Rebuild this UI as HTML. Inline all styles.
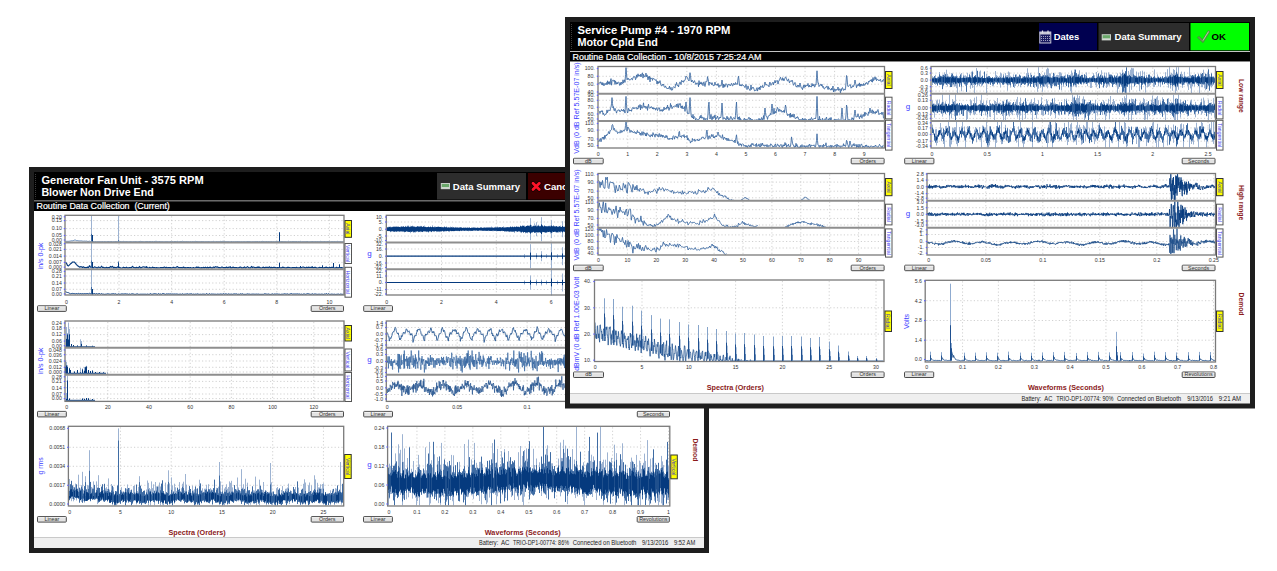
<!DOCTYPE html>
<html><head><meta charset="utf-8"><title>Vibration Data</title>
<style>html,body{margin:0;padding:0;background:#fff;width:1277px;height:571px;overflow:hidden;} svg{display:block;}</style>
</head><body><svg width="1277" height="571" viewBox="0 0 1277 571"><rect x="29" y="167" width="680" height="386" fill="#1e1e1e"/><rect x="34" y="172" width="670" height="28.5" fill="#000000"/><rect x="34" y="200.5" width="670" height="1" fill="#c4c4c4"/><rect x="34" y="201.5" width="670" height="9.5" fill="#000000"/><rect x="34" y="211" width="670" height="326" fill="#ffffff"/><rect x="34" y="537" width="670" height="1" fill="#c9c9c9"/><rect x="34" y="538" width="670" height="10" fill="#efefef"/><line x1="35.5" y1="174" x2="35.5" y2="198.5" stroke="#3c3c3c" stroke-width="1" stroke-dasharray="1,1"/><text x="41.4" y="184.3" font-family="Liberation Sans" font-size="11.1" fill="#ffffff" font-weight="bold" text-anchor="start" textLength="162.2" lengthAdjust="spacingAndGlyphs" xml:space="preserve">Generator Fan Unit - 3575 RPM</text><text x="41.4" y="196.4" font-family="Liberation Sans" font-size="11.1" fill="#ffffff" font-weight="bold" text-anchor="start" textLength="112.4" lengthAdjust="spacingAndGlyphs" xml:space="preserve">Blower Non Drive End</text><text x="36.5" y="209.3" font-family="Liberation Sans" font-size="8.9" fill="#ffffff" text-anchor="start" stroke="#ffffff" stroke-width="0.22" textLength="133.3" lengthAdjust="spacingAndGlyphs" xml:space="preserve">Routine Data Collection  (Current)</text><rect x="437" y="173" width="89" height="26.5" fill="#2d2d2d"/><rect x="440.8" y="183" width="9.2" height="6.2" fill="#c8d0c8"/><rect x="441.8" y="184" width="7.2" height="3.4" fill="#6aa86a"/><rect x="441.8" y="187.4" width="7.2" height="0.8" fill="#e8e8e8"/><text x="452.8" y="190.3" font-family="Liberation Sans" font-size="9.6" fill="#ffffff" font-weight="bold" text-anchor="start" xml:space="preserve">Data Summary</text><rect x="528" y="173" width="38" height="26.5" fill="#3b0000"/><path d="M533 183.3 L539.3 189.6 M539.3 183.3 L533 189.6" stroke="#100000" stroke-width="4.2" stroke-linecap="round"/><path d="M533 183.3 L539.3 189.6 M539.3 183.3 L533 189.6" stroke="#ff1428" stroke-width="2.8" stroke-linecap="round"/><text x="544" y="190.3" font-family="Liberation Sans" font-size="9.6" fill="#ffffff" font-weight="bold" text-anchor="start" xml:space="preserve">Cancel</text><rect x="65" y="215.3" width="279" height="79.7" fill="#ffffff"/><line x1="119" y1="216.3" x2="119" y2="294" stroke="#bdbdbd" stroke-width="0.7" stroke-dasharray="1.2,2.2"/><line x1="171.6" y1="216.3" x2="171.6" y2="294" stroke="#bdbdbd" stroke-width="0.7" stroke-dasharray="1.2,2.2"/><line x1="224.2" y1="216.3" x2="224.2" y2="294" stroke="#bdbdbd" stroke-width="0.7" stroke-dasharray="1.2,2.2"/><line x1="276.8" y1="216.3" x2="276.8" y2="294" stroke="#bdbdbd" stroke-width="0.7" stroke-dasharray="1.2,2.2"/><line x1="329.4" y1="216.3" x2="329.4" y2="294" stroke="#bdbdbd" stroke-width="0.7" stroke-dasharray="1.2,2.2"/><line x1="66" y1="220.6" x2="343" y2="220.6" stroke="#bdbdbd" stroke-width="0.7" stroke-dasharray="1.2,2.2"/><line x1="66" y1="228.6" x2="343" y2="228.6" stroke="#bdbdbd" stroke-width="0.7" stroke-dasharray="1.2,2.2"/><line x1="66" y1="235.5" x2="343" y2="235.5" stroke="#bdbdbd" stroke-width="0.7" stroke-dasharray="1.2,2.2"/><line x1="66" y1="249.4" x2="343" y2="249.4" stroke="#bdbdbd" stroke-width="0.7" stroke-dasharray="1.2,2.2"/><line x1="66" y1="256.1" x2="343" y2="256.1" stroke="#bdbdbd" stroke-width="0.7" stroke-dasharray="1.2,2.2"/><line x1="66" y1="262.4" x2="343" y2="262.4" stroke="#bdbdbd" stroke-width="0.7" stroke-dasharray="1.2,2.2"/><line x1="66" y1="276" x2="343" y2="276" stroke="#bdbdbd" stroke-width="0.7" stroke-dasharray="1.2,2.2"/><line x1="66" y1="283" x2="343" y2="283" stroke="#bdbdbd" stroke-width="0.7" stroke-dasharray="1.2,2.2"/><line x1="66" y1="289.3" x2="343" y2="289.3" stroke="#bdbdbd" stroke-width="0.7" stroke-dasharray="1.2,2.2"/><polyline points="65.5,241.7 66.5,241.3 67.5,241.3 68.5,241.3 69.5,241.2 70.5,241.0 71.5,240.8 72.5,240.8 73.5,240.5 74.5,240.1 75.5,240.1 76.5,240.6 77.5,240.6 78.5,240.8 79.5,240.9 80.5,240.9 81.5,240.9 82.5,241.1 83.5,241.2 84.5,241.1 85.5,241.2 86.5,241.1 87.5,241.4 88.5,241.4 89.5,241.2 90.5,241.5 91.5,241.7 92.5,241.6 93.5,241.5 94.5,241.8 95.5,241.6 96.5,241.8 97.5,241.7 98.5,241.7 99.5,241.7 100.5,241.7 101.5,241.7 102.5,241.6 103.5,241.8 104.5,241.6 105.5,241.7 106.5,241.8 107.5,241.6 108.5,241.5 109.5,241.7 110.5,241.6 111.5,241.5 112.5,241.8 113.5,241.7 114.5,241.7 115.5,241.5 116.5,241.6 117.5,241.7 118.5,241.7 119.5,241.6 120.5,241.5 121.5,241.7 122.5,241.7 123.5,241.4 124.5,241.7 125.5,241.7 126.5,241.6 127.5,241.7 128.5,241.8 129.5,241.7 130.5,241.6 131.5,241.7 132.5,241.8 133.5,241.7 134.5,241.7 135.5,241.6 136.5,241.7 137.5,241.8 138.5,241.7 139.5,241.5 140.5,241.4 141.5,241.5 142.5,241.6 143.5,241.7 144.5,241.8 145.5,241.6 146.5,241.5 147.5,241.5 148.5,241.7 149.5,241.5 150.5,241.5 151.5,241.7 152.5,241.5 153.5,241.8 154.5,241.5 155.5,241.4 156.5,241.4 157.5,241.7 158.5,241.7 159.5,241.5 160.5,241.7 161.5,241.7 162.5,241.7 163.5,241.8 164.5,241.8 165.5,241.7 166.5,241.7 167.5,241.7 168.5,241.8 169.5,241.8 170.5,241.5 171.5,241.7 172.5,241.6 173.5,241.8 174.5,241.5 175.5,241.5 176.5,241.7 177.5,241.4 178.5,241.8 179.5,241.7 180.5,241.5 181.5,241.5 182.5,241.3 183.5,241.6 184.5,241.7 185.5,241.7 186.5,241.6 187.5,241.7 188.5,241.7 189.5,241.8 190.5,241.6 191.5,241.8 192.5,241.6 193.5,241.7 194.5,241.7 195.5,241.4 196.5,241.5 197.5,241.6 198.5,241.7 199.5,241.7 200.5,241.7 201.5,241.5 202.5,241.6 203.5,241.6 204.5,241.8 205.5,241.7 206.5,241.7 207.5,241.7 208.5,241.6 209.5,241.7 210.5,241.8 211.5,241.7 212.5,241.7 213.5,241.4 214.5,241.8 215.5,241.8 216.5,241.6 217.5,241.7 218.5,241.7 219.5,241.7 220.5,241.4 221.5,241.6 222.5,241.4 223.5,241.4 224.5,241.6 225.5,241.7 226.5,241.7 227.5,241.7 228.5,241.7 229.5,241.8 230.5,241.8 231.5,241.5 232.5,241.8 233.5,241.7 234.5,241.8 235.5,241.7 236.5,241.7 237.5,241.6 238.5,241.7 239.5,241.7 240.5,241.8 241.5,241.7 242.5,241.8 243.5,241.7 244.5,241.7 245.5,241.8 246.5,241.7 247.5,241.5 248.5,241.6 249.5,241.6 250.5,241.7 251.5,241.8 252.5,241.7 253.5,241.7 254.5,241.7 255.5,241.6 256.5,241.6 257.5,241.5 258.5,241.8 259.5,241.6 260.5,241.8 261.5,241.5 262.5,241.4 263.5,241.5 264.5,241.7 265.5,241.7 266.5,241.5 267.5,241.7 268.5,241.6 269.5,241.7 270.5,241.7 271.5,241.6 272.5,241.8 273.5,241.7 274.5,241.8 275.5,241.7 276.5,241.6 277.5,241.6 278.5,241.7 279.5,241.6 280.5,241.7 281.5,241.5 282.5,241.6 283.5,241.7 284.5,241.7 285.5,241.7 286.5,241.8 287.5,241.8 288.5,241.3 289.5,241.8 290.5,241.6 291.5,241.7 292.5,241.5 293.5,241.5 294.5,241.6 295.5,241.6 296.5,241.5 297.5,241.8 298.5,241.6 299.5,241.7 300.5,241.4 301.5,241.8 302.5,241.7 303.5,241.7 304.5,241.7 305.5,241.7 306.5,241.6 307.5,241.5 308.5,241.8 309.5,241.8 310.5,241.7 311.5,241.6 312.5,241.5 313.5,241.7 314.5,241.7 315.5,241.6 316.5,241.7 317.5,241.6 318.5,241.7 319.5,241.7 320.5,241.4 321.5,241.6 322.5,241.7 323.5,241.7 324.5,241.5 325.5,241.7 326.5,241.7 327.5,241.5 328.5,241.6 329.5,241.7 330.5,241.8 331.5,241.6 332.5,241.6 333.5,241.7 334.5,241.6 335.5,241.7 336.5,241.7 337.5,241.4 338.5,241.7 339.5,241.7 340.5,241.7 341.5,241.8 342.5,241.8 343.5,241.7" fill="none" stroke="#3f6ca4" stroke-width="0.8" stroke-linejoin="round"/><line x1="91.5" y1="216" x2="91.5" y2="241.5" stroke="#9db3d2" stroke-width="1"/><line x1="91.5" y1="233.85" x2="91.5" y2="241.5" stroke="#3f6ca4" stroke-width="1"/><line x1="118.5" y1="216" x2="118.5" y2="241.5" stroke="#9db3d2" stroke-width="1"/><line x1="118.5" y1="240.22" x2="118.5" y2="241.5" stroke="#3f6ca4" stroke-width="1"/><line x1="279.5" y1="232" x2="279.5" y2="241.5" stroke="#3f6ca4" stroke-width="1"/><line x1="279.5" y1="232.95" x2="279.5" y2="241.5" stroke="#053a7e" stroke-width="1"/><line x1="92.5" y1="235" x2="92.5" y2="241.5" stroke="#3f6ca4" stroke-width="1"/><line x1="92.5" y1="235" x2="92.5" y2="241.5" stroke="#053a7e" stroke-width="1"/><polyline points="65.5,262.6 66.5,263.2 67.5,265.5 68.5,265.9 69.5,264.9 70.5,263.8 71.5,263.2 72.5,262.0 73.5,262.0 74.5,262.2 75.5,263.4 76.5,264.6 77.5,265.7 78.5,266.2 79.5,267.1 80.5,266.7 81.5,266.8 82.5,267.4 83.5,266.8 84.5,267.6 85.5,267.5 86.5,267.7 87.5,267.1 88.5,267.6 89.5,265.7 90.5,267.1 91.5,267.7 92.5,267.7 93.5,267.8 94.5,266.8 95.5,267.2 96.5,267.6 97.5,267.9 98.5,266.9 99.5,267.5 100.5,267.8 101.5,266.2 102.5,267.5 103.5,267.4 104.5,267.9 105.5,267.9 106.5,267.4 107.5,267.9 108.5,267.5 109.5,267.8 110.5,266.4 111.5,267.2 112.5,266.3 113.5,267.9 114.5,267.4 115.5,267.6 116.5,267.9 117.5,266.8 118.5,267.4 119.5,267.4 120.5,267.9 121.5,268.0 122.5,267.8 123.5,267.2 124.5,267.7 125.5,267.8 126.5,267.2 127.5,267.9 128.5,267.9 129.5,267.5 130.5,267.7 131.5,267.6 132.5,266.3 133.5,267.4 134.5,267.7 135.5,267.9 136.5,267.4 137.5,267.7 138.5,267.8 139.5,266.5 140.5,267.9 141.5,267.7 142.5,267.0 143.5,266.9 144.5,267.1 145.5,267.3 146.5,266.7 147.5,267.7 148.5,268.0 149.5,267.4 150.5,267.9 151.5,267.9 152.5,267.1 153.5,267.7 154.5,267.7 155.5,267.8 156.5,267.7 157.5,267.9 158.5,267.8 159.5,268.0 160.5,267.5 161.5,267.7 162.5,267.7 163.5,267.6 164.5,267.0 165.5,267.9 166.5,267.4 167.5,267.8 168.5,267.7 169.5,267.6 170.5,267.9 171.5,267.8 172.5,267.6 173.5,267.2 174.5,267.6 175.5,267.9 176.5,267.0 177.5,266.6 178.5,267.7 179.5,267.7 180.5,267.7 181.5,267.7 182.5,267.8 183.5,267.1 184.5,267.8 185.5,267.7 186.5,267.8 187.5,267.5 188.5,267.7 189.5,267.9 190.5,267.5 191.5,268.0 192.5,267.9 193.5,267.5 194.5,268.0 195.5,267.7 196.5,267.1 197.5,267.4 198.5,267.2 199.5,267.6 200.5,267.9 201.5,267.7 202.5,267.8 203.5,267.4 204.5,267.9 205.5,267.1 206.5,268.0 207.5,267.2 208.5,267.9 209.5,267.3 210.5,267.2 211.5,267.9 212.5,268.0 213.5,267.0 214.5,267.6 215.5,266.7 216.5,267.1 217.5,266.9 218.5,267.6 219.5,267.7 220.5,267.9 221.5,267.1 222.5,267.2 223.5,267.7 224.5,267.5 225.5,267.8 226.5,267.1 227.5,267.8 228.5,267.4 229.5,267.0 230.5,267.7 231.5,267.9 232.5,267.4 233.5,267.2 234.5,267.7 235.5,267.6 236.5,267.7 237.5,267.8 238.5,267.8 239.5,267.4 240.5,267.0 241.5,267.8 242.5,267.9 243.5,267.7 244.5,266.9 245.5,268.0 246.5,267.4 247.5,266.6 248.5,267.6 249.5,267.9 250.5,267.9 251.5,266.5 252.5,267.6 253.5,267.0 254.5,267.6 255.5,267.6 256.5,267.6 257.5,267.1 258.5,267.4 259.5,267.2 260.5,267.9 261.5,268.0 262.5,267.5 263.5,267.1 264.5,267.9 265.5,267.4 266.5,267.3 267.5,267.4 268.5,267.7 269.5,266.8 270.5,267.9 271.5,267.4 272.5,267.8 273.5,267.3 274.5,267.4 275.5,267.6 276.5,267.8 277.5,267.6 278.5,267.8 279.5,267.3 280.5,267.9 281.5,267.8 282.5,267.2 283.5,267.3 284.5,267.6 285.5,267.8 286.5,267.9 287.5,267.4 288.5,267.4 289.5,267.5 290.5,267.8 291.5,267.8 292.5,267.6 293.5,267.6 294.5,267.5 295.5,267.9 296.5,267.4 297.5,267.8 298.5,267.9 299.5,267.7 300.5,268.0 301.5,267.5 302.5,267.2 303.5,267.1 304.5,267.5 305.5,267.9 306.5,267.2 307.5,267.6 308.5,267.2 309.5,267.4 310.5,267.5 311.5,267.1 312.5,267.5 313.5,267.7 314.5,267.4 315.5,267.3 316.5,267.9 317.5,268.0 318.5,267.7 319.5,267.4 320.5,267.5 321.5,267.5 322.5,267.7 323.5,267.8 324.5,267.7 325.5,267.4 326.5,267.2 327.5,267.7 328.5,267.9 329.5,267.2 330.5,267.7 331.5,267.4 332.5,267.3 333.5,267.4 334.5,268.0 335.5,267.9 336.5,267.4 337.5,267.8 338.5,267.8 339.5,267.2 340.5,267.8 341.5,267.6 342.5,268.0 343.5,267.6" fill="none" stroke="#053a7e" stroke-width="1.2" stroke-linejoin="round"/><line x1="91.5" y1="243" x2="91.5" y2="268" stroke="#9db3d2" stroke-width="1"/><line x1="91.5" y1="260.5" x2="91.5" y2="268" stroke="#3f6ca4" stroke-width="1"/><line x1="92.5" y1="262" x2="92.5" y2="268" stroke="#3f6ca4" stroke-width="1"/><line x1="92.5" y1="262" x2="92.5" y2="268" stroke="#053a7e" stroke-width="1"/><line x1="118.5" y1="261.5" x2="118.5" y2="268" stroke="#3f6ca4" stroke-width="1"/><line x1="118.5" y1="262.8" x2="118.5" y2="268" stroke="#053a7e" stroke-width="1"/><line x1="279.5" y1="262.5" x2="279.5" y2="268" stroke="#3f6ca4" stroke-width="1"/><line x1="279.5" y1="263.05" x2="279.5" y2="268" stroke="#053a7e" stroke-width="1"/><line x1="333.5" y1="263" x2="333.5" y2="268" stroke="#3f6ca4" stroke-width="1"/><line x1="333.5" y1="263" x2="333.5" y2="268" stroke="#053a7e" stroke-width="1"/><line x1="300.5" y1="266" x2="300.5" y2="268" stroke="#3f6ca4" stroke-width="1"/><line x1="300.5" y1="266" x2="300.5" y2="268" stroke="#053a7e" stroke-width="1"/><line x1="312.5" y1="266.5" x2="312.5" y2="268" stroke="#3f6ca4" stroke-width="1"/><line x1="312.5" y1="266.5" x2="312.5" y2="268" stroke="#053a7e" stroke-width="1"/><line x1="322.5" y1="265.5" x2="322.5" y2="268" stroke="#3f6ca4" stroke-width="1"/><line x1="322.5" y1="265.5" x2="322.5" y2="268" stroke="#053a7e" stroke-width="1"/><line x1="339.5" y1="264.5" x2="339.5" y2="268" stroke="#3f6ca4" stroke-width="1"/><line x1="339.5" y1="264.5" x2="339.5" y2="268" stroke="#053a7e" stroke-width="1"/><line x1="146.5" y1="266.5" x2="146.5" y2="268" stroke="#3f6ca4" stroke-width="1"/><line x1="146.5" y1="266.5" x2="146.5" y2="268" stroke="#053a7e" stroke-width="1"/><line x1="170.5" y1="267" x2="170.5" y2="268" stroke="#3f6ca4" stroke-width="1"/><line x1="170.5" y1="267" x2="170.5" y2="268" stroke="#053a7e" stroke-width="1"/><line x1="230.5" y1="266.5" x2="230.5" y2="268" stroke="#3f6ca4" stroke-width="1"/><line x1="230.5" y1="266.5" x2="230.5" y2="268" stroke="#053a7e" stroke-width="1"/><line x1="258.5" y1="266.8" x2="258.5" y2="268" stroke="#3f6ca4" stroke-width="1"/><line x1="258.5" y1="266.8" x2="258.5" y2="268" stroke="#053a7e" stroke-width="1"/><polyline points="65.5,291.6 66.5,292.2 67.5,292.5 68.5,292.7 69.5,293.3 70.5,293.8 71.5,293.5 72.5,293.4 73.5,293.5 74.5,293.6 75.5,293.8 76.5,293.5 77.5,293.8 78.5,293.4 79.5,293.8 80.5,293.5 81.5,293.8 82.5,293.6 83.5,293.8 84.5,293.6 85.5,293.7 86.5,293.6 87.5,293.5 88.5,293.8 89.5,293.3 90.5,293.7 91.5,293.5 92.5,293.7 93.5,293.7 94.5,293.5 95.5,294.0 96.5,293.6 97.5,294.0 98.5,293.7 99.5,293.5 100.5,294.2 101.5,293.6 102.5,294.1 103.5,294.1 104.5,294.3 105.5,294.2 106.5,294.1 107.5,293.8 108.5,293.9 109.5,294.1 110.5,294.2 111.5,293.9 112.5,293.8 113.5,293.7 114.5,294.0 115.5,293.8 116.5,294.3 117.5,294.3 118.5,293.9 119.5,294.2 120.5,294.2 121.5,293.9 122.5,293.9 123.5,294.0 124.5,293.9 125.5,293.8 126.5,294.0 127.5,294.0 128.5,294.3 129.5,294.0 130.5,294.3 131.5,293.9 132.5,293.8 133.5,294.0 134.5,294.3 135.5,294.3 136.5,294.0 137.5,293.9 138.5,294.3 139.5,294.3 140.5,294.2 141.5,294.2 142.5,294.2 143.5,294.2 144.5,294.2 145.5,294.2 146.5,294.3 147.5,294.1 148.5,294.3 149.5,294.2 150.5,293.6 151.5,294.2 152.5,294.2 153.5,293.9 154.5,293.7 155.5,293.8 156.5,294.0 157.5,294.3 158.5,293.6 159.5,294.2 160.5,294.0 161.5,294.3 162.5,293.6 163.5,293.6 164.5,294.0 165.5,294.3 166.5,293.9 167.5,294.0 168.5,293.9 169.5,294.0 170.5,293.9 171.5,294.1 172.5,294.0 173.5,294.1 174.5,294.0 175.5,294.1 176.5,294.0 177.5,294.1 178.5,294.3 179.5,294.2 180.5,294.1 181.5,294.3 182.5,293.8 183.5,294.3 184.5,294.2 185.5,294.1 186.5,294.0 187.5,293.8 188.5,294.2 189.5,294.0 190.5,293.9 191.5,293.8 192.5,294.3 193.5,294.1 194.5,294.3 195.5,294.1 196.5,294.2 197.5,293.9 198.5,294.2 199.5,294.3 200.5,294.2 201.5,294.3 202.5,294.1 203.5,294.1 204.5,294.2 205.5,294.3 206.5,293.6 207.5,294.2 208.5,294.3 209.5,293.7 210.5,294.3 211.5,294.0 212.5,294.1 213.5,294.1 214.5,294.2 215.5,294.2 216.5,294.3 217.5,294.1 218.5,294.2 219.5,294.2 220.5,294.0 221.5,294.1 222.5,294.2 223.5,293.7 224.5,294.2 225.5,293.9 226.5,294.0 227.5,294.3 228.5,293.9 229.5,294.2 230.5,294.2 231.5,294.1 232.5,294.3 233.5,294.0 234.5,293.9 235.5,294.0 236.5,293.9 237.5,294.3 238.5,294.2 239.5,294.3 240.5,293.8 241.5,294.1 242.5,293.8 243.5,294.3 244.5,294.3 245.5,294.3 246.5,294.2 247.5,293.9 248.5,294.1 249.5,294.1 250.5,294.3 251.5,294.2 252.5,294.1 253.5,294.1 254.5,294.2 255.5,294.2 256.5,294.1 257.5,294.2 258.5,294.1 259.5,294.3 260.5,294.3 261.5,294.3 262.5,294.3 263.5,294.3 264.5,293.8 265.5,293.9 266.5,294.1 267.5,294.2 268.5,294.0 269.5,294.3 270.5,294.4 271.5,294.2 272.5,293.9 273.5,294.3 274.5,294.0 275.5,294.1 276.5,294.0 277.5,294.0 278.5,294.2 279.5,294.2 280.5,294.4 281.5,294.2 282.5,294.2 283.5,294.1 284.5,293.8 285.5,294.0 286.5,294.1 287.5,293.9 288.5,294.3 289.5,294.2 290.5,293.8 291.5,293.6 292.5,294.1 293.5,294.0 294.5,294.0 295.5,294.0 296.5,294.0 297.5,293.9 298.5,294.1 299.5,294.0 300.5,294.3 301.5,294.1 302.5,294.4 303.5,294.0 304.5,294.0 305.5,294.3 306.5,294.0 307.5,293.7 308.5,293.8 309.5,294.1 310.5,294.3 311.5,294.2 312.5,293.8 313.5,294.3 314.5,294.0 315.5,294.0 316.5,294.2 317.5,294.3 318.5,294.2 319.5,294.2 320.5,294.3 321.5,294.1 322.5,294.2 323.5,294.4 324.5,294.0 325.5,294.1 326.5,293.6 327.5,294.3 328.5,293.7 329.5,294.3 330.5,294.3 331.5,294.1 332.5,294.2 333.5,294.3 334.5,294.2 335.5,294.4 336.5,294.3 337.5,294.2 338.5,294.1 339.5,294.4 340.5,294.1 341.5,294.2 342.5,294.3 343.5,294.2" fill="none" stroke="#053a7e" stroke-width="1" stroke-linejoin="round"/><line x1="91.5" y1="270" x2="91.5" y2="294.3" stroke="#9db3d2" stroke-width="1"/><line x1="91.5" y1="287.01" x2="91.5" y2="294.3" stroke="#3f6ca4" stroke-width="1"/><line x1="92.5" y1="289" x2="92.5" y2="294.3" stroke="#3f6ca4" stroke-width="1"/><line x1="92.5" y1="289" x2="92.5" y2="294.3" stroke="#053a7e" stroke-width="1"/><rect x="65" y="215.3" width="279" height="79.7" fill="none" stroke="#7a7a7a" stroke-width="1.3"/><line x1="65" y1="242.4" x2="344" y2="242.4" stroke="#8e8e8e" stroke-width="2"/><line x1="65" y1="269.3" x2="344" y2="269.3" stroke="#8e8e8e" stroke-width="2"/><text x="61.8" y="218.6" font-family="Liberation Sans" font-size="5.2" fill="#333" text-anchor="end" xml:space="preserve">0.20</text><rect x="63.8" y="216.2" width="1.4" height="1.2" fill="#6060ff"/><text x="61.8" y="222.4" font-family="Liberation Sans" font-size="5.2" fill="#333" text-anchor="end" xml:space="preserve">0.15</text><rect x="63.8" y="220" width="1.4" height="1.2" fill="#6060ff"/><text x="61.8" y="230.4" font-family="Liberation Sans" font-size="5.2" fill="#333" text-anchor="end" xml:space="preserve">0.10</text><rect x="63.8" y="228" width="1.4" height="1.2" fill="#6060ff"/><text x="61.8" y="237.3" font-family="Liberation Sans" font-size="5.2" fill="#333" text-anchor="end" xml:space="preserve">0.05</text><rect x="63.8" y="234.9" width="1.4" height="1.2" fill="#6060ff"/><text x="61.8" y="241.8" font-family="Liberation Sans" font-size="5.2" fill="#333" text-anchor="end" xml:space="preserve">0.00</text><rect x="63.8" y="239.4" width="1.4" height="1.2" fill="#6060ff"/><text x="61.8" y="245.5" font-family="Liberation Sans" font-size="5.2" fill="#333" text-anchor="end" xml:space="preserve">0.028</text><rect x="63.8" y="243.1" width="1.4" height="1.2" fill="#6060ff"/><text x="61.8" y="251.2" font-family="Liberation Sans" font-size="5.2" fill="#333" text-anchor="end" xml:space="preserve">0.021</text><rect x="63.8" y="248.8" width="1.4" height="1.2" fill="#6060ff"/><text x="61.8" y="257.9" font-family="Liberation Sans" font-size="5.2" fill="#333" text-anchor="end" xml:space="preserve">0.014</text><rect x="63.8" y="255.5" width="1.4" height="1.2" fill="#6060ff"/><text x="61.8" y="264.2" font-family="Liberation Sans" font-size="5.2" fill="#333" text-anchor="end" xml:space="preserve">0.007</text><rect x="63.8" y="261.8" width="1.4" height="1.2" fill="#6060ff"/><text x="61.8" y="269" font-family="Liberation Sans" font-size="5.2" fill="#333" text-anchor="end" xml:space="preserve">0.000</text><rect x="63.8" y="266.6" width="1.4" height="1.2" fill="#6060ff"/><text x="61.8" y="273.2" font-family="Liberation Sans" font-size="5.2" fill="#333" text-anchor="end" xml:space="preserve">0.28</text><rect x="63.8" y="270.8" width="1.4" height="1.2" fill="#6060ff"/><text x="61.8" y="277.8" font-family="Liberation Sans" font-size="5.2" fill="#333" text-anchor="end" xml:space="preserve">0.21</text><rect x="63.8" y="275.4" width="1.4" height="1.2" fill="#6060ff"/><text x="61.8" y="284.8" font-family="Liberation Sans" font-size="5.2" fill="#333" text-anchor="end" xml:space="preserve">0.14</text><rect x="63.8" y="282.4" width="1.4" height="1.2" fill="#6060ff"/><text x="61.8" y="291.1" font-family="Liberation Sans" font-size="5.2" fill="#333" text-anchor="end" xml:space="preserve">0.07</text><rect x="63.8" y="288.7" width="1.4" height="1.2" fill="#6060ff"/><text x="61.8" y="295.7" font-family="Liberation Sans" font-size="5.2" fill="#333" text-anchor="end" xml:space="preserve">0.00</text><rect x="63.8" y="293.3" width="1.4" height="1.2" fill="#6060ff"/><text x="66.4" y="303.8" font-family="Liberation Sans" font-size="5.2" fill="#333" text-anchor="middle" xml:space="preserve">0</text><text x="119" y="303.8" font-family="Liberation Sans" font-size="5.2" fill="#333" text-anchor="middle" xml:space="preserve">2</text><text x="171.6" y="303.8" font-family="Liberation Sans" font-size="5.2" fill="#333" text-anchor="middle" xml:space="preserve">4</text><text x="224.2" y="303.8" font-family="Liberation Sans" font-size="5.2" fill="#333" text-anchor="middle" xml:space="preserve">6</text><text x="276.8" y="303.8" font-family="Liberation Sans" font-size="5.2" fill="#333" text-anchor="middle" xml:space="preserve">8</text><text x="329.4" y="303.8" font-family="Liberation Sans" font-size="5.2" fill="#333" text-anchor="middle" xml:space="preserve">10</text><rect x="345" y="220.5" width="6.5" height="16.8" fill="#ffff00" stroke="#333" stroke-width="1"/><text x="346.35" y="228.9" font-family="Liberation Sans" font-size="5.2" fill="#2828c8" text-anchor="middle" transform="rotate(90 346.35 228.9)" xml:space="preserve">Axial</text><rect x="345" y="243.5" width="6.5" height="20" fill="#ffffff" stroke="#555" stroke-width="1"/><text x="346.35" y="253.5" font-family="Liberation Sans" font-size="5.2" fill="#3c3cf0" text-anchor="middle" transform="rotate(90 346.35 253.5)" xml:space="preserve">Vertical</text><rect x="345" y="267.3" width="6.5" height="29.9" fill="#ffffff" stroke="#555" stroke-width="1"/><text x="346.35" y="282.25" font-family="Liberation Sans" font-size="5.2" fill="#3c3cf0" text-anchor="middle" transform="rotate(90 346.35 282.25)" xml:space="preserve">Horizontal</text><rect x="37.5" y="305.8" width="28.8" height="5.6" fill="#e2e2e2" stroke="#4a4a4a" stroke-width="1" rx="0.7"/><line x1="38.2" y1="306.8" x2="65.6" y2="306.8" stroke="#f8f8f8" stroke-width="0.8"/><text x="51.9" y="310.3" font-family="Liberation Sans" font-size="5.4" fill="#333" text-anchor="middle" xml:space="preserve">Linear</text><rect x="311.2" y="305.8" width="32.3" height="5.6" fill="#e2e2e2" stroke="#4a4a4a" stroke-width="1" rx="0.7"/><line x1="311.9" y1="306.8" x2="342.8" y2="306.8" stroke="#f8f8f8" stroke-width="0.8"/><text x="327.35" y="310.3" font-family="Liberation Sans" font-size="5.4" fill="#333" text-anchor="middle" xml:space="preserve">Orders</text><text x="42.6" y="256" font-family="Liberation Sans" font-size="7.3" fill="#3c3cff" text-anchor="middle" transform="rotate(-90 42.6 256)" textLength="26.8" lengthAdjust="spacingAndGlyphs" xml:space="preserve">in/s 0-pk</text><rect x="386.3" y="215.3" width="283.7" height="79.7" fill="#ffffff"/><line x1="441.5" y1="216.3" x2="441.5" y2="294" stroke="#bdbdbd" stroke-width="0.7" stroke-dasharray="1.2,2.2"/><line x1="496.3" y1="216.3" x2="496.3" y2="294" stroke="#bdbdbd" stroke-width="0.7" stroke-dasharray="1.2,2.2"/><line x1="551.1" y1="216.3" x2="551.1" y2="294" stroke="#bdbdbd" stroke-width="0.7" stroke-dasharray="1.2,2.2"/><line x1="605.9" y1="216.3" x2="605.9" y2="294" stroke="#bdbdbd" stroke-width="0.7" stroke-dasharray="1.2,2.2"/><line x1="660.7" y1="216.3" x2="660.7" y2="294" stroke="#bdbdbd" stroke-width="0.7" stroke-dasharray="1.2,2.2"/><line x1="387.3" y1="222" x2="669" y2="222" stroke="#bdbdbd" stroke-width="0.7" stroke-dasharray="1.2,2.2"/><line x1="387.3" y1="229.2" x2="669" y2="229.2" stroke="#bdbdbd" stroke-width="0.7" stroke-dasharray="1.2,2.2"/><line x1="387.3" y1="236" x2="669" y2="236" stroke="#bdbdbd" stroke-width="0.7" stroke-dasharray="1.2,2.2"/><line x1="387.3" y1="249" x2="669" y2="249" stroke="#bdbdbd" stroke-width="0.7" stroke-dasharray="1.2,2.2"/><line x1="387.3" y1="256.2" x2="669" y2="256.2" stroke="#bdbdbd" stroke-width="0.7" stroke-dasharray="1.2,2.2"/><line x1="387.3" y1="263" x2="669" y2="263" stroke="#bdbdbd" stroke-width="0.7" stroke-dasharray="1.2,2.2"/><line x1="387.3" y1="276" x2="669" y2="276" stroke="#bdbdbd" stroke-width="0.7" stroke-dasharray="1.2,2.2"/><line x1="387.3" y1="282.5" x2="669" y2="282.5" stroke="#bdbdbd" stroke-width="0.7" stroke-dasharray="1.2,2.2"/><line x1="387.3" y1="289.5" x2="669" y2="289.5" stroke="#bdbdbd" stroke-width="0.7" stroke-dasharray="1.2,2.2"/><path d="M387.5 227.3V231.1M388.5 226.7V231.2M389.5 226.9V231.3M390.5 226.4V232.2M391.5 226.9V231.7M392.5 226.7V231.3M393.5 226.6V231.6M394.5 226.6V232M395.5 226.4V231.4M396.5 226.4V231.7M397.5 226.7V231.7M398.5 226.4V231.4M399.5 226.9V231.7M400.5 226.5V231.5M401.5 226V231.5M402.5 226.6V231.9M403.5 226V231.7M404.5 226.8V232.4M405.5 225.9V231.8M406.5 226.4V231.4M407.5 225.6V231.9M408.5 225.5V231.8M409.5 226.5V232M410.5 225.8V233.2M411.5 226.4V232M412.5 225.6V231.6M413.5 226.6V232.8M414.5 226V232.5M415.5 226.6V232.6M416.5 226.4V231.9M417.5 226.1V231.3M418.5 226.5V232.2M419.5 226.2V231.8M420.5 225.9V232.2M421.5 225.9V231.8M422.5 226.9V232.1M423.5 226V231.3M424.5 225.6V231.3M425.5 226.6V231.6M426.5 227.1V232.1M427.5 227V231.7M428.5 226.6V232.7M429.5 227.2V231.5M430.5 226.3V231.4M431.5 227.1V232.2M432.5 225.3V231.3M433.5 227V231.5M434.5 226.3V231.5M435.5 226.5V231.3M436.5 226.9V232.1M437.5 226.8V231.6M438.5 226.4V231.5M439.5 226.8V232.1M440.5 226.9V231.6M441.5 227.1V231.4M442.5 227V231.2M443.5 227.3V231.7M444.5 226.1V231.4M445.5 227.2V231.5M446.5 226.4V231.5M447.5 227.6V231M448.5 227.1V231.4M449.5 227.5V232.1M450.5 226.6V231.1M451.5 227.3V231.2M452.5 226.7V231.2M453.5 227.2V231.1M454.5 227.7V231.2M455.5 226.9V230.8M456.5 227.6V231M457.5 227.4V231.1M458.5 227.5V231.1M459.5 227.5V231.3M460.5 227.1V230.7M461.5 227.5V231.1M462.5 227.9V230.8M463.5 227.7V231M464.5 227.7V230.9M465.5 227.6V230.9M466.5 227.4V230.7M467.5 227.5V230.8M468.5 227.8V231.3M469.5 227.5V230.9M470.5 228V231.1M471.5 227.4V230.8M472.5 227.5V230.8M473.5 227.3V230.8M474.5 227.5V230.7M475.5 227.2V230.9M476.5 227.8V230.6M477.5 227.6V231M478.5 227.7V230.8M479.5 227.9V230.5M480.5 227.4V230.8M481.5 227.2V230.7M482.5 227.8V230.9M483.5 227.5V231M484.5 227.5V231M485.5 227.2V231M486.5 227.6V231M487.5 227.5V230.9M488.5 227.5V231.1M489.5 227.4V230.9M490.5 227.5V230.9M491.5 226.5V231M492.5 227.5V231.2M493.5 227.7V231.2M494.5 227.4V230.9M495.5 226.7V230.9M496.5 227.4V231.4M497.5 226.5V231.2M498.5 227.5V231.1M499.5 227.1V231.1M500.5 227.3V231.3M501.5 227.5V230.9M502.5 227.1V231.2M503.5 226.3V231M504.5 227.4V231.4M505.5 227.4V231.5M506.5 227.1V231.6M507.5 227.2V231.4M508.5 227.3V231.4M509.5 227V232.1M510.5 226V231.6M511.5 226.9V231.7M512.5 226.3V231.6M513.5 226.9V231.8M514.5 226.4V233M515.5 226.8V231.3M516.5 226V232.1M517.5 226.7V231.8M518.5 226.8V231.4M519.5 226.8V231.6M520.5 225.4V232.6M521.5 226.1V233.1M522.5 225.1V232M523.5 225.4V232.8M524.5 225.5V232.1M525.5 226.6V233.4M526.5 225.9V232.7M527.5 225.3V233.3M528.5 225.7V232.1M529.5 225.2V232.7M530.5 225.2V233.7M531.5 225V232.9M532.5 226.1V233M533.5 225.5V232.1M534.5 223.4V232.9M535.5 224.9V232.9M536.5 226.1V232.3M537.5 225.4V232.5M538.5 224.7V232.5M539.5 225.8V232.7M540.5 225.8V232.7M541.5 226V233.8M542.5 225V232.5M543.5 226.5V232.2M544.5 225V232.8M545.5 226V232.7M546.5 226.2V232.8M547.5 226V232.4M548.5 225.8V232.1M549.5 225.7V232.1M550.5 225.5V233.5M551.5 226.2V232.8M552.5 226.3V232.7M553.5 225.1V232M554.5 226.4V231.9M555.5 226.2V232.3M556.5 226.1V232.8M557.5 226.5V232.6M558.5 225.9V232.7M559.5 226.2V232.3M560.5 225.6V232.8M561.5 226.8V231.9M562.5 226.7V231.9M563.5 226.8V231.6M564.5 226.6V232.2M565.5 226.3V232" stroke="#9db3d2" stroke-width="1" fill="none"/><path d="M387.5 227.4V231M388.5 227.3V231M389.5 226.9V231M390.5 227.2V231.5M391.5 227.3V231.2M392.5 227.1V231.2M393.5 226.8V231.5M394.5 226.8V231.6M395.5 226.9V231.4M396.5 226.8V231.6M397.5 226.8V231.2M398.5 226.9V231.3M399.5 227V231.5M400.5 227.2V231.3M401.5 226.8V231.3M402.5 226.8V231.3M403.5 226.6V231.4M404.5 227V231.8M405.5 226.6V231.8M406.5 227V231.3M407.5 226.5V231.5M408.5 226.5V231.8M409.5 227.1V231.9M410.5 226.9V231.7M411.5 226.4V231.8M412.5 226.4V231.4M413.5 226.6V231.8M414.5 227V231.9M415.5 227.1V231.6M416.5 227V231.4M417.5 226.4V231.3M418.5 226.6V231.7M419.5 226.8V231.7M420.5 226.6V231.3M421.5 226.5V231.6M422.5 226.9V231.9M423.5 226.5V231.3M424.5 227V231.3M425.5 227V231.3M426.5 227.2V231.5M427.5 227.1V231.5M428.5 226.8V231.8M429.5 227.2V231.2M430.5 226.9V231.3M431.5 227.2V231.8M432.5 226.8V231.1M433.5 227.2V231.3M434.5 227.2V231.3M435.5 227.2V231M436.5 227V231.2M437.5 226.9V231.4M438.5 226.9V231.4M439.5 227V231.3M440.5 227V231.3M441.5 227.2V231.3M442.5 227.3V230.9M443.5 227.4V231.3M444.5 227.1V231.2M445.5 227.3V230.9M446.5 227.2V231M447.5 227.6V230.9M448.5 227.5V231.2M449.5 227.6V230.9M450.5 227.5V230.8M451.5 227.3V231.1M452.5 227.6V231M453.5 227.4V231.1M454.5 227.7V231M455.5 227.6V230.8M456.5 227.6V230.8M457.5 227.6V230.8M458.5 227.8V230.8M459.5 227.6V231M460.5 227.5V230.6M461.5 227.6V230.8M462.5 227.9V230.5M463.5 227.7V230.5M464.5 227.8V230.8M465.5 227.7V230.5M466.5 228V230.6M467.5 227.7V230.8M468.5 227.8V230.7M469.5 227.6V230.6M470.5 228V230.7M471.5 227.9V230.8M472.5 227.8V230.8M473.5 227.7V230.4M474.5 227.7V230.4M475.5 228V230.5M476.5 227.9V230.4M477.5 227.7V230.7M478.5 227.9V230.7M479.5 227.9V230.4M480.5 227.6V230.4M481.5 227.7V230.5M482.5 227.9V230.7M483.5 227.8V230.7M484.5 227.6V230.6M485.5 227.9V230.7M486.5 227.6V230.8M487.5 227.6V230.8M488.5 227.6V230.5M489.5 227.6V230.8M490.5 227.6V230.9M491.5 227.6V230.9M492.5 227.6V230.7M493.5 227.8V230.6M494.5 227.6V230.8M495.5 227.5V230.8M496.5 227.5V230.8M497.5 227.4V231M498.5 227.5V231M499.5 227.3V231M500.5 227.3V231M501.5 227.6V230.8M502.5 227.2V230.8M503.5 227.5V231M504.5 227.6V231.3M505.5 227.5V231.2M506.5 227.4V231.3M507.5 227.2V231.2M508.5 227.3V231.4M509.5 227.4V231.5M510.5 227V231.4M511.5 227.2V231.5M512.5 226.9V231.6M513.5 227.2V231.5M514.5 226.9V231.5M515.5 227.1V231.1M516.5 226.8V231.1M517.5 226.9V231.7M518.5 226.8V231.3M519.5 227.2V231.3M520.5 226.1V231.7M521.5 226.5V232.2M522.5 226.1V231.7M523.5 226V232.4M524.5 226.6V232M525.5 226.7V232.4M526.5 226V232.5M527.5 225.8V232.4M528.5 225.8V232.1M529.5 226.2V232.3M530.5 225.9V232.5M531.5 226.6V232.4M532.5 226.6V232M533.5 226.1V231.8M534.5 226.1V232.6M535.5 225.9V232.4M536.5 226.4V231.8M537.5 226.2V232.3M538.5 225.7V232.3M539.5 226.4V232M540.5 226.3V232.6M541.5 226.1V232M542.5 225.8V231.9M543.5 226.5V232M544.5 226.1V232M545.5 226.3V232.5M546.5 226.4V232.3M547.5 226.5V231.8M548.5 226.3V232M549.5 226.3V231.7M550.5 226.5V232.2M551.5 226.4V232.3M552.5 226.3V231.6M553.5 226.2V232M554.5 226.4V231.7M555.5 226.6V231.7M556.5 226.2V232.1M557.5 226.8V232.2M558.5 227V231.6M559.5 226.3V231.8M560.5 226.8V231.6M561.5 227V231.4M562.5 226.8V231.7M563.5 226.9V231.4M564.5 226.9V231.7M565.5 226.6V231.7" stroke="#053a7e" stroke-width="1" fill="none"/><line x1="530.5" y1="218.2" x2="530.5" y2="240.2" stroke="#9db3d2" stroke-width="1"/><line x1="530.5" y1="224.8" x2="530.5" y2="233.6" stroke="#053a7e" stroke-width="1"/><line x1="536.5" y1="222.2" x2="536.5" y2="236.2" stroke="#9db3d2" stroke-width="1"/><line x1="536.5" y1="226.4" x2="536.5" y2="232" stroke="#053a7e" stroke-width="1"/><line x1="541.5" y1="217.2" x2="541.5" y2="241.2" stroke="#9db3d2" stroke-width="1"/><line x1="541.5" y1="224.4" x2="541.5" y2="234" stroke="#053a7e" stroke-width="1"/><line x1="551.5" y1="220.2" x2="551.5" y2="238.2" stroke="#9db3d2" stroke-width="1"/><line x1="551.5" y1="225.6" x2="551.5" y2="232.8" stroke="#053a7e" stroke-width="1"/><line x1="562.5" y1="221.2" x2="562.5" y2="237.2" stroke="#9db3d2" stroke-width="1"/><line x1="562.5" y1="226" x2="562.5" y2="232.4" stroke="#053a7e" stroke-width="1"/><line x1="386.3" y1="256.2" x2="566" y2="256.2" stroke="#053a7e" stroke-width="1.2"/><line x1="386.3" y1="282.5" x2="566" y2="282.5" stroke="#053a7e" stroke-width="1.2"/><line x1="524.5" y1="254.2" x2="524.5" y2="258.2" stroke="#9db3d2" stroke-width="1"/><line x1="524.5" y1="255.6" x2="524.5" y2="256.8" stroke="#053a7e" stroke-width="1"/><line x1="530.5" y1="244.2" x2="530.5" y2="268.2" stroke="#9db3d2" stroke-width="1"/><line x1="530.5" y1="252.6" x2="530.5" y2="259.8" stroke="#053a7e" stroke-width="1"/><line x1="536.5" y1="253.2" x2="536.5" y2="259.2" stroke="#9db3d2" stroke-width="1"/><line x1="536.5" y1="255.3" x2="536.5" y2="257.1" stroke="#053a7e" stroke-width="1"/><line x1="541.5" y1="251.2" x2="541.5" y2="261.2" stroke="#9db3d2" stroke-width="1"/><line x1="541.5" y1="254.7" x2="541.5" y2="257.7" stroke="#053a7e" stroke-width="1"/><line x1="546.5" y1="254.2" x2="546.5" y2="258.2" stroke="#9db3d2" stroke-width="1"/><line x1="546.5" y1="255.6" x2="546.5" y2="256.8" stroke="#053a7e" stroke-width="1"/><line x1="551.5" y1="243.2" x2="551.5" y2="269.2" stroke="#9db3d2" stroke-width="1"/><line x1="551.5" y1="252.3" x2="551.5" y2="260.1" stroke="#053a7e" stroke-width="1"/><line x1="557.5" y1="254.2" x2="557.5" y2="258.2" stroke="#9db3d2" stroke-width="1"/><line x1="557.5" y1="255.6" x2="557.5" y2="256.8" stroke="#053a7e" stroke-width="1"/><line x1="562.5" y1="247.2" x2="562.5" y2="265.2" stroke="#9db3d2" stroke-width="1"/><line x1="562.5" y1="253.5" x2="562.5" y2="258.9" stroke="#053a7e" stroke-width="1"/><line x1="524.5" y1="280.5" x2="524.5" y2="284.5" stroke="#9db3d2" stroke-width="1"/><line x1="524.5" y1="281.9" x2="524.5" y2="283.1" stroke="#053a7e" stroke-width="1"/><line x1="530.5" y1="275.5" x2="530.5" y2="289.5" stroke="#9db3d2" stroke-width="1"/><line x1="530.5" y1="280.4" x2="530.5" y2="284.6" stroke="#053a7e" stroke-width="1"/><line x1="536.5" y1="279.5" x2="536.5" y2="285.5" stroke="#9db3d2" stroke-width="1"/><line x1="536.5" y1="281.6" x2="536.5" y2="283.4" stroke="#053a7e" stroke-width="1"/><line x1="541.5" y1="279.5" x2="541.5" y2="285.5" stroke="#9db3d2" stroke-width="1"/><line x1="541.5" y1="281.6" x2="541.5" y2="283.4" stroke="#053a7e" stroke-width="1"/><line x1="546.5" y1="280.5" x2="546.5" y2="284.5" stroke="#9db3d2" stroke-width="1"/><line x1="546.5" y1="281.9" x2="546.5" y2="283.1" stroke="#053a7e" stroke-width="1"/><line x1="551.5" y1="269.5" x2="551.5" y2="295.5" stroke="#9db3d2" stroke-width="1"/><line x1="551.5" y1="278.6" x2="551.5" y2="286.4" stroke="#053a7e" stroke-width="1"/><line x1="557.5" y1="280.5" x2="557.5" y2="284.5" stroke="#9db3d2" stroke-width="1"/><line x1="557.5" y1="281.9" x2="557.5" y2="283.1" stroke="#053a7e" stroke-width="1"/><line x1="562.5" y1="273.5" x2="562.5" y2="291.5" stroke="#9db3d2" stroke-width="1"/><line x1="562.5" y1="279.8" x2="562.5" y2="285.2" stroke="#053a7e" stroke-width="1"/><rect x="386.3" y="215.3" width="283.7" height="79.7" fill="none" stroke="#7a7a7a" stroke-width="1.3"/><line x1="386.3" y1="242.4" x2="670" y2="242.4" stroke="#8e8e8e" stroke-width="2"/><line x1="386.3" y1="269.3" x2="670" y2="269.3" stroke="#8e8e8e" stroke-width="2"/><text x="383.1" y="218.8" font-family="Liberation Sans" font-size="5.2" fill="#333" text-anchor="end" xml:space="preserve">10.</text><rect x="385.1" y="216.4" width="1.4" height="1.2" fill="#6060ff"/><text x="383.1" y="223.8" font-family="Liberation Sans" font-size="5.2" fill="#333" text-anchor="end" xml:space="preserve">5.</text><rect x="385.1" y="221.4" width="1.4" height="1.2" fill="#6060ff"/><text x="383.1" y="231" font-family="Liberation Sans" font-size="5.2" fill="#333" text-anchor="end" xml:space="preserve">0.</text><rect x="385.1" y="228.6" width="1.4" height="1.2" fill="#6060ff"/><text x="383.1" y="237.8" font-family="Liberation Sans" font-size="5.2" fill="#333" text-anchor="end" xml:space="preserve">-5.</text><rect x="385.1" y="235.4" width="1.4" height="1.2" fill="#6060ff"/><text x="383.1" y="242.3" font-family="Liberation Sans" font-size="5.2" fill="#333" text-anchor="end" xml:space="preserve">-10.</text><rect x="385.1" y="239.9" width="1.4" height="1.2" fill="#6060ff"/><text x="383.1" y="245.8" font-family="Liberation Sans" font-size="5.2" fill="#333" text-anchor="end" xml:space="preserve">32.</text><rect x="385.1" y="243.4" width="1.4" height="1.2" fill="#6060ff"/><text x="383.1" y="250.8" font-family="Liberation Sans" font-size="5.2" fill="#333" text-anchor="end" xml:space="preserve">16.</text><rect x="385.1" y="248.4" width="1.4" height="1.2" fill="#6060ff"/><text x="383.1" y="258" font-family="Liberation Sans" font-size="5.2" fill="#333" text-anchor="end" xml:space="preserve">0.</text><rect x="385.1" y="255.6" width="1.4" height="1.2" fill="#6060ff"/><text x="383.1" y="264.8" font-family="Liberation Sans" font-size="5.2" fill="#333" text-anchor="end" xml:space="preserve">-16.</text><rect x="385.1" y="262.4" width="1.4" height="1.2" fill="#6060ff"/><text x="383.1" y="269.3" font-family="Liberation Sans" font-size="5.2" fill="#333" text-anchor="end" xml:space="preserve">-32.</text><rect x="385.1" y="266.9" width="1.4" height="1.2" fill="#6060ff"/><text x="383.1" y="272.8" font-family="Liberation Sans" font-size="5.2" fill="#333" text-anchor="end" xml:space="preserve">22.</text><rect x="385.1" y="270.4" width="1.4" height="1.2" fill="#6060ff"/><text x="383.1" y="277.8" font-family="Liberation Sans" font-size="5.2" fill="#333" text-anchor="end" xml:space="preserve">11.</text><rect x="385.1" y="275.4" width="1.4" height="1.2" fill="#6060ff"/><text x="383.1" y="284.3" font-family="Liberation Sans" font-size="5.2" fill="#333" text-anchor="end" xml:space="preserve">0.</text><rect x="385.1" y="281.9" width="1.4" height="1.2" fill="#6060ff"/><text x="383.1" y="291.3" font-family="Liberation Sans" font-size="5.2" fill="#333" text-anchor="end" xml:space="preserve">-11.</text><rect x="385.1" y="288.9" width="1.4" height="1.2" fill="#6060ff"/><text x="383.1" y="295.8" font-family="Liberation Sans" font-size="5.2" fill="#333" text-anchor="end" xml:space="preserve">-22.</text><rect x="385.1" y="293.4" width="1.4" height="1.2" fill="#6060ff"/><text x="386.7" y="303.8" font-family="Liberation Sans" font-size="5.2" fill="#333" text-anchor="middle" xml:space="preserve">0</text><text x="441.5" y="303.8" font-family="Liberation Sans" font-size="5.2" fill="#333" text-anchor="middle" xml:space="preserve">2</text><text x="496.3" y="303.8" font-family="Liberation Sans" font-size="5.2" fill="#333" text-anchor="middle" xml:space="preserve">4</text><text x="551.1" y="303.8" font-family="Liberation Sans" font-size="5.2" fill="#333" text-anchor="middle" xml:space="preserve">6</text><text x="605.9" y="303.8" font-family="Liberation Sans" font-size="5.2" fill="#333" text-anchor="middle" xml:space="preserve">8</text><text x="660.7" y="303.8" font-family="Liberation Sans" font-size="5.2" fill="#333" text-anchor="middle" xml:space="preserve">10</text><rect x="363.7" y="305.8" width="28.8" height="5.6" fill="#e2e2e2" stroke="#4a4a4a" stroke-width="1" rx="0.7"/><line x1="364.4" y1="306.8" x2="391.8" y2="306.8" stroke="#f8f8f8" stroke-width="0.8"/><text x="378.1" y="310.3" font-family="Liberation Sans" font-size="5.4" fill="#333" text-anchor="middle" xml:space="preserve">Linear</text><text x="369.5" y="256" font-family="Liberation Sans" font-size="8" fill="#3c3cff" text-anchor="middle" xml:space="preserve">g</text><rect x="65" y="321" width="279" height="80.4" fill="#ffffff"/><line x1="107.8" y1="322" x2="107.8" y2="400.4" stroke="#bdbdbd" stroke-width="0.7" stroke-dasharray="1.2,2.2"/><line x1="149" y1="322" x2="149" y2="400.4" stroke="#bdbdbd" stroke-width="0.7" stroke-dasharray="1.2,2.2"/><line x1="190.2" y1="322" x2="190.2" y2="400.4" stroke="#bdbdbd" stroke-width="0.7" stroke-dasharray="1.2,2.2"/><line x1="231.4" y1="322" x2="231.4" y2="400.4" stroke="#bdbdbd" stroke-width="0.7" stroke-dasharray="1.2,2.2"/><line x1="272.6" y1="322" x2="272.6" y2="400.4" stroke="#bdbdbd" stroke-width="0.7" stroke-dasharray="1.2,2.2"/><line x1="313.8" y1="322" x2="313.8" y2="400.4" stroke="#bdbdbd" stroke-width="0.7" stroke-dasharray="1.2,2.2"/><line x1="66" y1="327.9" x2="343" y2="327.9" stroke="#bdbdbd" stroke-width="0.7" stroke-dasharray="1.2,2.2"/><line x1="66" y1="334.6" x2="343" y2="334.6" stroke="#bdbdbd" stroke-width="0.7" stroke-dasharray="1.2,2.2"/><line x1="66" y1="341.1" x2="343" y2="341.1" stroke="#bdbdbd" stroke-width="0.7" stroke-dasharray="1.2,2.2"/><line x1="66" y1="354.7" x2="343" y2="354.7" stroke="#bdbdbd" stroke-width="0.7" stroke-dasharray="1.2,2.2"/><line x1="66" y1="361" x2="343" y2="361" stroke="#bdbdbd" stroke-width="0.7" stroke-dasharray="1.2,2.2"/><line x1="66" y1="367.3" x2="343" y2="367.3" stroke="#bdbdbd" stroke-width="0.7" stroke-dasharray="1.2,2.2"/><line x1="66" y1="372" x2="343" y2="372" stroke="#bdbdbd" stroke-width="0.7" stroke-dasharray="1.2,2.2"/><line x1="66" y1="381.4" x2="343" y2="381.4" stroke="#bdbdbd" stroke-width="0.7" stroke-dasharray="1.2,2.2"/><line x1="66" y1="387.7" x2="343" y2="387.7" stroke="#bdbdbd" stroke-width="0.7" stroke-dasharray="1.2,2.2"/><line x1="66" y1="394" x2="343" y2="394" stroke="#bdbdbd" stroke-width="0.7" stroke-dasharray="1.2,2.2"/><line x1="66" y1="398.6" x2="343" y2="398.6" stroke="#bdbdbd" stroke-width="0.7" stroke-dasharray="1.2,2.2"/><line x1="65.5" y1="346.8" x2="95" y2="346.8" stroke="#053a7e" stroke-width="1"/><line x1="66.5" y1="327" x2="66.5" y2="346.8" stroke="#9db3d2" stroke-width="1"/><line x1="66.5" y1="338.88" x2="66.5" y2="346.8" stroke="#053a7e" stroke-width="1"/><line x1="67.5" y1="333" x2="67.5" y2="346.8" stroke="#9db3d2" stroke-width="1"/><line x1="67.5" y1="334.38" x2="67.5" y2="346.8" stroke="#053a7e" stroke-width="1"/><line x1="68.5" y1="322.5" x2="68.5" y2="346.8" stroke="#9db3d2" stroke-width="1"/><line x1="68.5" y1="339.51" x2="68.5" y2="346.8" stroke="#053a7e" stroke-width="1"/><line x1="69.5" y1="329" x2="69.5" y2="346.8" stroke="#9db3d2" stroke-width="1"/><line x1="69.5" y1="334.34" x2="69.5" y2="346.8" stroke="#053a7e" stroke-width="1"/><line x1="71.5" y1="344" x2="71.5" y2="346.8" stroke="#9db3d2" stroke-width="1"/><line x1="71.5" y1="344" x2="71.5" y2="346.8" stroke="#053a7e" stroke-width="1"/><line x1="73.5" y1="345" x2="73.5" y2="346.8" stroke="#9db3d2" stroke-width="1"/><line x1="73.5" y1="345" x2="73.5" y2="346.8" stroke="#053a7e" stroke-width="1"/><line x1="80.5" y1="339.3" x2="80.5" y2="346.8" stroke="#9db3d2" stroke-width="1"/><line x1="80.5" y1="346.05" x2="80.5" y2="346.8" stroke="#053a7e" stroke-width="1"/><line x1="81.5" y1="341" x2="81.5" y2="346.8" stroke="#9db3d2" stroke-width="1"/><line x1="81.5" y1="343.9" x2="81.5" y2="346.8" stroke="#053a7e" stroke-width="1"/><line x1="77.5" y1="345.5" x2="77.5" y2="346.8" stroke="#9db3d2" stroke-width="1"/><line x1="77.5" y1="345.5" x2="77.5" y2="346.8" stroke="#053a7e" stroke-width="1"/><line x1="86.5" y1="345.5" x2="86.5" y2="346.8" stroke="#9db3d2" stroke-width="1"/><line x1="86.5" y1="345.5" x2="86.5" y2="346.8" stroke="#053a7e" stroke-width="1"/><line x1="92.5" y1="345.8" x2="92.5" y2="346.8" stroke="#9db3d2" stroke-width="1"/><line x1="92.5" y1="345.8" x2="92.5" y2="346.8" stroke="#053a7e" stroke-width="1"/><line x1="65.5" y1="373.3" x2="106" y2="373.3" stroke="#053a7e" stroke-width="1"/><line x1="65.5" y1="360.6" x2="65.5" y2="373.3" stroke="#9db3d2" stroke-width="1"/><line x1="65.5" y1="366.95" x2="65.5" y2="373.3" stroke="#053a7e" stroke-width="1"/><line x1="66.5" y1="362" x2="66.5" y2="373.3" stroke="#9db3d2" stroke-width="1"/><line x1="66.5" y1="365.39" x2="66.5" y2="373.3" stroke="#053a7e" stroke-width="1"/><line x1="67.5" y1="365.2" x2="67.5" y2="373.3" stroke="#9db3d2" stroke-width="1"/><line x1="67.5" y1="366.82" x2="67.5" y2="373.3" stroke="#053a7e" stroke-width="1"/><line x1="69.5" y1="368.3" x2="69.5" y2="373.3" stroke="#9db3d2" stroke-width="1"/><line x1="69.5" y1="368.3" x2="69.5" y2="373.3" stroke="#053a7e" stroke-width="1"/><line x1="70.5" y1="370" x2="70.5" y2="373.3" stroke="#9db3d2" stroke-width="1"/><line x1="70.5" y1="370" x2="70.5" y2="373.3" stroke="#053a7e" stroke-width="1"/><line x1="74.5" y1="371.5" x2="74.5" y2="373.3" stroke="#9db3d2" stroke-width="1"/><line x1="74.5" y1="371.5" x2="74.5" y2="373.3" stroke="#053a7e" stroke-width="1"/><line x1="77.5" y1="370" x2="77.5" y2="373.3" stroke="#9db3d2" stroke-width="1"/><line x1="77.5" y1="370" x2="77.5" y2="373.3" stroke="#053a7e" stroke-width="1"/><line x1="80.5" y1="368" x2="80.5" y2="373.3" stroke="#9db3d2" stroke-width="1"/><line x1="80.5" y1="372.24" x2="80.5" y2="373.3" stroke="#053a7e" stroke-width="1"/><line x1="82.5" y1="368.5" x2="82.5" y2="373.3" stroke="#9db3d2" stroke-width="1"/><line x1="82.5" y1="369.46" x2="82.5" y2="373.3" stroke="#053a7e" stroke-width="1"/><line x1="84.5" y1="367" x2="84.5" y2="373.3" stroke="#9db3d2" stroke-width="1"/><line x1="84.5" y1="370.78" x2="84.5" y2="373.3" stroke="#053a7e" stroke-width="1"/><line x1="85.5" y1="366.5" x2="85.5" y2="373.3" stroke="#9db3d2" stroke-width="1"/><line x1="85.5" y1="367.18" x2="85.5" y2="373.3" stroke="#053a7e" stroke-width="1"/><line x1="86.5" y1="365.8" x2="86.5" y2="373.3" stroke="#9db3d2" stroke-width="1"/><line x1="86.5" y1="366.55" x2="86.5" y2="373.3" stroke="#053a7e" stroke-width="1"/><line x1="88.5" y1="370" x2="88.5" y2="373.3" stroke="#9db3d2" stroke-width="1"/><line x1="88.5" y1="370" x2="88.5" y2="373.3" stroke="#053a7e" stroke-width="1"/><line x1="90.5" y1="371" x2="90.5" y2="373.3" stroke="#9db3d2" stroke-width="1"/><line x1="90.5" y1="371" x2="90.5" y2="373.3" stroke="#053a7e" stroke-width="1"/><line x1="92.5" y1="370.5" x2="92.5" y2="373.3" stroke="#9db3d2" stroke-width="1"/><line x1="92.5" y1="370.5" x2="92.5" y2="373.3" stroke="#053a7e" stroke-width="1"/><line x1="95.5" y1="372" x2="95.5" y2="373.3" stroke="#9db3d2" stroke-width="1"/><line x1="95.5" y1="372" x2="95.5" y2="373.3" stroke="#053a7e" stroke-width="1"/><line x1="99.5" y1="372" x2="99.5" y2="373.3" stroke="#9db3d2" stroke-width="1"/><line x1="99.5" y1="372" x2="99.5" y2="373.3" stroke="#053a7e" stroke-width="1"/><line x1="103.5" y1="372.3" x2="103.5" y2="373.3" stroke="#9db3d2" stroke-width="1"/><line x1="103.5" y1="372.3" x2="103.5" y2="373.3" stroke="#053a7e" stroke-width="1"/><line x1="107.5" y1="372.8" x2="107.5" y2="373.3" stroke="#9db3d2" stroke-width="1"/><line x1="107.5" y1="372.8" x2="107.5" y2="373.3" stroke="#053a7e" stroke-width="1"/><line x1="65.5" y1="400.3" x2="95" y2="400.3" stroke="#053a7e" stroke-width="1"/><line x1="66.5" y1="393" x2="66.5" y2="400.3" stroke="#9db3d2" stroke-width="1"/><line x1="66.5" y1="398.84" x2="66.5" y2="400.3" stroke="#053a7e" stroke-width="1"/><line x1="67.5" y1="375.5" x2="67.5" y2="400.3" stroke="#9db3d2" stroke-width="1"/><line x1="67.5" y1="380.46" x2="67.5" y2="400.3" stroke="#053a7e" stroke-width="1"/><line x1="69.5" y1="398.5" x2="69.5" y2="400.3" stroke="#9db3d2" stroke-width="1"/><line x1="69.5" y1="398.5" x2="69.5" y2="400.3" stroke="#053a7e" stroke-width="1"/><line x1="82.5" y1="398.5" x2="82.5" y2="400.3" stroke="#9db3d2" stroke-width="1"/><line x1="82.5" y1="398.5" x2="82.5" y2="400.3" stroke="#053a7e" stroke-width="1"/><line x1="84.5" y1="398.8" x2="84.5" y2="400.3" stroke="#9db3d2" stroke-width="1"/><line x1="84.5" y1="398.8" x2="84.5" y2="400.3" stroke="#053a7e" stroke-width="1"/><line x1="86.5" y1="398" x2="86.5" y2="400.3" stroke="#9db3d2" stroke-width="1"/><line x1="86.5" y1="398" x2="86.5" y2="400.3" stroke="#053a7e" stroke-width="1"/><line x1="88.5" y1="398.3" x2="88.5" y2="400.3" stroke="#9db3d2" stroke-width="1"/><line x1="88.5" y1="398.3" x2="88.5" y2="400.3" stroke="#053a7e" stroke-width="1"/><line x1="92.5" y1="399" x2="92.5" y2="400.3" stroke="#9db3d2" stroke-width="1"/><line x1="92.5" y1="399" x2="92.5" y2="400.3" stroke="#053a7e" stroke-width="1"/><rect x="65" y="321" width="279" height="80.4" fill="none" stroke="#7a7a7a" stroke-width="1.3"/><line x1="65" y1="347.8" x2="344" y2="347.8" stroke="#8e8e8e" stroke-width="2"/><line x1="65" y1="374.7" x2="344" y2="374.7" stroke="#8e8e8e" stroke-width="2"/><text x="61.8" y="324.8" font-family="Liberation Sans" font-size="5.2" fill="#333" text-anchor="end" xml:space="preserve">0.24</text><rect x="63.8" y="322.4" width="1.4" height="1.2" fill="#6060ff"/><text x="61.8" y="329.7" font-family="Liberation Sans" font-size="5.2" fill="#333" text-anchor="end" xml:space="preserve">0.18</text><rect x="63.8" y="327.3" width="1.4" height="1.2" fill="#6060ff"/><text x="61.8" y="336.4" font-family="Liberation Sans" font-size="5.2" fill="#333" text-anchor="end" xml:space="preserve">0.12</text><rect x="63.8" y="334" width="1.4" height="1.2" fill="#6060ff"/><text x="61.8" y="342.9" font-family="Liberation Sans" font-size="5.2" fill="#333" text-anchor="end" xml:space="preserve">0.06</text><rect x="63.8" y="340.5" width="1.4" height="1.2" fill="#6060ff"/><text x="61.8" y="347.5" font-family="Liberation Sans" font-size="5.2" fill="#333" text-anchor="end" xml:space="preserve">0.00</text><rect x="63.8" y="345.1" width="1.4" height="1.2" fill="#6060ff"/><text x="61.8" y="351.7" font-family="Liberation Sans" font-size="5.2" fill="#333" text-anchor="end" xml:space="preserve">0.048</text><rect x="63.8" y="349.3" width="1.4" height="1.2" fill="#6060ff"/><text x="61.8" y="356.5" font-family="Liberation Sans" font-size="5.2" fill="#333" text-anchor="end" xml:space="preserve">0.036</text><rect x="63.8" y="354.1" width="1.4" height="1.2" fill="#6060ff"/><text x="61.8" y="362.8" font-family="Liberation Sans" font-size="5.2" fill="#333" text-anchor="end" xml:space="preserve">0.024</text><rect x="63.8" y="360.4" width="1.4" height="1.2" fill="#6060ff"/><text x="61.8" y="369.1" font-family="Liberation Sans" font-size="5.2" fill="#333" text-anchor="end" xml:space="preserve">0.012</text><rect x="63.8" y="366.7" width="1.4" height="1.2" fill="#6060ff"/><text x="61.8" y="373.8" font-family="Liberation Sans" font-size="5.2" fill="#333" text-anchor="end" xml:space="preserve">0.000</text><rect x="63.8" y="371.4" width="1.4" height="1.2" fill="#6060ff"/><text x="61.8" y="378.6" font-family="Liberation Sans" font-size="5.2" fill="#333" text-anchor="end" xml:space="preserve">0.28</text><rect x="63.8" y="376.2" width="1.4" height="1.2" fill="#6060ff"/><text x="61.8" y="383.2" font-family="Liberation Sans" font-size="5.2" fill="#333" text-anchor="end" xml:space="preserve">0.21</text><rect x="63.8" y="380.8" width="1.4" height="1.2" fill="#6060ff"/><text x="61.8" y="389.5" font-family="Liberation Sans" font-size="5.2" fill="#333" text-anchor="end" xml:space="preserve">0.14</text><rect x="63.8" y="387.1" width="1.4" height="1.2" fill="#6060ff"/><text x="61.8" y="395.8" font-family="Liberation Sans" font-size="5.2" fill="#333" text-anchor="end" xml:space="preserve">0.07</text><rect x="63.8" y="393.4" width="1.4" height="1.2" fill="#6060ff"/><text x="61.8" y="400.4" font-family="Liberation Sans" font-size="5.2" fill="#333" text-anchor="end" xml:space="preserve">0.00</text><rect x="63.8" y="398" width="1.4" height="1.2" fill="#6060ff"/><text x="66.6" y="408.9" font-family="Liberation Sans" font-size="5.2" fill="#333" text-anchor="middle" xml:space="preserve">0</text><text x="107.8" y="408.9" font-family="Liberation Sans" font-size="5.2" fill="#333" text-anchor="middle" xml:space="preserve">20</text><text x="149" y="408.9" font-family="Liberation Sans" font-size="5.2" fill="#333" text-anchor="middle" xml:space="preserve">40</text><text x="190.2" y="408.9" font-family="Liberation Sans" font-size="5.2" fill="#333" text-anchor="middle" xml:space="preserve">60</text><text x="231.4" y="408.9" font-family="Liberation Sans" font-size="5.2" fill="#333" text-anchor="middle" xml:space="preserve">80</text><text x="272.6" y="408.9" font-family="Liberation Sans" font-size="5.2" fill="#333" text-anchor="middle" xml:space="preserve">100</text><text x="313.8" y="408.9" font-family="Liberation Sans" font-size="5.2" fill="#333" text-anchor="middle" xml:space="preserve">120</text><rect x="345" y="325.5" width="6.5" height="15.5" fill="#ffff00" stroke="#333" stroke-width="1"/><text x="346.35" y="333.25" font-family="Liberation Sans" font-size="5.2" fill="#2828c8" text-anchor="middle" transform="rotate(90 346.35 333.25)" xml:space="preserve">Axial</text><rect x="345" y="349" width="6.5" height="22" fill="#ffffff" stroke="#555" stroke-width="1"/><text x="346.35" y="360" font-family="Liberation Sans" font-size="5.2" fill="#3c3cf0" text-anchor="middle" transform="rotate(90 346.35 360)" xml:space="preserve">Vertical</text><rect x="345" y="372.5" width="6.5" height="29" fill="#ffffff" stroke="#555" stroke-width="1"/><text x="346.35" y="387" font-family="Liberation Sans" font-size="5.2" fill="#3c3cf0" text-anchor="middle" transform="rotate(90 346.35 387)" xml:space="preserve">Horizontal</text><rect x="37.5" y="411.4" width="28.8" height="5.5" fill="#e2e2e2" stroke="#4a4a4a" stroke-width="1" rx="0.7"/><line x1="38.2" y1="412.4" x2="65.6" y2="412.4" stroke="#f8f8f8" stroke-width="0.8"/><text x="51.9" y="415.8" font-family="Liberation Sans" font-size="5.4" fill="#333" text-anchor="middle" xml:space="preserve">Linear</text><rect x="311.2" y="411.4" width="32.3" height="5.5" fill="#e2e2e2" stroke="#4a4a4a" stroke-width="1" rx="0.7"/><line x1="311.9" y1="412.4" x2="342.8" y2="412.4" stroke="#f8f8f8" stroke-width="0.8"/><text x="327.35" y="415.8" font-family="Liberation Sans" font-size="5.4" fill="#333" text-anchor="middle" xml:space="preserve">Orders</text><text x="42.6" y="361" font-family="Liberation Sans" font-size="7.3" fill="#3c3cff" text-anchor="middle" transform="rotate(-90 42.6 361)" textLength="26.8" lengthAdjust="spacingAndGlyphs" xml:space="preserve">in/s 0-pk</text><rect x="386.3" y="321" width="283.7" height="80.4" fill="#ffffff"/><line x1="457.2" y1="322" x2="457.2" y2="400.4" stroke="#bdbdbd" stroke-width="0.7" stroke-dasharray="1.2,2.2"/><line x1="527.1" y1="322" x2="527.1" y2="400.4" stroke="#bdbdbd" stroke-width="0.7" stroke-dasharray="1.2,2.2"/><line x1="387.3" y1="327.5" x2="669" y2="327.5" stroke="#bdbdbd" stroke-width="0.7" stroke-dasharray="1.2,2.2"/><line x1="387.3" y1="334" x2="669" y2="334" stroke="#bdbdbd" stroke-width="0.7" stroke-dasharray="1.2,2.2"/><line x1="387.3" y1="340.5" x2="669" y2="340.5" stroke="#bdbdbd" stroke-width="0.7" stroke-dasharray="1.2,2.2"/><line x1="387.3" y1="345" x2="669" y2="345" stroke="#bdbdbd" stroke-width="0.7" stroke-dasharray="1.2,2.2"/><line x1="387.3" y1="354.5" x2="669" y2="354.5" stroke="#bdbdbd" stroke-width="0.7" stroke-dasharray="1.2,2.2"/><line x1="387.3" y1="361.5" x2="669" y2="361.5" stroke="#bdbdbd" stroke-width="0.7" stroke-dasharray="1.2,2.2"/><line x1="387.3" y1="368" x2="669" y2="368" stroke="#bdbdbd" stroke-width="0.7" stroke-dasharray="1.2,2.2"/><line x1="387.3" y1="381" x2="669" y2="381" stroke="#bdbdbd" stroke-width="0.7" stroke-dasharray="1.2,2.2"/><line x1="387.3" y1="387.8" x2="669" y2="387.8" stroke="#bdbdbd" stroke-width="0.7" stroke-dasharray="1.2,2.2"/><line x1="387.3" y1="394.5" x2="669" y2="394.5" stroke="#bdbdbd" stroke-width="0.7" stroke-dasharray="1.2,2.2"/><polyline points="386.6,332.6 386.9,332.9 387.2,332.6 387.5,333.4 387.8,333.9 388.1,335.2 388.4,336.8 388.7,337.2 389.0,336.7 389.3,341.1 389.6,339.6 389.9,338.6 390.2,338.8 390.5,337.7 390.8,338.3 391.1,338.3 391.4,337.4 391.7,335.9 392.0,335.4 392.3,333.8 392.6,332.6 392.9,332.0 393.2,331.9 393.5,331.6 393.8,332.2 394.1,330.7 394.4,330.6 394.7,328.5 395.0,327.6 395.3,327.4 395.6,327.6 395.9,328.7 396.2,330.6 396.5,331.6 396.8,332.5 397.1,332.8 397.4,333.8 397.7,333.2 398.0,333.2 398.3,333.0 398.6,335.1 398.9,335.6 399.2,337.8 399.5,338.0 399.8,340.0 400.1,338.2 400.4,339.5 400.7,339.3 401.0,338.6 401.3,335.5 401.6,336.8 401.9,337.0 402.2,335.6 402.5,335.7 402.8,334.3 403.1,333.2 403.4,332.4 403.7,333.2 404.0,332.4 404.3,332.6 404.6,332.9 404.9,333.5 405.2,333.0 405.5,331.3 405.8,331.3 406.1,329.0 406.4,328.8 406.7,329.2 407.0,330.2 407.3,330.2 407.6,331.4 407.9,332.2 408.2,331.7 408.5,331.5 408.8,331.1 409.1,330.8 409.4,331.6 409.7,332.9 410.0,333.5 410.3,335.2 410.6,333.8 410.9,334.2 411.2,335.0 411.5,334.1 411.8,333.6 412.1,334.7 412.4,336.1 412.7,336.5 413.0,342.4 413.3,341.3 413.6,340.2 413.9,338.8 414.2,338.0 414.5,335.8 414.8,335.7 415.1,336.2 415.4,335.4 415.7,335.2 416.0,335.8 416.3,334.4 416.6,332.9 416.9,331.6 417.2,330.0 417.5,331.4 417.8,329.4 418.1,329.8 418.4,329.3 418.7,329.3 419.0,329.8 419.3,329.0 419.6,329.2 419.9,328.8 420.2,330.7 420.5,331.1 420.8,331.8 421.1,334.2 421.4,334.5 421.7,335.4 422.0,335.1 422.3,335.0 422.6,335.1 422.9,335.2 423.2,336.1 423.5,338.8 423.8,339.6 424.1,340.8 424.4,340.8 424.7,340.0 425.0,335.1 425.3,335.5 425.6,334.0 425.9,334.3 426.2,334.2 426.5,335.0 426.8,335.1 427.1,334.6 427.4,333.7 427.7,332.3 428.0,331.3 428.3,331.1 428.6,331.3 428.9,331.5 429.2,332.9 429.5,332.1 429.8,331.6 430.1,330.2 430.4,329.9 430.7,327.9 431.0,327.7 431.3,328.8 431.6,330.7 431.9,331.0 432.2,333.0 432.5,332.6 432.8,331.7 433.1,331.9 433.4,332.6 433.7,331.4 434.0,331.8 434.3,333.8 434.6,335.4 434.9,336.1 435.2,335.8 435.5,335.9 435.8,335.5 436.1,335.6 436.4,336.1 436.7,339.8 437.0,340.5 437.3,339.9 437.6,340.2 437.9,338.8 438.2,337.8 438.5,336.9 438.8,334.9 439.1,334.8 439.4,333.6 439.7,333.9 440.0,334.0 440.3,333.8 440.6,333.5 440.9,332.8 441.2,332.4 441.5,328.9 441.8,328.5 442.1,327.8 442.4,327.4 442.7,328.9 443.0,329.6 443.3,330.8 443.6,331.7 443.9,330.0 444.2,331.0 444.5,331.3 444.8,331.4 445.1,333.4 445.4,334.7 445.7,335.7 446.0,337.4 446.3,336.5 446.6,337.4 446.9,336.8 447.2,336.5 447.5,337.7 447.8,338.8 448.1,340.8 448.4,341.0 448.7,337.3 449.0,336.6 449.3,336.5 449.6,334.0 449.9,334.2 450.2,332.4 450.5,333.6 450.8,333.8 451.1,334.4 451.4,333.8 451.7,332.6 452.0,331.8 452.3,332.0 452.6,330.5 452.9,329.6 453.2,330.5 453.5,330.1 453.8,330.5 454.1,330.3 454.4,331.0 454.7,331.2 455.0,329.3 455.3,329.6 455.6,330.2 455.9,331.5 456.2,330.4 456.5,332.8 456.8,333.8 457.1,333.0 457.4,333.7 457.7,333.2 458.0,333.1 458.3,332.6 458.6,333.8 458.9,334.4 459.2,336.2 459.5,336.8 459.8,336.9 460.1,336.2 460.4,341.3 460.7,339.6 461.0,338.6 461.3,337.5 461.6,337.7 461.9,338.8 462.2,338.2 462.5,336.8 462.8,336.1 463.1,334.7 463.4,333.1 463.7,331.8 464.0,332.4 464.3,332.1 464.6,331.9 464.9,331.1 465.2,331.0 465.5,330.2 465.8,329.2 466.1,327.2 466.4,327.8 466.7,328.1 467.0,329.0 467.3,329.4 467.6,331.5 467.9,332.1 468.2,333.1 468.5,333.2 468.8,333.6 469.1,333.2 469.4,333.4 469.7,336.4 470.0,336.8 470.3,337.9 470.6,338.7 470.9,338.5 471.2,339.4 471.5,339.1 471.8,339.9 472.1,340.4 472.4,336.1 472.7,336.7 473.0,336.3 473.3,336.1 473.6,335.6 473.9,333.9 474.2,333.3 474.5,332.4 474.8,332.5 475.1,332.3 475.4,331.8 475.7,333.1 476.0,333.7 476.3,331.5 476.6,331.0 476.9,330.2 477.2,328.6 477.5,328.6 477.8,329.0 478.1,328.9 478.4,330.8 478.7,331.6 479.0,331.0 479.3,331.3 479.6,331.4 479.9,330.5 480.2,331.1 480.5,332.0 480.8,332.6 481.1,334.4 481.4,334.9 481.7,334.4 482.0,334.9 482.3,334.6 482.6,334.3 482.9,333.8 483.2,335.1 483.5,336.6 483.8,337.2 484.1,342.4 484.4,341.7 484.7,339.8 485.0,338.7 485.3,336.9 485.6,336.7 485.9,335.7 486.2,335.6 486.5,336.0 486.8,335.8 487.1,335.4 487.4,334.2 487.7,331.9 488.0,330.8 488.3,330.4 488.6,330.0 488.9,329.9 489.2,331.3 489.5,330.4 489.8,329.2 490.1,329.6 490.4,329.8 490.7,329.2 491.0,328.4 491.3,330.2 491.6,331.5 491.9,334.0 492.2,333.3 492.5,335.8 492.8,335.1 493.1,335.6 493.4,334.9 493.7,335.4 494.0,336.6 494.3,337.4 494.6,339.3 494.9,340.1 495.2,340.7 495.5,341.1 495.8,336.4 496.1,335.4 496.4,335.3 496.7,333.8 497.0,333.8 497.3,335.0 497.6,336.2 497.9,335.7 498.2,335.2 498.5,334.1 498.8,331.9 499.1,331.5 499.4,329.7 499.7,330.9 500.0,332.0 500.3,331.2 500.6,330.9 500.9,330.7 501.2,330.4 501.5,329.7 501.8,329.8 502.1,329.5 502.4,328.9 502.7,329.6 503.0,332.0 503.3,333.1 503.6,331.9 503.9,332.2 504.2,331.8 504.5,331.8 504.8,332.0 505.1,333.1 505.4,334.5 505.7,335.1 506.0,336.2 506.3,337.1 506.6,335.3 506.9,334.8 507.2,335.3 507.5,336.2 507.8,339.9 508.1,340.4 508.4,339.8 508.7,340.2 509.0,338.7 509.3,338.1 509.6,336.5 509.9,335.2 510.2,334.8 510.5,334.3 510.8,333.6 511.1,334.4 511.4,333.0 511.7,333.6 512.0,333.3 512.3,330.8 512.6,329.4 512.9,328.2 513.2,328.2 513.5,327.6 513.8,329.6 514.1,330.3 514.4,330.9 514.7,331.4 515.0,331.1 515.3,330.2 515.6,332.5 515.9,332.4 516.2,332.8 516.5,335.7 516.8,336.3 517.1,337.2 517.4,337.7 517.7,336.8 518.0,335.6 518.3,337.3 518.6,338.3 518.9,340.0 519.2,340.6 519.5,337.5 519.8,337.6 520.1,336.5 520.4,335.4 520.7,334.5 521.0,333.1 521.3,334.1 521.6,333.1 521.9,334.0 522.2,334.1 522.5,333.8 522.8,333.7 523.1,332.8 523.4,331.9 523.7,330.6 524.0,329.8 524.3,330.6 524.6,329.9 524.9,331.0 525.2,331.1 525.5,330.9 525.8,329.7 526.1,329.1 526.4,330.5 526.7,329.7 527.0,330.0 527.3,331.4 527.6,333.1 527.9,334.4 528.2,333.9 528.5,334.2 528.8,333.3 529.1,333.2 529.4,333.7 529.7,333.8 530.0,335.3 530.3,336.1 530.6,336.7 530.9,337.5 531.2,336.5 531.5,340.1 531.8,338.4 532.1,338.0 532.4,337.5 532.7,338.4 533.0,338.0 533.3,337.8 533.6,337.8 533.9,334.2 534.2,333.7 534.5,331.5 534.8,332.1 535.1,332.0 535.4,332.2 535.7,332.1 536.0,331.3 536.3,331.9 536.6,330.0 536.9,328.2 537.2,326.6 537.5,327.7 537.8,328.2 538.1,329.6 538.4,331.4 538.7,332.6 539.0,332.7 539.3,333.9 539.6,332.7 539.9,332.6 540.2,333.6 540.5,334.4 540.8,335.7 541.1,337.0 541.4,338.4 541.7,338.8 542.0,338.5 542.3,339.5 542.6,338.6 542.9,339.3 543.2,335.8 543.5,335.7 543.8,337.5 544.1,335.7 544.4,335.8 544.7,335.4 545.0,334.9 545.3,333.0 545.6,331.7 545.9,332.7 546.2,331.9 546.5,332.7 546.8,333.5 547.1,332.6 547.4,332.0 547.7,331.3 548.0,329.8 548.3,329.3 548.6,328.4 548.9,329.0 549.2,329.4 549.5,330.2 549.8,332.5 550.1,331.9 550.4,331.7 550.7,330.4 551.0,330.7 551.3,331.0 551.6,331.3 551.9,333.4 552.2,333.8 552.5,334.8 552.8,334.2 553.1,335.1 553.4,334.6 553.7,334.2 554.0,333.9 554.3,334.9 554.6,336.9 554.9,337.3 555.2,341.7 555.5,340.8 555.8,338.8 556.1,338.7 556.4,335.7 556.7,336.0 557.0,335.6 557.3,335.0 557.6,336.1 557.9,335.9 558.2,334.9 558.5,333.1 558.8,332.3 559.1,331.4 559.4,330.1 559.7,330.5 560.0,330.2 560.3,330.3 560.6,330.4 560.9,328.9 561.2,329.0 561.5,329.4 561.8,329.4 562.1,330.3 562.4,331.1 562.7,332.0 563.0,333.5 563.3,334.4 563.6,335.0 563.9,335.1 564.2,335.6 564.5,334.9 564.8,335.3 565.1,336.5 565.4,337.5 565.7,339.2" fill="none" stroke="#2a5a94" stroke-width="0.9" stroke-linejoin="round"/><polyline points="386.6,355.7 386.9,362.6 387.2,360.7 387.5,362.1 387.8,362.6 388.1,356.4 388.4,368.4 388.7,362.1 389.0,362.2 389.3,356.5 389.6,363.5 389.9,363.0 390.2,360.7 390.5,362.6 390.8,365.8 391.1,360.8 391.4,359.0 391.7,366.2 392.0,362.8 392.3,361.4 392.6,369.6 392.9,362.5 393.2,361.4 393.5,362.9 393.8,360.6 394.1,362.8 394.4,362.6 394.7,359.6 395.0,361.1 395.3,363.2 395.6,363.5 395.9,364.2 396.2,365.1 396.5,363.0 396.8,364.1 397.1,360.5 397.4,361.0 397.7,366.3 398.0,353.9 398.3,363.6 398.6,372.5 398.9,354.1 399.2,368.4 399.5,354.4 399.8,363.5 400.1,369.1 400.4,368.5 400.7,357.8 401.0,356.0 401.3,355.3 401.6,365.1 401.9,360.0 402.2,361.8 402.5,363.0 402.8,363.7 403.1,364.3 403.4,362.4 403.7,354.0 404.0,368.8 404.3,350.5 404.6,367.8 404.9,358.8 405.2,360.7 405.5,359.1 405.8,359.9 406.1,361.6 406.4,360.3 406.7,356.2 407.0,366.0 407.3,358.8 407.6,368.5 407.9,360.9 408.2,358.1 408.5,363.9 408.8,366.2 409.1,357.0 409.4,360.2 409.7,369.0 410.0,356.6 410.3,357.3 410.6,362.5 410.9,355.5 411.2,350.5 411.5,353.2 411.8,363.6 412.1,365.0 412.4,364.7 412.7,363.7 413.0,355.5 413.3,365.1 413.6,367.5 413.9,358.2 414.2,366.4 414.5,359.9 414.8,362.6 415.1,363.5 415.4,354.4 415.7,368.8 416.0,357.5 416.3,361.2 416.6,359.3 416.9,363.9 417.2,363.7 417.5,361.8 417.8,368.3 418.1,363.0 418.4,359.9 418.7,350.5 419.0,360.4 419.3,360.4 419.6,357.8 419.9,357.9 420.2,364.3 420.5,366.2 420.8,369.8 421.1,366.5 421.4,358.7 421.7,362.7 422.0,356.1 422.3,364.6 422.6,363.1 422.9,359.2 423.2,361.2 423.5,360.7 423.8,359.2 424.1,366.7 424.4,372.5 424.7,364.7 425.0,365.5 425.3,362.2 425.6,360.4 425.9,369.4 426.2,360.4 426.5,363.0 426.8,361.2 427.1,363.6 427.4,361.5 427.7,363.6 428.0,357.5 428.3,361.3 428.6,366.0 428.9,358.4 429.2,359.6 429.5,365.8 429.8,362.8 430.1,364.8 430.4,355.0 430.7,362.0 431.0,357.9 431.3,357.7 431.6,362.8 431.9,364.9 432.2,357.5 432.5,358.6 432.8,360.0 433.1,361.3 433.4,358.1 433.7,367.6 434.0,363.1 434.3,360.7 434.6,360.3 434.9,367.6 435.2,367.3 435.5,360.3 435.8,362.5 436.1,364.8 436.4,358.6 436.7,360.1 437.0,364.9 437.3,359.9 437.6,360.5 437.9,358.2 438.2,359.7 438.5,363.3 438.8,359.5 439.1,358.3 439.4,360.0 439.7,366.0 440.0,362.0 440.3,360.1 440.6,361.9 440.9,362.7 441.2,361.9 441.5,356.9 441.8,362.3 442.1,361.0 442.4,363.7 442.7,358.0 443.0,364.3 443.3,360.2 443.6,356.9 443.9,365.2 444.2,360.1 444.5,362.6 444.8,361.1 445.1,364.6 445.4,364.7 445.7,364.8 446.0,363.6 446.3,356.7 446.6,356.4 446.9,362.1 447.2,358.6 447.5,363.0 447.8,362.0 448.1,357.0 448.4,358.1 448.7,357.8 449.0,358.5 449.3,360.8 449.6,363.8 449.9,366.1 450.2,358.1 450.5,359.5 450.8,367.1 451.1,364.7 451.4,362.4 451.7,352.7 452.0,357.7 452.3,362.1 452.6,359.2 452.9,369.3 453.2,361.8 453.5,362.6 453.8,357.0 454.1,357.2 454.4,358.7 454.7,358.9 455.0,360.5 455.3,363.1 455.6,362.5 455.9,365.8 456.2,355.5 456.5,362.4 456.8,362.6 457.1,368.6 457.4,360.5 457.7,363.0 458.0,357.7 458.3,363.5 458.6,363.3 458.9,358.5 459.2,359.4 459.5,361.3 459.8,364.3 460.1,355.9 460.4,365.8 460.7,359.8 461.0,370.9 461.3,368.7 461.6,359.5 461.9,358.3 462.2,372.5 462.5,364.7 462.8,364.4 463.1,359.3 463.4,360.8 463.7,365.6 464.0,364.6 464.3,357.2 464.6,367.9 464.9,363.1 465.2,356.6 465.5,366.6 465.8,360.6 466.1,365.5 466.4,358.6 466.7,363.4 467.0,353.1 467.3,363.4 467.6,353.6 467.9,362.3 468.2,350.5 468.5,361.2 468.8,365.2 469.1,364.0 469.4,367.6 469.7,356.0 470.0,369.5 470.3,369.6 470.6,355.4 470.9,357.5 471.2,358.6 471.5,361.4 471.8,362.4 472.1,350.5 472.4,364.4 472.7,360.2 473.0,356.6 473.3,366.1 473.6,359.8 473.9,366.9 474.2,364.0 474.5,360.0 474.8,366.9 475.1,365.2 475.4,359.2 475.7,354.2 476.0,359.0 476.3,364.2 476.6,360.4 476.9,369.2 477.2,362.6 477.5,362.3 477.8,363.2 478.1,357.8 478.4,361.0 478.7,358.8 479.0,351.9 479.3,354.3 479.6,364.4 479.9,359.7 480.2,361.0 480.5,355.8 480.8,359.2 481.1,364.4 481.4,361.8 481.7,359.6 482.0,367.0 482.3,361.3 482.6,360.2 482.9,365.5 483.2,355.5 483.5,363.4 483.8,357.7 484.1,358.9 484.4,359.2 484.7,361.9 485.0,361.8 485.3,362.4 485.6,362.1 485.9,365.8 486.2,366.6 486.5,363.6 486.8,363.7 487.1,360.4 487.4,358.3 487.7,363.2 488.0,361.6 488.3,363.9 488.6,356.4 488.9,368.9 489.2,358.0 489.5,361.6 489.8,364.2 490.1,357.8 490.4,360.0 490.7,356.2 491.0,357.8 491.3,356.5 491.6,361.8 491.9,362.2 492.2,360.7 492.5,364.7 492.8,365.0 493.1,361.5 493.4,360.9 493.7,360.8 494.0,360.4 494.3,364.7 494.6,362.1 494.9,360.7 495.2,360.9 495.5,362.9 495.8,360.5 496.1,362.3 496.4,361.4 496.7,364.9 497.0,364.4 497.3,357.9 497.6,361.1 497.9,363.3 498.2,360.3 498.5,363.6 498.8,362.4 499.1,363.1 499.4,361.3 499.7,362.3 500.0,362.9 500.3,357.5 500.6,359.0 500.9,358.7 501.2,366.2 501.5,362.4 501.8,362.6 502.1,362.0 502.4,360.0 502.7,359.3 503.0,364.1 503.3,360.4 503.6,366.4 503.9,362.1 504.2,361.8 504.5,360.8 504.8,361.3 505.1,361.6 505.4,366.6 505.7,369.3 506.0,357.6 506.3,362.4 506.6,364.0 506.9,358.3 507.2,359.3 507.5,359.9 507.8,352.7 508.1,363.9 508.4,361.4 508.7,361.2 509.0,361.8 509.3,362.5 509.6,370.6 509.9,362.2 510.2,364.9 510.5,359.4 510.8,363.0 511.1,360.2 511.4,360.9 511.7,357.7 512.0,358.1 512.3,363.5 512.6,364.8 512.9,363.6 513.2,358.6 513.5,363.0 513.8,350.5 514.1,365.8 514.4,361.4 514.7,362.8 515.0,367.0 515.3,359.6 515.6,366.1 515.9,359.5 516.2,364.2 516.5,359.6 516.8,363.1 517.1,368.7 517.4,358.4 517.7,358.6 518.0,360.0 518.3,363.1 518.6,372.5 518.9,358.7 519.2,351.4 519.5,358.3 519.8,353.6 520.1,358.8 520.4,361.7 520.7,356.8 521.0,358.2 521.3,352.1 521.6,362.6 521.9,357.8 522.2,367.2 522.5,367.1 522.8,357.2 523.1,359.8 523.4,361.9 523.7,365.6 524.0,353.1 524.3,361.3 524.6,371.2 524.9,361.2 525.2,362.8 525.5,361.7 525.8,355.6 526.1,366.5 526.4,363.1 526.7,362.5 527.0,365.3 527.3,365.6 527.6,352.3 527.9,364.1 528.2,358.8 528.5,362.5 528.8,358.2 529.1,357.5 529.4,366.3 529.7,361.7 530.0,360.4 530.3,360.4 530.6,362.1 530.9,361.7 531.2,350.8 531.5,357.7 531.8,360.7 532.1,365.1 532.4,367.9 532.7,357.6 533.0,370.3 533.3,362.2 533.6,363.9 533.9,359.5 534.2,359.2 534.5,367.8 534.8,360.9 535.1,361.4 535.4,366.5 535.7,368.7 536.0,355.8 536.3,361.1 536.6,361.8 536.9,368.8 537.2,371.2 537.5,361.6 537.8,363.2 538.1,365.0 538.4,366.0 538.7,360.7 539.0,364.9 539.3,359.4 539.6,352.6 539.9,357.1 540.2,362.5 540.5,364.4 540.8,354.4 541.1,356.0 541.4,361.7 541.7,351.1 542.0,363.6 542.3,365.0 542.6,352.7 542.9,364.2 543.2,361.3 543.5,366.0 543.8,362.7 544.1,361.2 544.4,362.2 544.7,364.5 545.0,362.4 545.3,362.0 545.6,357.9 545.9,363.2 546.2,361.9 546.5,366.8 546.8,361.8 547.1,361.6 547.4,360.2 547.7,363.7 548.0,361.3 548.3,360.1 548.6,365.9 548.9,366.4 549.2,360.7 549.5,359.3 549.8,364.7 550.1,359.8 550.4,368.9 550.7,361.5 551.0,364.3 551.3,358.6 551.6,361.8 551.9,364.6 552.2,363.0 552.5,360.5 552.8,368.0 553.1,363.7 553.4,361.3 553.7,360.4 554.0,361.2 554.3,365.3 554.6,359.9 554.9,362.0 555.2,359.8 555.5,365.2 555.8,361.5 556.1,364.2 556.4,363.4 556.7,360.3 557.0,363.8 557.3,364.5 557.6,358.7 557.9,363.9 558.2,372.1 558.5,361.1 558.8,363.8 559.1,358.0 559.4,363.3 559.7,360.2 560.0,364.3 560.3,361.8 560.6,358.3 560.9,365.5 561.2,361.3 561.5,358.7 561.8,362.2 562.1,358.8 562.4,363.4 562.7,361.8 563.0,360.8 563.3,364.4 563.6,357.5 563.9,365.6 564.2,354.8 564.5,368.0 564.8,362.8 565.1,361.1 565.4,359.3 565.7,364.2" fill="none" stroke="#3566a0" stroke-width="0.7" stroke-linejoin="round"/><polyline points="386.6,390.4 386.9,390.1 387.2,393.0 387.5,388.9 387.8,389.1 388.1,390.6 388.4,392.0 388.7,388.5 389.0,389.0 389.3,388.3 389.6,389.9 389.9,391.5 390.2,384.8 390.5,386.6 390.8,386.5 391.1,387.9 391.4,390.0 391.7,385.8 392.0,386.1 392.3,388.3 392.6,381.9 392.9,382.9 393.2,383.6 393.5,384.6 393.8,385.1 394.1,383.0 394.4,388.9 394.7,382.4 395.0,383.7 395.3,387.1 395.6,386.3 395.9,384.2 396.2,385.3 396.5,386.6 396.8,384.5 397.1,386.4 397.4,382.4 397.7,385.2 398.0,380.9 398.3,383.1 398.6,382.7 398.9,389.2 399.2,385.0 399.5,387.3 399.8,384.3 400.1,386.5 400.4,386.6 400.7,385.4 401.0,390.3 401.3,383.9 401.6,390.3 401.9,396.0 402.2,387.1 402.5,389.6 402.8,385.7 403.1,390.0 403.4,385.8 403.7,392.3 404.0,389.6 404.3,386.2 404.6,387.8 404.9,387.2 405.2,390.8 405.5,394.0 405.8,390.8 406.1,388.8 406.4,389.8 406.7,392.3 407.0,385.6 407.3,393.5 407.6,393.0 407.9,385.4 408.2,394.9 408.5,387.3 408.8,391.0 409.1,394.5 409.4,386.9 409.7,386.1 410.0,387.8 410.3,387.7 410.6,389.9 410.9,388.6 411.2,388.4 411.5,388.1 411.8,388.6 412.1,386.5 412.4,389.4 412.7,388.2 413.0,385.2 413.3,392.4 413.6,383.9 413.9,388.9 414.2,384.6 414.5,387.3 414.8,387.4 415.1,388.0 415.4,389.3 415.7,383.0 416.0,392.6 416.3,385.9 416.6,382.5 416.9,380.9 417.2,390.6 417.5,388.6 417.8,384.1 418.1,386.1 418.4,387.5 418.7,384.2 419.0,382.9 419.3,383.9 419.6,386.3 419.9,384.2 420.2,381.0 420.5,386.4 420.8,379.9 421.1,382.7 421.4,388.2 421.7,385.7 422.0,385.9 422.3,385.8 422.6,388.5 422.9,385.9 423.2,381.2 423.5,387.3 423.8,378.8 424.1,381.8 424.4,391.8 424.7,390.7 425.0,387.0 425.3,388.3 425.6,389.1 425.9,391.8 426.2,387.4 426.5,387.4 426.8,388.4 427.1,390.7 427.4,391.2 427.7,389.7 428.0,393.0 428.3,388.5 428.6,391.2 428.9,389.7 429.2,389.0 429.5,395.0 429.8,391.0 430.1,389.3 430.4,392.1 430.7,389.3 431.0,393.6 431.3,394.2 431.6,394.6 431.9,389.0 432.2,391.3 432.5,396.4 432.8,390.8 433.1,394.6 433.4,395.1 433.7,387.1 434.0,393.8 434.3,392.3 434.6,392.4 434.9,394.2 435.2,390.7 435.5,389.4 435.8,390.5 436.1,387.6 436.4,389.5 436.7,382.6 437.0,392.2 437.3,385.9 437.6,388.4 437.9,387.5 438.2,386.6 438.5,386.4 438.8,386.0 439.1,381.2 439.4,383.8 439.7,388.2 440.0,382.1 440.3,381.9 440.6,390.1 440.9,387.6 441.2,388.4 441.5,384.1 441.8,384.8 442.1,386.0 442.4,385.5 442.7,383.8 443.0,380.1 443.3,382.1 443.6,380.1 443.9,388.4 444.2,383.3 444.5,384.0 444.8,385.4 445.1,384.9 445.4,386.5 445.7,383.6 446.0,381.5 446.3,390.4 446.6,384.2 446.9,385.1 447.2,384.5 447.5,385.5 447.8,387.3 448.1,389.5 448.4,385.1 448.7,389.0 449.0,386.7 449.3,392.0 449.6,385.9 449.9,389.7 450.2,391.6 450.5,386.4 450.8,390.5 451.1,390.9 451.4,388.6 451.7,390.4 452.0,393.7 452.3,391.9 452.6,390.4 452.9,391.0 453.2,392.9 453.5,395.1 453.8,393.9 454.1,393.8 454.4,396.0 454.7,387.8 455.0,388.0 455.3,385.8 455.6,393.8 455.9,385.5 456.2,391.3 456.5,393.2 456.8,387.4 457.1,389.1 457.4,389.9 457.7,392.3 458.0,386.1 458.3,390.7 458.6,391.4 458.9,389.6 459.2,389.4 459.5,391.9 459.8,388.9 460.1,387.9 460.4,386.8 460.7,389.1 461.0,386.3 461.3,388.4 461.6,386.7 461.9,389.1 462.2,383.8 462.5,385.8 462.8,386.2 463.1,386.2 463.4,387.8 463.7,385.7 464.0,386.8 464.3,389.4 464.6,386.4 464.9,381.3 465.2,380.2 465.5,385.6 465.8,382.8 466.1,384.6 466.4,383.4 466.7,387.3 467.0,387.0 467.3,381.0 467.6,384.8 467.9,383.4 468.2,381.0 468.5,386.2 468.8,384.4 469.1,386.1 469.4,391.6 469.7,388.9 470.0,388.6 470.3,384.9 470.6,383.2 470.9,389.8 471.2,386.1 471.5,387.3 471.8,386.5 472.1,388.1 472.4,394.4 472.7,387.6 473.0,388.0 473.3,389.6 473.6,390.1 473.9,386.5 474.2,385.3 474.5,388.7 474.8,389.9 475.1,388.6 475.4,388.3 475.7,388.6 476.0,390.2 476.3,391.1 476.6,387.2 476.9,390.2 477.2,392.6 477.5,391.4 477.8,388.2 478.1,390.8 478.4,391.7 478.7,393.7 479.0,387.4 479.3,393.3 479.6,390.2 479.9,391.8 480.2,392.8 480.5,388.6 480.8,388.6 481.1,390.1 481.4,392.1 481.7,388.5 482.0,386.0 482.3,387.6 482.6,390.1 482.9,391.8 483.2,387.1 483.5,387.3 483.8,387.4 484.1,387.1 484.4,384.7 484.7,385.7 485.0,387.1 485.3,386.5 485.6,386.0 485.9,383.1 486.2,384.0 486.5,383.3 486.8,387.6 487.1,388.5 487.4,385.4 487.7,388.4 488.0,383.4 488.3,383.3 488.6,380.5 488.9,384.4 489.2,382.6 489.5,383.9 489.8,385.0 490.1,383.1 490.4,380.8 490.7,383.7 491.0,383.7 491.3,384.1 491.6,385.9 491.9,383.7 492.2,383.8 492.5,389.2 492.8,387.7 493.1,384.9 493.4,383.0 493.7,384.5 494.0,386.9 494.3,388.4 494.6,392.7 494.9,386.2 495.2,387.6 495.5,386.6 495.8,388.0 496.1,387.2 496.4,385.7 496.7,391.4 497.0,389.4 497.3,392.7 497.6,388.4 497.9,390.6 498.2,391.9 498.5,385.6 498.8,387.3 499.1,392.8 499.4,391.4 499.7,386.6 500.0,389.5 500.3,388.8 500.6,390.4 500.9,395.7 501.2,390.3 501.5,397.0 501.8,391.2 502.1,389.9 502.4,395.8 502.7,394.1 503.0,395.1 503.3,396.5 503.6,394.1 503.9,394.3 504.2,386.6 504.5,388.6 504.8,391.7 505.1,390.8 505.4,391.9 505.7,388.6 506.0,392.4 506.3,394.4 506.6,390.4 506.9,390.7 507.2,389.6 507.5,390.4 507.8,388.2 508.1,386.1 508.4,387.5 508.7,387.0 509.0,382.5 509.3,386.7 509.6,385.9 509.9,386.1 510.2,383.9 510.5,386.3 510.8,386.5 511.1,382.9 511.4,385.3 511.7,386.4 512.0,386.1 512.3,381.7 512.6,381.4 512.9,384.0 513.2,381.2 513.5,390.3 513.8,381.8 514.1,381.9 514.4,385.6 514.7,382.9 515.0,378.1 515.3,383.9 515.6,381.9 515.9,383.3 516.2,380.6 516.5,382.7 516.8,384.8 517.1,385.3 517.4,382.9 517.7,384.2 518.0,384.1 518.3,386.9 518.6,386.5 518.9,384.0 519.2,389.1 519.5,386.0 519.8,389.1 520.1,386.1 520.4,389.5 520.7,388.7 521.0,389.5 521.3,390.9 521.6,391.0 521.9,390.6 522.2,390.8 522.5,387.3 522.8,390.6 523.1,385.4 523.4,385.4 523.7,390.5 524.0,390.8 524.3,395.3 524.6,393.3 524.9,394.5 525.2,390.9 525.5,392.8 525.8,394.6 526.1,392.9 526.4,392.4 526.7,391.7 527.0,388.9 527.3,388.8 527.6,387.3 527.9,391.8 528.2,389.9 528.5,388.6 528.8,391.0 529.1,388.4 529.4,392.3 529.7,394.2 530.0,390.1 530.3,386.9 530.6,384.5 530.9,393.2 531.2,388.9 531.5,384.4 531.8,389.9 532.1,382.5 532.4,385.4 532.7,385.6 533.0,385.0 533.3,382.7 533.6,391.5 533.9,384.1 534.2,385.9 534.5,384.8 534.8,380.4 535.1,382.9 535.4,384.7 535.7,386.4 536.0,383.0 536.3,384.8 536.6,382.9 536.9,385.3 537.2,377.4 537.5,385.3 537.8,382.2 538.1,382.4 538.4,376.7 538.7,381.4 539.0,385.8 539.3,390.4 539.6,382.8 539.9,383.1 540.2,386.3 540.5,386.0 540.8,384.0 541.1,385.4 541.4,385.1 541.7,388.0 542.0,388.7 542.3,391.5 542.6,389.7 542.9,389.4 543.2,388.4 543.5,390.7 543.8,386.0 544.1,394.5 544.4,389.9 544.7,393.1 545.0,387.7 545.3,392.7 545.6,391.3 545.9,390.1 546.2,389.0 546.5,388.7 546.8,395.8 547.1,394.5 547.4,391.8 547.7,392.1 548.0,389.8 548.3,387.0 548.6,387.1 548.9,390.2 549.2,391.4 549.5,388.7 549.8,393.8 550.1,392.9 550.4,391.9 550.7,386.8 551.0,390.7 551.3,391.0 551.6,387.6 551.9,385.0 552.2,395.4 552.5,391.8 552.8,388.9 553.1,393.7 553.4,392.2 553.7,390.2 554.0,389.3 554.3,390.4 554.6,391.9 554.9,387.9 555.2,386.8 555.5,388.6 555.8,379.5 556.1,386.7 556.4,385.2 556.7,385.9 557.0,385.2 557.3,386.3 557.6,385.4 557.9,385.1 558.2,384.4 558.5,385.7 558.8,383.0 559.1,386.7 559.4,379.7 559.7,384.5 560.0,385.1 560.3,380.5 560.6,382.7 560.9,387.2 561.2,383.5 561.5,381.6 561.8,376.2 562.1,384.9 562.4,384.4 562.7,385.9 563.0,389.8 563.3,384.7 563.6,385.2 563.9,383.3 564.2,385.2 564.5,385.5 564.8,387.8 565.1,387.6 565.4,384.5 565.7,385.5" fill="none" stroke="#22528e" stroke-width="0.7" stroke-linejoin="round"/><rect x="386.3" y="321" width="283.7" height="80.4" fill="none" stroke="#7a7a7a" stroke-width="1.3"/><line x1="386.3" y1="347.8" x2="670" y2="347.8" stroke="#8e8e8e" stroke-width="2"/><line x1="386.3" y1="374.7" x2="670" y2="374.7" stroke="#8e8e8e" stroke-width="2"/><text x="383.1" y="324.8" font-family="Liberation Sans" font-size="5.2" fill="#333" text-anchor="end" xml:space="preserve">1.4</text><rect x="385.1" y="322.4" width="1.4" height="1.2" fill="#6060ff"/><text x="383.1" y="329.3" font-family="Liberation Sans" font-size="5.2" fill="#333" text-anchor="end" xml:space="preserve">0.7</text><rect x="385.1" y="326.9" width="1.4" height="1.2" fill="#6060ff"/><text x="383.1" y="335.8" font-family="Liberation Sans" font-size="5.2" fill="#333" text-anchor="end" xml:space="preserve">0.0</text><rect x="385.1" y="333.4" width="1.4" height="1.2" fill="#6060ff"/><text x="383.1" y="342.3" font-family="Liberation Sans" font-size="5.2" fill="#333" text-anchor="end" xml:space="preserve">-0.7</text><rect x="385.1" y="339.9" width="1.4" height="1.2" fill="#6060ff"/><text x="383.1" y="346.8" font-family="Liberation Sans" font-size="5.2" fill="#333" text-anchor="end" xml:space="preserve">-1.4</text><rect x="385.1" y="344.4" width="1.4" height="1.2" fill="#6060ff"/><text x="383.1" y="351.3" font-family="Liberation Sans" font-size="5.2" fill="#333" text-anchor="end" xml:space="preserve">0.6</text><rect x="385.1" y="348.9" width="1.4" height="1.2" fill="#6060ff"/><text x="383.1" y="356.3" font-family="Liberation Sans" font-size="5.2" fill="#333" text-anchor="end" xml:space="preserve">0.3</text><rect x="385.1" y="353.9" width="1.4" height="1.2" fill="#6060ff"/><text x="383.1" y="363.3" font-family="Liberation Sans" font-size="5.2" fill="#333" text-anchor="end" xml:space="preserve">0.0</text><rect x="385.1" y="360.9" width="1.4" height="1.2" fill="#6060ff"/><text x="383.1" y="369.8" font-family="Liberation Sans" font-size="5.2" fill="#333" text-anchor="end" xml:space="preserve">-0.3</text><rect x="385.1" y="367.4" width="1.4" height="1.2" fill="#6060ff"/><text x="383.1" y="374.3" font-family="Liberation Sans" font-size="5.2" fill="#333" text-anchor="end" xml:space="preserve">-0.6</text><rect x="385.1" y="371.9" width="1.4" height="1.2" fill="#6060ff"/><text x="383.1" y="378.3" font-family="Liberation Sans" font-size="5.2" fill="#333" text-anchor="end" xml:space="preserve">1.0</text><rect x="385.1" y="375.9" width="1.4" height="1.2" fill="#6060ff"/><text x="383.1" y="382.8" font-family="Liberation Sans" font-size="5.2" fill="#333" text-anchor="end" xml:space="preserve">0.5</text><rect x="385.1" y="380.4" width="1.4" height="1.2" fill="#6060ff"/><text x="383.1" y="389.6" font-family="Liberation Sans" font-size="5.2" fill="#333" text-anchor="end" xml:space="preserve">0.0</text><rect x="385.1" y="387.2" width="1.4" height="1.2" fill="#6060ff"/><text x="383.1" y="396.3" font-family="Liberation Sans" font-size="5.2" fill="#333" text-anchor="end" xml:space="preserve">-0.5</text><rect x="385.1" y="393.9" width="1.4" height="1.2" fill="#6060ff"/><text x="383.1" y="400.8" font-family="Liberation Sans" font-size="5.2" fill="#333" text-anchor="end" xml:space="preserve">-1.0</text><rect x="385.1" y="398.4" width="1.4" height="1.2" fill="#6060ff"/><text x="387.3" y="408.9" font-family="Liberation Sans" font-size="5.2" fill="#333" text-anchor="middle" xml:space="preserve">0</text><text x="457.2" y="408.9" font-family="Liberation Sans" font-size="5.2" fill="#333" text-anchor="middle" xml:space="preserve">0.05</text><text x="527.1" y="408.9" font-family="Liberation Sans" font-size="5.2" fill="#333" text-anchor="middle" xml:space="preserve">0.1</text><rect x="363.7" y="411.4" width="28.8" height="5.5" fill="#e2e2e2" stroke="#4a4a4a" stroke-width="1" rx="0.7"/><line x1="364.4" y1="412.4" x2="391.8" y2="412.4" stroke="#f8f8f8" stroke-width="0.8"/><text x="378.1" y="415.8" font-family="Liberation Sans" font-size="5.4" fill="#333" text-anchor="middle" xml:space="preserve">Linear</text><rect x="637.3" y="411.4" width="32.2" height="5.5" fill="#e2e2e2" stroke="#4a4a4a" stroke-width="1" rx="0.7"/><line x1="638" y1="412.4" x2="668.8" y2="412.4" stroke="#f8f8f8" stroke-width="0.8"/><text x="653.4" y="415.8" font-family="Liberation Sans" font-size="5.4" fill="#333" text-anchor="middle" xml:space="preserve">Seconds</text><text x="369.5" y="362" font-family="Liberation Sans" font-size="8" fill="#3c3cff" text-anchor="middle" xml:space="preserve">g</text><rect x="68.4" y="426.3" width="275.3" height="79.7" fill="#ffffff"/><line x1="120.45" y1="427.3" x2="120.45" y2="505" stroke="#bdbdbd" stroke-width="0.7" stroke-dasharray="1.2,2.2"/><line x1="171.2" y1="427.3" x2="171.2" y2="505" stroke="#bdbdbd" stroke-width="0.7" stroke-dasharray="1.2,2.2"/><line x1="221.95" y1="427.3" x2="221.95" y2="505" stroke="#bdbdbd" stroke-width="0.7" stroke-dasharray="1.2,2.2"/><line x1="272.7" y1="427.3" x2="272.7" y2="505" stroke="#bdbdbd" stroke-width="0.7" stroke-dasharray="1.2,2.2"/><line x1="323.45" y1="427.3" x2="323.45" y2="505" stroke="#bdbdbd" stroke-width="0.7" stroke-dasharray="1.2,2.2"/><line x1="69.4" y1="447.3" x2="342.7" y2="447.3" stroke="#bdbdbd" stroke-width="0.7" stroke-dasharray="1.2,2.2"/><line x1="69.4" y1="466.3" x2="342.7" y2="466.3" stroke="#bdbdbd" stroke-width="0.7" stroke-dasharray="1.2,2.2"/><line x1="69.4" y1="485.3" x2="342.7" y2="485.3" stroke="#bdbdbd" stroke-width="0.7" stroke-dasharray="1.2,2.2"/><path d="M69.5 488.4V500M70.5 487.8V498.5M71.5 487.2V501.2M72.5 490.3V498.9M73.5 486.6V501.3M74.5 487.1V499.9M75.5 487.1V497.7M76.5 488.5V500.5M77.5 490.4V498.1M78.5 485.6V498.5M79.5 489.5V500.3M80.5 488.6V500.3M81.5 485.2V501.9M82.5 479.5V498.5M83.5 490.2V501.1M84.5 489.7V502.7M85.5 489V501M86.5 490.5V501M87.5 485.1V500.9M88.5 485.4V499.6M89.5 486V499.5M90.5 489V500.6M91.5 487V498.6M92.5 487.7V499M93.5 482.3V499M94.5 490.7V499.7M95.5 493.1V498.3M96.5 481.4V497.8M97.5 490.4V504.1M98.5 487.8V500.7M99.5 489.4V501.1M100.5 492.8V497.6M101.5 490.7V499.9M102.5 489.1V499.9M103.5 490V501.4M104.5 488.8V501.8M105.5 488.3V500.7M106.5 487.2V499.6M107.5 488.9V500.6M108.5 485V500.2M109.5 489.6V501.8M110.5 492.1V503M111.5 484V501.1M112.5 487.3V504.7M113.5 492.1V502M114.5 494V505.3M115.5 491.6V504.9M116.5 495.6V505.3M117.5 488.3V504.2M118.5 488.7V501.9M119.5 495.1V501.1M120.5 490.7V502.3M121.5 487.2V500.5M122.5 491.7V502.5M123.5 494.8V501.6M124.5 491.9V499.9M125.5 491.7V502.6M126.5 492.1V500.9M127.5 484.5V500M128.5 490.9V501.6M129.5 487.9V501.9M130.5 490.2V501.2M131.5 489.7V503.5M132.5 493.1V502.2M133.5 486V501.5M134.5 485.5V500.5M135.5 492.7V500.7M136.5 489.5V504.4M137.5 491.1V502.7M138.5 486.8V500.6M139.5 491.9V502.8M140.5 493.1V502.3M141.5 493.6V504.4M142.5 495.1V502.4M143.5 493.9V503.1M144.5 494.8V502.6M145.5 494.1V501.3M146.5 489.5V503.2M147.5 480.5V500.7M148.5 491.5V505.3M149.5 488V500.4M150.5 489.3V505.3M151.5 481.4V500.9M152.5 491.4V500.9M153.5 484.3V501.4M154.5 490.4V505.3M155.5 482V500.3M156.5 486.4V500.8M157.5 490.7V501.1M158.5 486.3V503.6M159.5 482.5V500.4M160.5 493.4V505.3M161.5 489.1V501.4M162.5 490.3V504.7M163.5 492.2V505.3M164.5 493.2V501M165.5 482.6V503.3M166.5 492V504.1M167.5 484.4V505M168.5 491.1V502.1M169.5 483.4V503.7M170.5 493.7V503.1M171.5 477.4V503.1M172.5 485.4V502.2M173.5 491V500.4M174.5 483.7V502.5M175.5 487.3V501.8M176.5 491.1V500.4M177.5 487.4V500.1M178.5 491.5V500.3M179.5 493.4V500.8M180.5 491V501.6M181.5 488.2V501.6M182.5 483.7V499.8M183.5 481.7V500.5M184.5 490.6V500M185.5 492.1V501.6M186.5 484.6V502.8M187.5 494.3V502.8M188.5 490.2V499.6M189.5 491.9V500.3M190.5 492.4V501.3M191.5 492.8V502.3M192.5 487.9V501.4M193.5 490.5V502.6M194.5 489.3V505.3M195.5 491V505.3M196.5 488.8V502.3M197.5 490.5V504.7M198.5 494.2V504.5M199.5 479.7V503.1M200.5 492.6V501.9M201.5 491.8V503.5M202.5 488.3V500.4M203.5 491.8V501.2M204.5 489.8V502.1M205.5 488.6V501.4M206.5 484.8V502.4M207.5 491.5V501.4M208.5 484.2V501.6M209.5 490.9V502.6M210.5 488.1V501.3M211.5 489.4V500.2M212.5 489.9V500.9M213.5 489.6V499.8M214.5 486.1V500.9M215.5 492.4V502.6M216.5 487.8V503M217.5 493.9V502.5M218.5 486.7V502.6M219.5 483.4V504.4M220.5 481.4V503M221.5 492V501.5M222.5 484.9V505.3M223.5 493V504.1M224.5 488.5V505.3M225.5 486.9V502.8M226.5 490.6V501.5M227.5 488.7V502.8M228.5 487V503.6M229.5 493V503.6M230.5 482.8V500.7M231.5 480.8V501.2M232.5 487.4V502M233.5 491.7V502.5M234.5 486.5V501.3M235.5 491.1V500.5M236.5 489.4V499.5M237.5 477.5V499.9M238.5 487.5V501.3M239.5 493.1V500.4M240.5 490.9V501.5M241.5 469.2V503.4M242.5 487.7V501.8M243.5 493.8V500.5M244.5 489.5V502.6M245.5 478.7V502.8M246.5 491.4V503.9M247.5 482.7V503.7M248.5 491.4V505.3M249.5 490.1V502.7M250.5 495.3V504.7M251.5 491.6V502.2M252.5 491.3V500.8M253.5 490.3V501.1M254.5 490.6V503.7M255.5 476.6V501.1M256.5 494.9V505.3M257.5 492.5V501.9M258.5 491.4V501.6M259.5 479.6V505.3M260.5 487.7V500.9M261.5 489.2V501.3M262.5 490V501.4M263.5 493.5V500.6M264.5 492.4V503.4M265.5 491.3V502.8M266.5 490.8V505.3M267.5 494.1V503M268.5 492.9V501.6M269.5 491.7V502.7M270.5 491.7V502.8M271.5 482.3V503.5M272.5 491.6V505.1M273.5 494.1V502.9M274.5 495.3V505.3M275.5 495.1V505.3M276.5 488.2V502.7M277.5 487V503.6M278.5 492.1V503.4M279.5 488.4V503.1M280.5 494.2V504.6M281.5 490V502.2M282.5 486.1V504M283.5 493.5V500.1M284.5 491.8V500.1M285.5 488.8V503.2M286.5 488.5V505.2M287.5 487.5V502.2M288.5 492.4V499.9M289.5 492.3V504.1M290.5 490.3V501.3M291.5 491V500.6M292.5 493.2V501.8M293.5 492.3V499.1M294.5 489.1V501.9M295.5 487V501.8M296.5 493.1V499.7M297.5 487.4V504.1M298.5 487.6V500.8M299.5 493.1V501M300.5 493.5V504.2M301.5 491.4V503.3M302.5 492.7V504.6M303.5 483.8V504M304.5 479.3V503.3M305.5 482.5V503.9M306.5 495V500.8M307.5 493V502.4M308.5 485.3V504.7M309.5 492.6V503.1M310.5 494.4V501.3M311.5 485.4V502.6M312.5 493.3V503.2M313.5 492.8V502.1M314.5 475.3V502.4M315.5 479.4V501.2M316.5 494.2V501.5M317.5 482.8V499.5M318.5 487.4V502.6M319.5 487.4V502M320.5 490.9V500.2M321.5 488.6V500.3M322.5 484V502.9M323.5 483.3V504.6M324.5 494.6V503.2M325.5 492.2V505.3M326.5 493.8V504.3M327.5 494.2V501.7M328.5 494.8V502.3M329.5 494.9V502.6M330.5 490.3V505.3M331.5 494.5V502M332.5 489.4V501.9M333.5 492.1V501.9M334.5 492.5V505M335.5 488.2V501.5M336.5 488.7V503.5M337.5 488.3V500.8M338.5 491.7V502.5M339.5 492.1V500.3M340.5 462V501.9M341.5 493.7V504.7M342.5 487.2V500.2" stroke="#9db3d2" stroke-width="1" fill="none"/><path d="M69.5 491.7V500.2M70.5 484.2V498.3M71.5 480.8V496.9M72.5 485.4V496.4M73.5 489.4V499.1M74.5 487.6V497M75.5 488.6V497.8M76.5 484.3V498.3M77.5 488.7V497.6M78.5 487.7V498.7M79.5 487.7V502.7M80.5 490.1V500.1M81.5 486.8V499.2M82.5 491.2V502.8M83.5 493.5V498.6M84.5 486.1V501.5M85.5 488.2V501M86.5 489.3V501M87.5 492V500.8M88.5 488.9V500M89.5 490.2V499M90.5 481.9V501.2M91.5 492.8V499M92.5 489.1V499.8M93.5 487.7V499.4M94.5 484.9V499.5M95.5 492.6V499.3M96.5 490V498.7M97.5 487.7V498.8M98.5 478.1V502.6M99.5 488V502M100.5 491.9V500.9M101.5 486.6V500.4M102.5 484.2V498.8M103.5 492.9V501.2M104.5 483.8V501.8M105.5 490.7V500.6M106.5 491.4V499.9M107.5 491V501.4M108.5 491.5V499.4M109.5 491.8V503M110.5 492.5V502.9M111.5 490.5V502M112.5 485.8V504.2M113.5 491.9V502.2M114.5 494.6V505.3M115.5 491V505.3M116.5 491.4V502.8M117.5 485.5V503.2M118.5 488.3V502.9M119.5 493.8V502.4M120.5 490V503.8M121.5 491.6V500.9M122.5 493.3V499.6M123.5 491.6V502M124.5 492.9V500.9M125.5 488.2V505.3M126.5 490.8V502.5M127.5 489.4V500.5M128.5 488V502.6M129.5 493.4V501.3M130.5 492.3V502.1M131.5 489.8V505.3M132.5 492.9V503.6M133.5 494.1V500.8M134.5 492.5V500.3M135.5 494V500.4M136.5 484.5V503.2M137.5 493.1V502.5M138.5 492.7V501.2M139.5 493.3V503.8M140.5 485.7V503.1M141.5 488.6V504.8M142.5 492.1V503.1M143.5 490.9V502.7M144.5 490.5V503.4M145.5 494.9V504.1M146.5 492.3V502.7M147.5 493.9V500.6M148.5 493.7V503M149.5 491.4V500.4M150.5 491V502.1M151.5 494.4V501M152.5 488.6V500.3M153.5 493.2V501.8M154.5 491V502.4M155.5 493.3V500.3M156.5 490.6V501.2M157.5 486.5V500.6M158.5 492.1V503.8M159.5 493.4V500.8M160.5 487.8V502.9M161.5 483.6V502.1M162.5 480.3V503.3M163.5 491.1V502.9M164.5 494V500.3M165.5 493.9V503.6M166.5 492.4V503.8M167.5 493.1V504.9M168.5 492.3V501.7M169.5 495V504.3M170.5 494.2V503.5M171.5 489.9V502.8M172.5 493.4V505.3M173.5 492V500.6M174.5 493.9V503.3M175.5 492.9V500.1M176.5 493.8V500.7M177.5 488V499.1M178.5 489.7V500.2M179.5 493V500.7M180.5 492V501.7M181.5 492.2V500.4M182.5 486.8V499.3M183.5 488.2V500.8M184.5 493V503.4M185.5 492.8V502M186.5 491.4V502.8M187.5 494.5V502.4M188.5 492.1V501.6M189.5 486.1V501.2M190.5 489V502.2M191.5 494.7V502.7M192.5 493.3V502M193.5 492.6V500.6M194.5 492.6V505.3M195.5 486.4V504M196.5 492V502.2M197.5 488.4V504.4M198.5 494.4V503.2M199.5 486.2V505.1M200.5 483.4V501.3M201.5 490.6V502.9M202.5 492.7V500.9M203.5 492.5V500.2M204.5 492.4V502.2M205.5 490V501M206.5 489.4V502.1M207.5 491.6V502.2M208.5 489.2V502.9M209.5 489.3V503.3M210.5 491.5V501.4M211.5 490.3V500M212.5 491.9V504.5M213.5 488.1V499.3M214.5 479.6V500.8M215.5 492.6V502.7M216.5 489.9V502.5M217.5 488.2V502.2M218.5 493.3V502.1M219.5 493.6V504.4M220.5 491.5V503.8M221.5 493.7V502M222.5 491.5V505.3M223.5 494.1V504.5M224.5 491.8V503M225.5 491.8V503.2M226.5 493.9V501M227.5 492.9V504.4M228.5 492.6V502.6M229.5 493.8V503.8M230.5 493.4V500.6M231.5 491.7V501.2M232.5 491.5V501.5M233.5 492.7V502.8M234.5 485.1V500.2M235.5 489.1V501M236.5 490.5V501.4M237.5 491.2V500.5M238.5 489.7V500.1M239.5 490.2V499.3M240.5 492.7V500.4M241.5 489.1V503.9M242.5 488.8V501.5M243.5 494.5V501.4M244.5 488.9V505.3M245.5 493V502.9M246.5 493.2V502.9M247.5 486.9V503.7M248.5 490.3V503.2M249.5 490.3V503.1M250.5 493.8V502.1M251.5 491.9V502.3M252.5 486.3V501.3M253.5 492.6V503.4M254.5 492.7V503.3M255.5 492.4V503M256.5 490.8V502.6M257.5 489.4V499.6M258.5 489.3V503.6M259.5 491.4V502.8M260.5 485.8V500.1M261.5 490V501.7M262.5 492.5V500.1M263.5 493.3V501.9M264.5 491.9V502.7M265.5 490.4V501.4M266.5 493V503.7M267.5 492V502.6M268.5 492.6V504.3M269.5 493.3V502.3M270.5 491.7V504M271.5 492.6V504.5M272.5 495.8V503M273.5 491.5V502.4M274.5 494.1V504.1M275.5 494.4V505.3M276.5 494.4V502.1M277.5 495.5V505.3M278.5 489.7V500.5M279.5 488.5V504M280.5 494.9V503.7M281.5 493.1V505.2M282.5 494.1V503.8M283.5 491.2V500.3M284.5 492.8V500.4M285.5 490.9V500.6M286.5 492.1V505.1M287.5 491.4V503.3M288.5 486.9V501.3M289.5 492.1V501.9M290.5 491.2V501M291.5 493.7V499.9M292.5 494.1V502.7M293.5 487V499.2M294.5 489.6V501.2M295.5 491.9V501.1M296.5 493.2V499.7M297.5 481.4V503.9M298.5 494.1V501.9M299.5 494.9V502.3M300.5 493.1V504.8M301.5 489.7V502.5M302.5 488.7V504M303.5 493.6V502.8M304.5 493.6V502.2M305.5 492.9V504.4M306.5 493.4V500.4M307.5 493.1V500.9M308.5 492.1V505.3M309.5 489V504.3M310.5 491V501M311.5 493.9V502.2M312.5 492.5V503M313.5 490.5V502M314.5 489.1V502.5M315.5 490.2V501.3M316.5 492.4V500.8M317.5 489.7V499.8M318.5 492.6V503.1M319.5 488.7V503.3M320.5 493.8V502.5M321.5 493.2V501.4M322.5 493.1V503.2M323.5 488.7V503.7M324.5 495.5V503.6M325.5 492.1V505.3M326.5 494.3V505.2M327.5 493.7V500.9M328.5 493.6V505.1M329.5 493.2V502.8M330.5 494.3V503.8M331.5 493V502.4M332.5 491.2V502.6M333.5 488.9V501.9M334.5 493.2V503.6M335.5 491.9V502.8M336.5 492.5V502.6M337.5 485.4V502.5M338.5 491.3V503.2M339.5 489.7V501.6M340.5 491.8V500.6M341.5 492.5V502.5M342.5 483.8V502.7" stroke="#3f6ca4" stroke-width="1" fill="none"/><path d="M69.5 491.8V498.5M70.5 489.4V497.9M71.5 489.2V496.4M72.5 491.9V496.4M74.5 490.8V496.8M76.5 489.2V497.5M77.5 490.9V497.5M78.5 490.6V497.8M80.5 491V500M84.5 490.9V500.6M86.5 492.1V500.9M87.5 492.6V500.2M88.5 493.2V499.2M90.5 494.1V499.3M91.5 493.6V498.2M93.5 494.2V498.9M96.5 492.4V497.7M98.5 490.4V500.5M99.5 492.8V500.6M100.5 493.6V497.5M101.5 491.2V499.4M102.5 490.8V497.4M103.5 494V500M105.5 492.6V499.9M107.5 493.1V500.4M108.5 494.6V499.2M109.5 492.8V501.7M110.5 495.4V502.4M111.5 493.1V500.1M114.5 495.3V503.4M115.5 493.4V503.6M117.5 494.8V503M121.5 495V500.4M122.5 493.8V499.5M123.5 494.9V501.5M125.5 492V501.7M128.5 492.4V501M129.5 494.1V501.2M130.5 492.5V499.7M134.5 494.6V500M136.5 492.9V502M137.5 493.8V502.2M138.5 494.3V500.3M140.5 494.3V501.2M144.5 496V502M147.5 494.8V500.2M150.5 492V501.5M153.5 493.4V500M155.5 493.5V499.7M156.5 492.1V500.3M158.5 493.1V501.5M161.5 492.6V500.6M162.5 492.9V502.4M163.5 493.2V502.5M164.5 494.8V500M165.5 495V503.3M168.5 495V500.9M169.5 495.7V503.2M171.5 494.6V500.9M172.5 494.3V502.2M174.5 494V502M178.5 492V500M181.5 492.9V499.8M182.5 494.4V499.3M183.5 494.2V498.6M184.5 493.1V499.7M187.5 495V502.2M189.5 493.5V499.8M190.5 493V500.9M191.5 496V501.8M193.5 494.3V500.5M198.5 495.6V502.6M200.5 494.3V501.3M205.5 492.8V499.6M206.5 493.6V501.5M207.5 492V501.4M209.5 492.7V501.5M211.5 493.2V499.1M212.5 491.9V499.8M213.5 492.9V498.8M215.5 493.3V501.5M217.5 495V502.2M218.5 495.3V500.8M220.5 496.2V502.1M221.5 494V501M226.5 494V500M229.5 494V501.8M230.5 494.7V499.9M231.5 494.8V500.7M232.5 492.5V501.4M236.5 493.2V498.6M238.5 492.4V499.9M240.5 494.4V500.1M242.5 495.3V500.3M244.5 494.9V500.1M245.5 494.5V501.9M246.5 496.5V501.5M248.5 494.4V501.8M249.5 495.5V502.3M250.5 495.4V501.8M251.5 495.2V501.4M253.5 493.3V501.1M255.5 494V500.9M257.5 493.4V499.4M258.5 492.8V501.5M260.5 494.6V499.5M261.5 492.6V499.9M263.5 493.6V500M264.5 494V501.8M265.5 491.9V501.1M267.5 494.3V502.4M268.5 493.9V501.5M270.5 495.1V502.5M275.5 495.6V502.8M277.5 496.3V503.6M278.5 496.4V500.4M279.5 493.5V502.1M280.5 495.2V503.3M281.5 496.3V501.9M282.5 494.8V501.1M283.5 495.1V499.9M284.5 493V500M287.5 492.9V500.7M288.5 493.1V499.7M292.5 494.1V501M293.5 493.3V498.8M294.5 494.6V500.8M296.5 493.8V499.6M299.5 496.4V500.7M301.5 496.2V501.8M304.5 494V502.2M305.5 496.6V502.6M306.5 495.2V500.4M307.5 494.5V500.2M309.5 496.1V502.3M313.5 494.9V501.9M314.5 492V501.1M315.5 493V500.5M316.5 494.7V500.8M317.5 492.8V499.2M318.5 493.4V500.2M319.5 492.3V501.8M323.5 494.2V502.3M324.5 495.6V502.8M325.5 493.5V503.5M326.5 496V503.5M331.5 494.6V501M336.5 494.7V501M337.5 494.7V500.3M338.5 492.8V501.8" stroke="#053a7e" stroke-width="1" fill="none"/><path d="M73.5 489.8V498.9M75.5 489.5V497.5M79.5 491.8V497.5M81.5 490.1V498.9M82.5 492.6V498.3M83.5 493.9V498.3M85.5 494.3V500.7M89.5 491.4V498.8M92.5 491.5V498.8M94.5 493.2V498M95.5 493.4V498M97.5 491.2V498.6M104.5 492.2V500.1M106.5 493V499.4M112.5 493.2V503.6M113.5 493.7V500.7M116.5 495.8V501.6M118.5 494.6V501.8M119.5 495.6V500.6M120.5 492.5V501.8M124.5 494V499.2M126.5 492.4V498.9M127.5 493.4V499.3M131.5 491.9V500.6M132.5 495V502M133.5 494.3V499.8M135.5 495.5V499.6M139.5 494.4V502.6M141.5 495.7V502M142.5 496V502.2M143.5 496.3V502.2M145.5 495.7V501.3M146.5 493.4V502.2M148.5 494.4V502.3M149.5 493V500.4M151.5 494.7V500.8M152.5 492.9V500M154.5 494.1V500.1M157.5 493.9V500M159.5 493.6V499.6M160.5 495.3V501.6M166.5 494.3V503M167.5 493.3V502.5M170.5 495V502.3M173.5 493V500.1M175.5 493V500M176.5 493.9V500.1M177.5 493.8V498.9M179.5 494V500.6M180.5 493.8V500.7M185.5 492.8V501.3M186.5 491.9V502.1M188.5 495.5V499.4M192.5 495.5V500.2M194.5 494.6V503.2M195.5 493.8V503.9M196.5 494.5V501.9M197.5 493.5V503.1M199.5 493.9V502.7M201.5 494.7V502.9M202.5 493.4V499.8M203.5 492.7V500.1M204.5 493.4V501.2M208.5 493.5V501.2M210.5 492.8V500.6M214.5 493.4V500.4M216.5 493.5V501.9M219.5 494.5V503.4M222.5 494.2V503.7M223.5 494.7V502.8M224.5 495.6V502.7M225.5 493.3V502.4M227.5 493.4V501.8M228.5 493.7V502.2M233.5 493V501.8M234.5 494.2V499.3M235.5 494.2V500.5M237.5 492.7V499M239.5 493.5V498.7M241.5 493.2V502.1M243.5 495.4V500M247.5 496.3V502.5M252.5 496.1V500.3M254.5 493.3V502.6M256.5 495.6V502.2M259.5 494.2V501.8M262.5 492.8V499.4M266.5 494.9V499.1M269.5 493.8V502.2M271.5 494.2V503.1M272.5 496.1V502.8M273.5 494.8V501.1M274.5 496.5V503M276.5 494.5V502M285.5 492.6V500M286.5 492.8V502.4M289.5 494.8V501.7M290.5 492.8V500.7M291.5 493.7V499.6M295.5 492.3V501M297.5 493.5V501.9M298.5 495.9V499.9M300.5 496.1V502.9M302.5 495.1V503M303.5 494.8V502.4M308.5 495.1V503.4M310.5 495.7V500.2M311.5 495.8V501.8M312.5 494.5V502.5M320.5 494.6V500.1M321.5 494.3V499.9M322.5 494V501M327.5 495.2V500.6M328.5 495V502M329.5 495.5V502.5M330.5 495.9V503M332.5 495.2V501.8M333.5 494.6V501.8M334.5 494.2V502.4M335.5 493.4V501.4M339.5 492.4V500.3M340.5 492.5V499.7M341.5 494.6V502.1M342.5 492.1V500.1" stroke="#2d5d98" stroke-width="1" fill="none"/><line x1="69.5" y1="479" x2="69.5" y2="496" stroke="#9db3d2" stroke-width="1"/><line x1="69.5" y1="490.9" x2="69.5" y2="496" stroke="#3f6ca4" stroke-width="1"/><line x1="75.5" y1="483.6" x2="75.5" y2="496" stroke="#9db3d2" stroke-width="1"/><line x1="75.5" y1="489.8" x2="75.5" y2="496" stroke="#3f6ca4" stroke-width="1"/><line x1="78.5" y1="474.7" x2="78.5" y2="496" stroke="#9db3d2" stroke-width="1"/><line x1="78.5" y1="491.74" x2="78.5" y2="496" stroke="#3f6ca4" stroke-width="1"/><line x1="82.5" y1="471.8" x2="82.5" y2="496" stroke="#9db3d2" stroke-width="1"/><line x1="82.5" y1="488.74" x2="82.5" y2="496" stroke="#3f6ca4" stroke-width="1"/><line x1="85.5" y1="476.2" x2="85.5" y2="496" stroke="#9db3d2" stroke-width="1"/><line x1="85.5" y1="482.14" x2="85.5" y2="496" stroke="#3f6ca4" stroke-width="1"/><line x1="89.5" y1="450.2" x2="89.5" y2="496" stroke="#9db3d2" stroke-width="1"/><line x1="89.5" y1="470.81" x2="89.5" y2="496" stroke="#3f6ca4" stroke-width="1"/><line x1="93.5" y1="481.4" x2="93.5" y2="496" stroke="#9db3d2" stroke-width="1"/><line x1="93.5" y1="488.7" x2="93.5" y2="496" stroke="#3f6ca4" stroke-width="1"/><line x1="98.5" y1="475.2" x2="98.5" y2="496" stroke="#9db3d2" stroke-width="1"/><line x1="98.5" y1="487.68" x2="98.5" y2="496" stroke="#3f6ca4" stroke-width="1"/><line x1="108.5" y1="478.4" x2="108.5" y2="496" stroke="#9db3d2" stroke-width="1"/><line x1="108.5" y1="488.96" x2="108.5" y2="496" stroke="#3f6ca4" stroke-width="1"/><line x1="113.5" y1="487.2" x2="113.5" y2="496" stroke="#9db3d2" stroke-width="1"/><line x1="113.5" y1="491.6" x2="113.5" y2="496" stroke="#3f6ca4" stroke-width="1"/><line x1="118.5" y1="428.4" x2="118.5" y2="496" stroke="#9db3d2" stroke-width="1"/><line x1="118.5" y1="440.57" x2="118.5" y2="496" stroke="#3f6ca4" stroke-width="1"/><line x1="126.5" y1="488.7" x2="126.5" y2="496" stroke="#9db3d2" stroke-width="1"/><line x1="126.5" y1="492.35" x2="126.5" y2="496" stroke="#3f6ca4" stroke-width="1"/><line x1="139.5" y1="476.2" x2="139.5" y2="496" stroke="#9db3d2" stroke-width="1"/><line x1="139.5" y1="482.14" x2="139.5" y2="496" stroke="#3f6ca4" stroke-width="1"/><line x1="148.5" y1="482.8" x2="148.5" y2="496" stroke="#9db3d2" stroke-width="1"/><line x1="148.5" y1="489.4" x2="148.5" y2="496" stroke="#3f6ca4" stroke-width="1"/><line x1="152.5" y1="488.7" x2="152.5" y2="496" stroke="#9db3d2" stroke-width="1"/><line x1="152.5" y1="492.35" x2="152.5" y2="496" stroke="#3f6ca4" stroke-width="1"/><line x1="160.5" y1="486.5" x2="160.5" y2="496" stroke="#9db3d2" stroke-width="1"/><line x1="160.5" y1="490.3" x2="160.5" y2="496" stroke="#3f6ca4" stroke-width="1"/><line x1="168.5" y1="470.3" x2="168.5" y2="496" stroke="#9db3d2" stroke-width="1"/><line x1="168.5" y1="481.87" x2="168.5" y2="496" stroke="#3f6ca4" stroke-width="1"/><line x1="179.5" y1="482.1" x2="179.5" y2="496" stroke="#9db3d2" stroke-width="1"/><line x1="179.5" y1="489.05" x2="179.5" y2="496" stroke="#3f6ca4" stroke-width="1"/><line x1="185.5" y1="474" x2="185.5" y2="496" stroke="#9db3d2" stroke-width="1"/><line x1="185.5" y1="491.6" x2="185.5" y2="496" stroke="#3f6ca4" stroke-width="1"/><line x1="192.5" y1="485.8" x2="192.5" y2="496" stroke="#9db3d2" stroke-width="1"/><line x1="192.5" y1="490.9" x2="192.5" y2="496" stroke="#3f6ca4" stroke-width="1"/><line x1="196.5" y1="490.9" x2="196.5" y2="496" stroke="#9db3d2" stroke-width="1"/><line x1="196.5" y1="493.45" x2="196.5" y2="496" stroke="#3f6ca4" stroke-width="1"/><line x1="204.5" y1="488.7" x2="204.5" y2="496" stroke="#9db3d2" stroke-width="1"/><line x1="204.5" y1="492.35" x2="204.5" y2="496" stroke="#3f6ca4" stroke-width="1"/><line x1="219.5" y1="462" x2="219.5" y2="496" stroke="#9db3d2" stroke-width="1"/><line x1="219.5" y1="475.6" x2="219.5" y2="496" stroke="#3f6ca4" stroke-width="1"/><line x1="226.5" y1="484.3" x2="226.5" y2="496" stroke="#9db3d2" stroke-width="1"/><line x1="226.5" y1="490.15" x2="226.5" y2="496" stroke="#3f6ca4" stroke-width="1"/><line x1="229.5" y1="481.4" x2="229.5" y2="496" stroke="#9db3d2" stroke-width="1"/><line x1="229.5" y1="491.62" x2="229.5" y2="496" stroke="#3f6ca4" stroke-width="1"/><line x1="243.5" y1="484.3" x2="243.5" y2="496" stroke="#9db3d2" stroke-width="1"/><line x1="243.5" y1="490.15" x2="243.5" y2="496" stroke="#3f6ca4" stroke-width="1"/><line x1="263.5" y1="482" x2="263.5" y2="496" stroke="#9db3d2" stroke-width="1"/><line x1="263.5" y1="493.2" x2="263.5" y2="496" stroke="#3f6ca4" stroke-width="1"/><line x1="270.5" y1="463" x2="270.5" y2="496" stroke="#9db3d2" stroke-width="1"/><line x1="270.5" y1="484.45" x2="270.5" y2="496" stroke="#3f6ca4" stroke-width="1"/><line x1="288.5" y1="483.6" x2="288.5" y2="496" stroke="#9db3d2" stroke-width="1"/><line x1="288.5" y1="488.56" x2="288.5" y2="496" stroke="#3f6ca4" stroke-width="1"/><line x1="305.5" y1="485.8" x2="305.5" y2="496" stroke="#9db3d2" stroke-width="1"/><line x1="305.5" y1="490.9" x2="305.5" y2="496" stroke="#3f6ca4" stroke-width="1"/><line x1="309.5" y1="482.5" x2="309.5" y2="496" stroke="#9db3d2" stroke-width="1"/><line x1="309.5" y1="491.95" x2="309.5" y2="496" stroke="#3f6ca4" stroke-width="1"/><line x1="320.5" y1="484.3" x2="320.5" y2="496" stroke="#9db3d2" stroke-width="1"/><line x1="320.5" y1="488.98" x2="320.5" y2="496" stroke="#3f6ca4" stroke-width="1"/><line x1="333.5" y1="491.6" x2="333.5" y2="496" stroke="#9db3d2" stroke-width="1"/><line x1="333.5" y1="493.8" x2="333.5" y2="496" stroke="#3f6ca4" stroke-width="1"/><rect x="68.4" y="426.3" width="275.3" height="79.7" fill="none" stroke="#7a7a7a" stroke-width="1.3"/><text x="65.2" y="430.2" font-family="Liberation Sans" font-size="5.2" fill="#333" text-anchor="end" xml:space="preserve">0.0068</text><rect x="67.2" y="427.8" width="1.4" height="1.2" fill="#6060ff"/><text x="65.2" y="449.1" font-family="Liberation Sans" font-size="5.2" fill="#333" text-anchor="end" xml:space="preserve">0.0051</text><rect x="67.2" y="446.7" width="1.4" height="1.2" fill="#6060ff"/><text x="65.2" y="468.1" font-family="Liberation Sans" font-size="5.2" fill="#333" text-anchor="end" xml:space="preserve">0.0034</text><rect x="67.2" y="465.7" width="1.4" height="1.2" fill="#6060ff"/><text x="65.2" y="487.1" font-family="Liberation Sans" font-size="5.2" fill="#333" text-anchor="end" xml:space="preserve">0.0017</text><rect x="67.2" y="484.7" width="1.4" height="1.2" fill="#6060ff"/><text x="65.2" y="505.8" font-family="Liberation Sans" font-size="5.2" fill="#333" text-anchor="end" xml:space="preserve">0.0000</text><rect x="67.2" y="503.4" width="1.4" height="1.2" fill="#6060ff"/><text x="69.7" y="513.9" font-family="Liberation Sans" font-size="5.2" fill="#333" text-anchor="middle" xml:space="preserve">0</text><text x="120.45" y="513.9" font-family="Liberation Sans" font-size="5.2" fill="#333" text-anchor="middle" xml:space="preserve">5</text><text x="171.2" y="513.9" font-family="Liberation Sans" font-size="5.2" fill="#333" text-anchor="middle" xml:space="preserve">10</text><text x="221.95" y="513.9" font-family="Liberation Sans" font-size="5.2" fill="#333" text-anchor="middle" xml:space="preserve">15</text><text x="272.7" y="513.9" font-family="Liberation Sans" font-size="5.2" fill="#333" text-anchor="middle" xml:space="preserve">20</text><text x="323.45" y="513.9" font-family="Liberation Sans" font-size="5.2" fill="#333" text-anchor="middle" xml:space="preserve">25</text><rect x="344.7" y="454.5" width="6.5" height="24" fill="#ffff00" stroke="#333" stroke-width="1"/><text x="346.05" y="466.5" font-family="Liberation Sans" font-size="5.2" fill="#2828c8" text-anchor="middle" transform="rotate(90 346.05 466.5)" xml:space="preserve">Vertical</text><rect x="37.5" y="516.6" width="28.8" height="5.5" fill="#e2e2e2" stroke="#4a4a4a" stroke-width="1" rx="0.7"/><line x1="38.2" y1="517.6" x2="65.6" y2="517.6" stroke="#f8f8f8" stroke-width="0.8"/><text x="51.9" y="521" font-family="Liberation Sans" font-size="5.4" fill="#333" text-anchor="middle" xml:space="preserve">Linear</text><rect x="311.2" y="516.6" width="32.3" height="5.5" fill="#e2e2e2" stroke="#4a4a4a" stroke-width="1" rx="0.7"/><line x1="311.9" y1="517.6" x2="342.8" y2="517.6" stroke="#f8f8f8" stroke-width="0.8"/><text x="327.35" y="521" font-family="Liberation Sans" font-size="5.4" fill="#333" text-anchor="middle" xml:space="preserve">Orders</text><text x="42.8" y="465.9" font-family="Liberation Sans" font-size="7.3" fill="#3c3cff" text-anchor="middle" transform="rotate(-90 42.8 465.9)" textLength="17.2" lengthAdjust="spacingAndGlyphs" xml:space="preserve">g rms</text><rect x="387.6" y="426.3" width="282.2" height="79.7" fill="#ffffff"/><line x1="416.95" y1="427.3" x2="416.95" y2="505" stroke="#bdbdbd" stroke-width="0.7" stroke-dasharray="1.2,2.2"/><line x1="444.9" y1="427.3" x2="444.9" y2="505" stroke="#bdbdbd" stroke-width="0.7" stroke-dasharray="1.2,2.2"/><line x1="472.85" y1="427.3" x2="472.85" y2="505" stroke="#bdbdbd" stroke-width="0.7" stroke-dasharray="1.2,2.2"/><line x1="500.8" y1="427.3" x2="500.8" y2="505" stroke="#bdbdbd" stroke-width="0.7" stroke-dasharray="1.2,2.2"/><line x1="528.75" y1="427.3" x2="528.75" y2="505" stroke="#bdbdbd" stroke-width="0.7" stroke-dasharray="1.2,2.2"/><line x1="556.7" y1="427.3" x2="556.7" y2="505" stroke="#bdbdbd" stroke-width="0.7" stroke-dasharray="1.2,2.2"/><line x1="584.65" y1="427.3" x2="584.65" y2="505" stroke="#bdbdbd" stroke-width="0.7" stroke-dasharray="1.2,2.2"/><line x1="612.6" y1="427.3" x2="612.6" y2="505" stroke="#bdbdbd" stroke-width="0.7" stroke-dasharray="1.2,2.2"/><line x1="640.55" y1="427.3" x2="640.55" y2="505" stroke="#bdbdbd" stroke-width="0.7" stroke-dasharray="1.2,2.2"/><line x1="668.5" y1="427.3" x2="668.5" y2="505" stroke="#bdbdbd" stroke-width="0.7" stroke-dasharray="1.2,2.2"/><line x1="388.6" y1="447" x2="668.8" y2="447" stroke="#bdbdbd" stroke-width="0.7" stroke-dasharray="1.2,2.2"/><line x1="388.6" y1="466" x2="668.8" y2="466" stroke="#bdbdbd" stroke-width="0.7" stroke-dasharray="1.2,2.2"/><line x1="388.6" y1="485" x2="668.8" y2="485" stroke="#bdbdbd" stroke-width="0.7" stroke-dasharray="1.2,2.2"/><path d="M388.5 472V505.3M389.5 463.7V498.6M390.5 465.8V494.1M391.5 474.5V494M392.5 468V493.3M393.5 468.6V492M394.5 464.6V494.7M395.5 453.4V496.6M396.5 461.1V494.3M397.5 476.4V497.7M398.5 444.3V497.1M399.5 453.4V491.3M400.5 449.8V494.9M401.5 473.3V493.1M402.5 434.2V505.3M403.5 461.8V498.6M404.5 448.4V493.7M405.5 468.4V489.3M406.5 473.2V499.3M407.5 458V489.1M408.5 470.6V497.3M409.5 472.4V492.7M410.5 472.4V489.6M411.5 468.8V488.3M412.5 471.6V498.6M413.5 461V490.9M414.5 477.9V495.5M415.5 470.1V497.7M416.5 476.5V505.3M417.5 466.9V501.1M418.5 454.9V497.5M419.5 464.5V505.3M420.5 476.4V492.2M421.5 470.4V491.7M422.5 473.5V491.3M423.5 468.4V493M424.5 470.4V494.1M425.5 447.3V493M426.5 470.3V497.7M427.5 473.5V494.2M428.5 461.3V497.5M429.5 441.9V505.3M430.5 468.4V503.4M431.5 460.2V495M432.5 467.4V492.6M433.5 468V491.8M434.5 454.3V498.8M435.5 475.4V496.8M436.5 475.3V493.7M437.5 457.1V491.3M438.5 461V503.1M439.5 470V497.6M440.5 464.7V504.8M441.5 442.9V496.4M442.5 477.6V494.6M443.5 463.9V496.9M444.5 474V494.1M445.5 469.2V498.7M446.5 473.6V501.9M447.5 462.2V499.5M448.5 465.8V497.1M449.5 472.6V492.3M450.5 472.2V500M451.5 454.9V494.1M452.5 471.8V501.2M453.5 455.3V505.3M454.5 472.1V491M455.5 475.6V491.6M456.5 477.2V494.4M457.5 472.4V491.4M458.5 474.7V497.3M459.5 461.8V490.5M460.5 472.4V488.7M461.5 473.7V494.2M462.5 473.4V492.7M463.5 470.5V494.5M464.5 444V499.9M465.5 470.7V502.4M466.5 474.3V490.8M467.5 473.4V497.2M468.5 439.6V496.7M469.5 472.3V492.1M470.5 474.9V492.2M471.5 459.4V495.3M472.5 472V494.6M473.5 467.1V498.8M474.5 442.9V493.6M475.5 469.7V491.5M476.5 462.8V495.5M477.5 473V493.8M478.5 469V494.3M479.5 461.9V501M480.5 461.8V489.9M481.5 467.4V504.3M482.5 463.7V492M483.5 475V491.6M484.5 474.5V498.2M485.5 467.1V496.3M486.5 467.7V504.2M487.5 462.3V502.5M488.5 474.2V489M489.5 467.5V497.6M490.5 465V493.2M491.5 459.4V489.3M492.5 443.1V490M493.5 453.2V493.9M494.5 460.8V491.3M495.5 463V494.9M496.5 473.8V504.4M497.5 448.9V496.3M498.5 471.9V492.6M499.5 467.5V488.3M500.5 464.1V497.2M501.5 451.1V488.8M502.5 462.5V494.6M503.5 466.4V490.4M504.5 449.1V498.4M505.5 470.1V498M506.5 469.4V489.5M507.5 465.1V499.8M508.5 451V489.3M509.5 460.9V484.5M510.5 468V492M511.5 467V497.1M512.5 461.4V489.5M513.5 465.9V485.4M514.5 460.3V500M515.5 468.3V492.6M516.5 472.7V492.8M517.5 472.5V496.5M518.5 452.2V500M519.5 466.5V484.9M520.5 446V493.4M521.5 470.4V494.3M522.5 455.9V501.9M523.5 465.7V505.3M524.5 450V496.7M525.5 463.7V487.5M526.5 448.4V488.2M527.5 458.7V485.6M528.5 470.3V487.6M529.5 456.4V488.4M530.5 467.2V495.2M531.5 472.1V491.1M532.5 468.8V491.6M533.5 448.8V488.6M534.5 465V489.3M535.5 470.3V491.9M536.5 458.5V487.1M537.5 471V486.4M538.5 469.9V489.1M539.5 462.3V482.7M540.5 469.2V485M541.5 468.6V496M542.5 465.1V488.2M543.5 452.8V493.3M544.5 463.3V489.8M545.5 461.2V489.7M546.5 448.8V498.1M547.5 445.3V490.4M548.5 469.4V489.7M549.5 464.8V488.6M550.5 468.6V487.4M551.5 463.3V492.1M552.5 463.3V491M553.5 469V491.1M554.5 468.4V494M555.5 471.6V489.4M556.5 473.2V488.3M557.5 471.8V491.3M558.5 458.6V489M559.5 472.5V491.4M560.5 442.5V496.3M561.5 457.9V487.4M562.5 458.1V486.5M563.5 439.8V491M564.5 452.8V490.2M565.5 445.6V486.1M566.5 457.4V491.1M567.5 452V504.2M568.5 461V494.1M569.5 459.5V491.2M570.5 460.6V485.5M571.5 471.3V494.2M572.5 449.1V492.4M573.5 472V487.2M574.5 459.5V494.8M575.5 474.2V498.1M576.5 427V494.2M577.5 464.7V496.4M578.5 470V492.7M579.5 470.2V491.2M580.5 462.2V489.6M581.5 471.7V490.2M582.5 467.2V496.7M583.5 462.3V500.8M584.5 472.9V505.3M585.5 471.8V492.1M586.5 463.6V498.1M587.5 464.4V495.7M588.5 450.9V493.7M589.5 457.9V493.8M590.5 460.9V491.8M591.5 454.7V492.1M592.5 461.8V497M593.5 456.4V491.6M594.5 469.8V490M595.5 469.7V493.1M596.5 469.8V500M597.5 459.4V492.4M598.5 472.8V489.6M599.5 461.1V492.2M600.5 427V490.9M601.5 463.7V493.6M602.5 462V493.7M603.5 459.7V504.8M604.5 474.3V495.3M605.5 459.7V493.2M606.5 474.1V492.8M607.5 452.4V494.1M608.5 470.9V495.5M609.5 461.2V490.8M610.5 462.8V498.8M611.5 457.9V494.5M612.5 468.2V496.7M613.5 471.3V491.3M614.5 444.7V490.1M615.5 468.3V504.8M616.5 453.1V497.9M617.5 472.7V492.8M618.5 474V494.8M619.5 468.6V492.6M620.5 464.1V493.9M621.5 459.4V490.4M622.5 443.3V496.2M623.5 464.5V495.9M624.5 471.3V505.3M625.5 464.6V491.6M626.5 472.9V494.3M627.5 468.7V496.6M628.5 477.2V497.5M629.5 468.4V493.2M630.5 461.9V501.7M631.5 457.6V495.9M632.5 460.8V491M633.5 462.1V493.6M634.5 469.3V495.3M635.5 467.3V497.5M636.5 454.9V497M637.5 472.1V505.3M638.5 470.5V498.8M639.5 460.6V498.4M640.5 462.9V505.3M641.5 468.9V490.3M642.5 468.9V495.2M643.5 462.8V487.3M644.5 453.6V494.6M645.5 460.9V498.3M646.5 474.3V499.7M647.5 440.1V492.9M648.5 467.9V500.6M649.5 466.7V505.3M650.5 458.7V501.4M651.5 471.6V491.9M652.5 457.8V491.6M653.5 456.7V493.2M654.5 471.9V500.7M655.5 462.9V498M656.5 474V492.1M657.5 470.8V501M658.5 472.6V505.3M659.5 470.1V502.2M660.5 468.4V491.3M661.5 455.9V503.4M662.5 461.4V505.3M663.5 465.1V497M664.5 473.2V497.7M665.5 474.9V495.1M666.5 459.9V493.5M667.5 455V499.9M668.5 466.1V500" stroke="#9db3d2" stroke-width="1" fill="none"/><path d="M388.5 467.6V493M389.5 474.4V497.6M390.5 472.7V491.7M391.5 432.5V486.7M392.5 470.1V493.1M393.5 465.8V500.4M394.5 466V505.3M395.5 463.4V492.8M396.5 461.7V494.7M397.5 471.7V498.1M398.5 465.9V496.5M399.5 467.5V491.5M400.5 473.2V489.7M401.5 476.1V493.2M402.5 462.1V501.4M403.5 470V494.8M404.5 478.1V499.9M405.5 474.6V490.9M406.5 469.2V492.7M407.5 467.6V489.6M408.5 475.4V490.8M409.5 447.3V490.8M410.5 473.2V492.8M411.5 473.1V487.1M412.5 472V492.7M413.5 477V493.4M414.5 477.3V495M415.5 474.1V493.4M416.5 475.6V497.1M417.5 472.5V494.2M418.5 467.2V496M419.5 469.1V497.1M420.5 470V492.1M421.5 475.7V494.8M422.5 475.5V489M423.5 468.8V493.5M424.5 473.1V492.9M425.5 474.3V492.8M426.5 477.8V489M427.5 463.8V497.6M428.5 453.5V493.7M429.5 465.1V493.5M430.5 463.7V497.3M431.5 465.1V493.8M432.5 476.7V496.5M433.5 441.8V490.7M434.5 474.4V499M435.5 472.2V494.1M436.5 477.1V500.4M437.5 464.5V493.7M438.5 473.4V493.5M439.5 456.4V497.5M440.5 469.5V502.8M441.5 470.9V493.2M442.5 476.8V495.4M443.5 469.8V488.9M444.5 459.4V493M445.5 464.7V505.3M446.5 466.1V500.4M447.5 466.4V496.4M448.5 467.4V505.3M449.5 460.9V496M450.5 465.3V496.5M451.5 474.7V495.9M452.5 472.6V495.2M453.5 466.5V496.8M454.5 473.5V491.5M455.5 465.2V490.8M456.5 476.3V495.4M457.5 462.2V492.8M458.5 472.2V500.9M459.5 469.5V501.4M460.5 472.2V489.4M461.5 472.8V494.6M462.5 471.3V492.2M463.5 468.8V502.4M464.5 466.2V494.7M465.5 476.8V505.3M466.5 473.3V496.5M467.5 473.6V490.8M468.5 466.8V494.4M469.5 457.1V492.8M470.5 475.2V488.7M471.5 472.5V493.5M472.5 464.8V494M473.5 464.6V493.8M474.5 459.9V492.9M475.5 467.8V491.9M476.5 470.1V496.1M477.5 467.6V495M478.5 468.4V495.3M479.5 468.1V491M480.5 473.1V490.8M481.5 456.6V493.1M482.5 467.7V492.3M483.5 473.8V493.9M484.5 472.8V491.8M485.5 473.7V500.2M486.5 467.4V494.3M487.5 460.9V490.2M488.5 468.7V487M489.5 460.4V489.9M490.5 471V488.8M491.5 459.5V505.3M492.5 463.3V492.8M493.5 477.6V492.4M494.5 439.5V492.5M495.5 467.1V490.9M496.5 462.6V492.5M497.5 467.7V486.9M498.5 473.1V491M499.5 467.1V492.3M500.5 466.9V503.3M501.5 466.4V489.7M502.5 457.5V493.4M503.5 463.3V489.2M504.5 452.4V501.4M505.5 468.9V492.3M506.5 470V486.7M507.5 461.7V500.6M508.5 466.6V488.7M509.5 467.7V490.1M510.5 457.2V485.9M511.5 464.2V491.1M512.5 461.2V495.5M513.5 462.4V488.4M514.5 460.5V488.6M515.5 469.5V491.1M516.5 473.7V488.6M517.5 473.9V495.5M518.5 468.8V493M519.5 468.8V485.6M520.5 468.1V495.4M521.5 471.7V494.2M522.5 466.7V491.5M523.5 451.2V484.9M524.5 462.4V486.6M525.5 460.7V491.9M526.5 466.4V488.5M527.5 461.6V482.3M528.5 448.9V490.1M529.5 441.2V499.4M530.5 467.5V491.5M531.5 470.8V493.7M532.5 468.5V494.7M533.5 469.8V495.5M534.5 468.6V494.4M535.5 469.6V487.1M536.5 465.1V487.6M537.5 471.6V486.7M538.5 472.3V489.4M539.5 467V493M540.5 472.1V485.8M541.5 456.5V491.1M542.5 463.8V486.1M543.5 427V491.9M544.5 467.3V493.4M545.5 454.6V494.5M546.5 466.1V484M547.5 455.3V487.8M548.5 461.7V499.5M549.5 461.5V488.6M550.5 452.1V489.4M551.5 471.2V487.5M552.5 466.2V492.2M553.5 469.3V488M554.5 466V498.3M555.5 471.3V492.1M556.5 473V486.8M557.5 467.6V490.7M558.5 465.5V491.3M559.5 471.7V491.5M560.5 471V488.2M561.5 461.3V492.3M562.5 461.2V490M563.5 449V490.3M564.5 471.1V491.6M565.5 472.9V501.9M566.5 468V490.8M567.5 448.7V495.9M568.5 456.1V490M569.5 471.3V491.6M570.5 456.9V486.5M571.5 469.4V492.6M572.5 470.8V492.6M573.5 471.1V486.9M574.5 464.1V492.6M575.5 466.4V492.1M576.5 461V491.2M577.5 468.4V494M578.5 470.8V490.2M579.5 470.1V494.7M580.5 451.7V488.1M581.5 469.8V489.2M582.5 465.7V493.9M583.5 466.5V494M584.5 472.4V492.6M585.5 471.7V493.8M586.5 465.3V494.4M587.5 462.7V495.5M588.5 463.2V495.7M589.5 436.9V494.1M590.5 475.8V494.6M591.5 468.1V494M592.5 471.1V489.4M593.5 462.1V484.9M594.5 460.4V488.2M595.5 471V489.7M596.5 466.8V491.3M597.5 432.6V492.4M598.5 473.1V489M599.5 468.8V495.6M600.5 461.1V489.6M601.5 471V498.8M602.5 469.3V495.8M603.5 475.4V500.9M604.5 467.5V499.8M605.5 470.1V494.6M606.5 473.3V498.3M607.5 473.6V502.3M608.5 474.2V493.2M609.5 461.9V491.5M610.5 462.3V503.7M611.5 463.1V493.9M612.5 472.5V492.4M613.5 476.1V496.1M614.5 461.5V491.6M615.5 470.9V495M616.5 459.9V502.6M617.5 473.3V496.1M618.5 476.3V498.4M619.5 465.6V488.8M620.5 454.2V493.7M621.5 471.6V489.1M622.5 470.6V496.2M623.5 462.2V491.8M624.5 474.3V498.2M625.5 464.8V500.7M626.5 478.7V503.6M627.5 473V496.5M628.5 475.8V501M629.5 467.8V494M630.5 468.9V496.2M631.5 470.7V505.3M632.5 461.9V490.3M633.5 468.1V495.5M634.5 464V495M635.5 472.3V497.7M636.5 470.1V496.7M637.5 476.5V499.3M638.5 471.6V505.3M639.5 475.8V496.4M640.5 473.3V493.2M641.5 476.6V489.7M642.5 465.4V499.3M643.5 468.8V489.5M644.5 467.8V492.2M645.5 475.6V505M646.5 475.6V497.8M647.5 470.7V492.6M648.5 467.1V494.4M649.5 472.7V498.8M650.5 473.2V503.5M651.5 472.3V500.2M652.5 472.9V492.4M653.5 449.3V492.4M654.5 473.4V496.7M655.5 468.9V502.6M656.5 464.8V493.4M657.5 469V497.8M658.5 462.8V492.2M659.5 470.9V494.6M660.5 472.5V488.2M661.5 467.9V494.2M662.5 467.4V495.3M663.5 471.5V505.3M664.5 475.6V488.3M665.5 474.1V494.4M666.5 459.7V503.5M667.5 441.9V493.1M668.5 478V497.5" stroke="#3f6ca4" stroke-width="1" fill="none"/><path d="M388.5 473.8V489.9M391.5 475.4V485.7M392.5 473.5V492.5M393.5 471.7V492M394.5 471.6V492.7M395.5 470V489.1M396.5 474V493M397.5 477.7V495.1M398.5 471V493.1M400.5 474.9V489.6M401.5 477.6V491.9M402.5 473.3V495.1M403.5 470.7V490.6M404.5 478.6V492.8M405.5 474.8V489.1M407.5 472.4V488.6M408.5 476.7V490.8M409.5 475.4V490.8M410.5 474.1V489.2M412.5 472.3V492.4M413.5 477.4V488.8M414.5 478.3V494.4M415.5 477.6V492.8M416.5 477.1V496.1M417.5 474.3V492.2M418.5 471.6V495.7M419.5 473.2V496.4M421.5 477.7V491.3M422.5 475.5V488.6M423.5 474.2V492.5M424.5 473.8V490.9M425.5 475.3V491.3M426.5 478.1V488.2M428.5 473.3V492M430.5 473.3V493.2M432.5 477.7V492.2M433.5 474.3V490.1M434.5 474.7V490.9M435.5 476V491.4M436.5 479.8V493.6M437.5 470.9V489M438.5 474.4V489.2M439.5 471.8V493.8M440.5 475.2V496.5M441.5 477V492.1M442.5 478.9V493.1M443.5 476.7V488.7M444.5 475.6V491.2M447.5 471.2V488.2M449.5 479.2V490.8M451.5 475.4V492.1M452.5 477V494.3M453.5 478.1V495.3M454.5 476V488.3M455.5 475.9V490.7M456.5 477.6V493.1M457.5 474.2V490.7M458.5 475.3V495.2M460.5 474.2V488.4M461.5 475V493.6M462.5 474.5V491.5M463.5 477.5V491.8M464.5 473.2V493.5M465.5 477.3V495M466.5 477.7V489.9M467.5 475.3V489.1M468.5 470.2V492.2M469.5 473.4V490.8M470.5 477.3V487M472.5 473.5V492.8M474.5 473.9V487.7M475.5 476.6V491.1M476.5 474V492.8M477.5 476.1V492.2M478.5 469.6V491.1M480.5 473.5V488.5M481.5 470.1V491.9M482.5 470V489.5M484.5 474.5V491.1M485.5 475.5V493.6M486.5 469.2V492.7M487.5 470.7V488.3M488.5 474.6V486.3M489.5 469.6V489.8M490.5 474V487.1M492.5 469.3V488.6M495.5 470.5V490.7M497.5 469.2V485.6M498.5 473.8V489.9M499.5 474.7V488.1M500.5 475V490.4M501.5 469.8V487M502.5 474.2V492.1M503.5 468.4V487M504.5 470.2V490.2M505.5 474.3V489.5M506.5 472.7V486.5M509.5 467.7V484.3M510.5 471.9V485.1M511.5 476.6V489.4M512.5 468.4V488.9M514.5 467.2V487M515.5 470.8V487.3M516.5 476V487M517.5 474.5V489.2M519.5 471V484.8M520.5 472.5V489.2M522.5 467.7V489.1M523.5 470.3V484.1M524.5 467.5V485M525.5 469.2V487.3M526.5 470.6V488M527.5 467.2V481.3M528.5 472.3V486.6M529.5 468.2V487.7M531.5 472.2V485.5M532.5 473V491.3M533.5 472.2V487.2M534.5 470.3V488M535.5 470.8V485.5M536.5 470.7V486.8M537.5 473.2V484.9M538.5 472.6V486.8M539.5 468.6V482.4M540.5 472.4V484.3M541.5 468.9V488.9M542.5 469.4V483.5M543.5 473.6V490.5M544.5 469.4V484.1M545.5 473V486.1M547.5 468V486.3M548.5 473.4V488.1M549.5 469.7V487.1M550.5 470V486.5M551.5 472.7V486.7M554.5 475.3V491.8M555.5 471.7V487.9M556.5 473.7V486M557.5 472.3V490.5M558.5 467.5V488M559.5 474.3V488.6M560.5 471.6V485.9M561.5 469.4V485.5M562.5 466.6V486.3M563.5 471.2V489.6M564.5 472.3V488M565.5 473.7V486M566.5 468.2V488.6M568.5 467.6V488.1M569.5 474.4V486.8M570.5 471.4V485.2M571.5 473.1V488.9M572.5 474V488M573.5 474.2V486.7M574.5 473.6V488.6M575.5 474.4V487.8M576.5 467.4V488.1M577.5 470.8V493.4M578.5 472V488.8M580.5 469.2V487.5M581.5 473.8V488.8M582.5 471.8V493.5M583.5 476.9V492.2M584.5 474.1V492.2M585.5 474.9V492M586.5 477.4V494.3M587.5 471.3V494.3M588.5 472.2V492.7M589.5 472.9V492.1M590.5 476.7V489.1M591.5 471.7V490.8M592.5 475.3V488.8M593.5 468.6V484.8M594.5 470.8V487.8M596.5 471.9V490.7M597.5 470.6V490.4M598.5 475.7V488.1M599.5 471.9V491.7M600.5 472.4V489M601.5 471.4V491.9M603.5 477.4V494.3M604.5 474.7V493.5M605.5 470.5V489.8M606.5 475.3V492.7M607.5 475.9V491.5M609.5 469.7V489.6M610.5 469.8V492.4M611.5 470.8V493.1M612.5 477.2V491.6M613.5 476.4V490.9M615.5 475.3V495M616.5 473.2V495.5M617.5 474.4V492.1M619.5 472V487.7M621.5 472.7V488.9M623.5 471.1V491M624.5 474.7V493.5M625.5 472.2V491.2M626.5 479V492.3M627.5 474.9V495.4M630.5 475.7V496.1M632.5 470.6V490.3M633.5 471.9V492.2M634.5 475.6V493.4M635.5 476.7V494.5M636.5 474V493.4M639.5 477.9V493.5M641.5 477.4V489.6M642.5 477V494.9M643.5 469.5V486.7M644.5 470.5V491.5M645.5 476.2V493.9M646.5 475.9V493.6M647.5 475.9V490.2M649.5 478.8V495.4M650.5 474.5V496.8M651.5 474.9V488.6M652.5 475.5V491M653.5 471.5V491.2M654.5 477.3V495.6M659.5 473.5V492.9M661.5 470V490.6M662.5 472.3V494M663.5 476.7V493M664.5 478.1V488.2M665.5 476.9V494.2M666.5 472.3V491.9M667.5 471.6V488.9M668.5 479.6V494.5" stroke="#053a7e" stroke-width="1" fill="none"/><path d="M389.5 474.6V488.8M390.5 475.7V489.1M399.5 477.5V490.9M406.5 478.2V490.2M411.5 473.4V487M420.5 477.5V492.1M427.5 473.6V493.3M429.5 475.3V492.7M431.5 478.2V493.5M445.5 476.3V494.1M446.5 476.6V496M448.5 478V493.9M450.5 473.6V495.6M459.5 470.9V489.3M471.5 473.6V493.2M473.5 472.5V487.8M479.5 469.7V490M483.5 476.1V486.5M491.5 467.3V488.7M493.5 478.4V492.4M494.5 473.3V491.1M496.5 474.6V491M507.5 469.6V490.1M508.5 468.2V484.9M513.5 468.2V483.3M518.5 469V490.1M521.5 474.1V491M530.5 471.8V484.8M546.5 469.5V483.9M552.5 474.9V490.5M553.5 471.5V486.4M567.5 469.2V490.8M579.5 471.6V490.5M595.5 472.2V489.6M602.5 470.9V493M608.5 474.4V489.6M614.5 474.4V487.3M618.5 476.3V494.1M620.5 471.8V492.3M622.5 472.4V495.1M628.5 478.9V495.9M629.5 475.7V489.2M631.5 473.5V495.4M637.5 478.8V496.6M638.5 474.3V494.7M640.5 473.9V493.2M648.5 471.1V494.3M655.5 471.4V494.2M656.5 475.4V489.4M657.5 471.5V495.4M658.5 473.7V491.4M660.5 474V487.9" stroke="#1f4f8c" stroke-width="1" fill="none"/><rect x="387.6" y="426.3" width="282.2" height="79.7" fill="none" stroke="#7a7a7a" stroke-width="1.3"/><text x="384.4" y="429.8" font-family="Liberation Sans" font-size="5.2" fill="#333" text-anchor="end" xml:space="preserve">0.24</text><rect x="386.4" y="427.4" width="1.4" height="1.2" fill="#6060ff"/><text x="384.4" y="448.8" font-family="Liberation Sans" font-size="5.2" fill="#333" text-anchor="end" xml:space="preserve">0.18</text><rect x="386.4" y="446.4" width="1.4" height="1.2" fill="#6060ff"/><text x="384.4" y="467.8" font-family="Liberation Sans" font-size="5.2" fill="#333" text-anchor="end" xml:space="preserve">0.12</text><rect x="386.4" y="465.4" width="1.4" height="1.2" fill="#6060ff"/><text x="384.4" y="486.8" font-family="Liberation Sans" font-size="5.2" fill="#333" text-anchor="end" xml:space="preserve">0.06</text><rect x="386.4" y="484.4" width="1.4" height="1.2" fill="#6060ff"/><text x="384.4" y="505.8" font-family="Liberation Sans" font-size="5.2" fill="#333" text-anchor="end" xml:space="preserve">0.00</text><rect x="386.4" y="503.4" width="1.4" height="1.2" fill="#6060ff"/><text x="389" y="513.9" font-family="Liberation Sans" font-size="5.2" fill="#333" text-anchor="middle" xml:space="preserve">0</text><text x="416.95" y="513.9" font-family="Liberation Sans" font-size="5.2" fill="#333" text-anchor="middle" xml:space="preserve">0.1</text><text x="444.9" y="513.9" font-family="Liberation Sans" font-size="5.2" fill="#333" text-anchor="middle" xml:space="preserve">0.2</text><text x="472.85" y="513.9" font-family="Liberation Sans" font-size="5.2" fill="#333" text-anchor="middle" xml:space="preserve">0.3</text><text x="500.8" y="513.9" font-family="Liberation Sans" font-size="5.2" fill="#333" text-anchor="middle" xml:space="preserve">0.4</text><text x="528.75" y="513.9" font-family="Liberation Sans" font-size="5.2" fill="#333" text-anchor="middle" xml:space="preserve">0.5</text><text x="556.7" y="513.9" font-family="Liberation Sans" font-size="5.2" fill="#333" text-anchor="middle" xml:space="preserve">0.6</text><text x="584.65" y="513.9" font-family="Liberation Sans" font-size="5.2" fill="#333" text-anchor="middle" xml:space="preserve">0.7</text><text x="612.6" y="513.9" font-family="Liberation Sans" font-size="5.2" fill="#333" text-anchor="middle" xml:space="preserve">0.8</text><text x="640.55" y="513.9" font-family="Liberation Sans" font-size="5.2" fill="#333" text-anchor="middle" xml:space="preserve">0.9</text><text x="668.5" y="513.9" font-family="Liberation Sans" font-size="5.2" fill="#333" text-anchor="middle" xml:space="preserve">1</text><rect x="670.8" y="455" width="6.5" height="23.8" fill="#ffff00" stroke="#333" stroke-width="1"/><text x="672.15" y="466.9" font-family="Liberation Sans" font-size="5.2" fill="#2828c8" text-anchor="middle" transform="rotate(90 672.15 466.9)" xml:space="preserve">Vertical</text><rect x="363.5" y="516.6" width="28.9" height="5.5" fill="#e2e2e2" stroke="#4a4a4a" stroke-width="1" rx="0.7"/><line x1="364.2" y1="517.6" x2="391.7" y2="517.6" stroke="#f8f8f8" stroke-width="0.8"/><text x="377.95" y="521" font-family="Liberation Sans" font-size="5.4" fill="#333" text-anchor="middle" xml:space="preserve">Linear</text><rect x="637.2" y="516.6" width="32.1" height="5.5" fill="#e2e2e2" stroke="#4a4a4a" stroke-width="1" rx="0.7"/><line x1="637.9" y1="517.6" x2="668.6" y2="517.6" stroke="#f8f8f8" stroke-width="0.8"/><text x="653.25" y="521" font-family="Liberation Sans" font-size="5.4" fill="#333" text-anchor="middle" xml:space="preserve">Revolutions</text><text x="369.5" y="466.7" font-family="Liberation Sans" font-size="8" fill="#3c3cff" text-anchor="middle" xml:space="preserve">g</text><text x="479" y="545.4" font-family="Liberation Sans" font-size="6.4" fill="#222" text-anchor="start" textLength="19.2" lengthAdjust="spacingAndGlyphs" xml:space="preserve">Battery:</text><text x="501" y="545.4" font-family="Liberation Sans" font-size="6.4" fill="#222" text-anchor="start" textLength="8.5" lengthAdjust="spacingAndGlyphs" xml:space="preserve">AC</text><text x="512.9" y="545.4" font-family="Liberation Sans" font-size="6.4" fill="#222" text-anchor="start" textLength="56.1" lengthAdjust="spacingAndGlyphs" xml:space="preserve">TRIO-DP1-00774: 86%</text><text x="572.8" y="545.4" font-family="Liberation Sans" font-size="6.4" fill="#222" text-anchor="start" textLength="63.6" lengthAdjust="spacingAndGlyphs" xml:space="preserve">Connected on Bluetooth</text><text x="642" y="545.4" font-family="Liberation Sans" font-size="6.4" fill="#222" text-anchor="start" textLength="26.3" lengthAdjust="spacingAndGlyphs" xml:space="preserve">9/13/2016</text><text x="674" y="545.4" font-family="Liberation Sans" font-size="6.4" fill="#222" text-anchor="start" textLength="21.2" lengthAdjust="spacingAndGlyphs" xml:space="preserve">9:52 AM</text><text x="168.5" y="534.9" font-family="Liberation Sans" font-size="7.25" fill="#8b1a1a" font-weight="bold" text-anchor="start" xml:space="preserve">Spectra (Orders)</text><text x="484.8" y="534.9" font-family="Liberation Sans" font-size="7.25" fill="#8b1a1a" font-weight="bold" text-anchor="start" xml:space="preserve">Waveforms (Seconds)</text><text x="693.2" y="438.5" font-family="Liberation Sans" font-size="6.75" fill="#8b1a1a" font-weight="bold" text-anchor="start" transform="rotate(90 693.2 438.5)" xml:space="preserve">Demod</text><rect x="565" y="17" width="690" height="391.5" fill="#1e1e1e"/><rect x="570" y="22" width="680" height="29" fill="#000000"/><rect x="570" y="51" width="680" height="1" fill="#c4c4c4"/><rect x="570" y="52" width="680" height="9.5" fill="#000000"/><rect x="570" y="61.5" width="680" height="331.5" fill="#ffffff"/><rect x="570" y="393" width="680" height="1" fill="#c9c9c9"/><rect x="570" y="394" width="680" height="9.5" fill="#efefef"/><line x1="571.5" y1="24" x2="571.5" y2="49" stroke="#3c3c3c" stroke-width="1" stroke-dasharray="1,1"/><text x="577.4" y="34.3" font-family="Liberation Sans" font-size="11.1" fill="#ffffff" font-weight="bold" text-anchor="start" textLength="153" lengthAdjust="spacingAndGlyphs" xml:space="preserve">Service Pump #4 - 1970 RPM</text><text x="577.4" y="46.4" font-family="Liberation Sans" font-size="11.1" fill="#ffffff" font-weight="bold" text-anchor="start" textLength="80.5" lengthAdjust="spacingAndGlyphs" xml:space="preserve">Motor Cpld End</text><text x="572.5" y="59.8" font-family="Liberation Sans" font-size="8.9" fill="#ffffff" text-anchor="start" stroke="#ffffff" stroke-width="0.22" textLength="189" lengthAdjust="spacingAndGlyphs" xml:space="preserve">Routine Data Collection - 10/8/2015 7:25:24 AM</text><rect x="1039" y="23" width="58" height="27.3" fill="#000050"/><rect x="1039.8" y="32" width="11" height="11" fill="#1a1a60" stroke="#c8c8d8" stroke-width="1"/><rect x="1039.8" y="32" width="11" height="2.5" fill="#c8c8d8"/><rect x="1041.9" y="30.5" width="1.2" height="3" fill="#e0e0e8"/><rect x="1047.4" y="30.5" width="1.2" height="3" fill="#e0e0e8"/><rect x="1041" y="36" width="1" height="1" fill="#a0a0c0"/><rect x="1043" y="36" width="1" height="1" fill="#a0a0c0"/><rect x="1045" y="36" width="1" height="1" fill="#a0a0c0"/><rect x="1047" y="36" width="1" height="1" fill="#a0a0c0"/><rect x="1049" y="36" width="1" height="1" fill="#a0a0c0"/><rect x="1041" y="38" width="1" height="1" fill="#a0a0c0"/><rect x="1043" y="38" width="1" height="1" fill="#a0a0c0"/><rect x="1045" y="38" width="1" height="1" fill="#a0a0c0"/><rect x="1047" y="38" width="1" height="1" fill="#a0a0c0"/><rect x="1049" y="38" width="1" height="1" fill="#a0a0c0"/><rect x="1041" y="40" width="1" height="1" fill="#a0a0c0"/><rect x="1043" y="40" width="1" height="1" fill="#a0a0c0"/><rect x="1045" y="40" width="1" height="1" fill="#a0a0c0"/><rect x="1047" y="40" width="1" height="1" fill="#a0a0c0"/><rect x="1049" y="40" width="1" height="1" fill="#a0a0c0"/><text x="1053.7" y="40.3" font-family="Liberation Sans" font-size="9.4" fill="#ffffff" font-weight="bold" text-anchor="start" xml:space="preserve">Dates</text><rect x="1098.5" y="23" width="90.5" height="27.3" fill="#2d2d2d"/><rect x="1101.7" y="34.2" width="9.3" height="6.2" fill="#c8d0c8"/><rect x="1102.7" y="35.2" width="7.3" height="3.4" fill="#6aa86a"/><rect x="1102.7" y="38.6" width="7.3" height="0.8" fill="#e8e8e8"/><text x="1114.5" y="40.3" font-family="Liberation Sans" font-size="9.6" fill="#ffffff" font-weight="bold" text-anchor="start" xml:space="preserve">Data Summary</text><rect x="1190.5" y="23" width="58.5" height="27.3" fill="#00ff00"/><path d="M1197.3 37.6 L1199.2 36.2 L1202.6 39.6 L1208.3 30.6 L1210 31.8 L1203 42.8 Z" fill="#5f9a4f" stroke="#4a7a3a" stroke-width="0.5"/><path d="M1203 40.5 L1208.6 31.5" stroke="#b8dca8" stroke-width="0.9"/><text x="1211.5" y="40.3" font-family="Liberation Sans" font-size="9.6" fill="#000000" font-weight="bold" text-anchor="start" xml:space="preserve">OK</text><rect x="598" y="66.5" width="286.5" height="81.5" fill="#ffffff"/><line x1="627.75" y1="67.5" x2="627.75" y2="147" stroke="#bdbdbd" stroke-width="0.7" stroke-dasharray="1.2,2.2"/><line x1="657.3" y1="67.5" x2="657.3" y2="147" stroke="#bdbdbd" stroke-width="0.7" stroke-dasharray="1.2,2.2"/><line x1="686.85" y1="67.5" x2="686.85" y2="147" stroke="#bdbdbd" stroke-width="0.7" stroke-dasharray="1.2,2.2"/><line x1="716.4" y1="67.5" x2="716.4" y2="147" stroke="#bdbdbd" stroke-width="0.7" stroke-dasharray="1.2,2.2"/><line x1="745.95" y1="67.5" x2="745.95" y2="147" stroke="#bdbdbd" stroke-width="0.7" stroke-dasharray="1.2,2.2"/><line x1="775.5" y1="67.5" x2="775.5" y2="147" stroke="#bdbdbd" stroke-width="0.7" stroke-dasharray="1.2,2.2"/><line x1="805.05" y1="67.5" x2="805.05" y2="147" stroke="#bdbdbd" stroke-width="0.7" stroke-dasharray="1.2,2.2"/><line x1="834.6" y1="67.5" x2="834.6" y2="147" stroke="#bdbdbd" stroke-width="0.7" stroke-dasharray="1.2,2.2"/><line x1="864.15" y1="67.5" x2="864.15" y2="147" stroke="#bdbdbd" stroke-width="0.7" stroke-dasharray="1.2,2.2"/><line x1="599" y1="76.3" x2="883.5" y2="76.3" stroke="#bdbdbd" stroke-width="0.7" stroke-dasharray="1.2,2.2"/><line x1="599" y1="84.2" x2="883.5" y2="84.2" stroke="#bdbdbd" stroke-width="0.7" stroke-dasharray="1.2,2.2"/><line x1="599" y1="100.3" x2="883.5" y2="100.3" stroke="#bdbdbd" stroke-width="0.7" stroke-dasharray="1.2,2.2"/><line x1="599" y1="107.3" x2="883.5" y2="107.3" stroke="#bdbdbd" stroke-width="0.7" stroke-dasharray="1.2,2.2"/><line x1="599" y1="114" x2="883.5" y2="114" stroke="#bdbdbd" stroke-width="0.7" stroke-dasharray="1.2,2.2"/><line x1="599" y1="130.1" x2="883.5" y2="130.1" stroke="#bdbdbd" stroke-width="0.7" stroke-dasharray="1.2,2.2"/><line x1="599" y1="139" x2="883.5" y2="139" stroke="#bdbdbd" stroke-width="0.7" stroke-dasharray="1.2,2.2"/><polyline points="598.5,83.2 599.0,83.6 599.5,82.8 600.0,83.1 600.5,81.8 601.0,83.4 601.5,84.5 602.0,82.4 602.5,85.1 603.0,82.8 603.5,85.0 604.0,85.9 604.5,84.0 605.0,83.3 605.5,84.5 606.0,83.5 606.5,82.6 607.0,84.9 607.5,80.8 608.0,84.2 608.5,81.8 609.0,83.8 609.5,81.7 610.0,84.5 610.5,81.2 611.0,78.6 611.5,85.2 612.0,81.1 612.5,80.3 613.0,80.0 613.5,80.2 614.0,81.5 614.5,80.3 615.0,84.5 615.5,80.9 616.0,82.9 616.5,84.1 617.0,82.3 617.5,83.9 618.0,82.3 618.5,82.0 619.0,82.5 619.5,85.2 620.0,85.4 620.5,82.6 621.0,84.9 621.5,82.1 622.0,83.2 622.5,83.7 623.0,79.8 623.5,83.1 624.0,81.6 624.5,79.8 625.0,82.4 625.5,74.6 626.0,67.6 626.5,74.0 627.0,79.6 627.5,78.5 628.0,79.7 628.5,78.4 629.0,79.0 629.5,79.9 630.0,80.3 630.5,79.6 631.0,79.2 631.5,78.3 632.0,79.7 632.5,79.8 633.0,77.4 633.5,77.3 634.0,76.4 634.5,77.1 635.0,76.7 635.5,79.7 636.0,78.7 636.5,74.9 637.0,77.5 637.5,76.0 638.0,73.8 638.5,76.3 639.0,74.9 639.5,76.0 640.0,76.1 640.5,74.3 641.0,77.0 641.5,75.0 642.0,73.7 642.5,72.8 643.0,78.1 643.5,74.3 644.0,75.6 644.5,76.1 645.0,77.1 645.5,74.4 646.0,73.1 646.5,76.7 647.0,74.8 647.5,76.6 648.0,79.9 648.5,76.6 649.0,78.4 649.5,76.3 650.0,81.9 650.5,77.6 651.0,78.9 651.5,78.4 652.0,77.9 652.5,80.4 653.0,78.8 653.5,78.1 654.0,78.8 654.5,79.3 655.0,80.1 655.5,80.4 656.0,79.5 656.5,80.3 657.0,84.0 657.5,81.3 658.0,83.7 658.5,81.7 659.0,83.1 659.5,82.1 660.0,80.6 660.5,82.9 661.0,85.1 661.5,85.9 662.0,86.0 662.5,84.2 663.0,84.8 663.5,84.1 664.0,86.3 664.5,87.3 665.0,86.9 665.5,85.9 666.0,87.8 666.5,87.7 667.0,88.6 667.5,88.0 668.0,88.9 668.5,88.0 669.0,88.2 669.5,86.1 670.0,89.5 670.5,89.1 671.0,87.3 671.5,90.3 672.0,89.5 672.5,89.9 673.0,87.2 673.5,86.7 674.0,87.1 674.5,87.6 675.0,88.1 675.5,84.5 676.0,85.2 676.5,82.4 677.0,84.5 677.5,85.7 678.0,85.1 678.5,87.0 679.0,84.5 679.5,82.7 680.0,81.9 680.5,83.0 681.0,84.6 681.5,80.5 682.0,80.6 682.5,81.7 683.0,80.9 683.5,82.3 684.0,80.3 684.5,80.7 685.0,80.3 685.5,78.2 686.0,76.0 686.5,76.9 687.0,77.0 687.5,77.6 688.0,79.4 688.5,80.2 689.0,81.0 689.5,76.8 690.0,72.7 690.5,75.6 691.0,80.3 691.5,82.0 692.0,80.0 692.5,81.2 693.0,81.5 693.5,83.0 694.0,81.4 694.5,80.6 695.0,82.5 695.5,82.9 696.0,84.6 696.5,82.9 697.0,83.6 697.5,83.2 698.0,83.3 698.5,86.7 699.0,80.6 699.5,84.7 700.0,82.9 700.5,84.0 701.0,81.9 701.5,84.2 702.0,82.8 702.5,84.7 703.0,85.7 703.5,82.3 704.0,81.8 704.5,85.4 705.0,86.5 705.5,83.9 706.0,81.2 706.5,81.8 707.0,81.3 707.5,76.6 708.0,78.8 708.5,81.5 709.0,85.4 709.5,82.1 710.0,83.0 710.5,83.1 711.0,83.1 711.5,84.6 712.0,82.6 712.5,84.2 713.0,85.5 713.5,85.6 714.0,86.0 714.5,83.8 715.0,82.1 715.5,84.7 716.0,84.8 716.5,85.0 717.0,84.2 717.5,85.4 718.0,83.5 718.5,86.0 719.0,87.4 719.5,85.3 720.0,85.2 720.5,86.1 721.0,86.1 721.5,83.1 722.0,80.0 722.5,82.6 723.0,87.7 723.5,84.1 724.0,87.3 724.5,84.7 725.0,86.6 725.5,84.6 726.0,83.7 726.5,84.3 727.0,84.3 727.5,87.3 728.0,84.7 728.5,84.5 729.0,84.0 729.5,85.2 730.0,85.1 730.5,85.8 731.0,84.1 731.5,83.3 732.0,84.8 732.5,85.9 733.0,85.7 733.5,83.3 734.0,83.9 734.5,84.9 735.0,83.6 735.5,82.5 736.0,84.5 736.5,83.7 737.0,84.5 737.5,84.2 738.0,78.6 738.5,76.2 739.0,80.2 739.5,85.5 740.0,84.8 740.5,85.8 741.0,84.5 741.5,86.1 742.0,84.7 742.5,84.7 743.0,85.7 743.5,85.7 744.0,85.7 744.5,86.3 745.0,87.7 745.5,85.7 746.0,84.5 746.5,87.5 747.0,89.6 747.5,88.7 748.0,85.9 748.5,88.3 749.0,89.3 749.5,89.2 750.0,90.6 750.5,89.5 751.0,84.9 751.5,89.5 752.0,87.9 752.5,87.9 753.0,87.0 753.5,87.8 754.0,89.1 754.5,90.9 755.0,90.8 755.5,90.0 756.0,90.6 756.5,88.3 757.0,87.6 757.5,91.1 758.0,89.0 758.5,87.8 759.0,89.1 759.5,87.0 760.0,89.9 760.5,85.9 761.0,86.8 761.5,87.1 762.0,86.9 762.5,85.4 763.0,88.0 763.5,87.5 764.0,86.6 764.5,84.6 765.0,82.0 765.5,84.7 766.0,85.2 766.5,84.3 767.0,85.3 767.5,85.0 768.0,85.5 768.5,85.7 769.0,86.8 769.5,82.6 770.0,82.0 770.5,84.3 771.0,85.4 771.5,84.8 772.0,83.1 772.5,82.7 773.0,82.4 773.5,84.9 774.0,82.1 774.5,82.5 775.0,80.3 775.5,82.9 776.0,81.3 776.5,80.9 777.0,80.6 777.5,80.6 778.0,84.1 778.5,81.3 779.0,81.2 779.5,79.3 780.0,78.3 780.5,77.2 781.0,79.2 781.5,80.1 782.0,80.1 782.5,77.7 783.0,80.4 783.5,78.7 784.0,80.8 784.5,78.9 785.0,78.2 785.5,76.8 786.0,77.4 786.5,79.3 787.0,80.6 787.5,81.0 788.0,79.4 788.5,79.0 789.0,81.5 789.5,82.9 790.0,80.8 790.5,81.2 791.0,81.5 791.5,81.4 792.0,80.0 792.5,80.8 793.0,83.7 793.5,85.3 794.0,84.5 794.5,83.0 795.0,82.4 795.5,84.6 796.0,86.6 796.5,86.1 797.0,87.3 797.5,85.2 798.0,86.0 798.5,85.2 799.0,87.2 799.5,84.8 800.0,83.0 800.5,84.7 801.0,87.6 801.5,87.9 802.0,87.7 802.5,89.7 803.0,87.5 803.5,85.3 804.0,87.8 804.5,85.2 805.0,84.8 805.5,87.1 806.0,85.3 806.5,86.0 807.0,85.2 807.5,85.5 808.0,83.4 808.5,86.8 809.0,87.1 809.5,85.1 810.0,87.0 810.5,86.4 811.0,86.7 811.5,87.0 812.0,83.4 812.5,86.0 813.0,84.6 813.5,85.7 814.0,84.3 814.5,87.2 815.0,86.6 815.5,84.4 816.0,84.9 816.5,77.7 817.0,70.8 817.5,78.2 818.0,83.4 818.5,83.0 819.0,86.6 819.5,85.8 820.0,85.0 820.5,85.0 821.0,84.2 821.5,86.0 822.0,84.4 822.5,87.1 823.0,87.5 823.5,86.5 824.0,88.9 824.5,88.8 825.0,88.4 825.5,87.2 826.0,87.4 826.5,87.1 827.0,85.9 827.5,88.5 828.0,89.5 828.5,86.6 829.0,89.2 829.5,88.5 830.0,89.0 830.5,89.9 831.0,90.2 831.5,88.2 832.0,90.1 832.5,88.7 833.0,86.0 833.5,92.0 834.0,89.5 834.5,89.1 835.0,91.4 835.5,90.3 836.0,89.0 836.5,90.1 837.0,90.3 837.5,89.7 838.0,87.0 838.5,90.4 839.0,89.0 839.5,88.9 840.0,90.4 840.5,93.1 841.0,88.9 841.5,90.6 842.0,88.0 842.5,87.6 843.0,89.0 843.5,90.4 844.0,89.3 844.5,89.1 845.0,90.1 845.5,88.8 846.0,82.8 846.5,75.5 847.0,77.0 847.5,84.7 848.0,86.6 848.5,86.4 849.0,85.8 849.5,85.2 850.0,84.4 850.5,84.9 851.0,88.2 851.5,87.3 852.0,87.6 852.5,85.9 853.0,85.5 853.5,86.7 854.0,85.1 854.5,83.5 855.0,80.0 855.5,83.2 856.0,84.4 856.5,87.7 857.0,85.6 857.5,86.1 858.0,84.2 858.5,84.2 859.0,86.0 859.5,82.9 860.0,86.6 860.5,84.1 861.0,86.1 861.5,84.0 862.0,84.7 862.5,84.8 863.0,85.9 863.5,83.5 864.0,85.3 864.5,84.9 865.0,85.3 865.5,82.9 866.0,83.7 866.5,82.5 867.0,82.7 867.5,84.3 868.0,84.2 868.5,81.2 869.0,81.9 869.5,81.8 870.0,80.4 870.5,80.9 871.0,79.7 871.5,81.6 872.0,79.3 872.5,82.2 873.0,77.5 873.5,80.5 874.0,80.3 874.5,78.4 875.0,76.8 875.5,79.3 876.0,77.6 876.5,80.7 877.0,79.5 877.5,79.4 878.0,79.7 878.5,80.6 879.0,79.7 879.5,80.5 880.0,80.4 880.5,79.3 881.0,81.5 881.5,82.2 882.0,81.7 882.5,80.5 883.0,81.3 883.5,79.1" fill="none" stroke="#3f6ca4" stroke-width="0.9" stroke-linejoin="round"/><polyline points="598.5,110.8 599.0,110.9 599.5,111.4 600.0,113.5 600.5,111.4 601.0,111.8 601.5,110.7 602.0,111.9 602.5,110.7 603.0,114.4 603.5,113.1 604.0,114.7 604.5,115.5 605.0,114.4 605.5,114.3 606.0,114.2 606.5,112.9 607.0,109.9 607.5,112.7 608.0,111.0 608.5,110.1 609.0,110.2 609.5,110.4 610.0,110.9 610.5,108.1 611.0,107.2 611.5,103.8 612.0,97.6 612.5,103.4 613.0,108.0 613.5,106.6 614.0,110.6 614.5,110.6 615.0,108.3 615.5,109.9 616.0,111.0 616.5,113.1 617.0,111.5 617.5,110.8 618.0,109.9 618.5,109.8 619.0,110.5 619.5,109.9 620.0,111.9 620.5,111.1 621.0,110.6 621.5,109.4 622.0,110.9 622.5,110.2 623.0,111.2 623.5,109.3 624.0,111.5 624.5,110.3 625.0,113.1 625.5,102.8 626.0,96.4 626.5,105.3 627.0,110.1 627.5,113.0 628.0,111.6 628.5,108.3 629.0,109.1 629.5,111.1 630.0,110.0 630.5,110.7 631.0,110.0 631.5,111.3 632.0,108.8 632.5,107.6 633.0,108.0 633.5,108.7 634.0,107.4 634.5,108.5 635.0,108.1 635.5,107.9 636.0,108.1 636.5,107.5 637.0,109.3 637.5,108.0 638.0,108.8 638.5,105.6 639.0,107.5 639.5,106.7 640.0,104.5 640.5,109.9 641.0,105.1 641.5,108.0 642.0,107.8 642.5,108.2 643.0,105.9 643.5,102.8 644.0,107.2 644.5,106.3 645.0,107.5 645.5,106.4 646.0,108.5 646.5,107.6 647.0,106.4 647.5,110.4 648.0,106.3 648.5,104.2 649.0,107.5 649.5,108.1 650.0,108.3 650.5,106.9 651.0,107.7 651.5,106.6 652.0,107.3 652.5,108.9 653.0,107.4 653.5,109.2 654.0,107.9 654.5,108.5 655.0,108.0 655.5,110.2 656.0,108.8 656.5,107.7 657.0,109.0 657.5,110.6 658.0,109.4 658.5,107.7 659.0,108.2 659.5,107.9 660.0,111.3 660.5,109.8 661.0,110.8 661.5,110.9 662.0,109.4 662.5,111.4 663.0,109.8 663.5,110.5 664.0,107.1 664.5,109.6 665.0,108.9 665.5,108.3 666.0,109.4 666.5,107.2 667.0,108.4 667.5,105.0 668.0,108.1 668.5,107.2 669.0,110.4 669.5,108.1 670.0,108.4 670.5,103.4 671.0,106.6 671.5,105.4 672.0,108.7 672.5,108.0 673.0,106.7 673.5,106.5 674.0,106.3 674.5,105.9 675.0,106.7 675.5,106.4 676.0,105.2 676.5,104.2 677.0,107.3 677.5,104.2 678.0,103.6 678.5,107.7 679.0,104.4 679.5,104.5 680.0,103.3 680.5,104.1 681.0,107.9 681.5,106.0 682.0,108.5 682.5,105.8 683.0,108.9 683.5,108.4 684.0,108.1 684.5,106.6 685.0,111.4 685.5,106.1 686.0,102.0 686.5,107.0 687.0,109.9 687.5,113.7 688.0,113.3 688.5,113.3 689.0,113.8 689.5,105.1 690.0,97.6 690.5,106.3 691.0,114.0 691.5,117.0 692.0,116.7 692.5,118.0 693.0,114.3 693.5,119.0 694.0,116.6 694.5,116.7 695.0,117.7 695.5,120.1 696.0,118.8 696.5,118.7 697.0,119.6 697.5,119.7 698.0,119.8 698.5,119.5 699.0,118.6 699.5,118.9 700.0,116.3 700.5,117.9 701.0,115.1 701.5,118.0 702.0,118.3 702.5,117.1 703.0,117.4 703.5,119.6 704.0,117.6 704.5,118.2 705.0,120.4 705.5,118.6 706.0,119.4 706.5,118.7 707.0,118.9 707.5,119.7 708.0,113.9 708.5,104.6 709.0,102.1 709.5,111.8 710.0,119.0 710.5,117.2 711.0,114.4 711.5,117.8 712.0,119.9 712.5,116.7 713.0,118.9 713.5,117.5 714.0,115.9 714.5,117.6 715.0,114.9 715.5,119.7 716.0,117.5 716.5,118.5 717.0,118.0 717.5,116.0 718.0,117.5 718.5,119.6 719.0,119.1 719.5,117.5 720.0,117.1 720.5,118.0 721.0,116.3 721.5,110.8 722.0,103.0 722.5,110.1 723.0,119.4 723.5,118.3 724.0,117.4 724.5,118.6 725.0,118.0 725.5,118.8 726.0,120.0 726.5,118.3 727.0,116.2 727.5,119.1 728.0,117.5 728.5,120.2 729.0,120.0 729.5,118.7 730.0,119.3 730.5,116.7 731.0,116.4 731.5,118.3 732.0,119.3 732.5,120.4 733.0,118.0 733.5,117.7 734.0,117.8 734.5,118.0 735.0,119.3 735.5,115.4 736.0,108.2 736.5,102.0 737.0,113.5 737.5,119.0 738.0,119.4 738.5,117.0 739.0,119.7 739.5,116.7 740.0,120.4 740.5,118.5 741.0,119.8 741.5,120.2 742.0,120.4 742.5,120.4 743.0,120.4 743.5,120.4 744.0,118.8 744.5,118.1 745.0,120.4 745.5,120.1 746.0,119.0 746.5,119.7 747.0,120.4 747.5,120.4 748.0,119.0 748.5,118.0 749.0,117.2 749.5,119.3 750.0,119.5 750.5,118.1 751.0,120.4 751.5,120.4 752.0,119.0 752.5,120.4 753.0,120.0 753.5,120.4 754.0,120.4 754.5,120.1 755.0,120.4 755.5,120.4 756.0,119.7 756.5,120.4 757.0,119.5 757.5,120.3 758.0,120.4 758.5,120.4 759.0,118.3 759.5,120.4 760.0,118.9 760.5,120.4 761.0,120.4 761.5,117.6 762.0,117.9 762.5,120.2 763.0,119.2 763.5,115.6 764.0,119.5 764.5,112.5 765.0,108.0 765.5,112.8 766.0,116.1 766.5,116.7 767.0,116.7 767.5,119.4 768.0,117.1 768.5,115.9 769.0,115.3 769.5,115.4 770.0,115.3 770.5,113.5 771.0,114.7 771.5,108.4 772.0,104.0 772.5,108.5 773.0,114.2 773.5,113.7 774.0,108.2 774.5,113.6 775.0,111.7 775.5,111.5 776.0,113.1 776.5,109.8 777.0,109.0 777.5,107.4 778.0,108.5 778.5,111.4 779.0,109.4 779.5,109.3 780.0,111.5 780.5,109.8 781.0,110.3 781.5,110.5 782.0,112.3 782.5,111.0 783.0,111.5 783.5,112.2 784.0,110.1 784.5,112.5 785.0,108.1 785.5,105.0 786.0,107.7 786.5,112.9 787.0,113.5 787.5,115.6 788.0,114.5 788.5,115.3 789.0,114.1 789.5,114.1 790.0,117.5 790.5,113.1 791.0,117.2 791.5,114.8 792.0,116.9 792.5,114.5 793.0,117.1 793.5,117.1 794.0,114.0 794.5,116.2 795.0,118.2 795.5,118.9 796.0,118.1 796.5,117.2 797.0,118.1 797.5,116.6 798.0,117.2 798.5,119.1 799.0,119.0 799.5,120.2 800.0,119.7 800.5,120.3 801.0,119.3 801.5,120.3 802.0,120.4 802.5,118.1 803.0,119.7 803.5,118.9 804.0,120.2 804.5,120.2 805.0,118.5 805.5,119.8 806.0,119.9 806.5,119.5 807.0,120.1 807.5,120.4 808.0,120.4 808.5,119.3 809.0,120.0 809.5,120.4 810.0,118.8 810.5,120.4 811.0,118.8 811.5,117.5 812.0,118.8 812.5,120.2 813.0,119.4 813.5,118.8 814.0,118.7 814.5,118.5 815.0,118.3 815.5,119.0 816.0,116.4 816.5,108.4 817.0,96.4 817.5,108.2 818.0,120.4 818.5,119.0 819.0,119.9 819.5,116.3 820.0,120.1 820.5,119.3 821.0,120.4 821.5,120.4 822.0,119.7 822.5,118.2 823.0,120.4 823.5,120.4 824.0,120.4 824.5,119.2 825.0,118.7 825.5,119.6 826.0,118.5 826.5,117.0 827.0,120.4 827.5,120.4 828.0,120.4 828.5,118.8 829.0,119.9 829.5,118.3 830.0,117.9 830.5,120.4 831.0,117.4 831.5,119.5 832.0,120.4 832.5,120.4 833.0,120.4 833.5,120.4 834.0,119.7 834.5,119.1 835.0,120.4 835.5,119.7 836.0,119.1 836.5,120.4 837.0,119.9 837.5,120.4 838.0,119.1 838.5,118.8 839.0,119.4 839.5,120.4 840.0,120.4 840.5,120.3 841.0,120.1 841.5,114.2 842.0,108.0 842.5,114.3 843.0,119.3 843.5,120.3 844.0,120.0 844.5,120.4 845.0,119.4 845.5,120.4 846.0,114.8 846.5,105.0 847.0,107.2 847.5,115.9 848.0,120.4 848.5,120.4 849.0,119.3 849.5,120.0 850.0,120.1 850.5,119.9 851.0,120.4 851.5,119.9 852.0,117.6 852.5,119.2 853.0,118.1 853.5,120.4 854.0,117.5 854.5,113.3 855.0,110.0 855.5,113.5 856.0,117.1 856.5,117.1 857.0,116.3 857.5,116.5 858.0,113.8 858.5,116.5 859.0,117.3 859.5,118.8 860.0,116.1 860.5,117.0 861.0,114.6 861.5,117.4 862.0,118.3 862.5,115.5 863.0,114.4 863.5,114.7 864.0,116.6 864.5,112.5 865.0,115.8 865.5,112.6 866.0,112.7 866.5,114.1 867.0,114.6 867.5,114.9 868.0,115.5 868.5,111.9 869.0,113.4 869.5,111.1 870.0,108.0 870.5,111.3 871.0,113.0 871.5,112.5 872.0,109.7 872.5,110.1 873.0,113.7 873.5,110.9 874.0,112.8 874.5,113.2 875.0,112.1 875.5,113.5 876.0,111.2 876.5,112.9 877.0,112.0 877.5,110.2 878.0,109.5 878.5,112.1 879.0,114.7 879.5,114.1 880.0,113.2 880.5,113.7 881.0,113.9 881.5,112.4 882.0,114.6 882.5,113.2 883.0,112.2 883.5,118.3" fill="none" stroke="#3f6ca4" stroke-width="0.9" stroke-linejoin="round"/><polyline points="598.5,141.8 599.0,140.6 599.5,141.3 600.0,138.9 600.5,138.6 601.0,141.8 601.5,140.1 602.0,138.0 602.5,137.1 603.0,138.5 603.5,137.2 604.0,139.5 604.5,135.5 605.0,138.5 605.5,135.7 606.0,135.0 606.5,136.0 607.0,134.1 607.5,134.5 608.0,134.1 608.5,131.6 609.0,132.5 609.5,133.8 610.0,130.7 610.5,130.7 611.0,130.3 611.5,129.8 612.0,125.3 612.5,124.5 613.0,125.8 613.5,129.5 614.0,129.5 614.5,128.4 615.0,131.1 615.5,131.1 616.0,131.0 616.5,131.2 617.0,131.2 617.5,133.4 618.0,133.3 618.5,132.4 619.0,132.2 619.5,131.8 620.0,133.2 620.5,132.5 621.0,130.2 621.5,132.2 622.0,132.5 622.5,131.0 623.0,130.8 623.5,130.3 624.0,131.3 624.5,129.9 625.0,130.0 625.5,125.4 626.0,121.6 626.5,124.2 627.0,131.2 627.5,127.0 628.0,127.7 628.5,127.6 629.0,129.1 629.5,130.1 630.0,132.5 630.5,131.8 631.0,130.2 631.5,131.7 632.0,132.1 632.5,131.3 633.0,132.8 633.5,132.5 634.0,131.8 634.5,131.6 635.0,133.2 635.5,132.4 636.0,133.9 636.5,133.6 637.0,131.4 637.5,130.5 638.0,133.0 638.5,132.2 639.0,131.9 639.5,132.3 640.0,134.8 640.5,133.0 641.0,135.5 641.5,134.3 642.0,131.6 642.5,134.1 643.0,135.3 643.5,131.8 644.0,132.4 644.5,133.8 645.0,133.4 645.5,135.9 646.0,133.2 646.5,136.1 647.0,132.7 647.5,133.4 648.0,134.8 648.5,135.0 649.0,134.7 649.5,136.4 650.0,136.7 650.5,136.9 651.0,134.7 651.5,135.9 652.0,134.7 652.5,136.6 653.0,132.6 653.5,134.5 654.0,135.0 654.5,134.8 655.0,137.2 655.5,133.9 656.0,134.6 656.5,134.3 657.0,135.6 657.5,134.7 658.0,136.9 658.5,136.9 659.0,133.6 659.5,133.7 660.0,137.0 660.5,136.6 661.0,134.5 661.5,136.3 662.0,135.0 662.5,137.3 663.0,135.1 663.5,135.9 664.0,137.2 664.5,136.8 665.0,138.0 665.5,137.3 666.0,135.3 666.5,137.3 667.0,135.8 667.5,138.8 668.0,139.0 668.5,138.6 669.0,139.8 669.5,138.3 670.0,139.1 670.5,138.6 671.0,138.6 671.5,138.7 672.0,138.0 672.5,139.6 673.0,136.3 673.5,135.7 674.0,136.5 674.5,139.1 675.0,137.0 675.5,136.3 676.0,136.2 676.5,137.6 677.0,136.9 677.5,138.3 678.0,136.5 678.5,136.2 679.0,131.7 679.5,131.4 680.0,137.0 680.5,136.4 681.0,136.4 681.5,137.5 682.0,135.3 682.5,135.8 683.0,135.7 683.5,136.5 684.0,134.6 684.5,137.7 685.0,136.2 685.5,136.7 686.0,136.8 686.5,137.4 687.0,135.4 687.5,139.8 688.0,137.9 688.5,140.3 689.0,139.6 689.5,140.1 690.0,141.3 690.5,143.1 691.0,141.6 691.5,140.9 692.0,141.9 692.5,138.5 693.0,140.2 693.5,139.9 694.0,140.4 694.5,139.2 695.0,141.4 695.5,140.0 696.0,140.4 696.5,140.1 697.0,139.6 697.5,139.0 698.0,141.0 698.5,140.4 699.0,141.0 699.5,139.0 700.0,139.3 700.5,139.3 701.0,138.5 701.5,138.7 702.0,136.9 702.5,137.3 703.0,137.5 703.5,137.2 704.0,138.8 704.5,138.6 705.0,138.6 705.5,137.8 706.0,136.9 706.5,131.2 707.0,130.0 707.5,134.5 708.0,139.3 708.5,136.2 709.0,135.7 709.5,136.0 710.0,138.6 710.5,137.3 711.0,136.5 711.5,134.5 712.0,136.7 712.5,135.8 713.0,134.5 713.5,137.9 714.0,136.7 714.5,138.1 715.0,136.4 715.5,137.0 716.0,135.5 716.5,136.9 717.0,135.7 717.5,134.3 718.0,132.0 718.5,133.3 719.0,136.0 719.5,136.3 720.0,135.5 720.5,136.4 721.0,137.7 721.5,138.2 722.0,137.1 722.5,134.7 723.0,138.2 723.5,139.6 724.0,137.5 724.5,137.0 725.0,138.5 725.5,138.6 726.0,139.5 726.5,138.0 727.0,140.8 727.5,140.1 728.0,138.2 728.5,140.6 729.0,139.5 729.5,140.6 730.0,140.4 730.5,140.3 731.0,140.8 731.5,140.1 732.0,140.0 732.5,140.7 733.0,140.9 733.5,141.8 734.0,141.8 734.5,140.0 735.0,142.9 735.5,141.3 736.0,137.6 736.5,134.8 737.0,139.4 737.5,143.6 738.0,141.6 738.5,145.1 739.0,145.7 739.5,144.4 740.0,143.4 740.5,144.9 741.0,144.0 741.5,146.3 742.0,144.2 742.5,143.7 743.0,144.2 743.5,144.5 744.0,146.3 744.5,145.6 745.0,145.9 745.5,145.3 746.0,147.1 746.5,145.7 747.0,145.9 747.5,147.4 748.0,146.0 748.5,145.1 749.0,145.4 749.5,146.9 750.0,146.1 750.5,144.8 751.0,146.9 751.5,144.0 752.0,143.3 752.5,144.6 753.0,143.6 753.5,145.4 754.0,145.7 754.5,145.3 755.0,145.0 755.5,144.5 756.0,146.7 756.5,143.5 757.0,146.4 757.5,145.9 758.0,145.6 758.5,146.1 759.0,143.9 759.5,146.7 760.0,146.2 760.5,146.9 761.0,143.4 761.5,145.9 762.0,145.5 762.5,143.1 763.0,145.3 763.5,145.7 764.0,144.8 764.5,146.1 765.0,146.3 765.5,145.1 766.0,145.2 766.5,146.5 767.0,144.5 767.5,146.2 768.0,147.1 768.5,145.6 769.0,146.0 769.5,145.7 770.0,146.5 770.5,144.0 771.0,143.8 771.5,144.7 772.0,144.9 772.5,146.7 773.0,147.1 773.5,146.3 774.0,147.0 774.5,145.2 775.0,145.0 775.5,143.9 776.0,146.9 776.5,146.2 777.0,145.6 777.5,144.1 778.0,144.5 778.5,146.2 779.0,145.6 779.5,146.8 780.0,145.8 780.5,144.8 781.0,144.3 781.5,145.6 782.0,147.4 782.5,147.4 783.0,144.8 783.5,146.2 784.0,144.8 784.5,145.9 785.0,142.5 785.5,144.9 786.0,143.6 786.5,147.2 787.0,145.2 787.5,146.2 788.0,145.7 788.5,144.2 789.0,146.4 789.5,146.9 790.0,146.0 790.5,146.4 791.0,142.5 791.5,136.9 792.0,139.7 792.5,143.2 793.0,144.9 793.5,145.0 794.0,146.7 794.5,147.3 795.0,145.9 795.5,147.0 796.0,143.3 796.5,146.2 797.0,144.6 797.5,147.0 798.0,147.4 798.5,147.2 799.0,146.9 799.5,147.3 800.0,147.4 800.5,145.5 801.0,147.4 801.5,145.7 802.0,144.6 802.5,146.7 803.0,146.9 803.5,146.4 804.0,145.4 804.5,146.8 805.0,145.8 805.5,147.4 806.0,146.5 806.5,146.5 807.0,145.5 807.5,146.8 808.0,147.4 808.5,145.3 809.0,145.7 809.5,144.0 810.0,146.0 810.5,147.4 811.0,144.8 811.5,145.6 812.0,145.2 812.5,145.8 813.0,145.2 813.5,145.7 814.0,144.8 814.5,146.3 815.0,147.1 815.5,146.9 816.0,144.0 816.5,140.6 817.0,133.8 817.5,140.5 818.0,145.1 818.5,145.4 819.0,146.8 819.5,147.4 820.0,145.0 820.5,146.4 821.0,146.5 821.5,145.7 822.0,146.4 822.5,145.5 823.0,147.4 823.5,144.3 824.0,146.4 824.5,145.5 825.0,146.0 825.5,145.1 826.0,142.8 826.5,147.4 827.0,146.8 827.5,146.5 828.0,146.0 828.5,146.4 829.0,145.7 829.5,146.2 830.0,147.4 830.5,145.4 831.0,145.1 831.5,147.4 832.0,145.5 832.5,146.3 833.0,145.9 833.5,146.7 834.0,146.8 834.5,146.2 835.0,145.0 835.5,145.0 836.0,146.2 836.5,147.4 837.0,144.1 837.5,146.0 838.0,146.6 838.5,145.4 839.0,146.3 839.5,145.9 840.0,146.9 840.5,147.4 841.0,145.7 841.5,146.4 842.0,146.5 842.5,146.2 843.0,146.1 843.5,143.7 844.0,146.2 844.5,144.9 845.0,145.6 845.5,146.5 846.0,144.4 846.5,140.3 847.0,141.0 847.5,144.4 848.0,144.9 848.5,147.4 849.0,147.4 849.5,143.4 850.0,141.0 850.5,143.9 851.0,144.9 851.5,147.0 852.0,146.8 852.5,146.2 853.0,144.4 853.5,145.4 854.0,143.5 854.5,146.0 855.0,145.7 855.5,144.8 856.0,144.7 856.5,147.4 857.0,144.4 857.5,146.8 858.0,146.1 858.5,147.4 859.0,144.2 859.5,146.1 860.0,147.4 860.5,145.8 861.0,144.5 861.5,143.9 862.0,145.3 862.5,147.1 863.0,147.4 863.5,146.1 864.0,147.0 864.5,147.1 865.0,146.7 865.5,145.1 866.0,146.8 866.5,144.9 867.0,146.1 867.5,146.9 868.0,147.2 868.5,145.9 869.0,147.3 869.5,147.4 870.0,147.1 870.5,146.0 871.0,146.4 871.5,146.1 872.0,146.1 872.5,146.8 873.0,147.2 873.5,146.1 874.0,146.9 874.5,146.3 875.0,146.2 875.5,145.0 876.0,146.5 876.5,145.9 877.0,146.4 877.5,147.2 878.0,146.9 878.5,146.8 879.0,145.5 879.5,144.3 880.0,145.6 880.5,146.0 881.0,146.3 881.5,147.4 882.0,146.4 882.5,147.4 883.0,145.6 883.5,144.9" fill="none" stroke="#3f6ca4" stroke-width="0.9" stroke-linejoin="round"/><rect x="598" y="66.5" width="286.5" height="81.5" fill="none" stroke="#7a7a7a" stroke-width="1.3"/><line x1="598" y1="93.7" x2="884.5" y2="93.7" stroke="#8e8e8e" stroke-width="2"/><line x1="598" y1="121" x2="884.5" y2="121" stroke="#8e8e8e" stroke-width="2"/><text x="594.8" y="70.3" font-family="Liberation Sans" font-size="5.2" fill="#333" text-anchor="end" xml:space="preserve">100.</text><rect x="596.8" y="67.9" width="1.4" height="1.2" fill="#6060ff"/><text x="594.8" y="78.1" font-family="Liberation Sans" font-size="5.2" fill="#333" text-anchor="end" xml:space="preserve">80.</text><rect x="596.8" y="75.7" width="1.4" height="1.2" fill="#6060ff"/><text x="594.8" y="86" font-family="Liberation Sans" font-size="5.2" fill="#333" text-anchor="end" xml:space="preserve">60.</text><rect x="596.8" y="83.6" width="1.4" height="1.2" fill="#6060ff"/><text x="594.8" y="93.8" font-family="Liberation Sans" font-size="5.2" fill="#333" text-anchor="end" xml:space="preserve">40.</text><rect x="596.8" y="91.4" width="1.4" height="1.2" fill="#6060ff"/><text x="594.8" y="97.1" font-family="Liberation Sans" font-size="5.2" fill="#333" text-anchor="end" xml:space="preserve">90.</text><rect x="596.8" y="94.7" width="1.4" height="1.2" fill="#6060ff"/><text x="594.8" y="102.1" font-family="Liberation Sans" font-size="5.2" fill="#333" text-anchor="end" xml:space="preserve">80.</text><rect x="596.8" y="99.7" width="1.4" height="1.2" fill="#6060ff"/><text x="594.8" y="109.1" font-family="Liberation Sans" font-size="5.2" fill="#333" text-anchor="end" xml:space="preserve">70.</text><rect x="596.8" y="106.7" width="1.4" height="1.2" fill="#6060ff"/><text x="594.8" y="115.8" font-family="Liberation Sans" font-size="5.2" fill="#333" text-anchor="end" xml:space="preserve">60.</text><rect x="596.8" y="113.4" width="1.4" height="1.2" fill="#6060ff"/><text x="594.8" y="120.8" font-family="Liberation Sans" font-size="5.2" fill="#333" text-anchor="end" xml:space="preserve">50.</text><rect x="596.8" y="118.4" width="1.4" height="1.2" fill="#6060ff"/><text x="594.8" y="125.3" font-family="Liberation Sans" font-size="5.2" fill="#333" text-anchor="end" xml:space="preserve">110.</text><rect x="596.8" y="122.9" width="1.4" height="1.2" fill="#6060ff"/><text x="594.8" y="131.9" font-family="Liberation Sans" font-size="5.2" fill="#333" text-anchor="end" xml:space="preserve">90.</text><rect x="596.8" y="129.5" width="1.4" height="1.2" fill="#6060ff"/><text x="594.8" y="140.8" font-family="Liberation Sans" font-size="5.2" fill="#333" text-anchor="end" xml:space="preserve">70.</text><rect x="596.8" y="138.4" width="1.4" height="1.2" fill="#6060ff"/><text x="594.8" y="147.4" font-family="Liberation Sans" font-size="5.2" fill="#333" text-anchor="end" xml:space="preserve">50.</text><rect x="596.8" y="145" width="1.4" height="1.2" fill="#6060ff"/><text x="598.2" y="155.5" font-family="Liberation Sans" font-size="5.2" fill="#333" text-anchor="middle" xml:space="preserve">0</text><text x="627.75" y="155.5" font-family="Liberation Sans" font-size="5.2" fill="#333" text-anchor="middle" xml:space="preserve">1</text><text x="657.3" y="155.5" font-family="Liberation Sans" font-size="5.2" fill="#333" text-anchor="middle" xml:space="preserve">2</text><text x="686.85" y="155.5" font-family="Liberation Sans" font-size="5.2" fill="#333" text-anchor="middle" xml:space="preserve">3</text><text x="716.4" y="155.5" font-family="Liberation Sans" font-size="5.2" fill="#333" text-anchor="middle" xml:space="preserve">4</text><text x="745.95" y="155.5" font-family="Liberation Sans" font-size="5.2" fill="#333" text-anchor="middle" xml:space="preserve">5</text><text x="775.5" y="155.5" font-family="Liberation Sans" font-size="5.2" fill="#333" text-anchor="middle" xml:space="preserve">6</text><text x="805.05" y="155.5" font-family="Liberation Sans" font-size="5.2" fill="#333" text-anchor="middle" xml:space="preserve">7</text><text x="834.6" y="155.5" font-family="Liberation Sans" font-size="5.2" fill="#333" text-anchor="middle" xml:space="preserve">8</text><text x="864.15" y="155.5" font-family="Liberation Sans" font-size="5.2" fill="#333" text-anchor="middle" xml:space="preserve">9</text><rect x="885.5" y="71.5" width="6.5" height="17" fill="#ffff00" stroke="#333" stroke-width="1"/><text x="886.85" y="80" font-family="Liberation Sans" font-size="5.2" fill="#2828c8" text-anchor="middle" transform="rotate(90 886.85 80)" xml:space="preserve">Axial</text><rect x="885.5" y="97.2" width="6.5" height="21.7" fill="#ffffff" stroke="#555" stroke-width="1"/><text x="886.85" y="108.05" font-family="Liberation Sans" font-size="5.2" fill="#3c3cf0" text-anchor="middle" transform="rotate(90 886.85 108.05)" xml:space="preserve">Radial</text><rect x="885.5" y="120.3" width="6.5" height="29.8" fill="#ffffff" stroke="#555" stroke-width="1"/><text x="886.85" y="135.2" font-family="Liberation Sans" font-size="5.2" fill="#3c3cf0" text-anchor="middle" transform="rotate(90 886.85 135.2)" xml:space="preserve">Tangential</text><rect x="573.5" y="158.3" width="29.7" height="5.5" fill="#e2e2e2" stroke="#4a4a4a" stroke-width="1" rx="0.7"/><line x1="574.2" y1="159.3" x2="602.5" y2="159.3" stroke="#f8f8f8" stroke-width="0.8"/><text x="588.35" y="162.7" font-family="Liberation Sans" font-size="5.4" fill="#333" text-anchor="middle" xml:space="preserve">dB</text><rect x="851.2" y="158.3" width="32.9" height="5.5" fill="#e2e2e2" stroke="#4a4a4a" stroke-width="1" rx="0.7"/><line x1="851.9" y1="159.3" x2="883.4" y2="159.3" stroke="#f8f8f8" stroke-width="0.8"/><text x="867.65" y="162.7" font-family="Liberation Sans" font-size="5.4" fill="#333" text-anchor="middle" xml:space="preserve">Orders</text><text x="579.3" y="108" font-family="Liberation Sans" font-size="7.6" fill="#3c3cff" text-anchor="middle" transform="rotate(-90 579.3 108)" textLength="91.4" lengthAdjust="spacingAndGlyphs" xml:space="preserve">VdB (0 dB Ref 5.57E-07 in/s)</text><rect x="931" y="66.5" width="284.5" height="81.5" fill="#ffffff"/><line x1="987.2" y1="67.5" x2="987.2" y2="147" stroke="#bdbdbd" stroke-width="0.7" stroke-dasharray="1.2,2.2"/><line x1="1042.4" y1="67.5" x2="1042.4" y2="147" stroke="#bdbdbd" stroke-width="0.7" stroke-dasharray="1.2,2.2"/><line x1="1097.6" y1="67.5" x2="1097.6" y2="147" stroke="#bdbdbd" stroke-width="0.7" stroke-dasharray="1.2,2.2"/><line x1="1152.8" y1="67.5" x2="1152.8" y2="147" stroke="#bdbdbd" stroke-width="0.7" stroke-dasharray="1.2,2.2"/><line x1="1208" y1="67.5" x2="1208" y2="147" stroke="#bdbdbd" stroke-width="0.7" stroke-dasharray="1.2,2.2"/><line x1="932" y1="73.1" x2="1214.5" y2="73.1" stroke="#bdbdbd" stroke-width="0.7" stroke-dasharray="1.2,2.2"/><line x1="932" y1="80.1" x2="1214.5" y2="80.1" stroke="#bdbdbd" stroke-width="0.7" stroke-dasharray="1.2,2.2"/><line x1="932" y1="86.7" x2="1214.5" y2="86.7" stroke="#bdbdbd" stroke-width="0.7" stroke-dasharray="1.2,2.2"/><line x1="932" y1="91.1" x2="1214.5" y2="91.1" stroke="#bdbdbd" stroke-width="0.7" stroke-dasharray="1.2,2.2"/><line x1="932" y1="100.3" x2="1214.5" y2="100.3" stroke="#bdbdbd" stroke-width="0.7" stroke-dasharray="1.2,2.2"/><line x1="932" y1="107.7" x2="1214.5" y2="107.7" stroke="#bdbdbd" stroke-width="0.7" stroke-dasharray="1.2,2.2"/><line x1="932" y1="114.4" x2="1214.5" y2="114.4" stroke="#bdbdbd" stroke-width="0.7" stroke-dasharray="1.2,2.2"/><line x1="932" y1="118.4" x2="1214.5" y2="118.4" stroke="#bdbdbd" stroke-width="0.7" stroke-dasharray="1.2,2.2"/><line x1="932" y1="127.9" x2="1214.5" y2="127.9" stroke="#bdbdbd" stroke-width="0.7" stroke-dasharray="1.2,2.2"/><line x1="932" y1="134.5" x2="1214.5" y2="134.5" stroke="#bdbdbd" stroke-width="0.7" stroke-dasharray="1.2,2.2"/><line x1="932" y1="141.2" x2="1214.5" y2="141.2" stroke="#bdbdbd" stroke-width="0.7" stroke-dasharray="1.2,2.2"/><path d="M932.5 76.2V85M933.5 77.6V82.9M934.5 76.6V82.5M935.5 74.8V84.9M936.5 78.4V83.2M937.5 76.7V83.3M938.5 78.3V83.1M939.5 72V83.2M940.5 75.8V84.5M941.5 76V84.7M942.5 74.6V82.3M943.5 76V86.1M944.5 72.3V84.2M945.5 74.5V84.3M946.5 69.7V82.7M947.5 73.9V86.6M948.5 75.8V82.7M949.5 76.5V85.1M950.5 76.9V86.5M951.5 73V86.4M952.5 74.7V85.6M953.5 77V85.4M954.5 76V86.7M955.5 77V86.3M956.5 74.5V88.2M957.5 76.2V93M958.5 78.4V83.3M959.5 76V82.9M960.5 74.4V84.6M961.5 73V91.3M962.5 77.7V81.9M963.5 74.6V83.5M964.5 75.7V84.6M965.5 75.3V86.1M966.5 76.1V82.7M967.5 72.8V85M968.5 77.7V83.1M969.5 77.2V82.4M970.5 75.6V88.8M971.5 71.7V83.3M972.5 70.8V87.9M973.5 77.7V84.9M974.5 76.9V93M975.5 75.6V83.2M976.5 68.1V84M977.5 74.7V86.3M978.5 76.8V84.6M979.5 71.6V86M980.5 70.5V82.4M981.5 76.9V86.5M982.5 75.9V85.5M983.5 78V83.7M984.5 72.4V82.4M985.5 78V83.3M986.5 73.9V93M987.5 76.6V83.8M988.5 75.9V84.2M989.5 76.9V83.5M990.5 78.1V84.7M991.5 78V82.2M992.5 77.1V86.2M993.5 78.3V85.9M994.5 78.4V81.4M995.5 71V82.7M996.5 74.9V82.8M997.5 75.9V81.5M998.5 76.9V83M999.5 75.8V84.4M1000.5 72.6V87.5M1001.5 73.4V82.6M1002.5 77.6V84.5M1003.5 74.1V85.1M1004.5 77.7V84.2M1005.5 73.1V83.5M1006.5 75.3V84.4M1007.5 75V90.7M1008.5 71.5V85.3M1009.5 72.4V85M1010.5 75.8V87.5M1011.5 76.8V82M1012.5 76.9V84.1M1013.5 74.4V86.1M1014.5 77.1V88M1015.5 78.3V86.1M1016.5 74.4V83.6M1017.5 77.1V83.6M1018.5 76.4V86.1M1019.5 75V82.9M1020.5 77V87.2M1021.5 78.3V82.8M1022.5 76.5V83.3M1023.5 77.8V83.6M1024.5 77V82.3M1025.5 76.5V84.5M1026.5 73.2V83.1M1027.5 68.3V86.6M1028.5 72.8V82.1M1029.5 77.6V81.8M1030.5 72.9V83.1M1031.5 77.5V82.7M1032.5 77.7V83.6M1033.5 77.3V85.5M1034.5 74.8V87.9M1035.5 77.2V85.2M1036.5 76.8V84.6M1037.5 77V91.8M1038.5 67.2V88.7M1039.5 76.4V83.4M1040.5 74.1V87.8M1041.5 76.6V84.8M1042.5 75.2V91.7M1043.5 75.9V86M1044.5 72.6V86.9M1045.5 74.9V85.4M1046.5 69.3V86.7M1047.5 67.7V88.3M1048.5 68.6V84.4M1049.5 73.3V83.1M1050.5 73.5V87.8M1051.5 77.6V86.8M1052.5 76V86.1M1053.5 75.3V84.7M1054.5 73.7V86.2M1055.5 77.1V86M1056.5 75.1V82.2M1057.5 74.8V84.7M1058.5 75.2V83.1M1059.5 72.2V82.6M1060.5 72.3V83.1M1061.5 73.4V90.3M1062.5 77V83.2M1063.5 75.9V86.7M1064.5 76.9V83.2M1065.5 74.6V84.6M1066.5 78.4V85.1M1067.5 76.2V83M1068.5 74.8V83.5M1069.5 76.9V82.7M1070.5 74.5V91.4M1071.5 70.5V93M1072.5 72.8V82.9M1073.5 75.4V86.6M1074.5 69.5V85.3M1075.5 75V86.5M1076.5 76.2V87.3M1077.5 74.6V83.4M1078.5 74.8V82.6M1079.5 70.3V83.2M1080.5 76.4V83.8M1081.5 75.5V84.8M1082.5 77.3V82.7M1083.5 78V84.5M1084.5 77.7V83.6M1085.5 74.9V83.5M1086.5 72.4V83.2M1087.5 77.7V86.2M1088.5 78.3V82.8M1089.5 77.7V83.3M1090.5 78.6V88M1091.5 77.7V87.9M1092.5 76.3V82.2M1093.5 73.2V82M1094.5 75.3V82.3M1095.5 78.4V85.3M1096.5 72V87.3M1097.5 75.5V82.2M1098.5 74.2V83.5M1099.5 76.5V84M1100.5 75.4V82.2M1101.5 70.3V85M1102.5 76.8V82.1M1103.5 76.7V87.8M1104.5 72.5V85.7M1105.5 76.3V83.5M1106.5 72.8V88M1107.5 78.1V86.8M1108.5 72.3V85.3M1109.5 74.7V85.9M1110.5 74.1V83M1111.5 74.4V83.1M1112.5 76.7V82.9M1113.5 77.2V82.6M1114.5 75.9V83.1M1115.5 76.5V84.8M1116.5 77.3V85.7M1117.5 73.4V93M1118.5 76.8V88.8M1119.5 75.7V83M1120.5 72.7V83.4M1121.5 74V86.8M1122.5 69.7V93M1123.5 72.5V87.4M1124.5 73.7V92.5M1125.5 72.1V93M1126.5 75.9V93M1127.5 75.4V84.5M1128.5 71V83.9M1129.5 75.3V92.4M1130.5 69.7V83.7M1131.5 67.8V89.8M1132.5 68.3V83.2M1133.5 68.3V83.6M1134.5 75.3V84.3M1135.5 75.7V84.9M1136.5 71.5V82.9M1137.5 76.7V83.9M1138.5 72.5V84M1139.5 75.8V91M1140.5 71.3V82.6M1141.5 77.4V84.8M1142.5 70.7V84.7M1143.5 76.5V82.9M1144.5 71.7V84.7M1145.5 78.2V92.6M1146.5 74.9V82.8M1147.5 77.2V87.4M1148.5 77.1V86.8M1149.5 75.1V85.8M1150.5 75.8V84.5M1151.5 76.2V83.2M1152.5 78V82.9M1153.5 77.5V86.8M1154.5 69.4V86.9M1155.5 78.2V82.5M1156.5 77.8V81.5M1157.5 74.4V82.5M1158.5 77.8V86.3M1159.5 78.4V83.2M1160.5 77.5V86.8M1161.5 77.6V82.4M1162.5 76.9V83.3M1163.5 77.6V82.1M1164.5 77.7V83.4M1165.5 72.2V82.5M1166.5 76.2V82.7M1167.5 69.2V84.8M1168.5 76.6V87.7M1169.5 67.2V83.8M1170.5 74.3V88.6M1171.5 72.8V85M1172.5 73.8V90.8M1173.5 69.1V84.1M1174.5 70V84M1175.5 73.5V93M1176.5 67.2V90.8M1177.5 75.4V87M1178.5 67.2V89.8M1179.5 76.6V82.7M1180.5 76.9V84.1M1181.5 71.6V84.4M1182.5 74.2V87.9M1183.5 76.6V84.9M1184.5 71.8V84.7M1185.5 77.9V82.8M1186.5 76.7V83.4M1187.5 77.6V85.9M1188.5 76V90M1189.5 67.2V84.9M1190.5 74.7V88.4M1191.5 77.1V93M1192.5 77V86.4M1193.5 75.5V83.8M1194.5 74.7V86.4M1195.5 75.5V82.3M1196.5 77.1V83.6M1197.5 76V84.9M1198.5 73.6V85.6M1199.5 75.9V93M1200.5 73.3V84.1M1201.5 75.3V87.1M1202.5 76.1V87.2M1203.5 69.7V83.1M1204.5 76V88.3M1205.5 77V90.2M1206.5 74V84.6M1207.5 72.4V87.6M1208.5 74.8V84.1M1209.5 74.2V86.8M1210.5 76.9V86.3M1211.5 77V87.4M1212.5 77V86.2M1213.5 76.3V85M1214.5 77.3V83" stroke="#9db3d2" stroke-width="1" fill="none"/><path d="M932.5 78.1V82.5M933.5 77.5V82.7M934.5 76.1V83.8M935.5 78V83.2M936.5 78.1V83.7M937.5 78.2V85.5M938.5 76.7V83.2M939.5 74.4V84.7M940.5 75.9V84.8M941.5 76.6V84.4M942.5 76.7V89.2M943.5 74.8V85.1M944.5 75.8V82.8M945.5 74.2V83.3M946.5 76.8V84.8M947.5 76.4V83.3M948.5 76.9V83.9M949.5 77.3V83.7M950.5 76.7V87.1M951.5 74.8V87M952.5 73.6V83.2M953.5 75.7V84M954.5 77.1V82.3M955.5 76.3V84.2M956.5 76.3V83.7M957.5 78.1V82.5M958.5 77.8V83.3M959.5 77.9V86.7M960.5 74.6V82.8M961.5 78V86.5M962.5 77.9V82.3M963.5 76.4V82.5M964.5 77.9V83.9M965.5 77.9V84.4M966.5 77.4V91.9M967.5 77.4V83.4M968.5 77.1V82.3M969.5 74.4V82.2M970.5 77.4V83.2M971.5 78.2V85.2M972.5 72.2V83.1M973.5 77.2V82.9M974.5 76V84.1M975.5 75.2V84.9M976.5 77.2V82.2M977.5 70.8V84.4M978.5 76.9V82.8M979.5 77.1V83.3M980.5 77.8V83.8M981.5 77.2V82.6M982.5 75.8V84.5M983.5 78V83.5M984.5 71.5V82.2M985.5 78.1V83.2M986.5 77.4V82.6M987.5 76.8V83.1M988.5 76.3V83.7M989.5 76.1V82M990.5 77.4V84.7M991.5 78V82.7M992.5 77.2V84M993.5 78.3V84.5M994.5 77.4V83.8M995.5 77.9V81.7M996.5 76.9V82.2M997.5 78.1V84.4M998.5 77.7V82.5M999.5 78V82.7M1000.5 77.3V82.2M1001.5 78.1V82.8M1002.5 77.7V84.4M1003.5 75.7V84.5M1004.5 77.8V82.5M1005.5 76.4V82.5M1006.5 77.4V83.5M1007.5 76.9V84.8M1008.5 78.4V83.4M1009.5 77.1V83.8M1010.5 77.6V85.3M1011.5 77.3V81.9M1012.5 78.2V83.1M1013.5 77V86.9M1014.5 77.1V83.7M1015.5 74.6V82.6M1016.5 77.1V84.1M1017.5 76.7V83.5M1018.5 76.8V83.3M1019.5 74.6V83.3M1020.5 75.6V82.8M1021.5 78.4V85.1M1022.5 78.2V83.7M1023.5 76.7V83.7M1024.5 76.1V84.8M1025.5 77.3V84.1M1026.5 76.5V82.8M1027.5 77.4V83M1028.5 74.9V85.6M1029.5 77.5V83.6M1030.5 78.1V86.7M1031.5 74.8V84M1032.5 77.2V82M1033.5 75.8V87M1034.5 76.5V83M1035.5 77.7V82.8M1036.5 76.6V86.6M1037.5 76.2V82.1M1038.5 76.1V82.7M1039.5 73V84.2M1040.5 76.2V86.2M1041.5 76.4V84.4M1042.5 76V85.4M1043.5 75.2V86.6M1044.5 76.8V83.7M1045.5 75.5V84.1M1046.5 75.7V83.6M1047.5 75.4V82.7M1048.5 76.4V82.7M1049.5 77V84.3M1050.5 77.6V85.4M1051.5 77.8V88.3M1052.5 77.6V83.9M1053.5 72.9V83.2M1054.5 77V85.9M1055.5 76.6V85.5M1056.5 77V86.3M1057.5 77V82.5M1058.5 77.8V84.8M1059.5 77.6V89.6M1060.5 76.4V83.5M1061.5 76V84.8M1062.5 76.3V82.5M1063.5 77V84.4M1064.5 75.8V82.4M1065.5 78.1V82.2M1066.5 78.5V86.1M1067.5 74.5V82.4M1068.5 76.8V87.3M1069.5 75.2V83.3M1070.5 76.1V86.5M1071.5 77.8V86.6M1072.5 76.4V82.6M1073.5 75.9V85.4M1074.5 72.2V84.1M1075.5 69.6V85M1076.5 73.1V83.5M1077.5 76.5V83.7M1078.5 74.4V84.4M1079.5 76.5V82.5M1080.5 75.9V84.1M1081.5 74.9V83.7M1082.5 74.8V82.1M1083.5 77.5V83.3M1084.5 74.3V82.8M1085.5 77.7V82.1M1086.5 76.2V84M1087.5 78V83.2M1088.5 78.1V82.7M1089.5 77.5V81.7M1090.5 77.7V82M1091.5 77.5V81.8M1092.5 76.2V82M1093.5 75.5V81.5M1094.5 78.1V82.5M1095.5 78.5V82.4M1096.5 78.1V82.7M1097.5 76.8V82.4M1098.5 73.4V84.4M1099.5 76.5V88.2M1100.5 74.7V83.7M1101.5 77.8V84.3M1102.5 75.5V82M1103.5 78.1V87.2M1104.5 75.6V83.9M1105.5 77.5V82.6M1106.5 77.6V84.2M1107.5 77.8V83.4M1108.5 77.4V83.7M1109.5 74.5V82.1M1110.5 75.1V82.6M1111.5 75.1V83.6M1112.5 75.6V86.9M1113.5 77.8V84.5M1114.5 75.4V83.9M1115.5 77V83M1116.5 75.7V84.5M1117.5 77.8V82.5M1118.5 76.5V83.2M1119.5 76.2V86.8M1120.5 75.8V84.5M1121.5 77.3V85.4M1122.5 73.1V92.4M1123.5 74.8V91.7M1124.5 73.7V88M1125.5 71.2V92.8M1126.5 67.3V86.5M1127.5 75.9V86.8M1128.5 75.9V84.4M1129.5 74.7V84.2M1130.5 76.1V83.1M1131.5 77.1V83.2M1132.5 77.1V83.3M1133.5 74.4V82.6M1134.5 75.7V86.4M1135.5 76V83.4M1136.5 76.3V83.7M1137.5 77.6V84M1138.5 76.6V84.4M1139.5 76.4V83.5M1140.5 76.7V82.5M1141.5 76V89.5M1142.5 76V84.6M1143.5 77.5V83.5M1144.5 76.2V84M1145.5 78.3V85.5M1146.5 76.8V82M1147.5 77.9V83.5M1148.5 74.6V83.5M1149.5 74.5V82.8M1150.5 77.9V82.9M1151.5 77V82.4M1152.5 77.9V82.7M1153.5 76.8V81.6M1154.5 76.2V83.4M1155.5 77.7V84.8M1156.5 78.1V81.7M1157.5 77.6V81.6M1158.5 76.7V82.8M1159.5 77.8V81.9M1160.5 76.8V82.6M1161.5 78.5V81.5M1162.5 76.2V84.6M1163.5 78.1V82.1M1164.5 77.1V84.1M1165.5 76.6V82.7M1166.5 77.3V83.2M1167.5 77.7V83M1168.5 76.6V83.2M1169.5 75.7V82.7M1170.5 75.1V85.1M1171.5 76.8V82.8M1172.5 76.4V85.9M1173.5 75.2V85.2M1174.5 75.6V85.5M1175.5 75V87.1M1176.5 71.8V83.7M1177.5 73.8V86.3M1178.5 76.5V83.5M1179.5 77V83.5M1180.5 74.2V83.3M1181.5 76.6V82.4M1182.5 77.1V85.2M1183.5 78V84.4M1184.5 76.5V82.8M1185.5 76.5V82.2M1186.5 77.4V82.4M1187.5 76.7V82.2M1188.5 77.6V83.8M1189.5 77.8V83.9M1190.5 78V82.5M1191.5 75.7V82.3M1192.5 75V83.8M1193.5 75.8V84.1M1194.5 76.7V83.8M1195.5 74.3V82.3M1196.5 77.3V83.3M1197.5 76.1V83.3M1198.5 74.6V86.1M1199.5 76.5V83.5M1200.5 77.9V84.1M1201.5 74.1V83.7M1202.5 73V83.8M1203.5 76.7V84.5M1204.5 76.2V84.3M1205.5 73.7V82.1M1206.5 77V89.1M1207.5 76.8V84.2M1208.5 69.3V85.6M1209.5 76.5V90.7M1210.5 76.7V84.6M1211.5 73.4V84.7M1212.5 76.7V82.1M1213.5 76.9V83.8M1214.5 78.4V82.7" stroke="#3f6ca4" stroke-width="1" fill="none"/><path d="M932.5 78.8V81.4M933.5 78.7V81.9M935.5 78.3V81.9M936.5 78.8V82.2M938.5 78.7V82.3M939.5 77.7V81.7M940.5 77.5V81.9M943.5 77.1V82.2M945.5 77V82.9M946.5 77.9V81.9M947.5 77.3V82.8M948.5 77.7V82.4M949.5 77.5V82.2M951.5 78.2V82.6M952.5 76.9V81.7M953.5 77.5V82M954.5 78.3V82.2M955.5 77.8V83.3M957.5 78.4V82.3M958.5 78.6V83M959.5 78.6V82.4M960.5 77.4V82.5M963.5 77.9V81.9M964.5 78.1V81.7M966.5 77.8V81.7M968.5 78.1V82.1M969.5 77.2V81.7M970.5 77.6V82.9M973.5 77.8V82.5M974.5 77.3V83.3M975.5 77V82.5M976.5 78.3V82.1M978.5 77.6V82.6M979.5 78V81.9M980.5 78.1V82.2M982.5 78.3V82.1M983.5 78.4V83M984.5 78.1V82.1M987.5 77.8V82.9M988.5 78.3V82.6M989.5 78V82M990.5 78.5V81.4M991.5 78.3V81.9M992.5 78.5V82.1M994.5 78.6V81.2M997.5 78.7V81.3M998.5 77.9V81.9M1003.5 77.9V82.6M1004.5 78.8V82M1006.5 77.5V82.9M1007.5 77.4V82.5M1008.5 78.5V83M1009.5 78.2V83M1011.5 77.7V81.8M1012.5 78.4V82M1014.5 77.7V81.7M1017.5 78.5V82.9M1019.5 78.5V82.8M1021.5 78.8V81.6M1022.5 78.4V82.6M1023.5 78.5V82.6M1024.5 77.5V81.8M1025.5 77.9V82.4M1027.5 77.8V82.7M1028.5 78.7V81.8M1030.5 78.2V82.9M1031.5 78.1V81.6M1033.5 77.4V83.2M1034.5 78.1V82.4M1035.5 78.2V82.3M1036.5 78.4V82.8M1038.5 76.8V81.8M1039.5 78.2V82.6M1040.5 77.9V83.6M1041.5 77.3V83.6M1042.5 77V83.5M1047.5 77.1V82.1M1048.5 77V81.9M1049.5 78.2V83M1053.5 77.2V82.4M1054.5 77.2V81.7M1057.5 77.6V81.8M1059.5 78.2V82.4M1061.5 77.5V82.4M1062.5 78.1V81.6M1064.5 77.8V82.2M1065.5 78.5V81.6M1066.5 78.6V82.9M1068.5 77.8V83.4M1070.5 76.6V83.7M1072.5 77.2V82.6M1075.5 77.2V82.7M1076.5 77.1V82.8M1077.5 77.1V83.3M1078.5 76.8V82.6M1079.5 78V81.8M1080.5 77.1V82.9M1082.5 77.6V81.6M1083.5 78.2V81.9M1085.5 78.9V82M1086.5 78.2V82.3M1088.5 78.7V82M1091.5 78.5V81.4M1092.5 78.4V81.9M1094.5 78.1V81.5M1096.5 78.1V81.9M1099.5 77.9V82.7M1100.5 78.3V81.7M1101.5 78V82.3M1102.5 77.2V82M1103.5 78.5V83.2M1105.5 78V82.3M1109.5 76.9V81.9M1110.5 76.7V82.2M1112.5 76.8V82.2M1113.5 78.2V82.2M1115.5 78.1V81.9M1116.5 78.1V83.3M1118.5 77.7V82.1M1119.5 76.8V82.6M1120.5 76.7V83.1M1122.5 76.1V84.1M1124.5 73.8V86.4M1125.5 74.8V85.6M1126.5 76.4V83.2M1127.5 76.7V84.1M1129.5 78.2V83.4M1130.5 76.4V82.6M1135.5 77.8V82M1136.5 77.5V82.1M1137.5 77.8V83.4M1139.5 77.1V81.8M1141.5 78.1V83M1144.5 77.2V82.8M1145.5 78.4V82.5M1148.5 78.3V82.7M1149.5 78.7V82.6M1151.5 77.8V82.1M1154.5 78.5V82M1156.5 78.9V81.2M1158.5 77.9V82M1159.5 78.6V81.4M1160.5 78.6V82.1M1161.5 78.9V81.3M1163.5 78.6V81.8M1167.5 78.4V82M1168.5 77.5V83.1M1170.5 76.7V83M1172.5 77.1V83.4M1174.5 76.1V83.7M1175.5 75.2V85.8M1176.5 77V83.2M1177.5 75.5V84.7M1178.5 77.2V82.2M1180.5 77.1V83.3M1183.5 78V81.6M1184.5 77.6V82.4M1185.5 78.1V81.5M1186.5 78.1V82M1187.5 78V81.7M1188.5 78.2V82.8M1189.5 78.2V82.8M1190.5 78.7V82.3M1191.5 77.6V82.1M1192.5 77.3V83.1M1193.5 77.1V83M1195.5 77.4V81.7M1196.5 78.4V82.1M1197.5 77.3V83M1198.5 76.7V83.2M1199.5 77.4V83.3M1201.5 77.2V82.3M1205.5 77.4V82M1206.5 77.9V82.8M1207.5 77.5V82.9M1211.5 77.1V83.2" stroke="#053a7e" stroke-width="1" fill="none"/><path d="M934.5 78.6V82M937.5 78.5V81.6M941.5 77V82.2M942.5 77.2V82M944.5 78.1V82.5M950.5 77V82M956.5 77V82.3M961.5 78.3V82.1M962.5 78V81.7M965.5 78.3V82.4M967.5 77.6V82.3M971.5 78.3V81.8M972.5 77.3V82.7M977.5 77.6V82.5M981.5 77.9V82.1M985.5 78.2V82.6M986.5 77.7V81.5M993.5 78.9V81.6M995.5 78V81.6M996.5 78.1V82M999.5 78.1V82.3M1000.5 77.7V82.1M1001.5 78.6V82.3M1002.5 78.1V82.4M1005.5 78.2V82.4M1010.5 78.4V82.1M1013.5 77.4V81.7M1015.5 78.4V82.2M1016.5 77.5V82.9M1018.5 77.5V82.4M1020.5 78.1V81.8M1026.5 77.7V81.6M1029.5 78V81.7M1032.5 78.5V81.9M1037.5 77.1V81.8M1043.5 77.4V83.5M1044.5 76.9V82.7M1045.5 76.8V83.3M1046.5 77.5V83M1050.5 77.6V82.5M1051.5 78V83.2M1052.5 78.2V83.2M1055.5 78.5V82M1056.5 77.5V82.2M1058.5 78.2V82M1060.5 78.3V82.5M1063.5 78V82.9M1067.5 77.4V82.1M1069.5 77V82.1M1071.5 77.9V83.8M1073.5 76.4V84.9M1074.5 74.8V83.1M1081.5 77.6V82M1084.5 77.9V82.4M1087.5 78.5V82.2M1089.5 78V81.3M1090.5 79V81.5M1093.5 77.8V81.5M1095.5 78.7V82M1097.5 77.7V82.1M1098.5 77.8V82.4M1104.5 77.6V83.2M1106.5 78.1V83.5M1107.5 78.1V83.3M1108.5 78.1V83.2M1111.5 77V82.9M1114.5 76.8V81.7M1117.5 77.9V82.2M1121.5 77.9V83.5M1123.5 75.8V83.7M1128.5 76V83.7M1131.5 77.4V82.6M1132.5 78.2V82.8M1133.5 76.7V82.6M1134.5 76.8V83.4M1138.5 77.8V83.6M1140.5 76.9V82.3M1142.5 78.2V82.8M1143.5 78.2V82M1146.5 78V81.8M1147.5 78.5V82.6M1150.5 78.6V82.3M1152.5 78.1V82.5M1153.5 78.1V81.5M1155.5 78.6V81.8M1157.5 78.5V81.4M1162.5 77.9V82.5M1164.5 78.5V82.5M1165.5 78.6V82.4M1166.5 77.8V82M1169.5 77.4V82M1171.5 77.6V82.2M1173.5 75.8V83.4M1179.5 77V82M1181.5 78V82.2M1182.5 77.1V82.3M1194.5 78.6V82.5M1200.5 78.1V83.6M1202.5 76.7V83.6M1203.5 77.2V82.7M1204.5 77.2V82.9M1208.5 77.2V83M1209.5 78.4V82.6M1210.5 78.3V82M1212.5 78.1V81.9M1213.5 78V83.2M1214.5 78.5V82" stroke="#2a5a96" stroke-width="1" fill="none"/><path d="M932.5 100.5V112.3M933.5 103.4V112.9M934.5 103.7V117.6M935.5 105.5V112.2M936.5 100.6V112.5M937.5 99.6V113.1M938.5 103.3V112.2M939.5 99.6V110.3M940.5 104.2V112.4M941.5 102.7V113.2M942.5 94.4V116.6M943.5 101.7V112.7M944.5 103.6V111.9M945.5 101.3V112.2M946.5 103.8V111M947.5 106V111.6M948.5 105.1V110.5M949.5 94.4V119.8M950.5 105.4V113.2M951.5 105.2V118.4M952.5 99.2V112.1M953.5 103.5V111.7M954.5 100.9V116.2M955.5 94.4V112.6M956.5 103.5V112.5M957.5 105.1V111.9M958.5 104.6V111.4M959.5 104.6V115.3M960.5 105.4V110.7M961.5 102.9V113.5M962.5 104.5V115.8M963.5 106.3V111.7M964.5 105.2V110.8M965.5 104.1V109.8M966.5 105.3V120.1M967.5 105.4V119.1M968.5 105.8V112.1M969.5 106.3V113.3M970.5 99.3V115.3M971.5 100.4V113.2M972.5 105.5V110M973.5 104.7V113.9M974.5 97.7V115.2M975.5 105V114.2M976.5 96.6V111.3M977.5 105.6V110.4M978.5 104.6V110.4M979.5 104.5V113.2M980.5 100.5V111.3M981.5 94.5V116.1M982.5 103.5V112.5M983.5 101.3V110.3M984.5 105.6V111.6M985.5 104.6V115.4M986.5 100.5V111.9M987.5 105.6V117.6M988.5 106.2V110.6M989.5 100.1V116.6M990.5 103.6V117.1M991.5 104V110.1M992.5 105.3V110.2M993.5 105.5V111.4M994.5 100.6V120.3M995.5 101.1V111.3M996.5 102.4V114.8M997.5 98V112.6M998.5 103.3V111.3M999.5 102.6V113.6M1000.5 102.9V111.7M1001.5 104.2V110.4M1002.5 100.8V116M1003.5 101.2V120.3M1004.5 104.3V112.7M1005.5 102.8V120.1M1006.5 101.3V112.7M1007.5 99.2V110.6M1008.5 101.7V115.3M1009.5 101.5V116.4M1010.5 102.2V110.8M1011.5 104.9V113.8M1012.5 103.5V115.2M1013.5 103.3V111.9M1014.5 104.1V109.9M1015.5 101.8V111.3M1016.5 99.4V115.2M1017.5 96.9V117.6M1018.5 105.5V114.8M1019.5 102.1V120.3M1020.5 97.7V115.5M1021.5 103.5V110.8M1022.5 103.4V120.3M1023.5 103.7V111.4M1024.5 105.5V112.4M1025.5 104.3V118.7M1026.5 101.6V112.5M1027.5 105.3V111.9M1028.5 105.4V111.4M1029.5 102.7V111M1030.5 101.7V113.5M1031.5 99.3V112.3M1032.5 103.4V120.3M1033.5 102V110.3M1034.5 97.9V111.1M1035.5 103.2V114.8M1036.5 103.8V118.7M1037.5 104.2V113.9M1038.5 100.3V110.8M1039.5 105.4V109.9M1040.5 104.9V109.9M1041.5 97.2V114.8M1042.5 106V115.1M1043.5 104.5V115.8M1044.5 105.3V111M1045.5 104V111.2M1046.5 99V111.3M1047.5 100.9V111.5M1048.5 104.3V115M1049.5 104.7V110.5M1050.5 102.1V115.9M1051.5 104.3V114.1M1052.5 104.7V110.3M1053.5 102.6V110.3M1054.5 97.9V111.9M1055.5 103.4V118M1056.5 104.8V110.6M1057.5 104.7V111.7M1058.5 104.5V115.1M1059.5 102.2V115.4M1060.5 105.6V111M1061.5 103.6V110.5M1062.5 105V111.4M1063.5 105.9V110.9M1064.5 98.9V112.8M1065.5 105.8V114.2M1066.5 98.7V111.5M1067.5 103.5V111.7M1068.5 104.8V115.7M1069.5 105.7V113.3M1070.5 104.5V113.6M1071.5 102.8V111.9M1072.5 94.4V116.5M1073.5 97.5V119.9M1074.5 96.3V116.4M1075.5 103.1V116.8M1076.5 98.1V120.3M1077.5 94.4V111.2M1078.5 98.1V111.2M1079.5 95.8V111.9M1080.5 102.8V114.7M1081.5 103V114M1082.5 98.8V113.5M1083.5 96.4V114.1M1084.5 103.3V120.3M1085.5 104.7V118.2M1086.5 102.7V110.4M1087.5 102V115.9M1088.5 102.1V112.8M1089.5 104.1V115.6M1090.5 101.9V114.3M1091.5 105.8V112.7M1092.5 103V112M1093.5 104.2V113.4M1094.5 103.4V111.4M1095.5 99.8V120.3M1096.5 105.3V112.9M1097.5 105.3V114.8M1098.5 105.2V111.8M1099.5 106.3V111.8M1100.5 104.5V113.2M1101.5 101.8V112.3M1102.5 104.2V114.8M1103.5 100.2V110.6M1104.5 101.7V115.1M1105.5 105V120.3M1106.5 103.3V116.2M1107.5 103.2V113.1M1108.5 98.8V112.4M1109.5 103.9V119.3M1110.5 96V113.1M1111.5 104.9V111.1M1112.5 101.9V110.3M1113.5 99V111M1114.5 101.1V112.5M1115.5 104.5V112M1116.5 105.9V110.9M1117.5 104.9V112M1118.5 104.5V112.8M1119.5 104.1V114M1120.5 102.9V110.4M1121.5 102.4V110.6M1122.5 98.1V113M1123.5 104V114.9M1124.5 96.3V116.6M1125.5 98.1V113.1M1126.5 94.4V113.9M1127.5 103.4V111.6M1128.5 102.4V120.3M1129.5 102.5V112.3M1130.5 104V112.1M1131.5 98.6V120.3M1132.5 99V115M1133.5 99.1V111.2M1134.5 100.6V110.7M1135.5 104.7V114.1M1136.5 106V114.5M1137.5 105.3V113.1M1138.5 105.1V112.5M1139.5 102.6V113.4M1140.5 101.2V112.6M1141.5 104.6V111.1M1142.5 101.9V112.8M1143.5 97.9V109.9M1144.5 99.1V120.3M1145.5 103.2V119.6M1146.5 102.4V111.7M1147.5 102.4V119.6M1148.5 105.4V114.4M1149.5 104.6V116.2M1150.5 104.8V111.1M1151.5 99.7V110.8M1152.5 95.7V113.8M1153.5 101.8V110.4M1154.5 98.6V112.1M1155.5 104.3V114.5M1156.5 97.4V113.7M1157.5 95.9V111.3M1158.5 100.2V111.6M1159.5 105.2V112.9M1160.5 101.3V112.6M1161.5 103.9V113.6M1162.5 97.3V112.6M1163.5 103.1V111M1164.5 103.9V113.5M1165.5 105.1V120.3M1166.5 103.7V112.1M1167.5 104.7V113.1M1168.5 98.1V111.6M1169.5 102.1V110M1170.5 105.4V111.2M1171.5 101.8V114M1172.5 104V114.9M1173.5 94.8V112.3M1174.5 103.6V120.3M1175.5 102.3V120.3M1176.5 98.1V114.3M1177.5 99.8V120.3M1178.5 94.4V114M1179.5 102.9V112.4M1180.5 99.5V117.6M1181.5 102.5V111.9M1182.5 101.8V113.1M1183.5 101.9V111.5M1184.5 104.2V111.1M1185.5 102.7V112.8M1186.5 104V114.1M1187.5 104V116.5M1188.5 105V111.4M1189.5 104.4V111M1190.5 100.5V111M1191.5 99.6V112.3M1192.5 104.8V109.7M1193.5 104.1V111.3M1194.5 105.2V111.2M1195.5 101.9V117.3M1196.5 104.4V111.4M1197.5 106.2V111.5M1198.5 104.8V112.4M1199.5 104.7V111M1200.5 102.1V110.5M1201.5 98.6V114.5M1202.5 105.5V113.2M1203.5 97.6V110.1M1204.5 100.9V112.8M1205.5 105.9V113M1206.5 105.4V113.9M1207.5 105.2V112.9M1208.5 99.6V120.3M1209.5 104.1V114.1M1210.5 105.1V113.6M1211.5 102.5V115.5M1212.5 105.3V112.7M1213.5 98.1V112.7M1214.5 103.9V117.7" stroke="#9db3d2" stroke-width="1" fill="none"/><path d="M932.5 104.5V111.5M933.5 104V112.4M934.5 105.3V111.1M935.5 104.6V111.4M936.5 105.4V111.2M937.5 106.1V112.9M938.5 103.8V110.5M939.5 105.5V111.9M940.5 104.7V110M941.5 104V113.5M942.5 102.2V110.4M943.5 105.5V113.2M944.5 105.4V112.4M945.5 103.5V113.8M946.5 104.1V111.5M947.5 105.7V112.5M948.5 103.8V112.1M949.5 105.3V115.4M950.5 105V113.5M951.5 104.2V112.1M952.5 104V110.8M953.5 101.7V110.4M954.5 103.7V109.9M955.5 104.7V120.3M956.5 104V115.6M957.5 103.4V115.6M958.5 104.8V112.5M959.5 103V111.6M960.5 105.3V110.3M961.5 105.4V114.1M962.5 104.8V110.3M963.5 105.3V115.9M964.5 104.9V109.7M965.5 104.7V109.9M966.5 105.7V109.8M967.5 104V110.8M968.5 104.9V110.6M969.5 106.3V111.4M970.5 106.3V112.5M971.5 105.3V110.8M972.5 105.3V110.1M973.5 103.3V112.2M974.5 104.5V110.8M975.5 103.2V110.9M976.5 105.5V111.2M977.5 105.6V110.4M978.5 105.2V110.1M979.5 104.3V111.9M980.5 104.4V111M981.5 105.4V115.9M982.5 103.2V111.5M983.5 104.6V110.7M984.5 104.9V111M985.5 105.5V110.7M986.5 106.3V111.5M987.5 105.3V114.2M988.5 106.1V110.6M989.5 106V110.9M990.5 103.6V110.6M991.5 105.3V110.1M992.5 103.6V110.2M993.5 104.3V112.6M994.5 105.2V112.2M995.5 104V110.7M996.5 104V111.2M997.5 105.6V110.8M998.5 103.9V112.8M999.5 104.2V112.4M1000.5 105V110.4M1001.5 105V114.1M1002.5 104.7V112.3M1003.5 101.7V113.4M1004.5 106V112.4M1005.5 104.4V112.1M1006.5 99.7V115.7M1007.5 104.4V110.6M1008.5 102.8V113.5M1009.5 103.1V111M1010.5 105.3V112.5M1011.5 104.9V111.3M1012.5 103.6V112.1M1013.5 102V110M1014.5 105.7V110.5M1015.5 103.8V111.3M1016.5 105.2V110.2M1017.5 105.4V112.8M1018.5 105.2V110.2M1019.5 106V113.5M1020.5 103.9V110.6M1021.5 105.4V110.8M1022.5 103.3V112.3M1023.5 101.7V111.1M1024.5 105.8V111.3M1025.5 98.2V113.4M1026.5 104.3V113M1027.5 105.3V113.2M1028.5 104.7V111.3M1029.5 104.3V110.5M1030.5 104.1V110.9M1031.5 104.4V112.1M1032.5 103.8V110.1M1033.5 104V110.7M1034.5 105.6V111.2M1035.5 104.6V115M1036.5 104.5V111.3M1037.5 104V111.1M1038.5 105.5V111.6M1039.5 105.8V109.9M1040.5 104.3V110.1M1041.5 102.9V110.2M1042.5 105V109.7M1043.5 105.9V110.8M1044.5 106.7V110.6M1045.5 105.3V114.3M1046.5 106V110.8M1047.5 104.1V111.5M1048.5 105.5V111.6M1049.5 105.5V110.5M1050.5 103.6V109.5M1051.5 102.7V110.8M1052.5 98.6V109.7M1053.5 104.4V112.1M1054.5 104.4V113.2M1055.5 104.3V113.5M1056.5 104V111M1057.5 104.3V111M1058.5 105.6V113.4M1059.5 105.4V110.5M1060.5 105.7V111.6M1061.5 102.2V114.6M1062.5 105.4V110.7M1063.5 105.3V110.7M1064.5 104.8V114.4M1065.5 105.8V111.3M1066.5 100.8V111.8M1067.5 103.6V112.2M1068.5 104.5V111.1M1069.5 105.5V114.1M1070.5 103.8V112M1071.5 102V111.6M1072.5 103V114.7M1073.5 103.7V112.3M1074.5 97.5V114M1075.5 100.3V116M1076.5 102.5V116M1077.5 103.6V114.1M1078.5 103.7V116.5M1079.5 102.3V113.6M1080.5 105.7V114.4M1081.5 103.7V110.9M1082.5 102.9V112.5M1083.5 103.6V113.4M1084.5 99.5V112.9M1085.5 104.5V117.4M1086.5 104.1V113.4M1087.5 103.6V112.2M1088.5 103.7V120.3M1089.5 102V114.5M1090.5 100.4V112.2M1091.5 103.7V110.7M1092.5 104.5V110.8M1093.5 103.5V110.8M1094.5 105.7V113.2M1095.5 104.3V110.3M1096.5 105.7V110.2M1097.5 103.4V110.3M1098.5 105.9V110.6M1099.5 106.2V111.2M1100.5 103.3V115M1101.5 102.3V111.7M1102.5 103.8V110.8M1103.5 104.9V111.2M1104.5 103.9V114M1105.5 105.4V112.1M1106.5 104.7V112.6M1107.5 104.3V110M1108.5 105.3V110.8M1109.5 105.2V112.9M1110.5 105.3V112.2M1111.5 104.3V109.8M1112.5 106V109.9M1113.5 104.9V111.3M1114.5 106V109.6M1115.5 104.6V111.6M1116.5 106.5V110.6M1117.5 103.7V110.9M1118.5 103.8V111.5M1119.5 104.9V110.2M1120.5 102.1V111.2M1121.5 103.4V113.7M1122.5 103.9V112.1M1123.5 102.3V111.9M1124.5 103.9V115.5M1125.5 102.4V111.3M1126.5 103.2V112.3M1127.5 105.5V110.9M1128.5 105.4V111.6M1129.5 99.5V112.7M1130.5 103.1V111.2M1131.5 103.2V111.3M1132.5 101.9V112.9M1133.5 103.2V110.8M1134.5 104.4V111.5M1135.5 98.7V114.6M1136.5 105.6V110.9M1137.5 105.3V110.7M1138.5 105.5V110.6M1139.5 104.7V111.2M1140.5 104.6V111M1141.5 103.6V111.8M1142.5 103.7V110.3M1143.5 103.1V110.3M1144.5 106.2V114.4M1145.5 106.2V112M1146.5 105.5V112.5M1147.5 104.2V110.7M1148.5 101.2V111.1M1149.5 104.8V110.7M1150.5 104.7V110.6M1151.5 103.1V111.6M1152.5 104.2V111.5M1153.5 104.2V112.3M1154.5 104.8V115.1M1155.5 98.8V113.4M1156.5 104.5V110.5M1157.5 105.2V110.2M1158.5 105.8V111.9M1159.5 105.3V113.5M1160.5 103.4V112.5M1161.5 105V112.6M1162.5 101.1V116.8M1163.5 99.2V111.3M1164.5 102.1V111.7M1165.5 103.6V110.5M1166.5 104.7V111.6M1167.5 98.8V111.9M1168.5 105.1V111.4M1169.5 104.5V112.5M1170.5 103.2V112.9M1171.5 103.5V111.4M1172.5 102.9V115.7M1173.5 103.7V117.4M1174.5 105.1V112.9M1175.5 98.7V114.2M1176.5 103.4V113.7M1177.5 98.9V114.3M1178.5 102.7V111.1M1179.5 104.4V111M1180.5 103.4V113.7M1181.5 104.2V111.6M1182.5 104V112.2M1183.5 101.4V112.7M1184.5 103.1V111.3M1185.5 100.3V110.5M1186.5 106V111.6M1187.5 104.7V114.1M1188.5 105.9V115.7M1189.5 105.2V110.1M1190.5 102.6V112.3M1191.5 104.3V111.2M1192.5 104.8V109.6M1193.5 105.4V110M1194.5 105.3V113.9M1195.5 104.6V111.8M1196.5 105V111.3M1197.5 105.1V110M1198.5 106.3V113.7M1199.5 104.7V110.5M1200.5 103.6V111.2M1201.5 102.3V109.8M1202.5 105.5V109.7M1203.5 105V110.8M1204.5 104.9V110.9M1205.5 105.2V112.6M1206.5 106.1V116.2M1207.5 104.8V111M1208.5 104.2V113.3M1209.5 103.1V112.2M1210.5 102.9V112M1211.5 105.3V111.7M1212.5 104.1V112.5M1213.5 105.7V112.8M1214.5 103.7V110.1" stroke="#3f6ca4" stroke-width="1" fill="none"/><path d="M932.5 104.8V111.4M933.5 106.2V111.4M934.5 106.1V110.3M935.5 106V111.2M938.5 105V110M940.5 105.2V109.7M941.5 105.9V110.2M942.5 106.2V110.1M943.5 105.9V111.4M944.5 106.1V111.4M946.5 104.4V110.5M947.5 106.1V111.4M948.5 105.5V110.2M949.5 105.6V110.4M950.5 105.9V110.2M951.5 105.7V111.8M952.5 104.5V110.2M954.5 105.3V109.9M955.5 105.3V111.4M960.5 105.9V109.6M961.5 105.8V110.1M962.5 105.3V109.4M963.5 106.3V109.5M964.5 106V109.3M965.5 105.5V109.6M968.5 106.2V110.3M970.5 106.4V109.9M971.5 105.7V109.8M972.5 105.9V109.6M973.5 105.1V109.9M975.5 105.6V110.8M976.5 105.7V110.8M980.5 105.3V110.7M981.5 105.4V110.9M982.5 105.3V110.7M983.5 105.7V110.3M984.5 105.7V110.6M986.5 106.6V110.4M987.5 105.7V110.6M988.5 106.2V110.5M990.5 106.2V110.2M994.5 105.3V110.5M997.5 106.4V110.5M998.5 104.6V110.7M999.5 104.4V110.3M1001.5 105.5V110.1M1003.5 104.3V111.9M1004.5 106V110.7M1005.5 104.9V110.7M1006.5 104.3V111.2M1007.5 105.2V110.3M1008.5 104.4V111.1M1009.5 105.1V110.4M1010.5 105.4V110.5M1011.5 105.1V111.2M1013.5 105.5V109.9M1016.5 105.3V110M1017.5 105.8V110.9M1018.5 106V109.6M1020.5 106.1V110.6M1021.5 105.8V110.3M1022.5 105.1V111.1M1023.5 105V110.5M1024.5 106V111.3M1026.5 105V110M1027.5 105.7V111.6M1030.5 105.3V110.4M1032.5 105.5V109.9M1033.5 106.3V110.3M1034.5 105.7V110.8M1035.5 105.8V110.9M1037.5 105.3V110.5M1038.5 106V110.7M1041.5 106.6V109.3M1044.5 106.7V110.2M1048.5 105.8V110.4M1051.5 105.8V110.7M1052.5 105.1V109.6M1055.5 105.1V110.9M1057.5 106.2V109.8M1058.5 105.8V110.5M1059.5 106.1V110.1M1061.5 104.8V109.6M1062.5 106V110.6M1063.5 106.2V110.6M1065.5 105.9V110.5M1066.5 104.9V110.5M1067.5 105.2V110.9M1068.5 104.9V111M1069.5 105.9V110.2M1070.5 105.7V111.7M1071.5 105.1V111.5M1075.5 104V112.8M1076.5 104.3V111.1M1077.5 103.9V111.2M1078.5 105.2V110.5M1079.5 104.2V110.6M1081.5 103.9V110.8M1082.5 104.1V111.7M1083.5 104.3V112M1084.5 105.5V112.1M1085.5 105V111.9M1086.5 104.2V109.9M1091.5 106.4V110.3M1093.5 105.1V110M1095.5 105.2V109.5M1097.5 105.7V110.2M1099.5 106.5V110.1M1100.5 105.6V110.5M1102.5 104.8V110.4M1103.5 105V110.4M1104.5 104.7V109.7M1105.5 105.9V111.3M1106.5 105V111.1M1107.5 104.6V109.8M1108.5 106V110.3M1110.5 105.4V110.7M1111.5 105V109.7M1115.5 106V110.4M1117.5 105.3V110.7M1119.5 105.2V109.5M1120.5 105.4V109.8M1121.5 104.8V110.2M1122.5 105.8V111.6M1123.5 105.4V111.9M1124.5 104V112.1M1125.5 104.5V111.3M1126.5 103.9V111.8M1127.5 105.8V110.8M1128.5 105.8V110.7M1129.5 104.3V111.8M1130.5 105.7V110.4M1131.5 104.6V110.6M1132.5 104.7V110.5M1136.5 106.2V110.1M1137.5 105.7V110.1M1138.5 105.6V110M1141.5 104.9V110.3M1143.5 104.9V109.6M1144.5 106.4V111.2M1150.5 104.9V109.8M1151.5 104.8V110.6M1152.5 106.1V110.7M1154.5 105.1V110.9M1155.5 105.1V111M1156.5 106V110.2M1157.5 105.9V110.1M1158.5 105.9V111.2M1159.5 105.4V111.5M1160.5 105.2V111.3M1165.5 105.3V110.1M1166.5 104.7V110.8M1167.5 105V111.6M1170.5 105.7V110.9M1171.5 105.2V110.1M1172.5 104.3V111.1M1173.5 105.3V112.1M1174.5 105.5V112.5M1176.5 104.2V110.8M1177.5 103.5V111.1M1179.5 105.9V110.8M1180.5 104.3V110.4M1181.5 105V111.4M1182.5 105.3V110.9M1184.5 106V110.5M1185.5 105.3V110.1M1186.5 106.2V110.9M1187.5 104.7V110.5M1188.5 106.3V110.9M1189.5 105.7V109.8M1190.5 106.1V110.3M1192.5 105.4V109.6M1193.5 105.8V109.7M1194.5 106.3V109.7M1196.5 105.6V110.3M1197.5 106.7V110M1199.5 106V110.4M1200.5 105.7V109.4M1201.5 105.9V109.7M1203.5 106V109.7M1204.5 105.5V109.6M1205.5 106.4V110.9M1206.5 106.1V111.1M1207.5 105.8V110.6M1208.5 104.8V111.2M1214.5 105V109.8" stroke="#053a7e" stroke-width="1" fill="none"/><path d="M936.5 105.6V110.2M937.5 106.1V110.7M939.5 105.8V109.9M945.5 104.9V110.4M953.5 104.5V110M956.5 104.6V111.4M957.5 105.3V111.3M958.5 105.8V110.4M959.5 105.4V110.9M966.5 105.9V109.4M967.5 105.5V110.5M969.5 106.5V109.5M974.5 106V110.1M977.5 106.3V110.3M978.5 105.3V109.6M979.5 105.2V111.2M985.5 106.4V110.6M989.5 106.6V109.3M991.5 105.7V109.4M992.5 105.3V109.8M993.5 105.5V110.7M995.5 106V109.8M996.5 106.1V110.6M1000.5 105.5V110.1M1002.5 104.7V110M1012.5 104.8V110.8M1014.5 105.7V109.7M1015.5 106.1V111.2M1019.5 106.1V110.6M1025.5 104.9V110.2M1028.5 105.7V111.1M1029.5 104.5V109.8M1031.5 104.7V111.5M1036.5 105.8V110.7M1039.5 106.4V109.5M1040.5 105.6V109.6M1042.5 106.6V109.6M1043.5 106.4V109.4M1045.5 106.3V109.7M1046.5 106.4V109.2M1047.5 105.5V110.6M1049.5 106V109.6M1050.5 105.3V109.4M1053.5 105.5V109.6M1054.5 105.6V111.1M1056.5 105.5V110.5M1060.5 105.9V110.5M1064.5 105.6V110.5M1072.5 103.9V110.4M1073.5 104.6V112.2M1074.5 102.7V112.9M1080.5 105.7V111.9M1087.5 104.9V111.3M1088.5 104.4V111.5M1089.5 106.1V111.2M1090.5 106.1V110.9M1092.5 105.4V110.2M1094.5 106.1V110.7M1096.5 105.9V109.5M1098.5 106.2V109.9M1101.5 106V110M1109.5 105.8V110.9M1112.5 106.4V109.7M1113.5 105.8V110.3M1114.5 106.3V109.5M1116.5 106.5V110.6M1118.5 106.4V110.5M1133.5 104.8V110.1M1134.5 104.5V109.8M1135.5 105.2V110.3M1139.5 105.8V110.9M1140.5 105.5V110.4M1142.5 105.6V109.6M1145.5 106.4V111M1146.5 105.7V110.9M1147.5 105.6V110.3M1148.5 106.1V110.9M1149.5 105.9V110.6M1153.5 104.5V110.2M1161.5 105.1V111.1M1162.5 104V111.3M1163.5 104.4V111M1164.5 106V110.6M1168.5 105.9V111.1M1169.5 105.4V110M1175.5 104.6V111.9M1178.5 104.4V110.9M1183.5 105.3V111.4M1191.5 105.3V111M1195.5 105.5V110.1M1198.5 106.7V109.6M1202.5 106.4V109.7M1209.5 105.9V110.2M1210.5 105.2V111.4M1211.5 105.8V111.2M1212.5 105.8V111.3M1213.5 105.9V111.2" stroke="#2a5a96" stroke-width="1" fill="none"/><path d="M932.5 124.6V132.5M933.5 128.8V134.9M934.5 133.8V137.5M935.5 129.3V139.7M936.5 129.1V145.5M937.5 135.2V143M938.5 132.7V136.1M939.5 130.3V135.2M940.5 123V135M941.5 127.6V141.2M942.5 132.4V138.4M943.5 131.9V144M944.5 130V147.3M945.5 126V134M946.5 125.8V132.5M947.5 127.5V134.8M948.5 121.7V135.5M949.5 130.8V146.7M950.5 135.2V147.3M951.5 135.6V144.4M952.5 127.6V139.3M953.5 128.3V136.9M954.5 127.2V136.3M955.5 127.2V140.5M956.5 121.7V144.1M957.5 134.6V146.4M958.5 136.3V140.8M959.5 127V140.3M960.5 129.9V133.8M961.5 126.4V134.7M962.5 121.7V133.2M963.5 131.8V136M964.5 126.5V140.5M965.5 131.5V147.3M966.5 132V137.9M967.5 126.2V135.4M968.5 126.4V134.2M969.5 129.7V138.6M970.5 130.6V138.5M971.5 135.5V139.6M972.5 134.9V142.5M973.5 134.7V140.4M974.5 129.7V137.7M975.5 127V136.8M976.5 128.1V142.3M977.5 129.2V136.1M978.5 132.7V139.1M979.5 127.1V140.3M980.5 135.4V140.3M981.5 132.6V147.3M982.5 125.5V137.8M983.5 125.8V134.2M984.5 127.5V134M985.5 127.4V140.7M986.5 121.7V142.6M987.5 135.2V147.3M988.5 135.9V147.3M989.5 126.3V145.4M990.5 128.1V139M991.5 128.9V132.9M992.5 132.1V139.6M993.5 134V140.5M994.5 133.6V138.9M995.5 133.5V147.3M996.5 126V142.9M997.5 121.7V133.3M998.5 127V133M999.5 125V137.3M1000.5 133.1V139M1001.5 121.7V144.2M1002.5 133.6V144M1003.5 135.1V138.3M1004.5 130.9V135.4M1005.5 124.8V139.6M1006.5 130.3V136.5M1007.5 131V140.9M1008.5 136.3V139.9M1009.5 129.3V141M1010.5 131.9V139.1M1011.5 131.4V135.4M1012.5 128.5V132.4M1013.5 128.7V132.6M1014.5 126V136M1015.5 131.1V139.3M1016.5 130.2V142.7M1017.5 133.9V139.2M1018.5 126.4V146.8M1019.5 129V134.4M1020.5 121.7V137.5M1021.5 127.6V136.4M1022.5 128.6V143.3M1023.5 136.3V147.3M1024.5 136.7V143.8M1025.5 130.9V139.7M1026.5 127.4V135.9M1027.5 128.4V132.1M1028.5 127.7V134.9M1029.5 127.9V140.6M1030.5 133.1V139.3M1031.5 134.6V141.6M1032.5 121.7V147.3M1033.5 128.4V135.3M1034.5 126.7V133.4M1035.5 129V137.1M1036.5 131.8V140.8M1037.5 130.8V142.7M1038.5 138V143.1M1039.5 131.4V142.3M1040.5 131.4V138.4M1041.5 130.2V137.6M1042.5 129.5V134.3M1043.5 130.3V134.7M1044.5 133.4V138.2M1045.5 135.3V139.9M1046.5 132.7V138.9M1047.5 128.1V147.3M1048.5 124.7V143.1M1049.5 121.7V134.2M1050.5 127.3V141.7M1051.5 124.8V137.6M1052.5 136.6V147.3M1053.5 130.8V142.9M1054.5 134V141M1055.5 121.7V134.9M1056.5 124.5V134.4M1057.5 130.1V137M1058.5 129.5V139M1059.5 127.6V141.2M1060.5 135.9V139.9M1061.5 134.2V141M1062.5 129.8V135.3M1063.5 128.4V132.3M1064.5 122.9V133.6M1065.5 131.2V135.4M1066.5 129.9V140.3M1067.5 133V145.1M1068.5 121.7V141.9M1069.5 128.2V136.9M1070.5 124.3V140.4M1071.5 122.8V134.6M1072.5 130.3V139.3M1073.5 135.8V142.4M1074.5 134.5V141.6M1075.5 130.8V140.7M1076.5 125.3V144.9M1077.5 121.7V136.5M1078.5 127.6V138M1079.5 124.8V137.8M1080.5 127.3V139.1M1081.5 131.6V144.7M1082.5 133V143.9M1083.5 125.1V136.7M1084.5 126.4V133.5M1085.5 129.7V140.8M1086.5 121.7V135.4M1087.5 121.7V136.3M1088.5 131.7V138.6M1089.5 128.3V141.5M1090.5 135.1V140.2M1091.5 128.3V138M1092.5 121.7V136.7M1093.5 127.7V139.3M1094.5 132.7V144.1M1095.5 133.3V140.8M1096.5 130.1V139.3M1097.5 135.4V140.9M1098.5 124.8V136.9M1099.5 122.9V135.6M1100.5 127.9V133.6M1101.5 129.6V135.9M1102.5 130.4V138.7M1103.5 132.9V140.7M1104.5 126.4V140.4M1105.5 133.7V147.3M1106.5 132V138.9M1107.5 130.8V135M1108.5 130.8V134.2M1109.5 133.8V147.3M1110.5 135.1V139.3M1111.5 134.8V142.6M1112.5 135.5V143.2M1113.5 128.1V138.1M1114.5 126.6V135.1M1115.5 128.4V131.9M1116.5 130.2V134.6M1117.5 131.8V140.7M1118.5 134.3V147.3M1119.5 121.7V139.5M1120.5 133V139.6M1121.5 126.4V135.3M1122.5 128.9V135M1123.5 130.4V143.8M1124.5 121.7V141.4M1125.5 122.9V142.2M1126.5 134.4V147.1M1127.5 134V146.2M1128.5 126.4V136.4M1129.5 127.1V134.4M1130.5 130.1V134.5M1131.5 126.3V137.8M1132.5 133.4V138.8M1133.5 130.1V138.3M1134.5 131.8V136.1M1135.5 126.8V137.5M1136.5 126.7V144M1137.5 127.8V133.9M1138.5 128.7V147.3M1139.5 130.1V147.3M1140.5 136.1V141.3M1141.5 134.6V140M1142.5 133.6V137M1143.5 127.4V134.6M1144.5 128.2V138.9M1145.5 126.3V135.7M1146.5 128.4V146.2M1147.5 134.2V142.3M1148.5 131.2V138.3M1149.5 127.3V140.5M1150.5 128.7V137.8M1151.5 127.2V135.8M1152.5 123.2V138.1M1153.5 121.7V138.3M1154.5 136.2V139.9M1155.5 136.6V142.9M1156.5 131.9V147.3M1157.5 123.8V137.3M1158.5 130.2V147.3M1159.5 130.5V141M1160.5 131.4V137.1M1161.5 134.6V139.7M1162.5 137.2V140.5M1163.5 134.3V147.3M1164.5 128.2V135.6M1165.5 124.7V134.5M1166.5 127.7V135M1167.5 130.1V145.5M1168.5 125.2V136.5M1169.5 132.1V142M1170.5 132.9V139.5M1171.5 127.7V136.5M1172.5 131.7V138.8M1173.5 124.5V142.8M1174.5 130V138.7M1175.5 133.4V138.3M1176.5 131.9V147.3M1177.5 127.3V140.9M1178.5 133V138.5M1179.5 128.9V137.6M1180.5 124.2V135.4M1181.5 123.4V134.7M1182.5 128.5V135.7M1183.5 124.3V147.3M1184.5 135.4V138.8M1185.5 130.4V138.3M1186.5 130.1V133.6M1187.5 129.6V136M1188.5 129.8V132.6M1189.5 131.7V147.3M1190.5 133.3V139.8M1191.5 135V144M1192.5 133.1V141.7M1193.5 134.1V144.5M1194.5 127.6V134.7M1195.5 127.6V132.4M1196.5 122.7V136.2M1197.5 128.4V140.7M1198.5 135.5V147.3M1199.5 133.7V139.5M1200.5 130.1V138.7M1201.5 121.7V138.5M1202.5 122.9V133.2M1203.5 127.3V133.3M1204.5 131.9V140.6M1205.5 133.1V139.2M1206.5 133V147.3M1207.5 135.7V141.9M1208.5 131.8V136.4M1209.5 123.9V135.6M1210.5 128.3V136.6M1211.5 121.7V138M1212.5 134.3V141.7M1213.5 121.7V143.9M1214.5 133.2V140" stroke="#9db3d2" stroke-width="1" fill="none"/><path d="M932.5 127.6V133.1M933.5 129.7V133.4M934.5 133.6V140.7M935.5 136.2V142.6M936.5 136.2V140.5M937.5 134.7V139.3M938.5 130.6V136.9M939.5 130.1V135.2M940.5 129.9V133.4M941.5 133.4V135.8M942.5 135.2V138.8M943.5 128.5V140.8M944.5 132.5V137.1M945.5 131V134.5M946.5 128.6V133.3M947.5 128V136.1M948.5 130.9V133.3M949.5 126.3V137.6M950.5 132.8V139.7M951.5 136.5V139.9M952.5 131.4V138M953.5 131.5V136.1M954.5 130V134.7M955.5 132V136.7M956.5 134.8V137.9M957.5 135.7V141.2M958.5 136.4V142.9M959.5 133.9V138.2M960.5 131V134.1M961.5 128.5V137.5M962.5 127.7V134.1M963.5 131.4V135M964.5 130.6V137.3M965.5 134.8V140.4M966.5 133.9V137.4M967.5 129.2V135M968.5 127.7V132.8M969.5 126.1V134M970.5 132.8V136.9M971.5 133.3V139.3M972.5 137.1V143.7M973.5 136.4V140.8M974.5 133V138M975.5 131.6V134M976.5 128.6V132.2M977.5 130V134.6M978.5 133.3V139.3M979.5 134.8V137.9M980.5 132.6V138.1M981.5 132.6V136.5M982.5 130.9V134.6M983.5 127V132.3M984.5 129.2V132.8M985.5 131.8V137M986.5 133.2V143.1M987.5 130.6V145.3M988.5 134.5V142.9M989.5 132.7V140.9M990.5 126.4V135.2M991.5 130.3V135.4M992.5 131.8V136.7M993.5 134.4V139.6M994.5 134.4V139.6M995.5 133.6V139.6M996.5 129.9V135.6M997.5 126.2V132.7M998.5 127.7V132.8M999.5 125.6V133.8M1000.5 133.2V139.4M1001.5 134.2V140.4M1002.5 136.9V141.4M1003.5 131.9V139.5M1004.5 132.3V138.7M1005.5 128.1V134M1006.5 131.2V140.5M1007.5 128.2V137.3M1008.5 136.2V143M1009.5 135.6V142.4M1010.5 130.3V141.6M1011.5 131.2V134.4M1012.5 128.4V132.1M1013.5 121.7V131.2M1014.5 128.5V134.7M1015.5 134.2V140.7M1016.5 135.2V139.5M1017.5 134.9V137.9M1018.5 132.1V136.1M1019.5 130.3V137.9M1020.5 128.9V133.5M1021.5 127.9V137.2M1022.5 135.2V141.3M1023.5 135.6V140.8M1024.5 136.4V140.8M1025.5 134.6V139.8M1026.5 130.7V134.3M1027.5 128.2V134.7M1028.5 130V136.5M1029.5 132.5V136M1030.5 134.3V141.3M1031.5 135.6V138.1M1032.5 132.5V142M1033.5 129.1V134.6M1034.5 128V139.1M1035.5 127.2V135.3M1036.5 132.7V136.7M1037.5 135.4V140.8M1038.5 136.7V141.5M1039.5 134.3V142.1M1040.5 133V141.1M1041.5 129.8V133.6M1042.5 130.8V134.4M1043.5 128.9V137.2M1044.5 133.1V138.4M1045.5 136.6V140.5M1046.5 134.5V143M1047.5 130.8V135.4M1048.5 127.4V133M1049.5 127.9V132.6M1050.5 121.7V135.1M1051.5 132.9V140.5M1052.5 136.3V143.2M1053.5 134.5V142.3M1054.5 133.9V139.2M1055.5 128.8V139.9M1056.5 123.2V136.1M1057.5 131.1V139.2M1058.5 135V137.6M1059.5 137.2V139.5M1060.5 137.7V139.4M1061.5 133.5V139.1M1062.5 129.7V134.9M1063.5 128.2V136.7M1064.5 127.8V134.1M1065.5 130.6V137M1066.5 127V138.4M1067.5 132.9V138.8M1068.5 134.3V137.8M1069.5 133V137.2M1070.5 130.3V133.4M1071.5 130.4V132.8M1072.5 131.3V137.4M1073.5 135.1V140.1M1074.5 137.8V140.3M1075.5 135.1V140M1076.5 135.1V138.3M1077.5 130.9V134.2M1078.5 128.5V133.3M1079.5 130.1V136.3M1080.5 132.1V134.6M1081.5 129V140.5M1082.5 135.4V139.7M1083.5 132.9V142.9M1084.5 130.9V133.9M1085.5 128.5V133.8M1086.5 129.1V134.6M1087.5 132.4V137.5M1088.5 135.2V138.9M1089.5 135.8V143.2M1090.5 133.9V140M1091.5 133.3V142.1M1092.5 129.4V135.9M1093.5 129.8V133.4M1094.5 130.4V136.5M1095.5 132.6V136.6M1096.5 133.6V138.2M1097.5 134.4V139.5M1098.5 131.4V138.2M1099.5 125.2V133.3M1100.5 127.5V130.8M1101.5 129.1V135.8M1102.5 132.4V138.5M1103.5 133.9V139.3M1104.5 136.3V139.6M1105.5 132.4V138M1106.5 131.2V137.4M1107.5 130.3V136.9M1108.5 129.9V134M1109.5 132.3V138.1M1110.5 135.6V140M1111.5 136.2V140.9M1112.5 134V140.2M1113.5 130.4V135.3M1114.5 127.4V132.3M1115.5 121.7V133.1M1116.5 129.4V136.7M1117.5 131.6V138.8M1118.5 134.3V140.9M1119.5 134.4V138.9M1120.5 132.6V140M1121.5 125.8V134.8M1122.5 128.5V134.8M1123.5 131V138.7M1124.5 132V140.9M1125.5 136.1V141M1126.5 134.2V143.8M1127.5 132.9V142.8M1128.5 129.2V135.5M1129.5 129.1V132.2M1130.5 130.2V133.1M1131.5 127.2V136.9M1132.5 133.3V144.3M1133.5 136.1V139.4M1134.5 134V136M1135.5 128.6V135.1M1136.5 127.4V133.1M1137.5 126.8V135.2M1138.5 130.1V137.1M1139.5 135.4V139.2M1140.5 136.6V139.8M1141.5 128.8V141.1M1142.5 132.3V137.5M1143.5 131.7V134.6M1144.5 129.8V133.5M1145.5 132.1V138.7M1146.5 132.3V139M1147.5 133.6V139.4M1148.5 134.8V142.7M1149.5 132.4V139M1150.5 127.8V136.5M1151.5 126V130.9M1152.5 128.7V134M1153.5 132.1V139M1154.5 135.3V138.8M1155.5 136.7V140.4M1156.5 129.5V138.7M1157.5 131.7V137.7M1158.5 130.9V134.8M1159.5 127.6V134.4M1160.5 131.1V137.8M1161.5 133.4V138.8M1162.5 136.3V142.7M1163.5 134.5V140.3M1164.5 131V135.4M1165.5 127.2V132.9M1166.5 128V132.4M1167.5 129.4V133.8M1168.5 132.9V136M1169.5 134.6V144.7M1170.5 132.8V140.8M1171.5 130.6V136.1M1172.5 130.3V134.6M1173.5 129.8V133.5M1174.5 131.1V136.3M1175.5 125.8V138M1176.5 136.5V146.2M1177.5 133.4V144.4M1178.5 134V139.7M1179.5 130.6V135.9M1180.5 129.9V135.4M1181.5 129.4V136M1182.5 131.6V135.4M1183.5 133.8V141.1M1184.5 135.6V137.6M1185.5 133.7V136.8M1186.5 125.1V134.7M1187.5 123.3V133.7M1188.5 130.1V135.1M1189.5 131.7V135.6M1190.5 133.8V139.2M1191.5 134.9V140.8M1192.5 136V140.2M1193.5 134.5V138.2M1194.5 130.7V134M1195.5 129.4V134.6M1196.5 130.2V136.4M1197.5 131.6V137.7M1198.5 134.1V138.7M1199.5 126.4V138.5M1200.5 126.2V137M1201.5 129V132.6M1202.5 127.3V133.1M1203.5 126.5V133M1204.5 132.3V136.5M1205.5 134.9V139.5M1206.5 136V139.8M1207.5 135.9V140.8M1208.5 132.4V137.5M1209.5 129.4V133.9M1210.5 130.1V134.2M1211.5 132.8V137.2M1212.5 134.2V139M1213.5 134.3V140.2M1214.5 131.8V139.3" stroke="#3f6ca4" stroke-width="1" fill="none"/><path d="M934.5 133.9V136.7M936.5 137.2V140.3M938.5 132.9V136M939.5 130.4V133.8M941.5 133.7V134.9M945.5 132.3V133.9M946.5 128.9V132.4M951.5 137.1V139.6M955.5 132.5V135.2M957.5 136.5V139.7M958.5 137.8V139.8M960.5 131.1V133.8M967.5 132.5V134.9M968.5 130.2V132.6M970.5 133.3V135.6M972.5 137.9V140M974.5 133.5V137.2M980.5 136V137.2M982.5 131V133.5M983.5 129V131.9M987.5 137.7V140.7M990.5 131.4V133.4M992.5 132.7V136.1M993.5 135.5V137.8M996.5 131.5V134.1M998.5 128V131.5M999.5 131.3V133.3M1000.5 134.3V136.8M1001.5 136.2V139.1M1002.5 137.4V138.7M1004.5 132.4V134.8M1005.5 130.7V133.4M1007.5 135.2V137.3M1016.5 136.6V138.7M1017.5 134.9V137.9M1019.5 130.5V132.7M1020.5 129.7V133.1M1023.5 138.2V140.3M1024.5 137V140.3M1025.5 135V137.3M1027.5 128.9V131.8M1028.5 130.5V133.1M1037.5 136V139.4M1040.5 133.3V136.4M1044.5 134.7V138.1M1047.5 131.8V134.1M1051.5 133.8V136.5M1053.5 136.6V139.5M1054.5 134.3V138.3M1057.5 131.5V134.6M1062.5 131.4V134.3M1066.5 133.5V136M1067.5 136.3V138.6M1076.5 135.4V137.3M1077.5 131.2V133.7M1078.5 129.3V132.7M1081.5 134.8V137.5M1084.5 131V133.5M1086.5 130V132.5M1087.5 133.5V136.2M1089.5 137.7V141.1M1091.5 133.9V136.4M1093.5 130.6V132.4M1094.5 132.8V134.4M1095.5 134.9V136.5M1098.5 132.8V135.7M1099.5 129.2V133M1101.5 130V132.8M1105.5 135.3V137.8M1106.5 132.2V135.3M1108.5 131.2V133.8M1109.5 134V137.2M1110.5 135.8V139.2M1111.5 137V140.5M1114.5 129.7V132M1115.5 128.8V130.8M1116.5 130.5V134M1117.5 134V136.3M1119.5 135.9V138.7M1125.5 136.7V140.4M1127.5 134.5V138.5M1134.5 134.7V136M1136.5 129.2V132.6M1140.5 137.1V139.8M1142.5 134.4V136.9M1143.5 131.9V134M1144.5 130.7V132.5M1150.5 130V133M1152.5 129.3V132M1155.5 137.1V140.2M1156.5 135.4V137.7M1157.5 132.1V135.3M1164.5 131.6V134.7M1172.5 131.8V134.1M1174.5 131.5V134.8M1175.5 135V137.1M1176.5 137.6V140.7M1177.5 136.9V140M1178.5 135.2V138.5M1180.5 130.2V132M1182.5 132.1V134.9M1185.5 134V136.5M1186.5 131.2V133.6M1188.5 130.3V132.3M1190.5 135.1V138.9M1195.5 130.9V132.4M1196.5 131V134.6M1200.5 133.8V136.3M1201.5 129.9V132.5M1202.5 129.1V131.8M1203.5 129.1V132.2M1205.5 135.5V138.4M1206.5 136.5V139.5M1207.5 136V138.6M1208.5 133.5V135.3M1211.5 134.1V136.4M1212.5 135.6V138.8M1214.5 135.7V137.7" stroke="#053a7e" stroke-width="1" fill="none"/><path d="M932.5 128.4V131.5M933.5 130.6V132.8M935.5 136.8V138.8M937.5 136.3V139.2M940.5 130.6V133M942.5 135.5V138.4M943.5 135.7V139.6M944.5 134.2V136.8M947.5 128.1V130.7M948.5 130.9V133M949.5 133.9V136.4M950.5 136.2V138.8M952.5 133.9V137.1M953.5 131.7V133.9M954.5 130.9V133.2M956.5 134.8V137.3M959.5 134.3V137.6M961.5 129.4V131.7M962.5 129.6V131.7M963.5 132.4V134.1M964.5 134.3V137.3M965.5 135.4V138.3M966.5 134.3V136.8M969.5 130.3V133.6M971.5 135.9V138.9M973.5 136.5V139.8M975.5 131.7V133.5M976.5 129.4V132M977.5 130.1V132.9M978.5 133.9V135.9M979.5 135.7V137.7M981.5 133.1V135.5M984.5 131V132.7M985.5 133.9V135.5M986.5 136.8V139.7M988.5 136.3V139.3M989.5 133.4V136.5M991.5 130.3V132.6M994.5 136.5V138.8M995.5 134.2V137.8M997.5 128.6V132.1M1003.5 135.2V137.9M1006.5 132.3V135.2M1008.5 136.7V138.8M1009.5 137V140.2M1010.5 134.6V136.6M1011.5 131.9V133.3M1012.5 129V131.2M1013.5 128.8V131.2M1014.5 131.8V134.3M1015.5 134.9V137.6M1018.5 132.4V135.2M1021.5 133.2V134.7M1022.5 135.7V138.3M1026.5 131.3V133.1M1029.5 132.7V135.6M1030.5 134.6V137.2M1031.5 135.7V137.3M1032.5 132.8V136.3M1033.5 130.2V133.2M1034.5 128.8V131.4M1035.5 130.6V132.8M1036.5 133.1V135.7M1038.5 138.4V140.5M1039.5 136.9V138.7M1041.5 130.8V133.3M1042.5 130.9V133.6M1043.5 132.8V134.4M1045.5 136.9V139.3M1046.5 134.6V138.3M1048.5 128.9V132.5M1049.5 128V131.6M1050.5 130V132.5M1052.5 137V139.5M1055.5 133V134.2M1056.5 130V133.4M1058.5 135V137.1M1059.5 137.3V138.9M1060.5 137.7V139.3M1061.5 135.1V137.9M1063.5 128.9V131.1M1064.5 129.4V131.2M1065.5 131.4V133.5M1068.5 135.2V137.1M1069.5 133.4V135.7M1070.5 130.8V132.5M1071.5 131V132.7M1072.5 131.7V134.5M1073.5 136.2V138.1M1074.5 138.2V140.3M1075.5 136.9V139.7M1079.5 130.9V132.7M1080.5 132.1V134.6M1082.5 135.9V138M1083.5 133V136.2M1085.5 129.8V131.9M1088.5 136.1V138.2M1090.5 136.4V138.7M1092.5 130.8V134M1096.5 136.2V138.1M1097.5 136.1V137.3M1100.5 127.9V130.7M1102.5 133.3V136.3M1103.5 135.7V139M1104.5 137.5V139.5M1107.5 131V134M1112.5 135.8V138.5M1113.5 131.4V135.2M1118.5 135.2V139.2M1120.5 133.1V135.5M1121.5 130V134.4M1122.5 129.3V132.5M1123.5 132.5V135.7M1124.5 134.1V138.6M1126.5 136.8V140.8M1128.5 130.9V133.9M1129.5 129.4V132.1M1130.5 130.6V132.5M1131.5 132.6V135.1M1132.5 134.1V138.2M1133.5 136.2V137.8M1135.5 131.4V133.3M1137.5 129.5V132.9M1138.5 132.2V135.8M1139.5 135.6V138.3M1141.5 136.4V139.6M1145.5 132.4V135M1146.5 134.1V136.8M1147.5 135.7V138.9M1148.5 135.2V138.3M1149.5 132.7V136.1M1151.5 128.1V130.5M1153.5 133.1V135.8M1154.5 136.7V138.6M1158.5 131.7V133.9M1159.5 131V133.4M1160.5 134.2V136.3M1161.5 136.3V138.2M1162.5 137.5V139.7M1163.5 136.1V138.2M1165.5 129V131.4M1166.5 128.3V131.8M1167.5 131.1V133.8M1168.5 133.4V135.6M1169.5 135.8V137.9M1170.5 135.9V137.9M1171.5 133.4V136.1M1173.5 130.3V132.8M1179.5 131.5V134.9M1181.5 129.8V132.8M1183.5 135.1V137.1M1184.5 135.8V137.5M1187.5 129.8V132.2M1189.5 132.5V135.3M1191.5 137.7V140M1192.5 136.6V139.2M1193.5 135.1V137.5M1194.5 131.1V133.7M1197.5 134.7V136.5M1198.5 135.6V138.5M1199.5 135.6V138.4M1204.5 132.7V135.4M1209.5 130.5V133M1210.5 131.3V133.6M1213.5 137.7V139.4" stroke="#3a68a2" stroke-width="1" fill="none"/><rect x="931" y="66.5" width="284.5" height="81.5" fill="none" stroke="#7a7a7a" stroke-width="1.3"/><line x1="931" y1="93.7" x2="1215.5" y2="93.7" stroke="#8e8e8e" stroke-width="2"/><line x1="931" y1="121" x2="1215.5" y2="121" stroke="#8e8e8e" stroke-width="2"/><text x="927.8" y="70.1" font-family="Liberation Sans" font-size="5.2" fill="#333" text-anchor="end" xml:space="preserve">0.6</text><rect x="929.8" y="67.7" width="1.4" height="1.2" fill="#6060ff"/><text x="927.8" y="74.9" font-family="Liberation Sans" font-size="5.2" fill="#333" text-anchor="end" xml:space="preserve">0.3</text><rect x="929.8" y="72.5" width="1.4" height="1.2" fill="#6060ff"/><text x="927.8" y="81.9" font-family="Liberation Sans" font-size="5.2" fill="#333" text-anchor="end" xml:space="preserve">0.0</text><rect x="929.8" y="79.5" width="1.4" height="1.2" fill="#6060ff"/><text x="927.8" y="88.5" font-family="Liberation Sans" font-size="5.2" fill="#333" text-anchor="end" xml:space="preserve">-0.3</text><rect x="929.8" y="86.1" width="1.4" height="1.2" fill="#6060ff"/><text x="927.8" y="92.9" font-family="Liberation Sans" font-size="5.2" fill="#333" text-anchor="end" xml:space="preserve">-0.6</text><rect x="929.8" y="90.5" width="1.4" height="1.2" fill="#6060ff"/><text x="927.8" y="97.1" font-family="Liberation Sans" font-size="5.2" fill="#333" text-anchor="end" xml:space="preserve">0.26</text><rect x="929.8" y="94.7" width="1.4" height="1.2" fill="#6060ff"/><text x="927.8" y="102.1" font-family="Liberation Sans" font-size="5.2" fill="#333" text-anchor="end" xml:space="preserve">0.13</text><rect x="929.8" y="99.7" width="1.4" height="1.2" fill="#6060ff"/><text x="927.8" y="109.5" font-family="Liberation Sans" font-size="5.2" fill="#333" text-anchor="end" xml:space="preserve">0.00</text><rect x="929.8" y="107.1" width="1.4" height="1.2" fill="#6060ff"/><text x="927.8" y="116.2" font-family="Liberation Sans" font-size="5.2" fill="#333" text-anchor="end" xml:space="preserve">-0.13</text><rect x="929.8" y="113.8" width="1.4" height="1.2" fill="#6060ff"/><text x="927.8" y="120.2" font-family="Liberation Sans" font-size="5.2" fill="#333" text-anchor="end" xml:space="preserve">-0.26</text><rect x="929.8" y="117.8" width="1.4" height="1.2" fill="#6060ff"/><text x="927.8" y="124.6" font-family="Liberation Sans" font-size="5.2" fill="#333" text-anchor="end" xml:space="preserve">0.34</text><rect x="929.8" y="122.2" width="1.4" height="1.2" fill="#6060ff"/><text x="927.8" y="129.7" font-family="Liberation Sans" font-size="5.2" fill="#333" text-anchor="end" xml:space="preserve">0.17</text><rect x="929.8" y="127.3" width="1.4" height="1.2" fill="#6060ff"/><text x="927.8" y="136.3" font-family="Liberation Sans" font-size="5.2" fill="#333" text-anchor="end" xml:space="preserve">0.00</text><rect x="929.8" y="133.9" width="1.4" height="1.2" fill="#6060ff"/><text x="927.8" y="143" font-family="Liberation Sans" font-size="5.2" fill="#333" text-anchor="end" xml:space="preserve">-0.17</text><rect x="929.8" y="140.6" width="1.4" height="1.2" fill="#6060ff"/><text x="927.8" y="147.8" font-family="Liberation Sans" font-size="5.2" fill="#333" text-anchor="end" xml:space="preserve">-0.34</text><rect x="929.8" y="145.4" width="1.4" height="1.2" fill="#6060ff"/><text x="932" y="155.5" font-family="Liberation Sans" font-size="5.2" fill="#333" text-anchor="middle" xml:space="preserve">0</text><text x="987.2" y="155.5" font-family="Liberation Sans" font-size="5.2" fill="#333" text-anchor="middle" xml:space="preserve">0.5</text><text x="1042.4" y="155.5" font-family="Liberation Sans" font-size="5.2" fill="#333" text-anchor="middle" xml:space="preserve">1</text><text x="1097.6" y="155.5" font-family="Liberation Sans" font-size="5.2" fill="#333" text-anchor="middle" xml:space="preserve">1.5</text><text x="1152.8" y="155.5" font-family="Liberation Sans" font-size="5.2" fill="#333" text-anchor="middle" xml:space="preserve">2</text><text x="1208" y="155.5" font-family="Liberation Sans" font-size="5.2" fill="#333" text-anchor="middle" xml:space="preserve">2.5</text><rect x="1216.5" y="71.5" width="6.5" height="17" fill="#ffff00" stroke="#333" stroke-width="1"/><text x="1217.85" y="80" font-family="Liberation Sans" font-size="5.2" fill="#2828c8" text-anchor="middle" transform="rotate(90 1217.85 80)" xml:space="preserve">Axial</text><rect x="1216.5" y="97.2" width="6.5" height="21.7" fill="#ffffff" stroke="#555" stroke-width="1"/><text x="1217.85" y="108.05" font-family="Liberation Sans" font-size="5.2" fill="#3c3cf0" text-anchor="middle" transform="rotate(90 1217.85 108.05)" xml:space="preserve">Radial</text><rect x="1216.5" y="120.3" width="6.5" height="29.8" fill="#ffffff" stroke="#555" stroke-width="1"/><text x="1217.85" y="135.2" font-family="Liberation Sans" font-size="5.2" fill="#3c3cf0" text-anchor="middle" transform="rotate(90 1217.85 135.2)" xml:space="preserve">Tangential</text><rect x="904.7" y="158.3" width="29.2" height="5.5" fill="#e2e2e2" stroke="#4a4a4a" stroke-width="1" rx="0.7"/><line x1="905.4" y1="159.3" x2="933.2" y2="159.3" stroke="#f8f8f8" stroke-width="0.8"/><text x="919.3" y="162.7" font-family="Liberation Sans" font-size="5.4" fill="#333" text-anchor="middle" xml:space="preserve">Linear</text><rect x="1182.2" y="158.3" width="32.8" height="5.5" fill="#e2e2e2" stroke="#4a4a4a" stroke-width="1" rx="0.7"/><line x1="1182.9" y1="159.3" x2="1214.3" y2="159.3" stroke="#f8f8f8" stroke-width="0.8"/><text x="1198.6" y="162.7" font-family="Liberation Sans" font-size="5.4" fill="#333" text-anchor="middle" xml:space="preserve">Seconds</text><text x="908" y="108.5" font-family="Liberation Sans" font-size="8" fill="#3c3cff" text-anchor="middle" xml:space="preserve">g</text><rect x="598" y="173.5" width="286.5" height="81.5" fill="#ffffff"/><line x1="627.4" y1="174.5" x2="627.4" y2="254" stroke="#bdbdbd" stroke-width="0.7" stroke-dasharray="1.2,2.2"/><line x1="656.3" y1="174.5" x2="656.3" y2="254" stroke="#bdbdbd" stroke-width="0.7" stroke-dasharray="1.2,2.2"/><line x1="685.2" y1="174.5" x2="685.2" y2="254" stroke="#bdbdbd" stroke-width="0.7" stroke-dasharray="1.2,2.2"/><line x1="714.1" y1="174.5" x2="714.1" y2="254" stroke="#bdbdbd" stroke-width="0.7" stroke-dasharray="1.2,2.2"/><line x1="743" y1="174.5" x2="743" y2="254" stroke="#bdbdbd" stroke-width="0.7" stroke-dasharray="1.2,2.2"/><line x1="771.9" y1="174.5" x2="771.9" y2="254" stroke="#bdbdbd" stroke-width="0.7" stroke-dasharray="1.2,2.2"/><line x1="800.8" y1="174.5" x2="800.8" y2="254" stroke="#bdbdbd" stroke-width="0.7" stroke-dasharray="1.2,2.2"/><line x1="829.7" y1="174.5" x2="829.7" y2="254" stroke="#bdbdbd" stroke-width="0.7" stroke-dasharray="1.2,2.2"/><line x1="858.6" y1="174.5" x2="858.6" y2="254" stroke="#bdbdbd" stroke-width="0.7" stroke-dasharray="1.2,2.2"/><line x1="599" y1="182.1" x2="883.5" y2="182.1" stroke="#bdbdbd" stroke-width="0.7" stroke-dasharray="1.2,2.2"/><line x1="599" y1="191.2" x2="883.5" y2="191.2" stroke="#bdbdbd" stroke-width="0.7" stroke-dasharray="1.2,2.2"/><line x1="599" y1="197.8" x2="883.5" y2="197.8" stroke="#bdbdbd" stroke-width="0.7" stroke-dasharray="1.2,2.2"/><line x1="599" y1="209.7" x2="883.5" y2="209.7" stroke="#bdbdbd" stroke-width="0.7" stroke-dasharray="1.2,2.2"/><line x1="599" y1="218.4" x2="883.5" y2="218.4" stroke="#bdbdbd" stroke-width="0.7" stroke-dasharray="1.2,2.2"/><line x1="599" y1="225" x2="883.5" y2="225" stroke="#bdbdbd" stroke-width="0.7" stroke-dasharray="1.2,2.2"/><line x1="599" y1="234.9" x2="883.5" y2="234.9" stroke="#bdbdbd" stroke-width="0.7" stroke-dasharray="1.2,2.2"/><line x1="599" y1="241.5" x2="883.5" y2="241.5" stroke="#bdbdbd" stroke-width="0.7" stroke-dasharray="1.2,2.2"/><line x1="599" y1="248" x2="883.5" y2="248" stroke="#bdbdbd" stroke-width="0.7" stroke-dasharray="1.2,2.2"/><polyline points="598.5,180.3 599.3,181.5 600.1,187.6 600.9,181.9 601.7,185.1 602.5,180.4 603.3,186.3 604.1,188.2 604.9,188.3 605.7,177.3 606.5,179.5 607.3,177.0 608.1,187.7 608.9,188.6 609.7,183.2 610.5,181.7 611.3,182.8 612.1,182.0 612.9,183.3 613.7,182.9 614.5,188.3 615.3,192.8 616.1,185.4 616.9,188.6 617.7,191.0 618.5,190.5 619.3,185.0 620.1,187.4 620.9,190.0 621.7,189.3 622.5,190.1 623.3,183.3 624.1,185.4 624.9,188.2 625.7,184.7 626.5,192.0 627.3,193.3 628.1,182.4 628.9,183.1 629.7,184.8 630.5,186.3 631.3,189.4 632.1,192.2 632.9,184.4 633.7,186.9 634.5,190.0 635.3,186.5 636.1,190.0 636.9,185.2 637.7,190.3 638.5,189.6 639.3,191.4 640.1,188.2 640.9,189.4 641.7,190.5 642.5,189.3 643.3,188.8 644.1,190.6 644.9,193.7 645.7,192.1 646.5,192.7 647.3,192.1 648.1,194.6 648.9,191.2 649.7,191.5 650.5,192.6 651.3,191.5 652.1,191.6 652.9,191.7 653.7,189.7 654.5,189.2 655.3,189.8 656.1,191.6 656.9,193.5 657.7,188.8 658.5,190.4 659.3,187.2 660.1,189.5 660.9,189.9 661.7,189.5 662.5,187.6 663.3,188.5 664.1,191.2 664.9,189.6 665.7,188.9 666.5,190.3 667.3,189.3 668.1,190.0 668.9,190.5 669.7,191.1 670.5,191.0 671.3,192.4 672.1,190.2 672.9,190.8 673.7,193.6 674.5,192.2 675.3,192.8 676.1,192.4 676.9,192.4 677.7,191.6 678.5,193.1 679.3,192.9 680.1,191.8 680.9,193.0 681.7,194.3 682.5,190.7 683.3,194.1 684.1,192.2 684.9,192.5 685.7,193.3 686.5,193.9 687.3,193.2 688.1,193.6 688.9,191.4 689.7,191.5 690.5,191.7 691.3,192.5 692.1,191.8 692.9,191.7 693.7,193.8 694.5,192.8 695.3,191.4 696.1,194.2 696.9,194.0 697.7,193.7 698.5,189.5 699.3,190.6 700.1,190.5 700.9,191.8 701.7,192.1 702.5,191.8 703.3,190.3 704.1,192.1 704.9,193.1 705.7,190.7 706.5,191.6 707.3,190.3 708.1,187.3 708.9,189.1 709.7,189.3 710.5,190.1 711.3,190.2 712.1,188.5 712.9,187.9 713.7,188.6 714.5,190.0 715.3,190.4 716.1,191.4 716.9,193.0 717.7,191.3 718.5,195.1 719.3,193.2 720.1,195.6 720.9,194.8 721.7,196.0 722.5,195.1 723.3,197.2 724.1,196.6 724.9,195.5 725.7,197.1 726.5,196.8 727.3,198.8 728.1,197.9 728.9,199.7 729.7,200.0 730.5,200.2 731.3,199.4 732.1,200.2 732.9,200.2 733.7,200.2" fill="none" stroke="#3f6ca4" stroke-width="0.9" stroke-linejoin="round"/><polyline points="741.0,200.2 741.5,199.6 742.0,199.9 742.5,199.3 743.0,198.9 743.5,198.3 744.0,197.8 744.5,198.1 745.0,197.3 745.5,197.9 746.0,197.5 746.5,198.5 747.0,198.3 747.5,199.0 748.0,198.6 748.5,199.4 749.0,199.6 749.5,200.2" fill="none" stroke="#3f6ca4" stroke-width="0.9" stroke-linejoin="round"/><polyline points="801.0,199.8 801.5,200.2 802.0,199.1 802.5,199.2 803.0,198.8 803.5,198.9 804.0,198.3 804.5,197.2 805.0,197.5 805.5,197.3 806.0,197.4 806.5,197.6 807.0,198.6 807.5,198.9 808.0,199.1 808.5,199.0 809.0,199.6 809.5,200.2" fill="none" stroke="#3f6ca4" stroke-width="0.9" stroke-linejoin="round"/><polyline points="598.5,207.6 599.3,202.7 600.1,207.5 600.9,207.5 601.7,213.0 602.5,206.7 603.3,201.4 604.1,209.3 604.9,212.3 605.7,202.9 606.5,211.9 607.3,213.1 608.1,209.9 608.9,207.5 609.7,209.8 610.5,208.8 611.3,211.1 612.1,214.6 612.9,211.3 613.7,209.1 614.5,213.4 615.3,210.1 616.1,205.9 616.9,212.3 617.7,217.8 618.5,210.2 619.3,212.3 620.1,207.0 620.9,211.4 621.7,210.8 622.5,212.7 623.3,212.1 624.1,211.6 624.9,214.9 625.7,210.2 626.5,209.0 627.3,216.1 628.1,214.6 628.9,209.7 629.7,208.9 630.5,209.2 631.3,220.2 632.1,215.5 632.9,214.8 633.7,216.9 634.5,217.2 635.3,223.3 636.1,218.8 636.9,219.2 637.7,217.9 638.5,221.7 639.3,221.1 640.1,221.4 640.9,215.9 641.7,222.0 642.5,221.3 643.3,225.4 644.1,220.7 644.9,223.5 645.7,222.8 646.5,225.0 647.3,225.3 648.1,225.9 648.9,224.5 649.7,225.1 650.5,224.0 651.3,226.0 652.1,225.1 652.9,227.2 653.7,227.2 654.5,224.3 655.3,226.4 656.1,224.5 656.9,223.8 657.7,224.8 658.5,224.5 659.3,222.8 660.1,223.5 660.9,221.8 661.7,220.3 662.5,222.4 663.3,220.3 664.1,218.9 664.9,219.1 665.7,218.5 666.5,216.5 667.3,217.3 668.1,214.2 668.9,215.1 669.7,217.3 670.5,215.9 671.3,219.8 672.1,218.3 672.9,220.0 673.7,219.3 674.5,219.1 675.3,219.8 676.1,221.5 676.9,220.6 677.7,218.9 678.5,223.5 679.3,221.6 680.1,221.8 680.9,222.0 681.7,221.1 682.5,219.4 683.3,221.8 684.1,221.7 684.9,222.8 685.7,222.9 686.5,222.2 687.3,221.9 688.1,224.9 688.9,223.5 689.7,223.0 690.5,221.5 691.3,222.5 692.1,223.3 692.9,222.1 693.7,222.5 694.5,222.3 695.3,223.3 696.1,224.1 696.9,223.6 697.7,223.5 698.5,224.3 699.3,224.8 700.1,220.6 700.9,221.9 701.7,222.3 702.5,222.7 703.3,219.4 704.1,221.0 704.9,222.5 705.7,220.7 706.5,220.5 707.3,221.0 708.1,220.3 708.9,218.4 709.7,219.1 710.5,217.6 711.3,218.6 712.1,218.5 712.9,218.4 713.7,217.4 714.5,213.9 715.3,217.0 716.1,217.0 716.9,219.5 717.7,220.7 718.5,220.6 719.3,220.6 720.1,222.4 720.9,223.6 721.7,224.8 722.5,225.5 723.3,224.9 724.1,226.2 724.9,226.5 725.7,227.2 726.5,225.0 727.3,225.0 728.1,227.2 728.9,227.2 729.7,227.2 730.5,226.6 731.3,227.2 732.1,226.8 732.9,226.2 733.7,227.2 734.5,225.8 735.3,227.1 736.1,226.0 736.9,225.8 737.7,227.0 738.5,223.2 739.3,224.4 740.1,224.7 740.9,223.8 741.7,222.8 742.5,221.2 743.3,223.7 744.1,222.3 744.9,225.0 745.7,223.3 746.5,224.6 747.3,224.8 748.1,223.8 748.9,224.5 749.7,226.0 750.5,224.7 751.3,226.2 752.1,225.4 752.9,226.5 753.7,226.2 754.5,226.6 755.3,227.2 756.1,225.9 756.9,226.0 757.7,225.4" fill="none" stroke="#3f6ca4" stroke-width="0.9" stroke-linejoin="round"/><polyline points="785.0,227.2 785.5,226.8 786.0,227.2 786.5,226.4 787.0,226.0 787.5,225.6 788.0,227.2 788.5,225.1 789.0,224.7 789.5,225.5 790.0,225.4 790.5,225.0 791.0,223.8 791.5,224.3 792.0,224.6 792.5,223.4 793.0,224.9 793.5,223.3 794.0,223.9 794.5,223.6 795.0,223.1 795.5,224.0 796.0,222.2 796.5,223.0 797.0,222.1 797.5,223.1 798.0,221.5 798.5,223.1 799.0,222.1 799.5,223.1 800.0,222.0 800.5,223.3 801.0,221.9 801.5,221.8 802.0,221.7 802.5,221.9 803.0,221.3 803.5,222.5 804.0,221.2 804.5,222.4 805.0,222.2 805.5,222.4 806.0,222.2 806.5,222.6 807.0,222.9 807.5,223.2 808.0,224.1 808.5,223.0 809.0,223.8 809.5,224.0 810.0,224.0 810.5,223.4 811.0,225.0 811.5,222.7 812.0,223.4 812.5,224.1 813.0,223.5 813.5,224.2 814.0,224.7 814.5,224.3 815.0,224.2 815.5,224.9 816.0,224.4 816.5,224.3 817.0,223.6 817.5,225.4 818.0,226.2 818.5,224.5 819.0,224.8 819.5,226.3 820.0,224.6 820.5,224.9 821.0,226.1 821.5,226.0 822.0,226.5 822.5,225.2 823.0,226.9 823.5,226.1 824.0,227.2 824.5,227.2 825.0,226.6 825.5,227.2" fill="none" stroke="#3f6ca4" stroke-width="0.9" stroke-linejoin="round"/><polyline points="598.5,230.7 599.3,228.6 600.1,230.8 600.9,228.4 601.7,232.1 602.5,230.1 603.3,237.1 604.1,230.5 604.9,238.0 605.7,236.7 606.5,229.5 607.3,234.6 608.1,234.5 608.9,233.7 609.7,235.3 610.5,242.5 611.3,236.0 612.1,233.1 612.9,234.3 613.7,235.8 614.5,244.7 615.3,236.5 616.1,242.9 616.9,234.4 617.7,237.8 618.5,238.4 619.3,238.6 620.1,241.2 620.9,242.0 621.7,240.6 622.5,237.4 623.3,242.4 624.1,242.2 624.9,244.7 625.7,240.3 626.5,247.3 627.3,244.8 628.1,240.5 628.9,247.0 629.7,242.0 630.5,243.2 631.3,244.8 632.1,246.9 632.9,253.2 633.7,246.2 634.5,248.7 635.3,248.9 636.1,247.3 636.9,244.2 637.7,248.2 638.5,243.4 639.3,249.2 640.1,245.1 640.9,249.1 641.7,250.7 642.5,247.2 643.3,249.9 644.1,250.9 644.9,247.0 645.7,245.4 646.5,248.0 647.3,249.6 648.1,247.7 648.9,249.3 649.7,249.7 650.5,250.4 651.3,251.0 652.1,250.1 652.9,248.6 653.7,249.4 654.5,247.8 655.3,250.8 656.1,252.2 656.9,247.3 657.7,249.1 658.5,248.7 659.3,250.4 660.1,249.2 660.9,245.5 661.7,246.6 662.5,245.7 663.3,241.9 664.1,244.3 664.9,243.8 665.7,246.3 666.5,244.0 667.3,245.0 668.1,246.3 668.9,245.8 669.7,243.1 670.5,244.7 671.3,245.3 672.1,245.5 672.9,244.7 673.7,246.2 674.5,244.2 675.3,244.7 676.1,247.1 676.9,245.0 677.7,243.8 678.5,247.3 679.3,244.1 680.1,244.9 680.9,246.1 681.7,246.8 682.5,246.9 683.3,247.3 684.1,247.2 684.9,247.2 685.7,246.8 686.5,246.5 687.3,246.4 688.1,250.0 688.9,248.5 689.7,248.0 690.5,249.3 691.3,248.7 692.1,249.0 692.9,248.8 693.7,249.4 694.5,249.1 695.3,247.6 696.1,249.6 696.9,250.2 697.7,249.8 698.5,249.6 699.3,250.2 700.1,249.7 700.9,248.2 701.7,249.2 702.5,248.2 703.3,247.4 704.1,249.0 704.9,248.6 705.7,249.0 706.5,247.6 707.3,248.1 708.1,247.5 708.9,247.8 709.7,246.0 710.5,247.7 711.3,245.7 712.1,244.0 712.9,246.0 713.7,245.0 714.5,248.1 715.3,246.2 716.1,248.1 716.9,246.7 717.7,249.4 718.5,251.0 719.3,249.6 720.1,251.8 720.9,250.8 721.7,250.3 722.5,251.7 723.3,251.6 724.1,253.6 724.9,254.1 725.7,254.4 726.5,253.7" fill="none" stroke="#3f6ca4" stroke-width="0.9" stroke-linejoin="round"/><rect x="598" y="173.5" width="286.5" height="81.5" fill="none" stroke="#7a7a7a" stroke-width="1.3"/><line x1="598" y1="200.8" x2="884.5" y2="200.8" stroke="#8e8e8e" stroke-width="2"/><line x1="598" y1="227.8" x2="884.5" y2="227.8" stroke="#8e8e8e" stroke-width="2"/><text x="594.8" y="176.3" font-family="Liberation Sans" font-size="5.2" fill="#333" text-anchor="end" xml:space="preserve">110.</text><rect x="596.8" y="173.9" width="1.4" height="1.2" fill="#6060ff"/><text x="594.8" y="183.9" font-family="Liberation Sans" font-size="5.2" fill="#333" text-anchor="end" xml:space="preserve">90.</text><rect x="596.8" y="181.5" width="1.4" height="1.2" fill="#6060ff"/><text x="594.8" y="193" font-family="Liberation Sans" font-size="5.2" fill="#333" text-anchor="end" xml:space="preserve">70.</text><rect x="596.8" y="190.6" width="1.4" height="1.2" fill="#6060ff"/><text x="594.8" y="199.6" font-family="Liberation Sans" font-size="5.2" fill="#333" text-anchor="end" xml:space="preserve">50.</text><rect x="596.8" y="197.2" width="1.4" height="1.2" fill="#6060ff"/><text x="594.8" y="204" font-family="Liberation Sans" font-size="5.2" fill="#333" text-anchor="end" xml:space="preserve">110.</text><rect x="596.8" y="201.6" width="1.4" height="1.2" fill="#6060ff"/><text x="594.8" y="211.5" font-family="Liberation Sans" font-size="5.2" fill="#333" text-anchor="end" xml:space="preserve">90.</text><rect x="596.8" y="209.1" width="1.4" height="1.2" fill="#6060ff"/><text x="594.8" y="220.2" font-family="Liberation Sans" font-size="5.2" fill="#333" text-anchor="end" xml:space="preserve">70.</text><rect x="596.8" y="217.8" width="1.4" height="1.2" fill="#6060ff"/><text x="594.8" y="226.8" font-family="Liberation Sans" font-size="5.2" fill="#333" text-anchor="end" xml:space="preserve">50.</text><rect x="596.8" y="224.4" width="1.4" height="1.2" fill="#6060ff"/><text x="594.8" y="231.2" font-family="Liberation Sans" font-size="5.2" fill="#333" text-anchor="end" xml:space="preserve">120.</text><rect x="596.8" y="228.8" width="1.4" height="1.2" fill="#6060ff"/><text x="594.8" y="236.7" font-family="Liberation Sans" font-size="5.2" fill="#333" text-anchor="end" xml:space="preserve">100.</text><rect x="596.8" y="234.3" width="1.4" height="1.2" fill="#6060ff"/><text x="594.8" y="243.3" font-family="Liberation Sans" font-size="5.2" fill="#333" text-anchor="end" xml:space="preserve">80.</text><rect x="596.8" y="240.9" width="1.4" height="1.2" fill="#6060ff"/><text x="594.8" y="249.8" font-family="Liberation Sans" font-size="5.2" fill="#333" text-anchor="end" xml:space="preserve">60.</text><rect x="596.8" y="247.4" width="1.4" height="1.2" fill="#6060ff"/><text x="594.8" y="255" font-family="Liberation Sans" font-size="5.2" fill="#333" text-anchor="end" xml:space="preserve">40.</text><rect x="596.8" y="252.6" width="1.4" height="1.2" fill="#6060ff"/><text x="598.5" y="262.2" font-family="Liberation Sans" font-size="5.2" fill="#333" text-anchor="middle" xml:space="preserve">0</text><text x="627.4" y="262.2" font-family="Liberation Sans" font-size="5.2" fill="#333" text-anchor="middle" xml:space="preserve">10</text><text x="656.3" y="262.2" font-family="Liberation Sans" font-size="5.2" fill="#333" text-anchor="middle" xml:space="preserve">20</text><text x="685.2" y="262.2" font-family="Liberation Sans" font-size="5.2" fill="#333" text-anchor="middle" xml:space="preserve">30</text><text x="714.1" y="262.2" font-family="Liberation Sans" font-size="5.2" fill="#333" text-anchor="middle" xml:space="preserve">40</text><text x="743" y="262.2" font-family="Liberation Sans" font-size="5.2" fill="#333" text-anchor="middle" xml:space="preserve">50</text><text x="771.9" y="262.2" font-family="Liberation Sans" font-size="5.2" fill="#333" text-anchor="middle" xml:space="preserve">60</text><text x="800.8" y="262.2" font-family="Liberation Sans" font-size="5.2" fill="#333" text-anchor="middle" xml:space="preserve">70</text><text x="829.7" y="262.2" font-family="Liberation Sans" font-size="5.2" fill="#333" text-anchor="middle" xml:space="preserve">80</text><text x="858.6" y="262.2" font-family="Liberation Sans" font-size="5.2" fill="#333" text-anchor="middle" xml:space="preserve">90</text><rect x="885.5" y="178.5" width="6.5" height="17.2" fill="#ffff00" stroke="#333" stroke-width="1"/><text x="886.85" y="187.1" font-family="Liberation Sans" font-size="5.2" fill="#2828c8" text-anchor="middle" transform="rotate(90 886.85 187.1)" xml:space="preserve">Axial</text><rect x="885.5" y="204.2" width="6.5" height="20.7" fill="#ffffff" stroke="#555" stroke-width="1"/><text x="886.85" y="214.55" font-family="Liberation Sans" font-size="5.2" fill="#3c3cf0" text-anchor="middle" transform="rotate(90 886.85 214.55)" xml:space="preserve">Radial</text><rect x="885.5" y="228.9" width="6.5" height="28.2" fill="#ffffff" stroke="#555" stroke-width="1"/><text x="886.85" y="243" font-family="Liberation Sans" font-size="5.2" fill="#3c3cf0" text-anchor="middle" transform="rotate(90 886.85 243)" xml:space="preserve">Tangential</text><rect x="573.5" y="265.2" width="29.7" height="5.5" fill="#e2e2e2" stroke="#4a4a4a" stroke-width="1" rx="0.7"/><line x1="574.2" y1="266.2" x2="602.5" y2="266.2" stroke="#f8f8f8" stroke-width="0.8"/><text x="588.35" y="269.6" font-family="Liberation Sans" font-size="5.4" fill="#333" text-anchor="middle" xml:space="preserve">dB</text><rect x="851.2" y="265.2" width="32.9" height="5.5" fill="#e2e2e2" stroke="#4a4a4a" stroke-width="1" rx="0.7"/><line x1="851.9" y1="266.2" x2="883.4" y2="266.2" stroke="#f8f8f8" stroke-width="0.8"/><text x="867.65" y="269.6" font-family="Liberation Sans" font-size="5.4" fill="#333" text-anchor="middle" xml:space="preserve">Orders</text><text x="579.3" y="215" font-family="Liberation Sans" font-size="7.6" fill="#3c3cff" text-anchor="middle" transform="rotate(-90 579.3 215)" textLength="91.2" lengthAdjust="spacingAndGlyphs" xml:space="preserve">VdB (0 dB Ref 5.57E-07 in/s)</text><rect x="927" y="173.5" width="288.5" height="81.5" fill="#ffffff"/><line x1="985.8" y1="174.5" x2="985.8" y2="254" stroke="#bdbdbd" stroke-width="0.7" stroke-dasharray="1.2,2.2"/><line x1="1042.8" y1="174.5" x2="1042.8" y2="254" stroke="#bdbdbd" stroke-width="0.7" stroke-dasharray="1.2,2.2"/><line x1="1099.8" y1="174.5" x2="1099.8" y2="254" stroke="#bdbdbd" stroke-width="0.7" stroke-dasharray="1.2,2.2"/><line x1="1156.8" y1="174.5" x2="1156.8" y2="254" stroke="#bdbdbd" stroke-width="0.7" stroke-dasharray="1.2,2.2"/><line x1="1213.8" y1="174.5" x2="1213.8" y2="254" stroke="#bdbdbd" stroke-width="0.7" stroke-dasharray="1.2,2.2"/><line x1="928" y1="180.1" x2="1214.5" y2="180.1" stroke="#bdbdbd" stroke-width="0.7" stroke-dasharray="1.2,2.2"/><line x1="928" y1="186.7" x2="1214.5" y2="186.7" stroke="#bdbdbd" stroke-width="0.7" stroke-dasharray="1.2,2.2"/><line x1="928" y1="193.6" x2="1214.5" y2="193.6" stroke="#bdbdbd" stroke-width="0.7" stroke-dasharray="1.2,2.2"/><line x1="928" y1="198.2" x2="1214.5" y2="198.2" stroke="#bdbdbd" stroke-width="0.7" stroke-dasharray="1.2,2.2"/><line x1="928" y1="207.7" x2="1214.5" y2="207.7" stroke="#bdbdbd" stroke-width="0.7" stroke-dasharray="1.2,2.2"/><line x1="928" y1="214.3" x2="1214.5" y2="214.3" stroke="#bdbdbd" stroke-width="0.7" stroke-dasharray="1.2,2.2"/><line x1="928" y1="221" x2="1214.5" y2="221" stroke="#bdbdbd" stroke-width="0.7" stroke-dasharray="1.2,2.2"/><line x1="928" y1="225" x2="1214.5" y2="225" stroke="#bdbdbd" stroke-width="0.7" stroke-dasharray="1.2,2.2"/><line x1="928" y1="234.5" x2="1214.5" y2="234.5" stroke="#bdbdbd" stroke-width="0.7" stroke-dasharray="1.2,2.2"/><line x1="928" y1="241.5" x2="1214.5" y2="241.5" stroke="#bdbdbd" stroke-width="0.7" stroke-dasharray="1.2,2.2"/><line x1="928" y1="247.5" x2="1214.5" y2="247.5" stroke="#bdbdbd" stroke-width="0.7" stroke-dasharray="1.2,2.2"/><polyline points="927.3,185.8 927.5,187.4 927.8,188.2 928.0,188.1 928.3,187.9 928.5,187.9 928.8,185.7 929.0,187.9 929.3,187.7 929.5,184.5 929.8,188.5 930.0,188.3 930.3,186.6 930.5,185.9 930.8,187.9 931.0,187.0 931.3,185.7 931.5,186.3 931.8,187.5 932.0,186.2 932.3,188.6 932.5,186.0 932.8,187.4 933.0,187.8 933.3,186.7 933.5,187.0 933.8,185.6 934.0,187.3 934.3,186.4 934.5,185.6 934.8,186.3 935.0,187.7 935.3,186.1 935.5,185.0 935.8,185.4 936.0,187.6 936.3,186.1 936.5,185.4 936.8,186.5 937.0,186.7 937.3,186.9 937.5,185.9 937.8,186.5 938.0,186.6 938.3,186.6 938.5,186.7 938.8,186.6 939.0,186.7 939.3,185.5 939.5,185.8 939.8,188.0 940.0,186.8 940.3,186.5 940.5,187.8 940.8,188.6 941.0,188.6 941.3,187.1 941.5,187.4 941.8,186.5 942.0,187.9 942.3,188.1 942.5,186.8 942.8,186.2 943.0,186.6 943.3,187.4 943.5,186.2 943.8,187.9 944.0,187.1 944.3,186.7 944.5,187.1 944.8,186.5 945.0,187.6 945.3,186.8 945.5,187.4 945.8,188.0 946.0,186.7 946.3,186.9 946.5,185.2 946.8,187.2 947.0,186.9 947.3,186.9 947.5,186.1 947.8,186.1 948.0,184.9 948.3,186.4 948.5,185.8 948.8,186.4 949.0,186.4 949.3,186.4 949.5,185.5 949.8,186.7 950.0,186.5 950.3,185.8 950.5,185.3 950.8,185.8 951.0,185.2 951.3,186.3 951.5,185.9 951.8,187.5 952.0,187.0 952.3,185.9 952.5,186.1 952.8,186.2 953.0,185.9 953.3,187.2 953.5,186.3 953.8,185.2 954.0,186.4 954.3,185.3 954.5,186.8 954.8,187.3 955.0,186.6 955.3,185.8 955.5,186.8 955.8,187.7 956.0,187.0 956.3,185.9 956.5,186.3 956.8,187.1 957.0,187.1 957.3,187.4 957.5,186.6 957.8,185.7 958.0,187.0 958.3,188.1 958.5,187.7 958.8,185.8 959.0,186.5 959.3,186.4 959.5,188.1 959.8,187.1 960.0,185.7 960.3,186.3 960.5,187.8 960.8,187.2 961.0,186.6 961.3,185.5 961.5,185.4 961.8,188.1 962.0,186.2 962.3,185.6 962.5,186.1 962.8,187.9 963.0,187.4 963.3,186.8 963.5,185.9 963.8,186.9 964.0,187.2 964.3,186.2 964.5,185.9 964.8,186.3 965.0,186.5 965.3,185.8 965.5,184.7 965.8,187.5 966.0,186.8 966.3,185.8 966.5,186.6 966.8,187.0 967.0,187.2 967.3,186.2 967.5,186.2 967.8,186.4 968.0,187.0 968.3,185.2 968.5,188.0 968.8,186.6 969.0,186.8 969.3,186.4 969.5,186.4 969.8,187.1 970.0,186.9 970.3,187.1 970.5,186.6 970.8,187.8 971.0,186.7 971.3,187.5 971.5,186.5 971.8,187.6 972.0,187.6 972.3,187.6 972.5,186.6 972.8,187.1 973.0,187.4 973.3,188.0 973.5,187.0 973.8,187.3 974.0,187.0 974.3,186.3 974.5,185.9 974.8,185.9 975.0,187.4 975.3,185.2 975.5,186.4 975.8,185.6 976.0,186.5 976.3,186.2 976.5,187.2 976.8,186.6 977.0,185.7 977.3,186.9 977.5,185.9 977.8,186.8 978.0,185.8 978.3,184.6 978.5,186.7 978.8,185.9 979.0,188.1 979.3,186.3 979.5,184.9 979.8,185.8 980.0,187.7 980.3,186.1 980.5,185.7 980.8,186.1 981.0,186.4 981.3,186.0 981.5,185.3 981.8,185.0 982.0,187.4 982.3,188.8 982.5,187.0 982.8,187.8 983.0,187.5 983.3,187.1 983.5,185.5 983.8,187.0 984.0,187.2 984.3,186.9 984.5,186.6 984.8,187.2 985.0,187.1 985.3,186.8 985.5,186.6 985.8,187.1 986.0,187.4 986.3,187.5 986.5,187.7 986.8,188.1 987.0,187.6 987.3,188.6 987.5,188.2 987.8,186.4 988.0,187.1 988.3,187.0 988.5,187.2 988.8,186.1 989.0,188.7 989.3,185.0 989.5,186.2 989.8,187.3 990.0,185.2 990.3,186.2 990.5,186.7 990.8,185.9 991.0,187.1 991.3,184.3 991.5,185.2 991.8,187.9 992.0,186.4 992.3,186.5 992.5,184.4 992.8,185.5 993.0,186.7 993.3,184.9 993.5,185.1 993.8,186.9 994.0,185.0 994.3,186.2 994.5,185.8 994.8,184.9 995.0,186.3 995.3,186.5 995.5,184.1 995.8,187.4 996.0,185.5 996.3,185.8 996.5,186.7 996.8,187.2 997.0,187.6 997.3,185.1 997.5,186.7 997.8,187.5 998.0,186.4 998.3,186.2 998.5,186.9 998.8,187.9 999.0,187.8 999.3,187.4 999.5,187.0 999.8,186.2 1000.0,186.6 1000.3,185.6 1000.5,188.3 1000.8,187.6 1001.0,187.2 1001.3,187.0 1001.5,187.4 1001.8,185.8 1002.0,188.3 1002.3,187.6 1002.5,186.4 1002.8,186.9 1003.0,188.5 1003.3,187.5 1003.5,188.0 1003.8,186.9 1004.0,186.2 1004.3,186.4 1004.5,187.4 1004.8,186.8 1005.0,186.2 1005.3,184.9 1005.5,187.0 1005.8,187.1 1006.0,186.3 1006.3,186.4 1006.5,186.2 1006.8,185.4 1007.0,186.4 1007.3,185.4 1007.5,186.2 1007.8,186.3 1008.0,186.2 1008.3,185.4 1008.5,185.6 1008.8,186.5 1009.0,185.3 1009.3,185.6 1009.5,186.6 1009.8,186.0 1010.0,186.7 1010.3,186.4 1010.5,186.6 1010.8,186.3 1011.0,185.8 1011.3,185.6 1011.5,187.1 1011.8,187.0 1012.0,186.2 1012.3,188.1 1012.5,187.1 1012.8,187.0 1013.0,187.4 1013.3,186.5 1013.5,186.6 1013.8,186.7 1014.0,187.0 1014.3,187.8 1014.5,187.6 1014.8,186.6 1015.0,187.9 1015.3,188.7 1015.5,186.6 1015.8,188.2 1016.0,186.3 1016.3,186.8 1016.5,187.2 1016.8,185.5 1017.0,186.9 1017.3,187.3 1017.5,187.8 1017.8,187.2 1018.0,187.2 1018.3,185.3 1018.5,186.7 1018.8,186.5 1019.0,188.2 1019.3,187.5 1019.5,186.0 1019.8,187.4 1020.0,185.7 1020.3,186.8 1020.5,185.7 1020.8,187.3 1021.0,186.7 1021.3,187.2 1021.5,186.8 1021.8,186.2 1022.0,185.7 1022.3,186.0 1022.5,186.3 1022.8,186.6 1023.0,186.6 1023.3,186.2 1023.5,186.7 1023.8,185.7 1024.0,186.5 1024.3,185.3 1024.5,186.6 1024.8,186.3 1025.0,187.5 1025.3,186.2 1025.5,186.2 1025.8,185.5 1026.0,187.2 1026.3,185.8 1026.5,187.8 1026.8,185.9 1027.0,186.3 1027.3,185.5 1027.5,187.0 1027.8,187.4 1028.0,188.3 1028.3,187.6 1028.5,187.2 1028.8,186.7 1029.0,187.0 1029.3,188.7 1029.5,188.5 1029.8,187.8 1030.0,186.3 1030.3,187.4 1030.5,187.7 1030.8,186.4 1031.0,187.5 1031.3,187.5 1031.5,187.0 1031.8,186.5 1032.0,187.9 1032.3,186.5 1032.5,187.3 1032.8,187.4 1033.0,186.3 1033.3,187.1 1033.5,187.6 1033.8,187.1 1034.0,186.4 1034.3,186.7 1034.5,186.3 1034.8,186.0 1035.0,186.4 1035.3,186.2 1035.5,185.9 1035.8,185.7 1036.0,185.3 1036.3,186.5 1036.5,185.8 1036.8,186.9 1037.0,186.2 1037.3,186.3 1037.5,186.0 1037.8,187.1 1038.0,185.2 1038.3,186.3 1038.5,186.6 1038.8,185.7 1039.0,186.1 1039.3,186.2 1039.5,188.4 1039.8,187.7 1040.0,187.2 1040.3,188.4 1040.5,188.4 1040.8,187.4 1041.0,187.0 1041.3,185.5 1041.5,186.0 1041.8,186.7 1042.0,186.8 1042.3,187.5 1042.5,186.2 1042.8,188.0 1043.0,186.6 1043.3,187.2 1043.5,186.0 1043.8,187.3 1044.0,185.2 1044.3,187.1 1044.5,188.0 1044.8,185.6 1045.0,186.9 1045.3,186.3 1045.5,186.6 1045.8,186.3 1046.0,187.5 1046.3,188.6 1046.5,187.3 1046.8,186.7 1047.0,184.2 1047.3,185.7 1047.5,186.9 1047.8,186.0 1048.0,187.3 1048.3,186.9 1048.5,186.6 1048.8,186.4 1049.0,187.1 1049.3,187.0 1049.5,185.8 1049.8,186.7 1050.0,184.4 1050.3,186.8 1050.5,187.7 1050.8,187.0 1051.0,186.3 1051.3,186.7 1051.5,186.7 1051.8,186.0 1052.0,187.9 1052.3,186.6 1052.5,186.5 1052.8,185.8 1053.0,187.3 1053.3,186.3 1053.5,187.0 1053.8,186.9 1054.0,185.0 1054.3,186.6 1054.5,187.3 1054.8,187.3 1055.0,186.9 1055.3,185.2 1055.5,186.0 1055.8,188.9 1056.0,187.6 1056.3,188.2 1056.5,185.1 1056.8,187.1 1057.0,187.5 1057.3,187.2 1057.5,187.8 1057.8,188.2 1058.0,188.0 1058.3,186.1 1058.5,185.8 1058.8,187.1 1059.0,185.5 1059.3,187.2 1059.5,188.7 1059.8,186.5 1060.0,188.0 1060.3,187.5 1060.5,186.7 1060.8,187.0 1061.0,186.1 1061.3,186.9 1061.5,187.5 1061.8,186.2 1062.0,186.7 1062.3,186.4 1062.5,187.3 1062.8,187.8 1063.0,186.0 1063.3,185.6 1063.5,186.8 1063.8,186.2 1064.0,186.5 1064.3,187.1 1064.5,186.4 1064.8,186.7 1065.0,185.2 1065.3,186.0 1065.5,186.0 1065.8,186.4 1066.0,186.3 1066.3,186.1 1066.5,185.2 1066.8,186.5 1067.0,186.7 1067.3,186.1 1067.5,186.5 1067.8,186.0 1068.0,185.8 1068.3,186.1 1068.5,185.6 1068.8,186.1 1069.0,185.2 1069.3,186.8 1069.5,187.6 1069.8,187.2 1070.0,186.7 1070.3,186.6 1070.5,185.8 1070.8,186.8 1071.0,187.9 1071.3,187.4 1071.5,185.9 1071.8,186.0 1072.0,187.3 1072.3,186.1 1072.5,186.0 1072.8,187.9 1073.0,185.9 1073.3,187.1 1073.5,187.5 1073.8,187.9 1074.0,186.1 1074.3,187.0 1074.5,187.9 1074.8,185.7 1075.0,186.3 1075.3,186.8 1075.5,186.7 1075.8,186.5 1076.0,187.4 1076.3,186.6 1076.5,186.4 1076.8,185.6 1077.0,187.0 1077.3,187.1 1077.5,186.0 1077.8,187.5 1078.0,186.2 1078.3,186.4 1078.5,186.2 1078.8,186.4 1079.0,186.2 1079.3,187.8 1079.5,186.2 1079.8,186.4 1080.0,187.6 1080.3,187.7 1080.5,185.6 1080.8,186.8 1081.0,186.3 1081.3,186.4 1081.5,186.2 1081.8,186.2 1082.0,186.5 1082.3,186.2 1082.5,186.9 1082.8,187.6 1083.0,186.2 1083.3,186.1 1083.5,186.6 1083.8,188.2 1084.0,187.1 1084.3,185.3 1084.5,186.3 1084.8,186.0 1085.0,187.1 1085.3,187.2 1085.5,186.8 1085.8,186.5 1086.0,186.5 1086.3,188.4 1086.5,186.9 1086.8,186.9 1087.0,187.3 1087.3,186.9 1087.5,187.8 1087.8,186.7 1088.0,186.3 1088.3,187.5 1088.5,187.1 1088.8,186.9 1089.0,186.2 1089.3,186.4 1089.5,187.1 1089.8,186.8 1090.0,187.5 1090.3,186.4 1090.5,185.5 1090.8,186.8 1091.0,186.9 1091.3,186.9 1091.5,186.7 1091.8,185.4 1092.0,186.8 1092.3,184.9 1092.5,187.1 1092.8,186.4 1093.0,186.9 1093.3,185.1 1093.5,186.3 1093.8,185.0 1094.0,186.9 1094.3,186.2 1094.5,185.3 1094.8,187.5 1095.0,186.0 1095.3,185.4 1095.5,185.0 1095.8,187.4 1096.0,186.2 1096.3,186.1 1096.5,186.6 1096.8,186.2 1097.0,187.1 1097.3,185.6 1097.5,186.7 1097.8,187.2 1098.0,185.7 1098.3,186.8 1098.5,187.8 1098.8,185.7 1099.0,187.6 1099.3,187.2 1099.5,187.1 1099.8,187.3 1100.0,187.3 1100.3,187.9 1100.5,187.8 1100.8,186.2 1101.0,187.0 1101.3,185.7 1101.5,187.6 1101.8,187.7 1102.0,186.8 1102.3,187.2 1102.5,188.0 1102.8,187.7 1103.0,187.3 1103.3,188.1 1103.5,185.8 1103.8,186.6 1104.0,188.2 1104.3,186.5 1104.5,185.1 1104.8,186.8 1105.0,186.6 1105.3,187.1 1105.5,185.7 1105.8,187.0 1106.0,185.6 1106.3,187.0 1106.5,186.9 1106.8,184.6 1107.0,185.4 1107.3,186.9 1107.5,186.5 1107.8,186.0 1108.0,185.6 1108.3,186.3 1108.5,187.4 1108.8,186.8 1109.0,187.1 1109.3,188.5 1109.5,185.2 1109.8,184.8 1110.0,185.9 1110.3,186.8 1110.5,184.7 1110.8,186.0 1111.0,186.3 1111.3,186.8 1111.5,185.3 1111.8,188.5 1112.0,187.1 1112.3,187.5 1112.5,186.6 1112.8,187.3 1113.0,188.6 1113.3,186.2 1113.5,186.7 1113.8,185.8 1114.0,186.2 1114.3,186.4 1114.5,187.1 1114.8,187.3 1115.0,186.9 1115.3,186.5 1115.5,186.4 1115.8,187.2 1116.0,186.8 1116.3,186.1 1116.5,187.5 1116.8,187.9 1117.0,187.4 1117.3,186.9 1117.5,187.0 1117.8,186.6 1118.0,187.8 1118.3,186.2 1118.5,187.8 1118.8,187.1 1119.0,184.7 1119.3,188.8 1119.5,186.1 1119.8,186.9 1120.0,186.1 1120.3,185.9 1120.5,187.5 1120.8,187.1 1121.0,186.8 1121.3,186.6 1121.5,186.4 1121.8,185.7 1122.0,185.6 1122.3,185.7 1122.5,186.4 1122.8,186.2 1123.0,186.6 1123.3,185.6 1123.5,186.9 1123.8,186.5 1124.0,184.4 1124.3,186.2 1124.5,187.9 1124.8,186.2 1125.0,186.0 1125.3,185.8 1125.5,186.6 1125.8,186.5 1126.0,186.6 1126.3,186.7 1126.5,185.8 1126.8,186.3 1127.0,187.0 1127.3,186.0 1127.5,186.9 1127.8,187.3 1128.0,186.6 1128.3,187.4 1128.5,186.2 1128.8,186.2 1129.0,186.1 1129.3,187.5 1129.5,186.8 1129.8,187.5 1130.0,186.3 1130.3,187.7 1130.5,186.8 1130.8,187.4 1131.0,187.1 1131.3,187.0 1131.5,186.6 1131.8,187.1 1132.0,186.4 1132.3,188.6 1132.5,188.2 1132.8,188.6 1133.0,186.4 1133.3,186.8 1133.5,186.1 1133.8,187.2 1134.0,187.1 1134.3,187.4 1134.5,187.1 1134.8,185.4 1135.0,186.5 1135.3,188.1 1135.5,186.2 1135.8,186.9 1136.0,186.1 1136.3,186.9 1136.5,186.5 1136.8,186.3 1137.0,186.7 1137.3,185.9 1137.5,186.5 1137.8,186.3 1138.0,186.6 1138.3,186.1 1138.5,184.8 1138.8,186.0 1139.0,185.8 1139.3,185.6 1139.5,186.7 1139.8,185.0 1140.0,186.4 1140.3,186.7 1140.5,186.8 1140.8,187.1 1141.0,186.5 1141.3,186.0 1141.5,187.5 1141.8,186.8 1142.0,187.0 1142.3,186.8 1142.5,186.9 1142.8,187.6 1143.0,187.2 1143.3,186.9 1143.5,187.8 1143.8,187.6 1144.0,187.3 1144.3,187.2 1144.5,187.8 1144.8,186.3 1145.0,186.7 1145.3,188.0 1145.5,187.1 1145.8,187.0 1146.0,188.1 1146.3,187.9 1146.5,187.3 1146.8,187.6 1147.0,187.3 1147.3,187.0 1147.5,187.6 1147.8,187.6 1148.0,186.9 1148.3,186.9 1148.5,185.9 1148.8,186.3 1149.0,186.0 1149.3,187.3 1149.5,187.4 1149.8,185.8 1150.0,186.8 1150.3,187.3 1150.5,186.8 1150.8,185.5 1151.0,185.9 1151.3,186.6 1151.5,186.8 1151.8,186.5 1152.0,186.5 1152.3,186.3 1152.5,186.7 1152.8,185.9 1153.0,186.5 1153.3,186.0 1153.5,186.6 1153.8,184.7 1154.0,186.6 1154.3,185.9 1154.5,186.8 1154.8,185.3 1155.0,186.7 1155.3,185.9 1155.5,186.5 1155.8,186.2 1156.0,185.3 1156.3,187.7 1156.5,186.9 1156.8,186.5 1157.0,187.3 1157.3,185.8 1157.5,186.7 1157.8,187.7 1158.0,186.6 1158.3,187.1 1158.5,187.9 1158.8,187.0 1159.0,187.2 1159.3,187.0 1159.5,187.4 1159.8,187.4 1160.0,186.8 1160.3,188.4 1160.5,186.9 1160.8,186.5 1161.0,186.8 1161.3,187.6 1161.5,187.1 1161.8,187.4 1162.0,185.4 1162.3,187.1 1162.5,186.9 1162.8,185.6 1163.0,186.1 1163.3,187.4 1163.5,187.8 1163.8,185.8 1164.0,185.1 1164.3,186.4 1164.5,186.5 1164.8,185.9 1165.0,185.4 1165.3,184.1 1165.5,186.4 1165.8,185.7 1166.0,184.3 1166.3,185.3 1166.5,186.2 1166.8,185.6 1167.0,187.5 1167.3,186.0 1167.5,185.9 1167.8,187.1 1168.0,186.8 1168.3,187.1 1168.5,186.2 1168.8,185.3 1169.0,187.3 1169.3,184.9 1169.5,184.5 1169.8,178.3 1170.0,184.2 1170.3,185.6 1170.5,191.2 1170.8,174.1 1171.0,189.4 1171.3,198.4 1171.5,200.2 1171.8,183.7 1172.0,198.8 1172.3,180.2 1172.5,187.3 1172.8,190.7 1173.0,178.2 1173.3,185.1 1173.5,177.0 1173.8,194.9 1174.0,187.6 1174.3,200.2 1174.5,185.0 1174.8,187.4 1175.0,200.2 1175.3,190.6 1175.5,193.3 1175.8,175.5 1176.0,192.9 1176.3,177.1 1176.5,189.1 1176.8,176.1 1177.0,195.6 1177.3,190.3 1177.5,174.1 1177.8,177.4 1178.0,188.0 1178.3,178.2 1178.5,185.4 1178.8,182.7 1179.0,177.2 1179.3,185.5 1179.5,190.2 1179.8,192.0 1180.0,182.1 1180.3,189.3 1180.5,180.7 1180.8,187.7 1181.0,177.4 1181.3,189.6 1181.5,184.8 1181.8,179.9 1182.0,194.7 1182.3,196.2 1182.5,182.3 1182.8,188.2 1183.0,190.6 1183.3,189.1 1183.5,186.6 1183.8,184.7 1184.0,185.9 1184.3,184.8 1184.5,194.3 1184.8,181.5 1185.0,185.9 1185.3,188.2 1185.5,183.4 1185.8,189.8 1186.0,185.4 1186.3,191.6 1186.5,181.8 1186.8,194.7 1187.0,190.7 1187.3,192.5 1187.5,189.0 1187.8,184.4 1188.0,185.3 1188.3,183.8 1188.5,181.5 1188.8,188.5 1189.0,185.3 1189.3,187.3 1189.5,190.7 1189.8,183.5 1190.0,188.7 1190.3,183.9 1190.5,185.8 1190.8,185.0 1191.0,186.9 1191.3,184.2 1191.5,187.4 1191.8,184.6 1192.0,186.6 1192.3,186.6 1192.5,186.5 1192.8,189.4 1193.0,186.9 1193.3,185.5 1193.5,185.0 1193.8,188.4 1194.0,184.6 1194.3,185.1 1194.5,186.5 1194.8,186.9 1195.0,186.6 1195.3,183.9 1195.5,184.6 1195.8,183.1 1196.0,182.8 1196.3,183.8 1196.5,186.8 1196.8,185.6 1197.0,183.1 1197.3,185.9 1197.5,186.0 1197.8,189.0 1198.0,187.4 1198.3,187.2 1198.5,189.2 1198.8,187.6 1199.0,185.2 1199.3,185.0 1199.5,188.9 1199.8,189.5 1200.0,188.9 1200.3,189.1 1200.5,189.8 1200.8,188.7 1201.0,186.6 1201.3,186.9 1201.5,186.9 1201.8,186.7 1202.0,186.4 1202.3,186.8 1202.5,189.1 1202.8,189.8 1203.0,188.1 1203.3,186.0 1203.5,186.3 1203.8,187.2 1204.0,187.4 1204.3,187.7 1204.5,187.4 1204.8,189.0 1205.0,187.8 1205.3,188.3 1205.5,187.5 1205.8,187.9 1206.0,186.4 1206.3,186.6 1206.5,188.2 1206.8,185.2 1207.0,185.6 1207.3,187.9 1207.5,187.3 1207.8,185.9 1208.0,185.6 1208.3,187.9 1208.5,186.2 1208.8,187.7 1209.0,186.9 1209.3,186.7 1209.5,186.3 1209.8,185.7 1210.0,185.5 1210.3,185.7 1210.5,187.8 1210.8,187.2 1211.0,187.5 1211.3,185.9 1211.5,186.1 1211.8,184.8 1212.0,186.1 1212.3,186.2 1212.5,184.8 1212.8,186.2 1213.0,185.1 1213.3,186.6 1213.5,187.5 1213.8,186.5 1214.0,186.5 1214.3,187.0 1214.5,186.8 1214.8,187.9 1215.0,186.3 1215.3,187.4" fill="none" stroke="#053a7e" stroke-width="0.8" stroke-linejoin="round"/><polyline points="927.3,214.2 927.5,213.0 927.8,214.4 928.0,214.9 928.3,215.5 928.5,213.1 928.8,213.7 929.0,214.3 929.3,212.4 929.5,213.9 929.8,214.6 930.0,215.9 930.3,214.6 930.5,213.2 930.8,214.7 931.0,215.0 931.3,212.6 931.5,214.6 931.8,215.9 932.0,214.7 932.3,214.3 932.5,213.5 932.8,213.6 933.0,216.0 933.3,214.3 933.5,215.0 933.8,215.3 934.0,215.1 934.3,214.4 934.5,214.6 934.8,213.0 935.0,213.5 935.3,214.4 935.5,215.3 935.8,216.2 936.0,214.0 936.3,215.6 936.5,215.1 936.8,214.0 937.0,214.2 937.3,213.3 937.5,215.2 937.8,215.9 938.0,214.1 938.3,214.4 938.5,215.0 938.8,215.0 939.0,213.6 939.3,214.8 939.5,214.2 939.8,215.5 940.0,215.0 940.3,213.4 940.5,214.5 940.8,215.2 941.0,214.6 941.3,213.4 941.5,212.9 941.8,213.7 942.0,213.9 942.3,213.8 942.5,212.7 942.8,214.7 943.0,214.6 943.3,213.6 943.5,215.0 943.8,214.5 944.0,213.9 944.3,214.6 944.5,213.8 944.8,214.6 945.0,213.0 945.3,214.1 945.5,213.1 945.8,214.8 946.0,215.5 946.3,215.9 946.5,214.1 946.8,213.2 947.0,215.0 947.3,214.9 947.5,213.5 947.8,215.1 948.0,214.5 948.3,215.3 948.5,213.7 948.8,213.5 949.0,214.1 949.3,214.1 949.5,214.7 949.8,214.3 950.0,214.4 950.3,215.1 950.5,213.9 950.8,213.7 951.0,215.2 951.3,213.5 951.5,213.6 951.8,213.9 952.0,214.0 952.3,215.5 952.5,212.8 952.8,214.8 953.0,214.6 953.3,213.6 953.5,214.6 953.8,214.8 954.0,215.3 954.3,214.6 954.5,213.6 954.8,215.7 955.0,214.5 955.3,215.0 955.5,214.5 955.8,214.5 956.0,214.6 956.3,213.2 956.5,215.1 956.8,215.2 957.0,215.0 957.3,214.4 957.5,212.5 957.8,213.7 958.0,214.3 958.3,213.7 958.5,214.7 958.8,214.9 959.0,214.1 959.3,213.1 959.5,212.9 959.8,213.6 960.0,215.0 960.3,215.5 960.5,214.3 960.8,214.9 961.0,215.2 961.3,215.1 961.5,213.7 961.8,212.8 962.0,214.0 962.3,214.0 962.5,213.1 962.8,214.9 963.0,215.1 963.3,214.2 963.5,212.9 963.8,215.1 964.0,212.8 964.3,214.2 964.5,215.1 964.8,214.1 965.0,215.2 965.3,214.7 965.5,215.2 965.8,215.7 966.0,215.1 966.3,214.3 966.5,214.4 966.8,213.7 967.0,214.4 967.3,213.4 967.5,214.2 967.8,213.1 968.0,215.9 968.3,214.8 968.5,214.6 968.8,214.7 969.0,213.3 969.3,214.4 969.5,213.9 969.8,214.4 970.0,215.0 970.3,214.0 970.5,213.6 970.8,214.4 971.0,214.4 971.3,214.5 971.5,214.4 971.8,215.3 972.0,214.5 972.3,214.7 972.5,213.9 972.8,213.8 973.0,214.6 973.3,214.2 973.5,212.8 973.8,214.7 974.0,214.2 974.3,214.7 974.5,214.6 974.8,214.3 975.0,213.4 975.3,214.2 975.5,214.0 975.8,214.4 976.0,214.8 976.3,214.5 976.5,213.4 976.8,213.1 977.0,214.7 977.3,212.9 977.5,214.7 977.8,214.6 978.0,213.5 978.3,213.8 978.5,213.8 978.8,213.8 979.0,214.4 979.3,213.1 979.5,214.6 979.8,213.8 980.0,213.9 980.3,214.8 980.5,214.6 980.8,212.9 981.0,213.8 981.3,213.6 981.5,215.2 981.8,214.1 982.0,214.4 982.3,214.7 982.5,215.4 982.8,214.2 983.0,214.5 983.3,215.1 983.5,214.2 983.8,215.6 984.0,215.0 984.3,214.7 984.5,215.7 984.8,214.6 985.0,216.1 985.3,214.3 985.5,214.8 985.8,214.7 986.0,214.1 986.3,214.3 986.5,215.1 986.8,213.0 987.0,214.5 987.3,216.1 987.5,214.1 987.8,214.8 988.0,214.4 988.3,215.5 988.5,216.2 988.8,213.6 989.0,213.8 989.3,214.8 989.5,215.8 989.8,212.7 990.0,214.1 990.3,214.3 990.5,214.4 990.8,215.7 991.0,214.3 991.3,215.0 991.5,213.2 991.8,214.6 992.0,214.0 992.3,215.7 992.5,214.8 992.8,213.7 993.0,214.3 993.3,213.8 993.5,213.7 993.8,214.2 994.0,214.4 994.3,213.3 994.5,213.1 994.8,214.8 995.0,214.6 995.3,214.4 995.5,214.9 995.8,213.9 996.0,214.2 996.3,215.6 996.5,213.5 996.8,215.7 997.0,214.8 997.3,214.9 997.5,214.2 997.8,215.2 998.0,214.6 998.3,213.5 998.5,214.1 998.8,214.0 999.0,214.7 999.3,214.3 999.5,214.2 999.8,213.4 1000.0,214.7 1000.3,214.0 1000.5,213.9 1000.8,212.9 1001.0,214.6 1001.3,214.0 1001.5,213.2 1001.8,214.7 1002.0,213.8 1002.3,214.9 1002.5,213.8 1002.8,215.4 1003.0,214.6 1003.3,213.0 1003.5,214.5 1003.8,212.4 1004.0,213.6 1004.3,214.9 1004.5,213.7 1004.8,214.5 1005.0,215.0 1005.3,214.7 1005.5,215.3 1005.8,213.6 1006.0,214.1 1006.3,214.5 1006.5,214.8 1006.8,213.3 1007.0,213.1 1007.3,212.9 1007.5,214.0 1007.8,214.7 1008.0,214.0 1008.3,214.2 1008.5,214.9 1008.8,212.8 1009.0,213.7 1009.3,212.9 1009.5,215.1 1009.8,214.4 1010.0,215.3 1010.3,212.4 1010.5,213.0 1010.8,213.6 1011.0,214.4 1011.3,214.4 1011.5,214.7 1011.8,214.7 1012.0,213.3 1012.3,213.5 1012.5,213.6 1012.8,215.2 1013.0,215.1 1013.3,214.7 1013.5,214.1 1013.8,214.5 1014.0,214.4 1014.3,216.1 1014.5,214.9 1014.8,213.6 1015.0,213.9 1015.3,212.6 1015.5,215.2 1015.8,213.4 1016.0,214.4 1016.3,213.1 1016.5,214.6 1016.8,214.6 1017.0,214.2 1017.3,213.7 1017.5,216.2 1017.8,214.8 1018.0,214.6 1018.3,214.2 1018.5,214.3 1018.8,214.9 1019.0,214.4 1019.3,215.0 1019.5,213.9 1019.8,214.7 1020.0,214.3 1020.3,214.7 1020.5,214.3 1020.8,214.0 1021.0,214.2 1021.3,214.3 1021.5,214.4 1021.8,213.2 1022.0,214.8 1022.3,214.1 1022.5,215.0 1022.8,214.7 1023.0,213.7 1023.3,213.6 1023.5,214.7 1023.8,214.1 1024.0,214.2 1024.3,214.2 1024.5,215.1 1024.8,214.4 1025.0,213.8 1025.3,213.7 1025.5,213.8 1025.8,214.7 1026.0,212.9 1026.3,213.8 1026.5,213.8 1026.8,214.7 1027.0,213.5 1027.3,214.1 1027.5,214.1 1027.8,214.3 1028.0,213.3 1028.3,215.2 1028.5,216.2 1028.8,213.7 1029.0,215.1 1029.3,214.4 1029.5,215.0 1029.8,214.2 1030.0,215.0 1030.3,215.3 1030.5,215.3 1030.8,213.3 1031.0,214.6 1031.3,215.6 1031.5,215.5 1031.8,214.1 1032.0,213.7 1032.3,216.0 1032.5,214.1 1032.8,214.5 1033.0,214.9 1033.3,214.3 1033.5,213.6 1033.8,214.8 1034.0,214.2 1034.3,214.2 1034.5,214.8 1034.8,214.7 1035.0,215.5 1035.3,215.2 1035.5,213.7 1035.8,215.2 1036.0,214.1 1036.3,215.9 1036.5,213.3 1036.8,214.2 1037.0,213.1 1037.3,215.4 1037.5,214.5 1037.8,214.2 1038.0,213.5 1038.3,213.5 1038.5,213.3 1038.8,213.3 1039.0,214.3 1039.3,214.0 1039.5,215.5 1039.8,213.3 1040.0,213.8 1040.3,213.9 1040.5,214.9 1040.8,214.2 1041.0,213.6 1041.3,214.8 1041.5,214.8 1041.8,212.8 1042.0,215.3 1042.3,214.6 1042.5,214.3 1042.8,214.6 1043.0,216.2 1043.3,214.7 1043.5,214.1 1043.8,213.9 1044.0,213.6 1044.3,215.7 1044.5,216.2 1044.8,215.1 1045.0,214.8 1045.3,215.8 1045.5,213.7 1045.8,214.4 1046.0,214.9 1046.3,214.4 1046.5,214.9 1046.8,213.3 1047.0,212.6 1047.3,214.4 1047.5,213.8 1047.8,215.4 1048.0,214.9 1048.3,213.0 1048.5,214.8 1048.8,213.7 1049.0,212.4 1049.3,216.1 1049.5,215.0 1049.8,213.8 1050.0,214.1 1050.3,215.7 1050.5,214.8 1050.8,216.2 1051.0,214.4 1051.3,213.4 1051.5,214.2 1051.8,215.3 1052.0,214.9 1052.3,213.9 1052.5,213.5 1052.8,214.6 1053.0,215.2 1053.3,216.0 1053.5,213.0 1053.8,213.6 1054.0,214.5 1054.3,214.3 1054.5,213.9 1054.8,214.6 1055.0,213.4 1055.3,212.4 1055.5,215.4 1055.8,213.8 1056.0,213.6 1056.3,214.9 1056.5,214.8 1056.8,213.5 1057.0,215.2 1057.3,214.1 1057.5,214.6 1057.8,214.4 1058.0,215.1 1058.3,215.2 1058.5,214.3 1058.8,214.2 1059.0,215.8 1059.3,213.6 1059.5,213.2 1059.8,214.3 1060.0,213.5 1060.3,214.0 1060.5,215.0 1060.8,216.2 1061.0,215.2 1061.3,213.8 1061.5,213.8 1061.8,213.3 1062.0,214.6 1062.3,215.8 1062.5,214.4 1062.8,213.2 1063.0,216.0 1063.3,214.7 1063.5,214.1 1063.8,215.4 1064.0,214.5 1064.3,214.3 1064.5,213.7 1064.8,213.2 1065.0,213.9 1065.3,215.5 1065.5,214.6 1065.8,214.7 1066.0,213.0 1066.3,216.2 1066.5,214.0 1066.8,214.5 1067.0,216.0 1067.3,214.4 1067.5,212.5 1067.8,215.0 1068.0,213.1 1068.3,214.2 1068.5,214.6 1068.8,215.6 1069.0,215.8 1069.3,215.7 1069.5,214.0 1069.8,214.1 1070.0,214.8 1070.3,214.7 1070.5,213.9 1070.8,214.2 1071.0,213.3 1071.3,213.9 1071.5,212.9 1071.8,214.6 1072.0,214.0 1072.3,215.9 1072.5,214.6 1072.8,214.5 1073.0,214.6 1073.3,215.0 1073.5,214.4 1073.8,213.2 1074.0,213.7 1074.3,214.1 1074.5,215.0 1074.8,215.3 1075.0,215.3 1075.3,214.7 1075.5,214.7 1075.8,213.6 1076.0,215.8 1076.3,213.7 1076.5,213.8 1076.8,214.5 1077.0,214.4 1077.3,213.9 1077.5,214.6 1077.8,215.1 1078.0,214.9 1078.3,213.0 1078.5,214.4 1078.8,213.3 1079.0,214.1 1079.3,215.4 1079.5,214.6 1079.8,212.6 1080.0,213.9 1080.3,215.7 1080.5,214.5 1080.8,213.7 1081.0,215.0 1081.3,214.6 1081.5,214.6 1081.8,216.2 1082.0,216.2 1082.3,214.1 1082.5,214.1 1082.8,214.6 1083.0,213.4 1083.3,214.5 1083.5,213.6 1083.8,213.8 1084.0,213.0 1084.3,215.7 1084.5,213.1 1084.8,213.1 1085.0,214.4 1085.3,213.2 1085.5,214.2 1085.8,213.8 1086.0,213.8 1086.3,215.0 1086.5,215.7 1086.8,214.3 1087.0,213.9 1087.3,214.5 1087.5,214.2 1087.8,213.9 1088.0,213.6 1088.3,214.1 1088.5,213.7 1088.8,214.2 1089.0,213.9 1089.3,215.2 1089.5,214.4 1089.8,214.3 1090.0,216.0 1090.3,216.2 1090.5,214.3 1090.8,214.1 1091.0,213.5 1091.3,214.7 1091.5,213.9 1091.8,215.0 1092.0,215.3 1092.3,213.7 1092.5,214.9 1092.8,214.6 1093.0,212.4 1093.3,213.5 1093.5,214.5 1093.8,214.0 1094.0,214.1 1094.3,214.5 1094.5,213.7 1094.8,215.2 1095.0,214.5 1095.3,214.4 1095.5,213.3 1095.8,215.1 1096.0,215.3 1096.3,214.1 1096.5,214.7 1096.8,213.9 1097.0,213.9 1097.3,214.9 1097.5,213.9 1097.8,214.3 1098.0,214.7 1098.3,213.5 1098.5,215.0 1098.8,213.0 1099.0,213.7 1099.3,215.3 1099.5,215.2 1099.8,214.4 1100.0,214.3 1100.3,214.6 1100.5,213.9 1100.8,214.4 1101.0,215.2 1101.3,214.7 1101.5,213.5 1101.8,213.6 1102.0,212.9 1102.3,215.4 1102.5,215.2 1102.8,215.0 1103.0,213.7 1103.3,215.8 1103.5,212.7 1103.8,215.2 1104.0,215.1 1104.3,213.5 1104.5,214.4 1104.8,213.3 1105.0,214.0 1105.3,213.6 1105.5,214.9 1105.8,215.5 1106.0,216.1 1106.3,213.1 1106.5,214.8 1106.8,214.1 1107.0,214.6 1107.3,213.0 1107.5,212.5 1107.8,213.1 1108.0,215.4 1108.3,213.2 1108.5,215.0 1108.8,214.3 1109.0,214.9 1109.3,213.9 1109.5,215.3 1109.8,214.4 1110.0,214.3 1110.3,214.5 1110.5,214.2 1110.8,213.3 1111.0,214.2 1111.3,214.7 1111.5,214.4 1111.8,213.8 1112.0,214.2 1112.3,213.5 1112.5,214.6 1112.8,213.9 1113.0,214.6 1113.3,214.6 1113.5,214.8 1113.8,214.5 1114.0,214.7 1114.3,213.5 1114.5,215.2 1114.8,214.5 1115.0,214.5 1115.3,214.4 1115.5,215.8 1115.8,213.8 1116.0,215.7 1116.3,216.2 1116.5,214.4 1116.8,213.9 1117.0,212.9 1117.3,214.7 1117.5,214.4 1117.8,213.4 1118.0,213.7 1118.3,212.6 1118.5,214.9 1118.8,213.0 1119.0,214.1 1119.3,214.6 1119.5,215.1 1119.8,214.3 1120.0,213.9 1120.3,214.6 1120.5,213.7 1120.8,213.6 1121.0,213.0 1121.3,214.3 1121.5,213.5 1121.8,214.7 1122.0,215.2 1122.3,213.9 1122.5,214.6 1122.8,214.5 1123.0,214.2 1123.3,215.5 1123.5,214.3 1123.8,215.1 1124.0,214.0 1124.3,215.8 1124.5,214.3 1124.8,213.8 1125.0,214.1 1125.3,214.4 1125.5,214.8 1125.8,213.8 1126.0,215.7 1126.3,214.4 1126.5,215.1 1126.8,213.6 1127.0,214.6 1127.3,213.9 1127.5,215.2 1127.8,214.0 1128.0,213.9 1128.3,214.4 1128.5,214.3 1128.8,214.3 1129.0,214.3 1129.3,215.0 1129.5,215.2 1129.8,215.7 1130.0,214.5 1130.3,213.8 1130.5,215.9 1130.8,214.3 1131.0,215.1 1131.3,214.5 1131.5,214.5 1131.8,213.3 1132.0,212.4 1132.3,214.1 1132.5,214.3 1132.8,213.9 1133.0,214.3 1133.3,214.3 1133.5,214.1 1133.8,214.6 1134.0,214.2 1134.3,213.4 1134.5,214.5 1134.8,214.4 1135.0,213.7 1135.3,212.9 1135.5,214.4 1135.8,214.6 1136.0,215.3 1136.3,213.9 1136.5,214.9 1136.8,215.2 1137.0,213.8 1137.3,215.3 1137.5,215.9 1137.8,214.0 1138.0,215.1 1138.3,213.9 1138.5,214.7 1138.8,212.4 1139.0,213.8 1139.3,215.7 1139.5,215.2 1139.8,215.1 1140.0,216.2 1140.3,214.2 1140.5,213.6 1140.8,212.4 1141.0,213.5 1141.3,213.1 1141.5,215.8 1141.8,214.1 1142.0,213.3 1142.3,214.4 1142.5,214.7 1142.8,214.4 1143.0,215.5 1143.3,214.3 1143.5,214.5 1143.8,214.9 1144.0,213.6 1144.3,214.6 1144.5,214.1 1144.8,215.3 1145.0,215.0 1145.3,212.6 1145.5,215.1 1145.8,214.6 1146.0,214.4 1146.3,213.2 1146.5,215.8 1146.8,213.8 1147.0,214.6 1147.3,213.7 1147.5,215.0 1147.8,213.8 1148.0,214.1 1148.3,215.2 1148.5,214.3 1148.8,214.1 1149.0,215.5 1149.3,213.0 1149.5,215.1 1149.8,215.7 1150.0,214.2 1150.3,215.3 1150.5,213.5 1150.8,214.4 1151.0,214.6 1151.3,213.3 1151.5,212.6 1151.8,215.4 1152.0,212.4 1152.3,214.8 1152.5,214.2 1152.8,214.2 1153.0,215.4 1153.3,214.3 1153.5,214.5 1153.8,215.1 1154.0,214.6 1154.3,213.2 1154.5,214.7 1154.8,216.1 1155.0,213.5 1155.3,214.5 1155.5,213.4 1155.8,212.8 1156.0,215.1 1156.3,214.3 1156.5,214.4 1156.8,214.4 1157.0,214.9 1157.3,215.1 1157.5,214.7 1157.8,214.5 1158.0,212.4 1158.3,213.3 1158.5,214.1 1158.8,213.9 1159.0,213.2 1159.3,214.4 1159.5,214.5 1159.8,215.5 1160.0,213.8 1160.3,214.8 1160.5,213.6 1160.8,214.2 1161.0,212.8 1161.3,212.8 1161.5,215.2 1161.8,212.4 1162.0,214.4 1162.3,213.8 1162.5,213.9 1162.8,214.1 1163.0,214.5 1163.3,214.6 1163.5,213.8 1163.8,214.2 1164.0,213.6 1164.3,213.8 1164.5,213.1 1164.8,213.4 1165.0,213.2 1165.3,214.0 1165.5,215.4 1165.8,215.0 1166.0,213.7 1166.3,213.0 1166.5,213.0 1166.8,213.4 1167.0,216.0 1167.3,214.1 1167.5,212.9 1167.8,214.8 1168.0,213.8 1168.3,215.9 1168.5,215.2 1168.8,215.1 1169.0,214.8 1169.3,214.5 1169.5,209.1 1169.8,215.6 1170.0,227.2 1170.3,226.2 1170.5,216.2 1170.8,217.7 1171.0,215.6 1171.3,203.9 1171.5,213.3 1171.8,216.6 1172.0,218.7 1172.3,215.9 1172.5,227.2 1172.8,221.2 1173.0,208.1 1173.3,205.3 1173.5,209.4 1173.8,212.3 1174.0,220.8 1174.3,227.2 1174.5,209.9 1174.8,201.4 1175.0,209.9 1175.3,217.3 1175.5,222.2 1175.8,212.6 1176.0,227.2 1176.3,219.7 1176.5,227.2 1176.8,222.6 1177.0,224.2 1177.3,223.1 1177.5,210.4 1177.8,201.4 1178.0,225.4 1178.3,206.5 1178.5,209.5 1178.8,221.1 1179.0,227.1 1179.3,223.1 1179.5,213.2 1179.8,220.0 1180.0,209.9 1180.3,212.5 1180.5,223.1 1180.8,208.0 1181.0,204.8 1181.3,210.8 1181.5,218.0 1181.8,210.2 1182.0,212.9 1182.3,216.9 1182.5,205.8 1182.8,224.2 1183.0,210.2 1183.3,221.7 1183.5,208.8 1183.8,214.2 1184.0,216.5 1184.3,218.6 1184.5,219.1 1184.8,215.5 1185.0,207.4 1185.3,215.0 1185.5,213.2 1185.8,211.9 1186.0,217.9 1186.3,209.9 1186.5,220.7 1186.8,215.4 1187.0,213.5 1187.3,216.0 1187.5,217.5 1187.8,213.3 1188.0,216.2 1188.3,215.5 1188.5,212.9 1188.8,215.3 1189.0,212.9 1189.3,215.5 1189.5,213.3 1189.8,216.2 1190.0,216.7 1190.3,217.3 1190.5,215.5 1190.8,212.2 1191.0,213.4 1191.3,211.5 1191.5,217.0 1191.8,211.9 1192.0,216.7 1192.3,215.8 1192.5,213.4 1192.8,213.2 1193.0,213.3 1193.3,213.4 1193.5,213.5 1193.8,211.4 1194.0,217.0 1194.3,215.0 1194.5,215.0 1194.8,217.0 1195.0,214.3 1195.3,213.7 1195.5,212.4 1195.8,213.0 1196.0,215.0 1196.3,214.2 1196.5,212.9 1196.8,213.5 1197.0,211.9 1197.3,212.4 1197.5,215.2 1197.8,214.5 1198.0,213.8 1198.3,214.1 1198.5,215.6 1198.8,214.7 1199.0,214.9 1199.3,212.9 1199.5,214.8 1199.8,212.8 1200.0,214.7 1200.3,213.7 1200.5,215.5 1200.8,214.3 1201.0,212.2 1201.3,214.0 1201.5,214.6 1201.8,215.1 1202.0,215.5 1202.3,214.6 1202.5,216.4 1202.8,212.7 1203.0,213.9 1203.3,212.6 1203.5,213.4 1203.8,212.8 1204.0,213.3 1204.3,215.3 1204.5,214.0 1204.8,215.7 1205.0,214.6 1205.3,215.0 1205.5,215.7 1205.8,213.6 1206.0,214.0 1206.3,215.3 1206.5,214.5 1206.8,213.7 1207.0,216.6 1207.3,212.4 1207.5,214.2 1207.8,214.5 1208.0,214.0 1208.3,214.7 1208.5,214.2 1208.8,214.5 1209.0,214.4 1209.3,213.9 1209.5,214.7 1209.8,213.0 1210.0,214.5 1210.3,213.2 1210.5,215.3 1210.8,215.8 1211.0,213.7 1211.3,212.7 1211.5,212.7 1211.8,213.8 1212.0,213.9 1212.3,214.4 1212.5,215.0 1212.8,214.0 1213.0,213.5 1213.3,216.3 1213.5,214.3 1213.8,214.5 1214.0,213.6 1214.3,214.5 1214.5,214.2 1214.8,214.8 1215.0,214.2 1215.3,212.9" fill="none" stroke="#053a7e" stroke-width="0.8" stroke-linejoin="round"/><polyline points="927.3,241.6 927.5,242.9 927.8,242.8 928.0,242.4 928.3,242.8 928.5,243.3 928.8,242.0 929.0,243.3 929.3,243.7 929.5,243.4 929.8,242.4 930.0,243.1 930.3,242.7 930.5,242.2 930.8,242.4 931.0,242.6 931.3,242.6 931.5,242.9 931.8,242.2 932.0,241.9 932.3,242.6 932.5,243.7 932.8,243.2 933.0,243.5 933.3,243.0 933.5,243.0 933.8,243.3 934.0,243.6 934.3,243.8 934.5,244.7 934.8,244.4 935.0,244.0 935.3,242.7 935.5,243.5 935.8,243.7 936.0,243.2 936.3,244.0 936.5,243.6 936.8,243.8 937.0,244.0 937.3,243.5 937.5,244.2 937.8,243.7 938.0,244.0 938.3,244.2 938.5,245.4 938.8,243.3 939.0,245.0 939.3,244.1 939.5,243.6 939.8,243.8 940.0,243.6 940.3,244.6 940.5,244.4 940.8,244.4 941.0,244.5 941.3,243.3 941.5,242.9 941.8,244.2 942.0,243.7 942.3,243.3 942.5,244.5 942.8,245.0 943.0,244.5 943.3,243.4 943.5,244.9 943.8,244.5 944.0,242.8 944.3,243.7 944.5,243.3 944.8,242.6 945.0,243.5 945.3,243.4 945.5,242.1 945.8,241.7 946.0,242.3 946.3,242.5 946.5,242.1 946.8,242.5 947.0,243.4 947.3,242.7 947.5,242.0 947.8,241.5 948.0,241.9 948.3,241.8 948.5,242.1 948.8,242.7 949.0,241.2 949.3,242.1 949.5,242.7 949.8,242.1 950.0,242.0 950.3,241.3 950.5,241.4 950.8,242.8 951.0,241.8 951.3,241.9 951.5,241.4 951.8,240.4 952.0,241.5 952.3,241.6 952.5,241.1 952.8,242.3 953.0,241.9 953.3,240.5 953.5,241.2 953.8,240.7 954.0,241.2 954.3,240.0 954.5,241.5 954.8,241.5 955.0,240.7 955.3,242.3 955.5,241.7 955.8,241.4 956.0,241.5 956.3,241.3 956.5,241.1 956.8,241.2 957.0,241.8 957.3,241.0 957.5,240.9 957.8,242.3 958.0,241.3 958.3,241.8 958.5,241.1 958.8,241.8 959.0,241.5 959.3,241.5 959.5,241.9 959.8,242.2 960.0,241.9 960.3,243.0 960.5,242.4 960.8,242.0 961.0,242.4 961.3,242.6 961.5,242.9 961.8,242.1 962.0,241.6 962.3,241.7 962.5,241.6 962.8,243.4 963.0,241.7 963.3,243.6 963.5,243.0 963.8,243.4 964.0,242.1 964.3,242.8 964.5,243.7 964.8,242.7 965.0,244.1 965.3,243.6 965.5,243.3 965.8,244.1 966.0,243.3 966.3,243.6 966.5,243.7 966.8,242.7 967.0,243.7 967.3,244.2 967.5,244.1 967.8,244.5 968.0,243.8 968.3,243.1 968.5,244.7 968.8,242.6 969.0,244.0 969.3,242.3 969.5,243.5 969.8,244.9 970.0,242.7 970.3,244.6 970.5,243.4 970.8,243.1 971.0,243.4 971.3,243.4 971.5,243.8 971.8,243.8 972.0,243.7 972.3,243.5 972.5,243.2 972.8,244.3 973.0,243.9 973.3,243.2 973.5,243.3 973.8,243.4 974.0,244.0 974.3,243.1 974.5,243.1 974.8,243.3 975.0,243.1 975.3,242.4 975.5,242.1 975.8,243.2 976.0,242.9 976.3,242.8 976.5,242.5 976.8,242.1 977.0,242.3 977.3,241.9 977.5,241.9 977.8,242.1 978.0,242.6 978.3,241.9 978.5,242.6 978.8,242.7 979.0,242.2 979.3,241.8 979.5,242.5 979.8,242.4 980.0,243.3 980.3,242.0 980.5,242.6 980.8,242.7 981.0,243.0 981.3,241.0 981.5,242.2 981.8,241.9 982.0,241.7 982.3,240.7 982.5,241.5 982.8,241.8 983.0,242.4 983.3,241.5 983.5,242.4 983.8,241.3 984.0,242.1 984.3,242.4 984.5,241.8 984.8,241.9 985.0,242.4 985.3,243.3 985.5,242.4 985.8,241.7 986.0,242.5 986.3,243.1 986.5,243.5 986.8,242.9 987.0,242.9 987.3,242.9 987.5,243.2 987.8,243.2 988.0,242.8 988.3,243.6 988.5,242.7 988.8,242.1 989.0,242.9 989.3,242.9 989.5,243.6 989.8,242.9 990.0,242.2 990.3,242.8 990.5,243.4 990.8,243.1 991.0,243.2 991.3,244.3 991.5,243.5 991.8,244.5 992.0,244.4 992.3,244.5 992.5,244.1 992.8,243.9 993.0,244.8 993.3,244.0 993.5,244.6 993.8,244.5 994.0,244.1 994.3,243.2 994.5,244.5 994.8,244.9 995.0,244.2 995.3,245.3 995.5,244.5 995.8,244.3 996.0,245.1 996.3,243.9 996.5,245.0 996.8,245.9 997.0,245.0 997.3,244.5 997.5,245.1 997.8,245.3 998.0,244.6 998.3,244.8 998.5,245.0 998.8,245.2 999.0,244.4 999.3,244.6 999.5,245.2 999.8,244.6 1000.0,244.3 1000.3,245.5 1000.5,243.7 1000.8,244.2 1001.0,244.7 1001.3,244.8 1001.5,243.6 1001.8,244.1 1002.0,244.3 1002.3,243.5 1002.5,244.0 1002.8,243.8 1003.0,243.3 1003.3,242.9 1003.5,243.7 1003.8,243.9 1004.0,243.0 1004.3,243.0 1004.5,242.7 1004.8,242.2 1005.0,243.1 1005.3,243.3 1005.5,243.7 1005.8,242.3 1006.0,243.4 1006.3,243.0 1006.5,242.6 1006.8,243.1 1007.0,242.6 1007.3,243.4 1007.5,242.5 1007.8,243.0 1008.0,243.9 1008.3,242.7 1008.5,242.6 1008.8,242.8 1009.0,242.3 1009.3,242.4 1009.5,242.9 1009.8,241.9 1010.0,243.0 1010.3,242.0 1010.5,241.7 1010.8,243.3 1011.0,241.6 1011.3,242.1 1011.5,242.7 1011.8,242.3 1012.0,243.1 1012.3,242.4 1012.5,242.3 1012.8,242.4 1013.0,242.4 1013.3,242.9 1013.5,242.3 1013.8,243.0 1014.0,242.7 1014.3,242.4 1014.5,243.0 1014.8,241.6 1015.0,242.9 1015.3,242.4 1015.5,242.4 1015.8,241.9 1016.0,243.1 1016.3,244.1 1016.5,243.0 1016.8,243.1 1017.0,242.3 1017.3,243.9 1017.5,243.4 1017.8,243.0 1018.0,243.9 1018.3,243.4 1018.5,242.9 1018.8,243.6 1019.0,243.3 1019.3,244.4 1019.5,243.2 1019.8,243.9 1020.0,243.4 1020.3,243.7 1020.5,243.3 1020.8,243.5 1021.0,243.0 1021.3,243.7 1021.5,244.0 1021.8,244.1 1022.0,244.0 1022.3,244.4 1022.5,243.4 1022.8,243.7 1023.0,243.5 1023.3,243.0 1023.5,243.6 1023.8,242.8 1024.0,243.8 1024.3,244.3 1024.5,244.1 1024.8,243.0 1025.0,244.9 1025.3,244.4 1025.5,243.4 1025.8,243.0 1026.0,244.0 1026.3,243.9 1026.5,243.5 1026.8,243.5 1027.0,243.8 1027.3,243.9 1027.5,244.5 1027.8,243.0 1028.0,243.2 1028.3,243.6 1028.5,243.4 1028.8,242.1 1029.0,243.5 1029.3,244.2 1029.5,243.8 1029.8,244.1 1030.0,243.2 1030.3,243.4 1030.5,242.1 1030.8,242.1 1031.0,242.4 1031.3,241.4 1031.5,242.9 1031.8,242.3 1032.0,242.6 1032.3,242.6 1032.5,242.7 1032.8,242.8 1033.0,242.0 1033.3,241.7 1033.5,241.5 1033.8,242.2 1034.0,241.6 1034.3,241.1 1034.5,241.7 1034.8,242.0 1035.0,242.0 1035.3,241.1 1035.5,241.0 1035.8,241.6 1036.0,241.6 1036.3,241.2 1036.5,241.8 1036.8,241.0 1037.0,241.7 1037.3,242.1 1037.5,240.6 1037.8,241.7 1038.0,241.4 1038.3,240.8 1038.5,241.2 1038.8,241.7 1039.0,241.9 1039.3,241.1 1039.5,241.2 1039.8,242.4 1040.0,241.6 1040.3,241.3 1040.5,241.6 1040.8,241.8 1041.0,241.2 1041.3,240.7 1041.5,240.6 1041.8,241.8 1042.0,241.0 1042.3,240.7 1042.5,240.7 1042.8,242.5 1043.0,242.7 1043.3,241.8 1043.5,242.5 1043.8,242.3 1044.0,241.0 1044.3,242.4 1044.5,242.2 1044.8,242.1 1045.0,242.1 1045.3,241.4 1045.5,242.9 1045.8,242.7 1046.0,242.2 1046.3,242.3 1046.5,241.8 1046.8,243.2 1047.0,242.8 1047.3,243.0 1047.5,242.9 1047.8,243.3 1048.0,243.6 1048.3,243.9 1048.5,243.2 1048.8,242.7 1049.0,242.5 1049.3,243.7 1049.5,243.5 1049.8,244.6 1050.0,243.7 1050.3,242.6 1050.5,243.8 1050.8,243.3 1051.0,244.0 1051.3,243.0 1051.5,243.7 1051.8,243.5 1052.0,243.3 1052.3,242.9 1052.5,243.9 1052.8,243.1 1053.0,242.5 1053.3,243.0 1053.5,243.5 1053.8,243.7 1054.0,243.5 1054.3,243.9 1054.5,243.9 1054.8,243.8 1055.0,243.7 1055.3,244.0 1055.5,244.6 1055.8,243.9 1056.0,243.8 1056.3,243.7 1056.5,244.1 1056.8,243.0 1057.0,243.1 1057.3,243.6 1057.5,242.7 1057.8,243.8 1058.0,243.1 1058.3,242.9 1058.5,242.7 1058.8,242.1 1059.0,242.7 1059.3,242.1 1059.5,242.2 1059.8,242.3 1060.0,242.9 1060.3,242.6 1060.5,243.0 1060.8,242.0 1061.0,242.6 1061.3,242.5 1061.5,242.7 1061.8,242.3 1062.0,242.8 1062.3,242.1 1062.5,242.9 1062.8,243.3 1063.0,242.9 1063.3,242.4 1063.5,242.3 1063.8,242.6 1064.0,242.0 1064.3,241.7 1064.5,241.9 1064.8,241.9 1065.0,241.9 1065.3,243.1 1065.5,243.5 1065.8,242.3 1066.0,241.3 1066.3,242.2 1066.5,242.1 1066.8,241.4 1067.0,242.4 1067.3,242.0 1067.5,241.5 1067.8,241.7 1068.0,242.8 1068.3,241.7 1068.5,242.2 1068.8,242.0 1069.0,241.8 1069.3,242.0 1069.5,242.9 1069.8,243.5 1070.0,242.2 1070.3,242.4 1070.5,242.4 1070.8,242.6 1071.0,242.9 1071.3,243.1 1071.5,242.7 1071.8,241.6 1072.0,243.7 1072.3,243.2 1072.5,242.8 1072.8,243.2 1073.0,243.2 1073.3,243.4 1073.5,242.1 1073.8,244.1 1074.0,243.1 1074.3,244.0 1074.5,243.8 1074.8,243.2 1075.0,243.7 1075.3,244.3 1075.5,244.3 1075.8,244.1 1076.0,243.6 1076.3,244.3 1076.5,244.8 1076.8,244.4 1077.0,243.1 1077.3,244.4 1077.5,244.2 1077.8,245.1 1078.0,243.9 1078.3,243.6 1078.5,244.3 1078.8,245.4 1079.0,245.0 1079.3,244.9 1079.5,245.9 1079.8,244.1 1080.0,244.1 1080.3,243.8 1080.5,244.7 1080.8,244.2 1081.0,243.9 1081.3,245.1 1081.5,244.6 1081.8,245.5 1082.0,245.4 1082.3,244.2 1082.5,244.8 1082.8,244.4 1083.0,243.9 1083.3,245.9 1083.5,244.8 1083.8,244.4 1084.0,245.4 1084.3,244.3 1084.5,244.5 1084.8,245.1 1085.0,244.2 1085.3,244.6 1085.5,244.4 1085.8,243.5 1086.0,244.6 1086.3,244.3 1086.5,244.2 1086.8,244.6 1087.0,243.2 1087.3,243.3 1087.5,243.2 1087.8,243.4 1088.0,243.9 1088.3,244.0 1088.5,243.5 1088.8,243.5 1089.0,244.0 1089.3,242.4 1089.5,242.6 1089.8,244.2 1090.0,242.5 1090.3,242.9 1090.5,243.0 1090.8,243.8 1091.0,243.4 1091.3,242.5 1091.5,242.0 1091.8,243.2 1092.0,242.5 1092.3,241.8 1092.5,243.2 1092.8,241.8 1093.0,241.9 1093.3,242.9 1093.5,241.7 1093.8,243.4 1094.0,243.2 1094.3,241.1 1094.5,242.2 1094.8,242.8 1095.0,242.6 1095.3,242.7 1095.5,241.3 1095.8,243.1 1096.0,241.9 1096.3,241.9 1096.5,242.0 1096.8,242.8 1097.0,241.9 1097.3,242.1 1097.5,241.4 1097.8,241.4 1098.0,242.5 1098.3,241.6 1098.5,241.6 1098.8,242.8 1099.0,242.2 1099.3,242.5 1099.5,242.9 1099.8,242.7 1100.0,243.2 1100.3,243.0 1100.5,242.2 1100.8,242.6 1101.0,242.6 1101.3,242.2 1101.5,242.9 1101.8,242.4 1102.0,243.0 1102.3,243.0 1102.5,242.5 1102.8,244.0 1103.0,244.0 1103.3,244.2 1103.5,244.1 1103.8,244.2 1104.0,243.5 1104.3,244.6 1104.5,243.3 1104.8,243.3 1105.0,243.5 1105.3,243.1 1105.5,243.5 1105.8,244.8 1106.0,242.5 1106.3,242.6 1106.5,243.7 1106.8,244.6 1107.0,243.6 1107.3,244.4 1107.5,243.5 1107.8,243.7 1108.0,243.9 1108.3,242.6 1108.5,243.1 1108.8,243.4 1109.0,243.8 1109.3,244.1 1109.5,243.6 1109.8,244.2 1110.0,243.2 1110.3,244.2 1110.5,244.3 1110.8,243.8 1111.0,243.1 1111.3,244.3 1111.5,244.5 1111.8,243.9 1112.0,243.3 1112.3,243.8 1112.5,244.2 1112.8,243.1 1113.0,242.3 1113.3,243.4 1113.5,244.2 1113.8,243.1 1114.0,243.2 1114.3,242.6 1114.5,242.2 1114.8,243.4 1115.0,243.8 1115.3,242.9 1115.5,242.4 1115.8,242.1 1116.0,243.6 1116.3,242.1 1116.5,242.4 1116.8,242.7 1117.0,242.9 1117.3,242.2 1117.5,241.5 1117.8,241.8 1118.0,241.5 1118.3,242.0 1118.5,241.5 1118.8,242.1 1119.0,241.2 1119.3,241.7 1119.5,242.2 1119.8,242.3 1120.0,240.6 1120.3,241.8 1120.5,241.5 1120.8,241.5 1121.0,241.0 1121.3,240.5 1121.5,241.5 1121.8,242.1 1122.0,240.3 1122.3,241.2 1122.5,241.7 1122.8,241.9 1123.0,240.3 1123.3,241.4 1123.5,240.1 1123.8,242.1 1124.0,241.1 1124.3,241.6 1124.5,241.3 1124.8,240.4 1125.0,242.5 1125.3,241.6 1125.5,241.1 1125.8,240.1 1126.0,242.3 1126.3,240.8 1126.5,241.5 1126.8,242.1 1127.0,242.3 1127.3,241.4 1127.5,241.7 1127.8,242.1 1128.0,241.9 1128.3,240.5 1128.5,242.0 1128.8,241.6 1129.0,242.3 1129.3,241.3 1129.5,242.0 1129.8,242.1 1130.0,242.2 1130.3,241.6 1130.5,241.9 1130.8,242.6 1131.0,243.8 1131.3,242.5 1131.5,243.2 1131.8,242.9 1132.0,243.6 1132.3,241.6 1132.5,241.6 1132.8,242.9 1133.0,242.7 1133.3,242.7 1133.5,242.9 1133.8,243.6 1134.0,244.6 1134.3,242.1 1134.5,242.8 1134.8,243.6 1135.0,242.7 1135.3,243.3 1135.5,243.2 1135.8,243.1 1136.0,243.6 1136.3,243.2 1136.5,243.9 1136.8,244.7 1137.0,243.2 1137.3,244.0 1137.5,243.5 1137.8,243.3 1138.0,244.2 1138.3,244.1 1138.5,243.7 1138.8,244.2 1139.0,242.9 1139.3,243.8 1139.5,243.9 1139.8,242.6 1140.0,244.9 1140.3,243.5 1140.5,243.5 1140.8,244.2 1141.0,244.2 1141.3,243.9 1141.5,243.9 1141.8,243.3 1142.0,242.6 1142.3,242.6 1142.5,243.4 1142.8,244.3 1143.0,242.8 1143.3,243.9 1143.5,242.7 1143.8,243.3 1144.0,244.1 1144.3,242.9 1144.5,241.9 1144.8,244.0 1145.0,242.5 1145.3,244.1 1145.5,243.8 1145.8,244.0 1146.0,243.0 1146.3,243.9 1146.5,242.6 1146.8,243.5 1147.0,242.5 1147.3,243.0 1147.5,243.2 1147.8,242.3 1148.0,241.7 1148.3,242.7 1148.5,242.6 1148.8,242.5 1149.0,242.9 1149.3,242.0 1149.5,241.2 1149.8,241.4 1150.0,242.0 1150.3,241.3 1150.5,242.2 1150.8,242.2 1151.0,241.3 1151.3,242.5 1151.5,241.7 1151.8,241.1 1152.0,242.6 1152.3,242.0 1152.5,242.6 1152.8,242.8 1153.0,241.5 1153.3,242.4 1153.5,243.6 1153.8,243.2 1154.0,242.3 1154.3,242.8 1154.5,242.9 1154.8,243.0 1155.0,242.2 1155.3,242.7 1155.5,241.7 1155.8,243.4 1156.0,242.6 1156.3,242.9 1156.5,243.8 1156.8,243.1 1157.0,242.5 1157.3,243.1 1157.5,243.5 1157.8,242.6 1158.0,244.1 1158.3,243.8 1158.5,243.9 1158.8,243.0 1159.0,242.9 1159.3,244.4 1159.5,243.7 1159.8,243.5 1160.0,243.8 1160.3,244.0 1160.5,244.7 1160.8,243.9 1161.0,244.4 1161.3,243.4 1161.5,245.2 1161.8,244.4 1162.0,244.3 1162.3,244.1 1162.5,244.2 1162.8,244.8 1163.0,243.5 1163.3,245.6 1163.5,244.5 1163.8,245.6 1164.0,244.0 1164.3,243.6 1164.5,243.9 1164.8,244.7 1165.0,244.9 1165.3,244.9 1165.5,245.9 1165.8,244.5 1166.0,243.8 1166.3,244.4 1166.5,244.0 1166.8,244.7 1167.0,244.6 1167.3,244.3 1167.5,244.5 1167.8,244.8 1168.0,244.0 1168.3,245.2 1168.5,243.9 1168.8,244.8 1169.0,243.3 1169.3,244.5 1169.5,247.9 1169.8,252.8 1170.0,235.1 1170.3,241.6 1170.5,238.0 1170.8,254.0 1171.0,240.6 1171.3,243.4 1171.5,241.5 1171.8,237.5 1172.0,253.1 1172.3,243.0 1172.5,239.5 1172.8,252.6 1173.0,239.5 1173.3,244.0 1173.5,229.3 1173.8,236.7 1174.0,253.2 1174.3,246.5 1174.5,242.6 1174.8,234.7 1175.0,243.6 1175.3,243.7 1175.5,244.8 1175.8,241.8 1176.0,238.8 1176.3,250.2 1176.5,240.4 1176.8,243.0 1177.0,228.4 1177.3,243.4 1177.5,242.1 1177.8,240.3 1178.0,250.5 1178.3,241.4 1178.5,248.4 1178.8,246.3 1179.0,245.8 1179.3,239.2 1179.5,245.8 1179.8,249.0 1180.0,245.8 1180.3,250.6 1180.5,238.8 1180.8,235.4 1181.0,244.0 1181.3,245.7 1181.5,241.2 1181.8,243.6 1182.0,239.4 1182.3,241.6 1182.5,243.3 1182.8,242.1 1183.0,247.6 1183.3,244.8 1183.5,240.9 1183.8,238.7 1184.0,246.5 1184.3,236.9 1184.5,240.0 1184.8,243.0 1185.0,238.5 1185.3,242.1 1185.5,246.8 1185.8,245.3 1186.0,241.7 1186.3,243.7 1186.5,243.8 1186.8,246.5 1187.0,241.5 1187.3,240.8 1187.5,243.2 1187.8,243.4 1188.0,238.1 1188.3,238.2 1188.5,240.6 1188.8,239.7 1189.0,241.5 1189.3,243.8 1189.5,239.0 1189.8,241.8 1190.0,242.1 1190.3,240.6 1190.5,244.9 1190.8,243.4 1191.0,240.0 1191.3,244.1 1191.5,242.9 1191.8,245.1 1192.0,243.1 1192.3,244.9 1192.5,245.8 1192.8,241.7 1193.0,243.4 1193.3,243.3 1193.5,242.9 1193.8,243.8 1194.0,244.5 1194.3,243.7 1194.5,244.0 1194.8,243.3 1195.0,243.9 1195.3,243.9 1195.5,243.9 1195.8,244.3 1196.0,244.7 1196.3,245.2 1196.5,243.9 1196.8,242.8 1197.0,242.3 1197.3,243.3 1197.5,243.5 1197.8,245.7 1198.0,243.1 1198.3,241.4 1198.5,243.0 1198.8,242.0 1199.0,242.6 1199.3,242.2 1199.5,243.0 1199.8,244.1 1200.0,243.7 1200.3,242.8 1200.5,244.1 1200.8,243.0 1201.0,243.0 1201.3,240.5 1201.5,241.5 1201.8,241.9 1202.0,241.8 1202.3,241.6 1202.5,241.5 1202.8,241.3 1203.0,242.6 1203.3,241.0 1203.5,241.2 1203.8,242.2 1204.0,243.4 1204.3,242.6 1204.5,240.9 1204.8,242.0 1205.0,241.8 1205.3,242.7 1205.5,240.2 1205.8,241.8 1206.0,240.8 1206.3,239.8 1206.5,242.5 1206.8,242.0 1207.0,241.6 1207.3,240.6 1207.5,242.1 1207.8,241.6 1208.0,241.2 1208.3,241.1 1208.5,241.0 1208.8,241.9 1209.0,242.1 1209.3,240.7 1209.5,241.3 1209.8,240.6 1210.0,241.4 1210.3,240.8 1210.5,242.2 1210.8,240.8 1211.0,241.9 1211.3,241.5 1211.5,241.1 1211.8,240.9 1212.0,243.0 1212.3,241.0 1212.5,241.9 1212.8,240.9 1213.0,241.4 1213.3,240.5 1213.5,242.5 1213.8,242.4 1214.0,242.1 1214.3,242.8 1214.5,243.2 1214.8,241.5 1215.0,243.2 1215.3,242.2" fill="none" stroke="#1f4f8a" stroke-width="0.8" stroke-linejoin="round"/><rect x="927" y="173.5" width="288.5" height="81.5" fill="none" stroke="#7a7a7a" stroke-width="1.3"/><line x1="927" y1="200.8" x2="1215.5" y2="200.8" stroke="#8e8e8e" stroke-width="2"/><line x1="927" y1="227.8" x2="1215.5" y2="227.8" stroke="#8e8e8e" stroke-width="2"/><text x="923.8" y="175.8" font-family="Liberation Sans" font-size="5.2" fill="#333" text-anchor="end" xml:space="preserve">2.8</text><rect x="925.8" y="173.4" width="1.4" height="1.2" fill="#6060ff"/><text x="923.8" y="181.9" font-family="Liberation Sans" font-size="5.2" fill="#333" text-anchor="end" xml:space="preserve">1.4</text><rect x="925.8" y="179.5" width="1.4" height="1.2" fill="#6060ff"/><text x="923.8" y="188.5" font-family="Liberation Sans" font-size="5.2" fill="#333" text-anchor="end" xml:space="preserve">0.0</text><rect x="925.8" y="186.1" width="1.4" height="1.2" fill="#6060ff"/><text x="923.8" y="195.4" font-family="Liberation Sans" font-size="5.2" fill="#333" text-anchor="end" xml:space="preserve">-1.4</text><rect x="925.8" y="193" width="1.4" height="1.2" fill="#6060ff"/><text x="923.8" y="200" font-family="Liberation Sans" font-size="5.2" fill="#333" text-anchor="end" xml:space="preserve">-2.8</text><rect x="925.8" y="197.6" width="1.4" height="1.2" fill="#6060ff"/><text x="923.8" y="204" font-family="Liberation Sans" font-size="5.2" fill="#333" text-anchor="end" xml:space="preserve">3.0</text><rect x="925.8" y="201.6" width="1.4" height="1.2" fill="#6060ff"/><text x="923.8" y="209.5" font-family="Liberation Sans" font-size="5.2" fill="#333" text-anchor="end" xml:space="preserve">1.5</text><rect x="925.8" y="207.1" width="1.4" height="1.2" fill="#6060ff"/><text x="923.8" y="216.1" font-family="Liberation Sans" font-size="5.2" fill="#333" text-anchor="end" xml:space="preserve">0.0</text><rect x="925.8" y="213.7" width="1.4" height="1.2" fill="#6060ff"/><text x="923.8" y="222.8" font-family="Liberation Sans" font-size="5.2" fill="#333" text-anchor="end" xml:space="preserve">-1.5</text><rect x="925.8" y="220.4" width="1.4" height="1.2" fill="#6060ff"/><text x="923.8" y="226.8" font-family="Liberation Sans" font-size="5.2" fill="#333" text-anchor="end" xml:space="preserve">-3.0</text><rect x="925.8" y="224.4" width="1.4" height="1.2" fill="#6060ff"/><text x="923.8" y="231.6" font-family="Liberation Sans" font-size="5.2" fill="#333" text-anchor="end" xml:space="preserve">2.</text><rect x="925.8" y="229.2" width="1.4" height="1.2" fill="#6060ff"/><text x="923.8" y="236.3" font-family="Liberation Sans" font-size="5.2" fill="#333" text-anchor="end" xml:space="preserve">1.</text><rect x="925.8" y="233.9" width="1.4" height="1.2" fill="#6060ff"/><text x="923.8" y="243.3" font-family="Liberation Sans" font-size="5.2" fill="#333" text-anchor="end" xml:space="preserve">0.</text><rect x="925.8" y="240.9" width="1.4" height="1.2" fill="#6060ff"/><text x="923.8" y="249.3" font-family="Liberation Sans" font-size="5.2" fill="#333" text-anchor="end" xml:space="preserve">-1.</text><rect x="925.8" y="246.9" width="1.4" height="1.2" fill="#6060ff"/><text x="923.8" y="255" font-family="Liberation Sans" font-size="5.2" fill="#333" text-anchor="end" xml:space="preserve">-2.</text><rect x="925.8" y="252.6" width="1.4" height="1.2" fill="#6060ff"/><text x="928.8" y="262.2" font-family="Liberation Sans" font-size="5.2" fill="#333" text-anchor="middle" xml:space="preserve">0</text><text x="985.8" y="262.2" font-family="Liberation Sans" font-size="5.2" fill="#333" text-anchor="middle" xml:space="preserve">0.05</text><text x="1042.8" y="262.2" font-family="Liberation Sans" font-size="5.2" fill="#333" text-anchor="middle" xml:space="preserve">0.1</text><text x="1099.8" y="262.2" font-family="Liberation Sans" font-size="5.2" fill="#333" text-anchor="middle" xml:space="preserve">0.15</text><text x="1156.8" y="262.2" font-family="Liberation Sans" font-size="5.2" fill="#333" text-anchor="middle" xml:space="preserve">0.2</text><text x="1213.8" y="262.2" font-family="Liberation Sans" font-size="5.2" fill="#333" text-anchor="middle" xml:space="preserve">0.25</text><rect x="1216.5" y="178.5" width="6.5" height="17.2" fill="#ffff00" stroke="#333" stroke-width="1"/><text x="1217.85" y="187.1" font-family="Liberation Sans" font-size="5.2" fill="#2828c8" text-anchor="middle" transform="rotate(90 1217.85 187.1)" xml:space="preserve">Axial</text><rect x="1216.5" y="204.2" width="6.5" height="20.7" fill="#ffffff" stroke="#555" stroke-width="1"/><text x="1217.85" y="214.55" font-family="Liberation Sans" font-size="5.2" fill="#3c3cf0" text-anchor="middle" transform="rotate(90 1217.85 214.55)" xml:space="preserve">Radial</text><rect x="1216.5" y="228.9" width="6.5" height="28.2" fill="#ffffff" stroke="#555" stroke-width="1"/><text x="1217.85" y="243" font-family="Liberation Sans" font-size="5.2" fill="#3c3cf0" text-anchor="middle" transform="rotate(90 1217.85 243)" xml:space="preserve">Tangential</text><rect x="904.7" y="265.2" width="29.2" height="5.5" fill="#e2e2e2" stroke="#4a4a4a" stroke-width="1" rx="0.7"/><line x1="905.4" y1="266.2" x2="933.2" y2="266.2" stroke="#f8f8f8" stroke-width="0.8"/><text x="919.3" y="269.6" font-family="Liberation Sans" font-size="5.4" fill="#333" text-anchor="middle" xml:space="preserve">Linear</text><rect x="1182.2" y="265.2" width="32.8" height="5.5" fill="#e2e2e2" stroke="#4a4a4a" stroke-width="1" rx="0.7"/><line x1="1182.9" y1="266.2" x2="1214.3" y2="266.2" stroke="#f8f8f8" stroke-width="0.8"/><text x="1198.6" y="269.6" font-family="Liberation Sans" font-size="5.4" fill="#333" text-anchor="middle" xml:space="preserve">Seconds</text><text x="908" y="215.5" font-family="Liberation Sans" font-size="8" fill="#3c3cff" text-anchor="middle" xml:space="preserve">g</text><rect x="594.5" y="280" width="289.5" height="81.5" fill="#ffffff"/><line x1="642" y1="281" x2="642" y2="360.5" stroke="#bdbdbd" stroke-width="0.7" stroke-dasharray="1.2,2.2"/><line x1="688.8" y1="281" x2="688.8" y2="360.5" stroke="#bdbdbd" stroke-width="0.7" stroke-dasharray="1.2,2.2"/><line x1="735.6" y1="281" x2="735.6" y2="360.5" stroke="#bdbdbd" stroke-width="0.7" stroke-dasharray="1.2,2.2"/><line x1="782.4" y1="281" x2="782.4" y2="360.5" stroke="#bdbdbd" stroke-width="0.7" stroke-dasharray="1.2,2.2"/><line x1="829.2" y1="281" x2="829.2" y2="360.5" stroke="#bdbdbd" stroke-width="0.7" stroke-dasharray="1.2,2.2"/><line x1="876" y1="281" x2="876" y2="360.5" stroke="#bdbdbd" stroke-width="0.7" stroke-dasharray="1.2,2.2"/><line x1="595.5" y1="307.8" x2="883" y2="307.8" stroke="#bdbdbd" stroke-width="0.7" stroke-dasharray="1.2,2.2"/><line x1="595.5" y1="334.1" x2="883" y2="334.1" stroke="#bdbdbd" stroke-width="0.7" stroke-dasharray="1.2,2.2"/><polyline points="595.0,322.5 595.3,328.6 595.7,337.0 596.0,338.4 596.3,334.2 596.7,338.9 597.0,334.0 597.3,326.2 597.6,325.7 598.0,333.0 598.3,338.1 598.6,333.9 599.0,333.9 599.3,339.4 599.6,342.2 600.0,325.0 600.3,324.8 600.6,328.7 600.9,328.9 601.3,332.2 601.6,331.2 601.9,339.0 602.3,339.1 602.6,334.1 602.9,340.9 603.3,330.9 603.6,328.8 603.9,329.0 604.2,329.0 604.6,340.8 604.9,339.9 605.2,340.7 605.6,336.4 605.9,327.7 606.2,327.0 606.6,329.5 606.9,326.7 607.2,333.4 607.5,336.4 607.9,338.8 608.2,345.1 608.5,340.1 608.9,332.1 609.2,327.4 609.5,328.4 609.9,328.5 610.2,326.7 610.5,338.7 610.8,339.7 611.2,344.7 611.5,334.6 611.8,339.6 612.2,333.2 612.5,332.4 612.8,330.5 613.2,343.2 613.5,331.6 613.8,345.0 614.1,340.2 614.5,334.5 614.8,342.2 615.1,330.7 615.5,334.7 615.8,334.1 616.1,330.7 616.5,340.4 616.8,345.4 617.1,335.9 617.4,337.8 617.8,339.0 618.1,338.2 618.4,331.4 618.8,337.0 619.1,337.3 619.4,342.5 619.8,343.5 620.1,344.3 620.4,346.3 620.7,343.6 621.1,335.9 621.4,330.7 621.7,333.7 622.1,330.8 622.4,344.1 622.7,340.2 623.1,343.1 623.4,347.5 623.7,342.7 624.0,332.7 624.4,336.8 624.7,338.8 625.0,335.8 625.4,341.1 625.7,342.4 626.0,346.1 626.4,348.2 626.7,340.9 627.0,338.8 627.3,340.0 627.7,338.5 628.0,339.3 628.3,336.2 628.7,347.9 629.0,347.3 629.3,350.0 629.7,343.8 630.0,338.5 630.3,333.0 630.6,337.2 631.0,334.3 631.3,343.3 631.6,348.0 632.0,343.5 632.3,343.0 632.6,344.1 633.0,340.6 633.3,334.0 633.6,334.2 633.9,343.0 634.3,340.4 634.6,345.0 634.9,345.9 635.3,350.8 635.6,345.5 635.9,340.6 636.3,346.7 636.6,333.8 636.9,343.1 637.2,342.2 637.6,337.8 637.9,344.2 638.2,350.3 638.6,340.6 638.9,346.3 639.2,337.9 639.6,336.3 639.9,334.8 640.2,347.3 640.5,340.7 640.9,348.1 641.2,353.0 641.5,345.5 641.9,348.9 642.2,339.3 642.5,335.4 642.9,336.3 643.2,347.6 643.5,346.7 643.8,350.1 644.2,347.6 644.5,342.5 644.8,341.0 645.2,341.9 645.5,336.1 645.8,336.3 646.2,348.4 646.5,348.4 646.8,349.0 647.1,351.2 647.5,340.9 647.8,343.3 648.1,344.8 648.5,338.7 648.8,342.8 649.1,348.1 649.5,350.6 649.8,351.7 650.1,356.3 650.4,348.4 650.8,347.6 651.1,346.3 651.4,340.8 651.8,342.2 652.1,345.3 652.4,349.8 652.8,347.5 653.1,353.7 653.4,351.5 653.7,345.4 654.1,346.9 654.4,339.0 654.7,342.4 655.1,344.8 655.4,351.2 655.7,351.7 656.1,353.8 656.4,350.7 656.7,351.4 657.0,344.4 657.4,345.8 657.7,346.6 658.0,342.0 658.4,355.2 658.7,356.1 659.0,358.4 659.4,350.8 659.7,349.1 660.0,345.0 660.3,344.5 660.7,342.9 661.0,352.3 661.3,351.6 661.7,355.2 662.0,351.7 662.3,344.0 662.7,355.8 663.0,348.4 663.3,344.9 663.6,342.4 664.0,348.1 664.3,356.9 664.6,354.0 665.0,360.4 665.3,351.4 665.6,351.6 666.0,344.8 666.3,345.4 666.6,340.7 666.9,354.7 667.3,353.9 667.6,356.0 667.9,357.1 668.3,356.2 668.6,352.7 668.9,347.5 669.3,345.6 669.6,348.7 669.9,347.2 670.2,349.4 670.6,353.9 670.9,355.6 671.2,359.8 671.6,358.4 671.9,351.6 672.2,343.7 672.6,349.4 672.9,349.1 673.2,360.1 673.5,359.5 673.9,356.8 674.2,353.5 674.5,353.2 674.9,353.7 675.2,348.8 675.5,345.6 675.9,349.1 676.2,351.7 676.5,356.2 676.8,358.9 677.2,360.2 677.5,357.8 677.8,351.8 678.2,350.4 678.5,346.0 678.8,356.3 679.2,354.7 679.5,355.0 679.8,360.9 680.1,355.5 680.5,355.9 680.8,358.2 681.1,350.6 681.5,350.3 681.8,353.2 682.1,354.4 682.5,356.9 682.8,358.2 683.1,360.9 683.4,358.4 683.8,356.9 684.1,350.3 684.4,345.7 684.8,346.0 685.1,349.5 685.4,360.0 685.8,360.9 686.1,355.7 686.4,355.6 686.7,354.2 687.1,351.3 687.4,349.5 687.7,350.1 688.1,352.1 688.4,358.5 688.7,357.2 689.1,358.4 689.4,356.9 689.7,352.7 690.0,351.7 690.4,352.1 690.7,353.3 691.0,358.3 691.4,358.4 691.7,359.0 692.0,360.9 692.4,359.6 692.7,353.0 693.0,351.9 693.3,349.6 693.7,350.4 694.0,353.7 694.3,355.5 694.7,357.6 695.0,360.9 695.3,356.3 695.7,354.4 696.0,351.9 696.3,352.2 696.6,351.1 697.0,351.3 697.3,357.9 697.6,357.6 698.0,360.9 698.3,358.4 698.6,353.1 699.0,351.1 699.3,350.9 699.6,353.7 699.9,352.8 700.3,359.6 700.6,355.8 700.9,357.9 701.3,358.9 701.6,356.8 701.9,352.5 702.3,351.7 702.6,350.9 702.9,358.4 703.2,358.9 703.6,359.4 703.9,360.9 704.2,360.9 704.6,357.1 704.9,354.6 705.2,352.4 705.6,355.9 705.9,351.9 706.2,357.8 706.5,360.9 706.9,359.8 707.2,359.3 707.5,357.6 707.9,358.0 708.2,354.8 708.5,357.8 708.9,352.7 709.2,354.6 709.5,360.8 709.8,359.5 710.2,360.7 710.5,356.4 710.8,354.3 711.2,357.5 711.5,355.9 711.8,359.6 712.2,359.5 712.5,360.9 712.8,360.9 713.1,360.9 713.5,359.9 713.8,356.6 714.1,354.0 714.5,357.1 714.8,354.2 715.1,360.9 715.5,360.9 715.8,360.9 716.1,360.9 716.4,357.9 716.8,352.3 717.1,356.4 717.4,357.3 717.8,354.6 718.1,358.4 718.4,360.9 718.8,360.9 719.1,360.4 719.4,360.9 719.7,359.7 720.1,355.8 720.4,359.8 720.7,359.1 721.1,360.9 721.4,360.9 721.7,360.9 722.1,360.9 722.4,359.6 722.7,360.9 723.0,356.4 723.4,354.9 723.7,357.1 724.0,360.2 724.4,360.9 724.7,360.9 725.0,360.9 725.4,360.9 725.7,360.9 726.0,357.0 726.3,359.5 726.7,355.0 727.0,357.5 727.3,360.9 727.7,360.9 728.0,360.9 728.3,360.9 728.7,360.3 729.0,359.6 729.3,357.4 729.6,359.3 730.0,355.8 730.3,360.4 730.6,360.9 731.0,360.9 731.3,360.9 731.6,360.9 732.0,360.9 732.3,358.3 732.6,360.9 732.9,360.9 733.3,360.9 733.6,360.9 733.9,360.9 734.3,360.9 734.6,360.9 734.9,360.6 735.3,359.6 735.6,358.5 735.9,359.9 736.2,360.9 736.6,360.9 736.9,360.9 737.2,360.9 737.6,359.8 737.9,360.8 738.2,358.8 738.6,360.9 738.9,359.1 739.2,360.9 739.5,360.9 739.9,360.9 740.2,360.9 740.5,360.9 740.9,360.1 741.2,359.5 741.5,360.4 741.9,360.9 742.2,360.9 742.5,360.9 742.8,360.9 743.2,360.9 743.5,360.9 743.8,360.9 744.2,360.9 744.5,360.1 744.8,360.9 745.2,360.9 745.5,360.9 745.8,360.9 746.1,360.9 746.5,360.9 746.8,360.1 747.1,360.9 747.5,360.5 747.8,360.9 748.1,360.9 748.5,360.9 748.8,360.9 749.1,360.9 749.4,360.9 749.8,360.9 750.1,360.6 750.4,359.7 750.8,360.9 751.1,360.9 751.4,360.9 751.8,360.9 752.1,360.9 752.4,360.9 752.7,360.9 753.1,360.9 753.4,360.9 753.7,360.9 754.1,360.9 754.4,360.9 754.7,360.9 755.1,360.9 755.4,360.9 755.7,360.8 756.0,360.9 756.4,360.9 756.7,360.9 757.0,360.9 757.4,360.9 757.7,360.9 758.0,360.9 758.4,360.9 758.7,360.9 759.0,360.9 759.3,360.9 759.7,360.9 760.0,360.9 760.3,360.9 760.7,360.9 761.0,360.9 761.3,360.9 761.7,360.9 762.0,360.9 762.3,360.9 762.6,360.9 763.0,360.9 763.3,360.9 763.6,360.9 764.0,360.9 764.3,360.9 764.6,360.9 765.0,360.9 765.3,360.9 765.6,360.9 765.9,360.9 766.3,360.9 766.6,360.9 766.9,360.9 767.3,360.9 767.6,360.9 767.9,360.9 768.3,360.9 768.6,360.9 768.9,360.9 769.2,360.9 769.6,360.9 769.9,360.9 770.2,360.9 770.6,360.9 770.9,360.9 771.2,360.9 771.6,360.9 771.9,360.9 772.2,360.9 772.5,360.9 772.9,360.9 773.2,360.9 773.5,360.9 773.9,360.9 774.2,360.9 774.5,360.9 774.9,360.9 775.2,360.9 775.5,360.9 775.8,360.9 776.2,360.9 776.5,360.9 776.8,360.9 777.2,360.9 777.5,360.9 777.8,360.9 778.2,360.9 778.5,360.9 778.8,360.9 779.1,360.9 779.5,360.9 779.8,360.9 780.1,360.9 780.5,360.9 780.8,360.9 781.1,360.9 781.5,360.9 781.8,360.9 782.1,360.9 782.4,360.9 782.8,360.9 783.1,360.9 783.4,360.9 783.8,360.9 784.1,360.9 784.4,360.9 784.8,360.9 785.1,360.9 785.4,360.9 785.7,360.9 786.1,360.9 786.4,360.9 786.7,360.9 787.1,360.9 787.4,360.9 787.7,360.9 788.1,360.9 788.4,360.9 788.7,360.9 789.0,360.9 789.4,360.9 789.7,360.9 790.0,360.9 790.4,360.9 790.7,360.9 791.0,360.9 791.4,360.9 791.7,360.9 792.0,360.9 792.3,360.9 792.7,360.9 793.0,360.9 793.3,360.9 793.7,360.9 794.0,360.9 794.3,360.9 794.7,360.9 795.0,360.9 795.3,360.9 795.6,360.9 796.0,360.9 796.3,360.9 796.6,360.9 797.0,360.9 797.3,360.9 797.6,360.9 798.0,360.9 798.3,360.9 798.6,360.9 798.9,360.9 799.3,360.9 799.6,360.9 799.9,360.9 800.3,360.9 800.6,360.8 800.9,360.9 801.3,360.9 801.6,360.9 801.9,360.9 802.2,360.9 802.6,360.9 802.9,360.9 803.2,360.9 803.6,360.9 803.9,360.9 804.2,360.9 804.6,360.9 804.9,360.9 805.2,360.9 805.5,360.9 805.9,360.9 806.2,360.9 806.5,360.9 806.9,360.9 807.2,360.9 807.5,360.9 807.9,360.9 808.2,360.9 808.5,360.9 808.8,360.9 809.2,360.9 809.5,360.9 809.8,360.9 810.2,360.9 810.5,360.9 810.8,360.9 811.2,360.9 811.5,360.9 811.8,360.9 812.1,360.9 812.5,360.9 812.8,360.9 813.1,360.9 813.5,360.9 813.8,360.9 814.1,360.9 814.5,360.9 814.8,360.9 815.1,360.9 815.4,360.9 815.8,360.9 816.1,360.9 816.4,360.9 816.8,360.9 817.1,360.9 817.4,360.9 817.8,360.9 818.1,360.9 818.4,360.9 818.7,360.9 819.1,360.9 819.4,360.9 819.7,360.9 820.1,360.9 820.4,360.9 820.7,360.9 821.1,360.9 821.4,360.9 821.7,360.9 822.0,360.9 822.4,360.9 822.7,360.9 823.0,360.9 823.4,360.9 823.7,360.9 824.0,360.9 824.4,360.9 824.7,360.9 825.0,360.9 825.3,360.9 825.7,360.9 826.0,360.9 826.3,360.9 826.7,360.9 827.0,360.9 827.3,360.9 827.7,360.9 828.0,360.9 828.3,360.9 828.6,360.9 829.0,360.9 829.3,360.9 829.6,360.9 830.0,360.9 830.3,360.9 830.6,360.9 831.0,360.9 831.3,360.9 831.6,360.9 831.9,360.9 832.3,360.9 832.6,360.9 832.9,360.9 833.3,360.9 833.6,360.9 833.9,360.9 834.3,360.9 834.6,360.9 834.9,360.9 835.2,360.9 835.6,360.9 835.9,360.9 836.2,360.9 836.6,360.9 836.9,360.9 837.2,360.9 837.6,360.9 837.9,360.9 838.2,360.9 838.5,360.9 838.9,360.9 839.2,360.9 839.5,360.9 839.9,360.9 840.2,360.9 840.5,360.9 840.9,360.9 841.2,360.9 841.5,360.9 841.8,360.9 842.2,360.9 842.5,360.9 842.8,360.9 843.2,360.9 843.5,360.9 843.8,360.9 844.2,360.9 844.5,360.9 844.8,360.9 845.1,360.9 845.5,360.9 845.8,360.9 846.1,360.9 846.5,360.9 846.8,360.9 847.1,360.9 847.5,360.9 847.8,360.9 848.1,360.9 848.4,360.9 848.8,360.9 849.1,360.9 849.4,360.9 849.8,360.9 850.1,360.9 850.4,360.9 850.8,360.9 851.1,360.9 851.4,360.9 851.7,360.9 852.1,360.9 852.4,360.9 852.7,360.9 853.1,360.9 853.4,360.9 853.7,360.9 854.1,360.9 854.4,360.9 854.7,360.9 855.0,360.9 855.4,360.9 855.7,360.9 856.0,360.9 856.4,360.9 856.7,360.9 857.0,360.9 857.4,360.9 857.7,360.9 858.0,360.9 858.3,360.9 858.7,360.9 859.0,360.9 859.3,360.9 859.7,360.9 860.0,360.9 860.3,360.9 860.7,360.9 861.0,360.9 861.3,360.9 861.6,360.9 862.0,360.9 862.3,360.9 862.6,360.9 863.0,360.9 863.3,360.9 863.6,360.9 864.0,360.9 864.3,360.9 864.6,360.9 864.9,360.9 865.3,360.9 865.6,360.9 865.9,360.9 866.3,360.9 866.6,360.9 866.9,360.9 867.3,360.9 867.6,360.9 867.9,360.9 868.2,360.9 868.6,360.9 868.9,360.9 869.2,360.9 869.6,360.9 869.9,360.9 870.2,360.9 870.6,360.9 870.9,360.9 871.2,360.9 871.5,360.9 871.9,360.9 872.2,360.9 872.5,360.9 872.9,360.9 873.2,360.9 873.5,360.9 873.9,360.9 874.2,360.9 874.5,360.9 874.8,360.9 875.2,360.9 875.5,360.9 875.8,360.9 876.2,360.9 876.5,360.9 876.8,360.9 877.2,360.9 877.5,360.9 877.8,360.9 878.1,360.9 878.5,360.9 878.8,360.9 879.1,360.9 879.5,360.9 879.8,360.9 880.1,360.9 880.5,360.9 880.8,360.9 881.1,360.9 881.4,360.9 881.8,360.9 882.1,360.9 882.4,360.9 882.8,360.9 883.1,360.9 883.4,360.9" fill="none" stroke="#245592" stroke-width="0.8" stroke-linejoin="round"/><line x1="604.5" y1="298.3" x2="604.5" y2="336.37" stroke="#86a4ca" stroke-width="1"/><line x1="604.5" y1="313.53" x2="604.5" y2="336.37" stroke="#1f5090" stroke-width="1"/><line x1="605.5" y1="317.33" x2="605.5" y2="336.37" stroke="#b5c7df" stroke-width="1"/><line x1="605.5" y1="326.85" x2="605.5" y2="336.37" stroke="#5a82b4" stroke-width="1"/><line x1="613.5" y1="299" x2="613.5" y2="339.41" stroke="#86a4ca" stroke-width="1"/><line x1="613.5" y1="315.17" x2="613.5" y2="339.41" stroke="#1f5090" stroke-width="1"/><line x1="614.5" y1="319.21" x2="614.5" y2="339.41" stroke="#b5c7df" stroke-width="1"/><line x1="614.5" y1="329.31" x2="614.5" y2="339.41" stroke="#5a82b4" stroke-width="1"/><line x1="622.5" y1="306.7" x2="622.5" y2="342.46" stroke="#86a4ca" stroke-width="1"/><line x1="622.5" y1="321" x2="622.5" y2="342.46" stroke="#1f5090" stroke-width="1"/><line x1="623.5" y1="324.58" x2="623.5" y2="342.46" stroke="#b5c7df" stroke-width="1"/><line x1="623.5" y1="333.52" x2="623.5" y2="342.46" stroke="#5a82b4" stroke-width="1"/><line x1="632.5" y1="305.7" x2="632.5" y2="345.51" stroke="#86a4ca" stroke-width="1"/><line x1="632.5" y1="321.62" x2="632.5" y2="345.51" stroke="#1f5090" stroke-width="1"/><line x1="633.5" y1="325.61" x2="633.5" y2="345.51" stroke="#b5c7df" stroke-width="1"/><line x1="633.5" y1="335.56" x2="633.5" y2="345.51" stroke="#5a82b4" stroke-width="1"/><line x1="641.5" y1="310.6" x2="641.5" y2="348.46" stroke="#86a4ca" stroke-width="1"/><line x1="641.5" y1="325.74" x2="641.5" y2="348.46" stroke="#1f5090" stroke-width="1"/><line x1="642.5" y1="329.53" x2="642.5" y2="348.46" stroke="#b5c7df" stroke-width="1"/><line x1="642.5" y1="338.99" x2="642.5" y2="348.46" stroke="#5a82b4" stroke-width="1"/><line x1="651.5" y1="315.1" x2="651.5" y2="350.96" stroke="#86a4ca" stroke-width="1"/><line x1="651.5" y1="329.44" x2="651.5" y2="350.96" stroke="#1f5090" stroke-width="1"/><line x1="652.5" y1="333.03" x2="652.5" y2="350.96" stroke="#b5c7df" stroke-width="1"/><line x1="652.5" y1="342" x2="652.5" y2="350.96" stroke="#5a82b4" stroke-width="1"/><line x1="660.5" y1="318.6" x2="660.5" y2="353.46" stroke="#86a4ca" stroke-width="1"/><line x1="660.5" y1="332.54" x2="660.5" y2="353.46" stroke="#1f5090" stroke-width="1"/><line x1="661.5" y1="336.03" x2="661.5" y2="353.46" stroke="#b5c7df" stroke-width="1"/><line x1="661.5" y1="344.75" x2="661.5" y2="353.46" stroke="#5a82b4" stroke-width="1"/><line x1="669.5" y1="319.3" x2="669.5" y2="355.96" stroke="#86a4ca" stroke-width="1"/><line x1="669.5" y1="333.97" x2="669.5" y2="355.96" stroke="#1f5090" stroke-width="1"/><line x1="670.5" y1="337.63" x2="670.5" y2="355.96" stroke="#b5c7df" stroke-width="1"/><line x1="670.5" y1="346.8" x2="670.5" y2="355.96" stroke="#5a82b4" stroke-width="1"/><line x1="679.5" y1="322" x2="679.5" y2="356.62" stroke="#86a4ca" stroke-width="1"/><line x1="679.5" y1="335.85" x2="679.5" y2="356.62" stroke="#1f5090" stroke-width="1"/><line x1="680.5" y1="339.31" x2="680.5" y2="356.62" stroke="#b5c7df" stroke-width="1"/><line x1="680.5" y1="347.96" x2="680.5" y2="356.62" stroke="#5a82b4" stroke-width="1"/><line x1="688.5" y1="324.5" x2="688.5" y2="357.24" stroke="#86a4ca" stroke-width="1"/><line x1="688.5" y1="337.6" x2="688.5" y2="357.24" stroke="#1f5090" stroke-width="1"/><line x1="689.5" y1="340.87" x2="689.5" y2="357.24" stroke="#b5c7df" stroke-width="1"/><line x1="689.5" y1="349.06" x2="689.5" y2="357.24" stroke="#5a82b4" stroke-width="1"/><line x1="698.5" y1="325" x2="698.5" y2="357.87" stroke="#86a4ca" stroke-width="1"/><line x1="698.5" y1="338.15" x2="698.5" y2="357.87" stroke="#1f5090" stroke-width="1"/><line x1="699.5" y1="341.43" x2="699.5" y2="357.87" stroke="#b5c7df" stroke-width="1"/><line x1="699.5" y1="349.65" x2="699.5" y2="357.87" stroke="#5a82b4" stroke-width="1"/><line x1="707.5" y1="327" x2="707.5" y2="358.63" stroke="#86a4ca" stroke-width="1"/><line x1="707.5" y1="339.65" x2="707.5" y2="358.63" stroke="#1f5090" stroke-width="1"/><line x1="708.5" y1="342.82" x2="708.5" y2="358.63" stroke="#b5c7df" stroke-width="1"/><line x1="708.5" y1="350.72" x2="708.5" y2="358.63" stroke="#5a82b4" stroke-width="1"/><line x1="716.5" y1="329" x2="716.5" y2="359.44" stroke="#86a4ca" stroke-width="1"/><line x1="716.5" y1="341.17" x2="716.5" y2="359.44" stroke="#1f5090" stroke-width="1"/><line x1="717.5" y1="344.22" x2="717.5" y2="359.44" stroke="#b5c7df" stroke-width="1"/><line x1="717.5" y1="351.83" x2="717.5" y2="359.44" stroke="#5a82b4" stroke-width="1"/><line x1="726.5" y1="331" x2="726.5" y2="360.24" stroke="#86a4ca" stroke-width="1"/><line x1="726.5" y1="342.7" x2="726.5" y2="360.24" stroke="#1f5090" stroke-width="1"/><line x1="727.5" y1="345.62" x2="727.5" y2="360.24" stroke="#b5c7df" stroke-width="1"/><line x1="727.5" y1="352.93" x2="727.5" y2="360.24" stroke="#5a82b4" stroke-width="1"/><line x1="735.5" y1="333.5" x2="735.5" y2="361" stroke="#86a4ca" stroke-width="1"/><line x1="735.5" y1="344.5" x2="735.5" y2="361" stroke="#1f5090" stroke-width="1"/><line x1="736.5" y1="347.25" x2="736.5" y2="361" stroke="#b5c7df" stroke-width="1"/><line x1="736.5" y1="354.12" x2="736.5" y2="361" stroke="#5a82b4" stroke-width="1"/><line x1="744.5" y1="333" x2="744.5" y2="361" stroke="#86a4ca" stroke-width="1"/><line x1="744.5" y1="344.2" x2="744.5" y2="361" stroke="#1f5090" stroke-width="1"/><line x1="745.5" y1="347" x2="745.5" y2="361" stroke="#b5c7df" stroke-width="1"/><line x1="745.5" y1="354" x2="745.5" y2="361" stroke="#5a82b4" stroke-width="1"/><line x1="754.5" y1="334.5" x2="754.5" y2="361" stroke="#86a4ca" stroke-width="1"/><line x1="754.5" y1="345.1" x2="754.5" y2="361" stroke="#1f5090" stroke-width="1"/><line x1="755.5" y1="347.75" x2="755.5" y2="361" stroke="#b5c7df" stroke-width="1"/><line x1="755.5" y1="354.38" x2="755.5" y2="361" stroke="#5a82b4" stroke-width="1"/><line x1="763.5" y1="336" x2="763.5" y2="361" stroke="#86a4ca" stroke-width="1"/><line x1="763.5" y1="346" x2="763.5" y2="361" stroke="#1f5090" stroke-width="1"/><line x1="764.5" y1="348.5" x2="764.5" y2="361" stroke="#b5c7df" stroke-width="1"/><line x1="764.5" y1="354.75" x2="764.5" y2="361" stroke="#5a82b4" stroke-width="1"/><line x1="773.5" y1="336.5" x2="773.5" y2="361" stroke="#86a4ca" stroke-width="1"/><line x1="773.5" y1="346.3" x2="773.5" y2="361" stroke="#1f5090" stroke-width="1"/><line x1="774.5" y1="348.75" x2="774.5" y2="361" stroke="#b5c7df" stroke-width="1"/><line x1="774.5" y1="354.88" x2="774.5" y2="361" stroke="#5a82b4" stroke-width="1"/><line x1="782.5" y1="336" x2="782.5" y2="361" stroke="#86a4ca" stroke-width="1"/><line x1="782.5" y1="346" x2="782.5" y2="361" stroke="#1f5090" stroke-width="1"/><line x1="783.5" y1="348.5" x2="783.5" y2="361" stroke="#b5c7df" stroke-width="1"/><line x1="783.5" y1="354.75" x2="783.5" y2="361" stroke="#5a82b4" stroke-width="1"/><line x1="791.5" y1="336" x2="791.5" y2="361" stroke="#86a4ca" stroke-width="1"/><line x1="791.5" y1="346" x2="791.5" y2="361" stroke="#1f5090" stroke-width="1"/><line x1="792.5" y1="348.5" x2="792.5" y2="361" stroke="#b5c7df" stroke-width="1"/><line x1="792.5" y1="354.75" x2="792.5" y2="361" stroke="#5a82b4" stroke-width="1"/><line x1="801.5" y1="336.5" x2="801.5" y2="361" stroke="#86a4ca" stroke-width="1"/><line x1="801.5" y1="346.3" x2="801.5" y2="361" stroke="#1f5090" stroke-width="1"/><line x1="802.5" y1="348.75" x2="802.5" y2="361" stroke="#b5c7df" stroke-width="1"/><line x1="802.5" y1="354.88" x2="802.5" y2="361" stroke="#5a82b4" stroke-width="1"/><line x1="810.5" y1="338" x2="810.5" y2="361" stroke="#86a4ca" stroke-width="1"/><line x1="810.5" y1="347.2" x2="810.5" y2="361" stroke="#1f5090" stroke-width="1"/><line x1="811.5" y1="349.5" x2="811.5" y2="361" stroke="#b5c7df" stroke-width="1"/><line x1="811.5" y1="355.25" x2="811.5" y2="361" stroke="#5a82b4" stroke-width="1"/><line x1="819.5" y1="337" x2="819.5" y2="361" stroke="#86a4ca" stroke-width="1"/><line x1="819.5" y1="346.6" x2="819.5" y2="361" stroke="#1f5090" stroke-width="1"/><line x1="820.5" y1="349" x2="820.5" y2="361" stroke="#b5c7df" stroke-width="1"/><line x1="820.5" y1="355" x2="820.5" y2="361" stroke="#5a82b4" stroke-width="1"/><line x1="829.5" y1="341.5" x2="829.5" y2="361" stroke="#86a4ca" stroke-width="1"/><line x1="829.5" y1="349.3" x2="829.5" y2="361" stroke="#1f5090" stroke-width="1"/><line x1="830.5" y1="351.25" x2="830.5" y2="361" stroke="#b5c7df" stroke-width="1"/><line x1="830.5" y1="356.12" x2="830.5" y2="361" stroke="#5a82b4" stroke-width="1"/><line x1="838.5" y1="345.5" x2="838.5" y2="361" stroke="#86a4ca" stroke-width="1"/><line x1="838.5" y1="351.7" x2="838.5" y2="361" stroke="#1f5090" stroke-width="1"/><line x1="839.5" y1="353.25" x2="839.5" y2="361" stroke="#b5c7df" stroke-width="1"/><line x1="839.5" y1="357.12" x2="839.5" y2="361" stroke="#5a82b4" stroke-width="1"/><line x1="848.5" y1="351.5" x2="848.5" y2="361" stroke="#86a4ca" stroke-width="1"/><line x1="848.5" y1="355.3" x2="848.5" y2="361" stroke="#1f5090" stroke-width="1"/><line x1="849.5" y1="356.25" x2="849.5" y2="361" stroke="#b5c7df" stroke-width="1"/><line x1="849.5" y1="358.62" x2="849.5" y2="361" stroke="#5a82b4" stroke-width="1"/><line x1="857.5" y1="356" x2="857.5" y2="361" stroke="#86a4ca" stroke-width="1"/><line x1="857.5" y1="358" x2="857.5" y2="361" stroke="#1f5090" stroke-width="1"/><line x1="858.5" y1="358.5" x2="858.5" y2="361" stroke="#b5c7df" stroke-width="1"/><line x1="858.5" y1="359.75" x2="858.5" y2="361" stroke="#5a82b4" stroke-width="1"/><line x1="866.5" y1="356" x2="866.5" y2="361" stroke="#86a4ca" stroke-width="1"/><line x1="866.5" y1="358" x2="866.5" y2="361" stroke="#1f5090" stroke-width="1"/><line x1="867.5" y1="358.5" x2="867.5" y2="361" stroke="#b5c7df" stroke-width="1"/><line x1="867.5" y1="359.75" x2="867.5" y2="361" stroke="#5a82b4" stroke-width="1"/><line x1="876.5" y1="358" x2="876.5" y2="361" stroke="#86a4ca" stroke-width="1"/><line x1="876.5" y1="359.2" x2="876.5" y2="361" stroke="#1f5090" stroke-width="1"/><line x1="877.5" y1="359.5" x2="877.5" y2="361" stroke="#b5c7df" stroke-width="1"/><line x1="877.5" y1="360.25" x2="877.5" y2="361" stroke="#5a82b4" stroke-width="1"/><rect x="594.5" y="280" width="289.5" height="81.5" fill="none" stroke="#7a7a7a" stroke-width="1.3"/><text x="591.3" y="283.3" font-family="Liberation Sans" font-size="5.2" fill="#333" text-anchor="end" xml:space="preserve">40.</text><rect x="593.3" y="280.9" width="1.4" height="1.2" fill="#6060ff"/><text x="591.3" y="309.6" font-family="Liberation Sans" font-size="5.2" fill="#333" text-anchor="end" xml:space="preserve">30.</text><rect x="593.3" y="307.2" width="1.4" height="1.2" fill="#6060ff"/><text x="591.3" y="335.9" font-family="Liberation Sans" font-size="5.2" fill="#333" text-anchor="end" xml:space="preserve">20.</text><rect x="593.3" y="333.5" width="1.4" height="1.2" fill="#6060ff"/><text x="591.3" y="362" font-family="Liberation Sans" font-size="5.2" fill="#333" text-anchor="end" xml:space="preserve">10.</text><rect x="593.3" y="359.6" width="1.4" height="1.2" fill="#6060ff"/><text x="595.2" y="369.3" font-family="Liberation Sans" font-size="5.2" fill="#333" text-anchor="middle" xml:space="preserve">0</text><text x="642" y="369.3" font-family="Liberation Sans" font-size="5.2" fill="#333" text-anchor="middle" xml:space="preserve">5</text><text x="688.8" y="369.3" font-family="Liberation Sans" font-size="5.2" fill="#333" text-anchor="middle" xml:space="preserve">10</text><text x="735.6" y="369.3" font-family="Liberation Sans" font-size="5.2" fill="#333" text-anchor="middle" xml:space="preserve">15</text><text x="782.4" y="369.3" font-family="Liberation Sans" font-size="5.2" fill="#333" text-anchor="middle" xml:space="preserve">20</text><text x="829.2" y="369.3" font-family="Liberation Sans" font-size="5.2" fill="#333" text-anchor="middle" xml:space="preserve">25</text><text x="876" y="369.3" font-family="Liberation Sans" font-size="5.2" fill="#333" text-anchor="middle" xml:space="preserve">30</text><rect x="885" y="311" width="6.5" height="20.5" fill="#ffff00" stroke="#333" stroke-width="1"/><text x="886.35" y="321.25" font-family="Liberation Sans" font-size="5.2" fill="#2828c8" text-anchor="middle" transform="rotate(90 886.35 321.25)" xml:space="preserve">Radial</text><rect x="573.5" y="372" width="30" height="5.5" fill="#e2e2e2" stroke="#4a4a4a" stroke-width="1" rx="0.7"/><line x1="574.2" y1="373" x2="602.8" y2="373" stroke="#f8f8f8" stroke-width="0.8"/><text x="588.5" y="376.4" font-family="Liberation Sans" font-size="5.4" fill="#333" text-anchor="middle" xml:space="preserve">dB</text><rect x="851.2" y="372" width="32.9" height="5.5" fill="#e2e2e2" stroke="#4a4a4a" stroke-width="1" rx="0.7"/><line x1="851.9" y1="373" x2="883.4" y2="373" stroke="#f8f8f8" stroke-width="0.8"/><text x="867.65" y="376.4" font-family="Liberation Sans" font-size="5.4" fill="#333" text-anchor="middle" xml:space="preserve">Orders</text><text x="579.3" y="323.8" font-family="Liberation Sans" font-size="7.6" fill="#3c3cff" text-anchor="middle" transform="rotate(-90 579.3 323.8)" textLength="94" lengthAdjust="spacingAndGlyphs" xml:space="preserve">dBmV (0 dB Ref 1.00E-03 Volt</text><rect x="925.2" y="280.3" width="290.3" height="81.7" fill="#ffffff"/><line x1="962.55" y1="281.3" x2="962.55" y2="361" stroke="#bdbdbd" stroke-width="0.7" stroke-dasharray="1.2,2.2"/><line x1="998.4" y1="281.3" x2="998.4" y2="361" stroke="#bdbdbd" stroke-width="0.7" stroke-dasharray="1.2,2.2"/><line x1="1034.25" y1="281.3" x2="1034.25" y2="361" stroke="#bdbdbd" stroke-width="0.7" stroke-dasharray="1.2,2.2"/><line x1="1070.1" y1="281.3" x2="1070.1" y2="361" stroke="#bdbdbd" stroke-width="0.7" stroke-dasharray="1.2,2.2"/><line x1="1105.95" y1="281.3" x2="1105.95" y2="361" stroke="#bdbdbd" stroke-width="0.7" stroke-dasharray="1.2,2.2"/><line x1="1141.8" y1="281.3" x2="1141.8" y2="361" stroke="#bdbdbd" stroke-width="0.7" stroke-dasharray="1.2,2.2"/><line x1="1177.65" y1="281.3" x2="1177.65" y2="361" stroke="#bdbdbd" stroke-width="0.7" stroke-dasharray="1.2,2.2"/><line x1="1213.5" y1="281.3" x2="1213.5" y2="361" stroke="#bdbdbd" stroke-width="0.7" stroke-dasharray="1.2,2.2"/><line x1="926.2" y1="300.7" x2="1214.5" y2="300.7" stroke="#bdbdbd" stroke-width="0.7" stroke-dasharray="1.2,2.2"/><line x1="926.2" y1="320.5" x2="1214.5" y2="320.5" stroke="#bdbdbd" stroke-width="0.7" stroke-dasharray="1.2,2.2"/><line x1="926.2" y1="340.2" x2="1214.5" y2="340.2" stroke="#bdbdbd" stroke-width="0.7" stroke-dasharray="1.2,2.2"/><polyline points="925.6,360.5 926.1,360.6 926.6,360.5 927.1,360.6 927.6,360.6 928.1,360.4 928.6,361.0 929.1,360.6 929.6,360.7 930.1,360.2 930.6,360.9 931.1,358.3 931.6,359.2 932.1,359.6 932.6,360.1 933.1,360.2 933.6,360.2 934.1,360.8 934.6,360.4 935.1,360.2 935.6,360.4 936.1,360.2 936.6,360.7 937.1,360.9 937.6,360.3 938.1,360.2 938.6,361.0 939.1,360.5 939.6,360.4 940.1,360.9 940.6,360.7 941.1,360.4 941.6,360.5 942.1,357.6 942.6,358.4 943.1,359.2 943.6,359.9 944.1,360.0 944.6,360.3 945.1,360.4 945.6,360.2 946.1,360.6 946.6,360.2 947.1,360.6 947.6,360.5 948.1,360.3 948.6,360.5 949.1,360.2 949.6,360.5 950.1,360.7 950.6,360.8 951.1,352.1 951.6,351.6 952.1,353.2 952.6,355.2 953.1,357.5 953.6,355.4 954.1,357.1 954.6,357.6 955.1,358.5 955.6,359.4 956.1,359.5 956.6,360.1 957.1,360.3 957.6,360.1 958.1,360.3 958.6,360.2 959.1,360.3 959.6,360.5 960.1,360.8 960.6,360.8 961.1,360.4 961.6,360.7 962.1,360.3 962.6,360.7 963.1,360.6 963.6,360.6 964.1,360.5 964.6,357.6 965.1,358.6 965.6,359.4 966.1,359.7 966.6,360.2 967.1,359.9 967.6,360.4 968.1,360.8 968.6,360.6 969.1,360.4 969.6,360.7 970.1,361.0 970.6,360.8 971.1,360.8 971.6,361.1 972.1,360.6 972.6,360.6 973.1,360.8 973.6,360.5 974.1,360.7 974.6,360.5 975.1,361.0 975.6,360.3 976.1,358.6 976.6,359.1 977.1,359.8 977.6,360.3 978.1,360.0 978.6,360.3 979.1,360.5 979.6,360.7 980.1,360.2 980.6,360.6 981.1,360.6 981.6,360.4 982.1,360.2 982.6,360.8 983.1,360.9 983.6,360.6 984.1,360.6 984.6,360.5 985.1,360.3 985.6,360.2 986.1,360.6 986.6,360.8 987.1,358.2 987.6,358.7 988.1,359.8 988.6,359.8 989.1,360.6 989.6,360.1 990.1,360.2 990.6,360.7 991.1,360.2 991.6,360.6 992.1,360.6 992.6,360.8 993.1,361.1 993.6,360.6 994.1,360.8 994.6,360.9 995.1,360.4 995.6,360.6 996.1,360.9 996.6,360.6 997.1,360.7 997.6,361.0 998.1,357.4 998.6,358.3 999.1,359.8 999.6,359.9 1000.1,360.3 1000.6,360.5 1001.1,360.6 1001.6,360.6 1002.1,360.2 1002.6,360.6 1003.1,360.1 1003.6,360.4 1004.1,361.2 1004.6,360.4 1005.1,360.9 1005.6,360.7 1006.1,360.6 1006.6,360.7 1007.1,360.9 1007.6,360.4 1008.1,360.8 1008.6,360.6 1009.1,360.5 1009.6,358.3 1010.1,359.4 1010.6,359.8 1011.1,360.3 1011.6,360.3 1012.1,360.6 1012.6,360.7 1013.1,360.3 1013.6,360.4 1014.1,360.5 1014.6,360.6 1015.1,361.0 1015.6,360.6 1016.1,360.7 1016.6,360.9 1017.1,360.4 1017.6,360.7 1018.1,360.4 1018.6,360.7 1019.1,360.5 1019.6,360.1 1020.1,360.5 1020.6,357.8 1021.1,358.9 1021.6,359.0 1022.1,359.4 1022.6,360.2 1023.1,360.3 1023.6,360.1 1024.1,360.7 1024.6,361.0 1025.1,360.7 1025.6,360.5 1026.1,360.8 1026.6,360.2 1027.1,360.6 1027.6,360.9 1028.1,360.8 1028.6,360.7 1029.1,360.5 1029.6,360.8 1030.1,360.5 1030.6,360.7 1031.1,360.2 1031.6,360.6 1032.1,358.5 1032.6,359.1 1033.1,359.5 1033.6,360.2 1034.1,360.5 1034.6,360.5 1035.1,360.3 1035.6,360.1 1036.1,360.6 1036.6,360.5 1037.1,360.3 1037.6,360.7 1038.1,360.3 1038.6,361.1 1039.1,359.8 1039.6,360.7 1040.1,361.0 1040.6,360.8 1041.1,360.6 1041.6,361.0 1042.1,360.3 1042.6,360.3 1043.1,358.0 1043.6,358.7 1044.1,359.4 1044.6,359.9 1045.1,359.7 1045.6,360.2 1046.1,360.6 1046.6,361.0 1047.1,360.8 1047.6,360.4 1048.1,360.8 1048.6,360.4 1049.1,360.1 1049.6,360.8 1050.1,360.5 1050.6,360.6 1051.1,360.6 1051.6,360.3 1052.1,360.7 1052.6,360.9 1053.1,360.7 1053.6,360.5 1054.1,357.2 1054.6,358.6 1055.1,359.2 1055.6,359.7 1056.1,360.0 1056.6,360.1 1057.1,360.3 1057.6,360.1 1058.1,360.1 1058.6,360.4 1059.1,360.3 1059.6,360.6 1060.1,360.9 1060.6,360.7 1061.1,360.5 1061.6,360.5 1062.1,360.7 1062.6,360.7 1063.1,360.8 1063.6,360.4 1064.1,360.8 1064.6,361.1 1065.1,360.9 1065.6,358.5 1066.1,359.0 1066.6,359.5 1067.1,360.0 1067.6,360.0 1068.1,360.1 1068.6,360.5 1069.1,360.0 1069.6,360.6 1070.1,360.8 1070.6,360.3 1071.1,360.6 1071.6,360.4 1072.1,361.0 1072.6,360.6 1073.1,360.8 1073.6,360.4 1074.1,360.6 1074.6,360.3 1075.1,360.5 1075.6,360.3 1076.1,360.3 1076.6,358.0 1077.1,358.9 1077.6,359.4 1078.1,359.8 1078.6,360.1 1079.1,360.4 1079.6,360.0 1080.1,360.6 1080.6,360.3 1081.1,360.5 1081.6,360.9 1082.1,360.3 1082.6,361.1 1083.1,360.5 1083.6,360.4 1084.1,360.9 1084.6,360.4 1085.1,360.7 1085.6,360.2 1086.1,360.8 1086.6,360.3 1087.1,360.3 1087.6,361.2 1088.1,358.1 1088.6,359.2 1089.1,360.0 1089.6,360.0 1090.1,360.2 1090.6,359.6 1091.1,360.3 1091.6,360.9 1092.1,360.1 1092.6,360.3 1093.1,360.9 1093.6,360.9 1094.1,360.4 1094.6,360.6 1095.1,360.5 1095.6,360.7 1096.1,360.6 1096.6,360.8 1097.1,360.6 1097.6,360.7 1098.1,360.9 1098.6,360.7 1099.1,357.7 1099.6,358.7 1100.1,359.4 1100.6,360.3 1101.1,359.9 1101.6,360.3 1102.1,359.7 1102.6,360.3 1103.1,360.6 1103.6,360.9 1104.1,360.8 1104.6,360.4 1105.1,361.1 1105.6,360.6 1106.1,360.9 1106.6,360.5 1107.1,361.0 1107.6,360.8 1108.1,360.6 1108.6,360.7 1109.1,360.3 1109.6,360.7 1110.1,357.4 1110.6,358.6 1111.1,359.7 1111.6,359.7 1112.1,359.8 1112.6,359.9 1113.1,360.4 1113.6,360.1 1114.1,360.3 1114.6,360.6 1115.1,360.5 1115.6,360.7 1116.1,360.7 1116.6,360.9 1117.1,360.5 1117.6,360.5 1118.1,360.9 1118.6,361.0 1119.1,360.8 1119.6,360.9 1120.1,360.9 1120.6,360.8 1121.1,360.8 1121.6,358.5 1122.1,359.0 1122.6,359.5 1123.1,360.1 1123.6,360.7 1124.1,360.6 1124.6,360.4 1125.1,360.2 1125.6,360.7 1126.1,360.4 1126.6,360.9 1127.1,360.3 1127.6,360.8 1128.1,360.8 1128.6,360.7 1129.1,361.2 1129.6,360.1 1130.1,360.9 1130.6,360.7 1131.1,360.5 1131.6,360.7 1132.1,360.5 1132.6,357.8 1133.1,358.5 1133.6,359.2 1134.1,360.3 1134.6,360.5 1135.1,360.2 1135.6,360.5 1136.1,360.1 1136.6,360.8 1137.1,360.3 1137.6,360.6 1138.1,361.0 1138.6,360.5 1139.1,360.8 1139.6,360.4 1140.1,360.7 1140.6,360.6 1141.1,360.9 1141.6,360.8 1142.1,360.7 1142.6,360.6 1143.1,360.8 1143.6,360.8 1144.1,357.9 1144.6,359.4 1145.1,359.3 1145.6,360.2 1146.1,360.2 1146.6,360.2 1147.1,360.6 1147.6,360.4 1148.1,360.5 1148.6,360.6 1149.1,360.3 1149.6,360.7 1150.1,360.9 1150.6,360.6 1151.1,360.6 1151.6,360.7 1152.1,360.8 1152.6,360.5 1153.1,360.7 1153.6,361.1 1154.1,360.5 1154.6,360.5 1155.1,357.9 1155.6,359.0 1156.1,359.8 1156.6,360.4 1157.1,360.0 1157.6,360.1 1158.1,360.2 1158.6,360.5 1159.1,360.7 1159.6,360.3 1160.1,360.6 1160.6,360.6 1161.1,360.4 1161.6,360.6 1162.1,360.8 1162.6,360.7 1163.1,360.6 1163.6,360.7 1164.1,360.2 1164.6,360.3 1165.1,360.7 1165.6,360.6 1166.1,357.8 1166.6,358.8 1167.1,359.1 1167.6,359.9 1168.1,359.7 1168.6,360.1 1169.1,360.3 1169.6,360.6 1170.1,360.1 1170.6,360.8 1171.1,360.2 1171.6,360.5 1172.1,360.6 1172.6,361.3 1173.1,360.4 1173.6,360.7 1174.1,360.9 1174.6,360.6 1175.1,360.3 1175.6,360.6 1176.1,360.6 1176.6,360.6 1177.1,360.8 1177.6,357.9 1178.1,358.5 1178.6,359.9 1179.1,359.4 1179.6,360.2 1180.1,360.4 1180.6,360.4 1181.1,360.3 1181.6,360.4 1182.1,360.5 1182.6,360.4 1183.1,360.5 1183.6,361.0 1184.1,360.6 1184.6,360.9 1185.1,360.8 1185.6,360.9 1186.1,360.8 1186.6,361.0 1187.1,360.8 1187.6,360.5 1188.1,360.6 1188.6,358.3 1189.1,358.7 1189.6,359.9 1190.1,359.7 1190.6,360.2 1191.1,360.8 1191.6,360.6 1192.1,360.4 1192.6,360.0 1193.1,360.7 1193.6,360.6 1194.1,361.0 1194.6,360.4 1195.1,360.6 1195.6,360.7 1196.1,360.8 1196.6,360.1 1197.1,360.8 1197.6,360.8 1198.1,360.5 1198.6,360.7 1199.1,360.3 1199.6,360.3 1200.1,358.8 1200.6,359.0 1201.1,359.9 1201.6,359.9 1202.1,360.4 1202.6,360.3 1203.1,360.8 1203.6,360.1 1204.1,360.7 1204.6,361.0 1205.1,360.3 1205.6,360.3 1206.1,360.9 1206.6,360.7 1207.1,360.6 1207.6,360.9 1208.1,360.7 1208.6,360.9 1209.1,360.6 1209.6,360.6 1210.1,360.8 1210.6,360.5 1211.1,358.5 1211.6,359.0 1212.1,359.4 1212.6,359.7 1213.1,359.7 1213.6,360.5 1214.1,360.3 1214.6,360.5 1215.1,360.6" fill="none" stroke="#1f4f8a" stroke-width="0.9" stroke-linejoin="round"/><line x1="930.5" y1="351.69" x2="930.5" y2="360.6" stroke="#8aa8ce" stroke-width="1"/><line x1="930.5" y1="355.25" x2="930.5" y2="360.6" stroke="#245592" stroke-width="1"/><line x1="941.5" y1="352.18" x2="941.5" y2="360.6" stroke="#8aa8ce" stroke-width="1"/><line x1="941.5" y1="355.55" x2="941.5" y2="360.6" stroke="#245592" stroke-width="1"/><line x1="964.5" y1="352.64" x2="964.5" y2="360.6" stroke="#8aa8ce" stroke-width="1"/><line x1="964.5" y1="355.82" x2="964.5" y2="360.6" stroke="#245592" stroke-width="1"/><line x1="975.5" y1="352.6" x2="975.5" y2="360.6" stroke="#8aa8ce" stroke-width="1"/><line x1="975.5" y1="355.8" x2="975.5" y2="360.6" stroke="#245592" stroke-width="1"/><line x1="986.5" y1="352.27" x2="986.5" y2="360.6" stroke="#8aa8ce" stroke-width="1"/><line x1="986.5" y1="355.6" x2="986.5" y2="360.6" stroke="#245592" stroke-width="1"/><line x1="997.5" y1="352.68" x2="997.5" y2="360.6" stroke="#8aa8ce" stroke-width="1"/><line x1="997.5" y1="355.85" x2="997.5" y2="360.6" stroke="#245592" stroke-width="1"/><line x1="1008.5" y1="351.62" x2="1008.5" y2="360.6" stroke="#8aa8ce" stroke-width="1"/><line x1="1008.5" y1="355.21" x2="1008.5" y2="360.6" stroke="#245592" stroke-width="1"/><line x1="1020.5" y1="352.6" x2="1020.5" y2="360.6" stroke="#8aa8ce" stroke-width="1"/><line x1="1020.5" y1="355.8" x2="1020.5" y2="360.6" stroke="#245592" stroke-width="1"/><line x1="1031.5" y1="352.74" x2="1031.5" y2="360.6" stroke="#8aa8ce" stroke-width="1"/><line x1="1031.5" y1="355.88" x2="1031.5" y2="360.6" stroke="#245592" stroke-width="1"/><line x1="1042.5" y1="352.39" x2="1042.5" y2="360.6" stroke="#8aa8ce" stroke-width="1"/><line x1="1042.5" y1="355.67" x2="1042.5" y2="360.6" stroke="#245592" stroke-width="1"/><line x1="1053.5" y1="352.07" x2="1053.5" y2="360.6" stroke="#8aa8ce" stroke-width="1"/><line x1="1053.5" y1="355.48" x2="1053.5" y2="360.6" stroke="#245592" stroke-width="1"/><line x1="1064.5" y1="351.91" x2="1064.5" y2="360.6" stroke="#8aa8ce" stroke-width="1"/><line x1="1064.5" y1="355.39" x2="1064.5" y2="360.6" stroke="#245592" stroke-width="1"/><line x1="1076.5" y1="352.96" x2="1076.5" y2="360.6" stroke="#8aa8ce" stroke-width="1"/><line x1="1076.5" y1="356.01" x2="1076.5" y2="360.6" stroke="#245592" stroke-width="1"/><line x1="1087.5" y1="351.92" x2="1087.5" y2="360.6" stroke="#8aa8ce" stroke-width="1"/><line x1="1087.5" y1="355.39" x2="1087.5" y2="360.6" stroke="#245592" stroke-width="1"/><line x1="1098.5" y1="351.85" x2="1098.5" y2="360.6" stroke="#8aa8ce" stroke-width="1"/><line x1="1098.5" y1="355.35" x2="1098.5" y2="360.6" stroke="#245592" stroke-width="1"/><line x1="1109.5" y1="352.3" x2="1109.5" y2="360.6" stroke="#8aa8ce" stroke-width="1"/><line x1="1109.5" y1="355.62" x2="1109.5" y2="360.6" stroke="#245592" stroke-width="1"/><line x1="1120.5" y1="352.13" x2="1120.5" y2="360.6" stroke="#8aa8ce" stroke-width="1"/><line x1="1120.5" y1="355.52" x2="1120.5" y2="360.6" stroke="#245592" stroke-width="1"/><line x1="1132.5" y1="352.01" x2="1132.5" y2="360.6" stroke="#8aa8ce" stroke-width="1"/><line x1="1132.5" y1="355.44" x2="1132.5" y2="360.6" stroke="#245592" stroke-width="1"/><line x1="1143.5" y1="353.56" x2="1143.5" y2="360.6" stroke="#8aa8ce" stroke-width="1"/><line x1="1143.5" y1="356.38" x2="1143.5" y2="360.6" stroke="#245592" stroke-width="1"/><line x1="1154.5" y1="351.7" x2="1154.5" y2="360.6" stroke="#8aa8ce" stroke-width="1"/><line x1="1154.5" y1="355.26" x2="1154.5" y2="360.6" stroke="#245592" stroke-width="1"/><line x1="1165.5" y1="352.08" x2="1165.5" y2="360.6" stroke="#8aa8ce" stroke-width="1"/><line x1="1165.5" y1="355.49" x2="1165.5" y2="360.6" stroke="#245592" stroke-width="1"/><line x1="1176.5" y1="352.42" x2="1176.5" y2="360.6" stroke="#8aa8ce" stroke-width="1"/><line x1="1176.5" y1="355.69" x2="1176.5" y2="360.6" stroke="#245592" stroke-width="1"/><line x1="1188.5" y1="352.11" x2="1188.5" y2="360.6" stroke="#8aa8ce" stroke-width="1"/><line x1="1188.5" y1="355.5" x2="1188.5" y2="360.6" stroke="#245592" stroke-width="1"/><line x1="1199.5" y1="351.88" x2="1199.5" y2="360.6" stroke="#8aa8ce" stroke-width="1"/><line x1="1199.5" y1="355.37" x2="1199.5" y2="360.6" stroke="#245592" stroke-width="1"/><line x1="1210.5" y1="352.02" x2="1210.5" y2="360.6" stroke="#8aa8ce" stroke-width="1"/><line x1="1210.5" y1="355.45" x2="1210.5" y2="360.6" stroke="#245592" stroke-width="1"/><line x1="950.5" y1="283.7" x2="950.5" y2="360.6" stroke="#8fabd0" stroke-width="1"/><line x1="950.5" y1="325.23" x2="950.5" y2="360.6" stroke="#1f5090" stroke-width="1"/><line x1="951.5" y1="343" x2="951.5" y2="360.6" stroke="#8fabd0" stroke-width="1"/><line x1="951.5" y1="348.28" x2="951.5" y2="360.6" stroke="#1f5090" stroke-width="1"/><line x1="1116.5" y1="331.8" x2="1116.5" y2="360.6" stroke="#8fabd0" stroke-width="1"/><line x1="1116.5" y1="346.2" x2="1116.5" y2="360.6" stroke="#1f5090" stroke-width="1"/><line x1="1117.5" y1="352" x2="1117.5" y2="360.6" stroke="#8fabd0" stroke-width="1"/><line x1="1117.5" y1="355.44" x2="1117.5" y2="360.6" stroke="#1f5090" stroke-width="1"/><rect x="925.2" y="280.3" width="290.3" height="81.7" fill="none" stroke="#7a7a7a" stroke-width="1.3"/><text x="922" y="282.8" font-family="Liberation Sans" font-size="5.2" fill="#333" text-anchor="end" xml:space="preserve">5.6</text><rect x="924" y="280.4" width="1.4" height="1.2" fill="#6060ff"/><text x="922" y="302.5" font-family="Liberation Sans" font-size="5.2" fill="#333" text-anchor="end" xml:space="preserve">4.2</text><rect x="924" y="300.1" width="1.4" height="1.2" fill="#6060ff"/><text x="922" y="322.3" font-family="Liberation Sans" font-size="5.2" fill="#333" text-anchor="end" xml:space="preserve">2.8</text><rect x="924" y="319.9" width="1.4" height="1.2" fill="#6060ff"/><text x="922" y="342" font-family="Liberation Sans" font-size="5.2" fill="#333" text-anchor="end" xml:space="preserve">1.4</text><rect x="924" y="339.6" width="1.4" height="1.2" fill="#6060ff"/><text x="922" y="361.3" font-family="Liberation Sans" font-size="5.2" fill="#333" text-anchor="end" xml:space="preserve">0.0</text><rect x="924" y="358.9" width="1.4" height="1.2" fill="#6060ff"/><text x="926.7" y="369.3" font-family="Liberation Sans" font-size="5.2" fill="#333" text-anchor="middle" xml:space="preserve">0</text><text x="962.55" y="369.3" font-family="Liberation Sans" font-size="5.2" fill="#333" text-anchor="middle" xml:space="preserve">0.1</text><text x="998.4" y="369.3" font-family="Liberation Sans" font-size="5.2" fill="#333" text-anchor="middle" xml:space="preserve">0.2</text><text x="1034.25" y="369.3" font-family="Liberation Sans" font-size="5.2" fill="#333" text-anchor="middle" xml:space="preserve">0.3</text><text x="1070.1" y="369.3" font-family="Liberation Sans" font-size="5.2" fill="#333" text-anchor="middle" xml:space="preserve">0.4</text><text x="1105.95" y="369.3" font-family="Liberation Sans" font-size="5.2" fill="#333" text-anchor="middle" xml:space="preserve">0.5</text><text x="1141.8" y="369.3" font-family="Liberation Sans" font-size="5.2" fill="#333" text-anchor="middle" xml:space="preserve">0.6</text><text x="1177.65" y="369.3" font-family="Liberation Sans" font-size="5.2" fill="#333" text-anchor="middle" xml:space="preserve">0.7</text><text x="1213.5" y="369.3" font-family="Liberation Sans" font-size="5.2" fill="#333" text-anchor="middle" xml:space="preserve">0.8</text><rect x="1216.5" y="311" width="6.5" height="20.5" fill="#ffff00" stroke="#333" stroke-width="1"/><text x="1217.85" y="321.25" font-family="Liberation Sans" font-size="5.2" fill="#2828c8" text-anchor="middle" transform="rotate(90 1217.85 321.25)" xml:space="preserve">Radial</text><rect x="904.5" y="372" width="29.2" height="5.5" fill="#e2e2e2" stroke="#4a4a4a" stroke-width="1" rx="0.7"/><line x1="905.2" y1="373" x2="933" y2="373" stroke="#f8f8f8" stroke-width="0.8"/><text x="919.1" y="376.4" font-family="Liberation Sans" font-size="5.4" fill="#333" text-anchor="middle" xml:space="preserve">Linear</text><rect x="1182.2" y="372" width="32.8" height="5.5" fill="#e2e2e2" stroke="#4a4a4a" stroke-width="1" rx="0.7"/><line x1="1182.9" y1="373" x2="1214.3" y2="373" stroke="#f8f8f8" stroke-width="0.8"/><text x="1198.6" y="376.4" font-family="Liberation Sans" font-size="5.4" fill="#333" text-anchor="middle" xml:space="preserve">Revolutions</text><text x="909" y="321.5" font-family="Liberation Sans" font-size="7" fill="#3c3cff" text-anchor="middle" transform="rotate(-90 909 321.5)" xml:space="preserve">Volts</text><text x="1021.4" y="401.4" font-family="Liberation Sans" font-size="6.4" fill="#222" text-anchor="start" textLength="19.7" lengthAdjust="spacingAndGlyphs" xml:space="preserve">Battery:</text><text x="1044.3" y="401.4" font-family="Liberation Sans" font-size="6.4" fill="#222" text-anchor="start" textLength="8.1" lengthAdjust="spacingAndGlyphs" xml:space="preserve">AC</text><text x="1056.2" y="401.4" font-family="Liberation Sans" font-size="6.4" fill="#222" text-anchor="start" textLength="57.3" lengthAdjust="spacingAndGlyphs" xml:space="preserve">TRIO-DP1-00774: 90%</text><text x="1116.9" y="401.4" font-family="Liberation Sans" font-size="6.4" fill="#222" text-anchor="start" textLength="64.3" lengthAdjust="spacingAndGlyphs" xml:space="preserve">Connected on Bluetooth</text><text x="1187.2" y="401.4" font-family="Liberation Sans" font-size="6.4" fill="#222" text-anchor="start" textLength="25.9" lengthAdjust="spacingAndGlyphs" xml:space="preserve">9/13/2016</text><text x="1218.8" y="401.4" font-family="Liberation Sans" font-size="6.4" fill="#222" text-anchor="start" textLength="22.2" lengthAdjust="spacingAndGlyphs" xml:space="preserve">9:21 AM</text><text x="706.7" y="390" font-family="Liberation Sans" font-size="7.25" fill="#8b1a1a" font-weight="bold" text-anchor="start" xml:space="preserve">Spectra (Orders)</text><text x="1028" y="390" font-family="Liberation Sans" font-size="7.25" fill="#8b1a1a" font-weight="bold" text-anchor="start" xml:space="preserve">Waveforms (Seconds)</text><text x="1238.7" y="79" font-family="Liberation Sans" font-size="6.75" fill="#8b1a1a" font-weight="bold" text-anchor="start" transform="rotate(90 1238.7 79)" xml:space="preserve">Low range</text><text x="1238.7" y="185" font-family="Liberation Sans" font-size="6.75" fill="#8b1a1a" font-weight="bold" text-anchor="start" transform="rotate(90 1238.7 185)" xml:space="preserve">High range</text><text x="1238.7" y="292.6" font-family="Liberation Sans" font-size="6.75" fill="#8b1a1a" font-weight="bold" text-anchor="start" transform="rotate(90 1238.7 292.6)" xml:space="preserve">Demod</text></svg></body></html>
